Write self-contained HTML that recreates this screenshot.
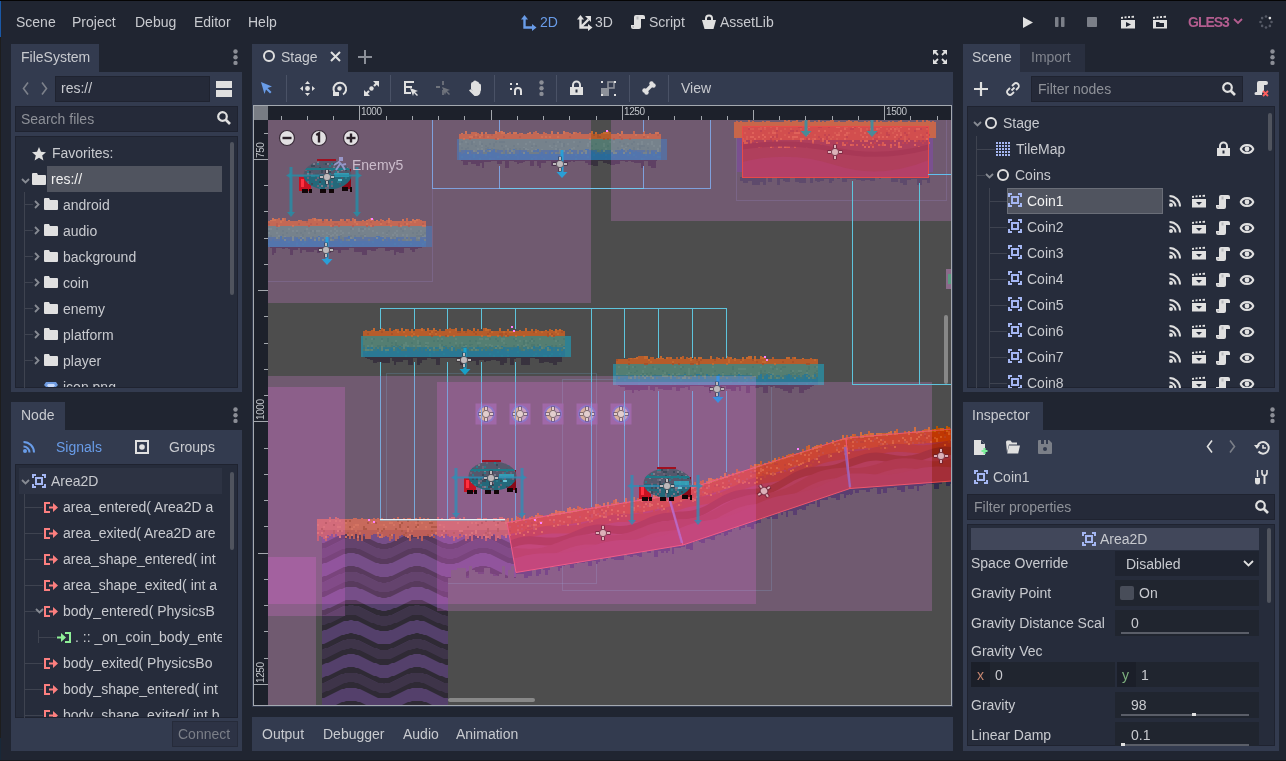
<!DOCTYPE html>
<html><head><meta charset="utf-8">
<style>
*{margin:0;padding:0;box-sizing:border-box}
html,body{width:1286px;height:761px;overflow:hidden;background:#202531;font-family:"Liberation Sans",sans-serif;font-size:14px;color:#c8cacf}
.a{position:absolute}
.t{position:absolute;line-height:14px;white-space:nowrap;will-change:transform}
.clip{position:absolute;overflow:hidden}
.clip .t{}
svg{position:absolute;overflow:visible}
</style></head><body>
<div class="a" style="left:0px;top:0px;width:1286px;height:1px;background:#050505;"></div>
<div class="a" style="left:0px;top:1px;width:1px;height:760px;background:#1d1d1d;"></div>
<div class="a" style="left:0px;top:1px;width:1px;height:36px;background:#1a58a6;"></div>
<div class="a" style="left:0px;top:738px;width:1px;height:23px;background:#182838;"></div>
<div class="a" style="left:0px;top:760px;width:1286px;height:1px;background:#17191e;"></div>
<div class="t" style="left:16px;top:15px;">Scene</div>
<div class="t" style="left:72px;top:15px;">Project</div>
<div class="t" style="left:135px;top:15px;">Debug</div>
<div class="t" style="left:194px;top:15px;">Editor</div>
<div class="t" style="left:248px;top:15px;">Help</div>
<svg style="left:521px;top:15px" width="16" height="15" viewBox="0 0 16 15"><path d="M3.5 3v9.5h9" fill="none" stroke="#699ce8" stroke-width="2.4"/><polygon points="0,4.5 3.5,0 7,4.5" fill="#699ce8"/><polygon points="11,9 15.5,12.5 11,16" fill="#699ce8"/></svg>
<div class="t" style="left:540px;top:15px;color:#699ce8;">2D</div>
<svg style="left:577px;top:15px" width="16" height="15" viewBox="0 0 16 15"><path d="M3.5 3v9.5h9M3.5 12.5l8-8" fill="none" stroke="#e0e0e0" stroke-width="2.4"/><polygon points="0,4.5 3.5,0 7,4.5" fill="#e0e0e0"/><polygon points="11,9 15.5,12.5 11,16" fill="#e0e0e0"/><polygon points="8,1 14,1 14,7" fill="#e0e0e0"/></svg>
<div class="t" style="left:595px;top:15px;">3D</div>
<svg style="left:631px;top:15px" width="14" height="14" viewBox="0 0 14 14"><path d="M5 0H12A2 2 0 0 1 14 2V4H10V12A2 2 0 0 1 8 14H2A2 2 0 0 1 0 12V10H3V2A2 2 0 0 1 5 0Z" fill="#e0e0e0"/><path d="M5.5 1.5h2v3h-2z" fill="#9a9ca2" opacity="0.6"/><path d="M1 11h2v2h-1z" fill="#9a9ca2" opacity="0.5"/></svg>
<div class="t" style="left:649px;top:15px;">Script</div>
<svg style="left:702px;top:15px" width="14" height="14" viewBox="0 0 14 14"><path d="M4 5v-1.5a3 3 0 0 1 6 0v1.5" fill="none" stroke="#e0e0e0" stroke-width="2"/><path d="M0 5h14l-2.5 9h-9z" fill="#e0e0e0"/></svg>
<div class="t" style="left:720px;top:15px;">AssetLib</div>
<svg style="left:1023px;top:17px" width="10" height="11" viewBox="0 0 10 11"><polygon points="0,0 10,5.5 0,11" fill="#e0e0e0"/></svg>
<svg style="left:1055px;top:17px" width="10" height="10" viewBox="0 0 10 10"><rect x="0" y="0" width="3.5" height="10" rx="0.8" fill="#7b7f88"/><rect x="6" y="0" width="3.5" height="10" rx="0.8" fill="#7b7f88"/></svg>
<svg style="left:1087px;top:17px" width="10" height="10" viewBox="0 0 10 10"><rect x="0" y="0" width="10" height="10" rx="0.8" fill="#7b7f88"/></svg>
<svg style="left:1121px;top:16px" width="15" height="13" viewBox="0 0 15 13"><path d="M0 1l2-0.3v2h-2zM3.5 0.5l2-0.3v2h-2zM7 0.2l2-0.2v2h-2zM10.5 0l2.5-0.2v2h-2.5z" fill="#e0e0e0"/><path d="M0 4h14v8.5h-14z" fill="#e0e0e0"/><polygon points="5,6 10,8.5 5,11" fill="#202531"/></svg>
<svg style="left:1153px;top:16px" width="15" height="13" viewBox="0 0 15 13"><path d="M0 1l2-0.3v2h-2zM3.5 0.5l2-0.3v2h-2zM7 0.2l2-0.2v2h-2zM10.5 0l2.5-0.2v2h-2.5z" fill="#e0e0e0"/><path d="M0 4h14v8.5h-14z" fill="#e0e0e0"/><path d="M3 6h3l1 1h4v4h-8z" fill="#202531"/></svg>
<div class="t" style="left:1188px;top:15px;color:#b35d8f;font-weight:bold;letter-spacing:-1px">GLES3</div>
<svg style="left:1233px;top:18px" width="10" height="6" viewBox="0 0 10 6"><polyline points="1,1 5,5 9,1" fill="none" stroke="#b35d8f" stroke-width="1.8"/></svg>
<svg style="left:1259px;top:15px" width="14" height="14" viewBox="0 0 14 14"><circle cx="12.5" cy="7.0" r="1.3" fill="#555a66"/><circle cx="10.890635480419599" cy="10.887538496079513" r="1.3" fill="#555a66"/><circle cx="7.004379796909033" cy="12.49999825612509" r="1.3" fill="#555a66"/><circle cx="3.1155609534899713" cy="10.893729997566377" r="1.3" fill="#555a66"/><circle cx="1.5000069754985326" cy="7.008759591040677" r="1.3" fill="#555a66"/><circle cx="3.1031779544424998" cy="3.118662866323378" r="1.3" fill="#555a66"/><circle cx="6.986860620382451" cy="1.5000156948675514" r="1.3" fill="#555a66"/><circle cx="10.878232759546325" cy="3.1000883775678076" r="1.3" fill="#e0e0e0"/></svg>
<div class="a" style="left:11px;top:44px;width:88px;height:28px;background:#333b4f;"></div>
<div class="t" style="left:21px;top:50px;">FileSystem</div>
<svg style="left:233px;top:49px" width="5" height="16" viewBox="0 0 5 16"><circle cx="2.5" cy="2.5" r="2.2" fill="#8b8e96"/><circle cx="2.5" cy="8.2" r="2.2" fill="#8b8e96"/><circle cx="2.5" cy="13.9" r="2.2" fill="#8b8e96"/></svg>
<div class="a" style="left:11px;top:72px;width:231px;height:320px;background:#333b4f;"></div>
<svg style="left:22px;top:82px" width="7" height="13" viewBox="0 0 7 13"><polyline points="6,0.5 1.5,6.5 6,12.5" fill="none" stroke="#7d818b" stroke-width="1.6"/></svg>
<svg style="left:41px;top:82px" width="7" height="13" viewBox="0 0 7 13"><polyline points="1,0.5 5.5,6.5 1,12.5" fill="none" stroke="#7d818b" stroke-width="1.6"/></svg>
<div class="a" style="left:55px;top:76px;width:155px;height:26px;background:#252a39;border:1px solid #1f2330"></div>
<div class="t" style="left:61px;top:81px;">res://</div>
<svg style="left:216px;top:81px" width="16" height="16" viewBox="0 0 16 16"><rect x="0" y="0" width="16" height="7" fill="#e0e0e0"/><rect x="0" y="9" width="16" height="7" fill="#e0e0e0"/></svg>
<div class="a" style="left:15px;top:106px;width:223px;height:26px;background:#252a39;border:1px solid #1f2330"></div>
<div class="t" style="left:21px;top:112px;color:#8e9198;">Search files</div>
<svg style="left:217px;top:111px" width="14" height="14" viewBox="0 0 14 14"><circle cx="5.5" cy="5.5" r="4.3" fill="none" stroke="#e0e0e0" stroke-width="2.2"/><path d="M8.5 8.5l4.5 4.5" stroke="#e0e0e0" stroke-width="2.6"/></svg>
<div class="a" style="left:15px;top:136px;width:223px;height:252px;background:#262c3b;border:1px solid #1f2330"></div>
<div class="a" style="left:230px;top:142px;width:4px;height:153px;background:#50545e;border-radius:2px"></div>
<div class="a" style="left:24px;top:192px;width:1px;height:196px;background:#3e4350;"></div>
<div class="a" style="left:25px;top:204px;width:8px;height:1px;background:#3e4350;"></div>
<div class="a" style="left:25px;top:230px;width:8px;height:1px;background:#3e4350;"></div>
<div class="a" style="left:25px;top:256px;width:8px;height:1px;background:#3e4350;"></div>
<div class="a" style="left:25px;top:282px;width:8px;height:1px;background:#3e4350;"></div>
<div class="a" style="left:25px;top:308px;width:8px;height:1px;background:#3e4350;"></div>
<div class="a" style="left:25px;top:334px;width:8px;height:1px;background:#3e4350;"></div>
<div class="a" style="left:25px;top:360px;width:8px;height:1px;background:#3e4350;"></div>
<div class="a" style="left:47px;top:166px;width:175px;height:26px;background:#50545f;"></div>
<svg style="left:32px;top:147px" width="14" height="14" viewBox="0 0 14 14"><polygon points="7,0 9,4.8 14,5.2 10.2,8.4 11.4,13.5 7,10.8 2.6,13.5 3.8,8.4 0,5.2 5,4.8" fill="#e0e0e0"/></svg>
<div class="t" style="left:52px;top:146px;">Favorites:</div>
<svg style="left:21px;top:178px" width="9" height="6" viewBox="0 0 9 6"><polyline points="1,1 4.5,4.5 8,1" fill="none" stroke="#878b93" stroke-width="1.8"/></svg>
<svg style="left:32px;top:173px" width="14" height="12" viewBox="0 0 14 12"><path d="M0 1a1 1 0 0 1 1-1h4l1 2h7a1 1 0 0 1 1 1v8a1 1 0 0 1-1 1h-12a1 1 0 0 1-1-1z" fill="#e0e0e0"/></svg>
<div class="t" style="left:51px;top:172px;color:#f0f0f0;">res://</div>
<svg style="left:34px;top:200px" width="6" height="9" viewBox="0 0 6 9"><polyline points="1,1 4.5,4.5 1,8" fill="none" stroke="#878b93" stroke-width="1.8"/></svg>
<svg style="left:44px;top:198px" width="14" height="12" viewBox="0 0 14 12"><path d="M0 1a1 1 0 0 1 1-1h4l1 2h7a1 1 0 0 1 1 1v8a1 1 0 0 1-1 1h-12a1 1 0 0 1-1-1z" fill="#e0e0e0"/></svg>
<div class="t" style="left:63px;top:198px;">android</div>
<svg style="left:34px;top:226px" width="6" height="9" viewBox="0 0 6 9"><polyline points="1,1 4.5,4.5 1,8" fill="none" stroke="#878b93" stroke-width="1.8"/></svg>
<svg style="left:44px;top:224px" width="14" height="12" viewBox="0 0 14 12"><path d="M0 1a1 1 0 0 1 1-1h4l1 2h7a1 1 0 0 1 1 1v8a1 1 0 0 1-1 1h-12a1 1 0 0 1-1-1z" fill="#e0e0e0"/></svg>
<div class="t" style="left:63px;top:224px;">audio</div>
<svg style="left:34px;top:252px" width="6" height="9" viewBox="0 0 6 9"><polyline points="1,1 4.5,4.5 1,8" fill="none" stroke="#878b93" stroke-width="1.8"/></svg>
<svg style="left:44px;top:250px" width="14" height="12" viewBox="0 0 14 12"><path d="M0 1a1 1 0 0 1 1-1h4l1 2h7a1 1 0 0 1 1 1v8a1 1 0 0 1-1 1h-12a1 1 0 0 1-1-1z" fill="#e0e0e0"/></svg>
<div class="t" style="left:63px;top:250px;">background</div>
<svg style="left:34px;top:278px" width="6" height="9" viewBox="0 0 6 9"><polyline points="1,1 4.5,4.5 1,8" fill="none" stroke="#878b93" stroke-width="1.8"/></svg>
<svg style="left:44px;top:276px" width="14" height="12" viewBox="0 0 14 12"><path d="M0 1a1 1 0 0 1 1-1h4l1 2h7a1 1 0 0 1 1 1v8a1 1 0 0 1-1 1h-12a1 1 0 0 1-1-1z" fill="#e0e0e0"/></svg>
<div class="t" style="left:63px;top:276px;">coin</div>
<svg style="left:34px;top:304px" width="6" height="9" viewBox="0 0 6 9"><polyline points="1,1 4.5,4.5 1,8" fill="none" stroke="#878b93" stroke-width="1.8"/></svg>
<svg style="left:44px;top:302px" width="14" height="12" viewBox="0 0 14 12"><path d="M0 1a1 1 0 0 1 1-1h4l1 2h7a1 1 0 0 1 1 1v8a1 1 0 0 1-1 1h-12a1 1 0 0 1-1-1z" fill="#e0e0e0"/></svg>
<div class="t" style="left:63px;top:302px;">enemy</div>
<svg style="left:34px;top:330px" width="6" height="9" viewBox="0 0 6 9"><polyline points="1,1 4.5,4.5 1,8" fill="none" stroke="#878b93" stroke-width="1.8"/></svg>
<svg style="left:44px;top:328px" width="14" height="12" viewBox="0 0 14 12"><path d="M0 1a1 1 0 0 1 1-1h4l1 2h7a1 1 0 0 1 1 1v8a1 1 0 0 1-1 1h-12a1 1 0 0 1-1-1z" fill="#e0e0e0"/></svg>
<div class="t" style="left:63px;top:328px;">platform</div>
<svg style="left:34px;top:356px" width="6" height="9" viewBox="0 0 6 9"><polyline points="1,1 4.5,4.5 1,8" fill="none" stroke="#878b93" stroke-width="1.8"/></svg>
<svg style="left:44px;top:354px" width="14" height="12" viewBox="0 0 14 12"><path d="M0 1a1 1 0 0 1 1-1h4l1 2h7a1 1 0 0 1 1 1v8a1 1 0 0 1-1 1h-12a1 1 0 0 1-1-1z" fill="#e0e0e0"/></svg>
<div class="t" style="left:63px;top:354px;">player</div>
<div class="clip" style="left:16px;top:137px;width:214px;height:250px">
<svg style="left:28px;top:243px" width="14" height="12" viewBox="0 0 14 12"><path d="M2 2h10l2 3-7 7-7-7z" fill="#6f9be0"/><path d="M4 4h6l1 1.5-4 4-4-4z" fill="#c9dafa"/></svg>
<div class="t" style="left:47px;top:243px">icon.png</div>
</div>
<div class="a" style="left:11px;top:402px;width:54px;height:28px;background:#333b4f;"></div>
<div class="t" style="left:21px;top:408px;">Node</div>
<svg style="left:233px;top:407px" width="5" height="16" viewBox="0 0 5 16"><circle cx="2.5" cy="2.5" r="2.2" fill="#8b8e96"/><circle cx="2.5" cy="8.2" r="2.2" fill="#8b8e96"/><circle cx="2.5" cy="13.9" r="2.2" fill="#8b8e96"/></svg>
<div class="a" style="left:11px;top:430px;width:231px;height:321px;background:#333b4f;"></div>
<svg style="left:23px;top:441px" width="12" height="12" viewBox="0 0 12 12"><circle cx="2" cy="10" r="2" fill="#699ce8"/><path d="M0.5 5.5a6 6 0 0 1 6 6" fill="none" stroke="#699ce8" stroke-width="2"/><path d="M0.5 1a10.5 10.5 0 0 1 10.5 10.5" fill="none" stroke="#699ce8" stroke-width="2"/></svg>
<div class="t" style="left:56px;top:440px;color:#699ce8;">Signals</div>
<svg style="left:135px;top:440px" width="14" height="14" viewBox="0 0 14 14"><rect x="1" y="1" width="12" height="12" fill="none" stroke="#e0e0e0" stroke-width="2"/><circle cx="7" cy="7" r="2.8" fill="#e0e0e0"/></svg>
<div class="t" style="left:169px;top:440px;">Groups</div>
<div class="a" style="left:15px;top:464px;width:223px;height:254px;background:#262c3b;border:1px solid #1f2330"></div>
<div class="a" style="left:230px;top:472px;width:4px;height:78px;background:#50545e;border-radius:2px"></div>
<div class="a" style="left:19px;top:468px;width:203px;height:26px;background:#2d3343;"></div>
<svg style="left:21px;top:479px" width="9" height="6" viewBox="0 0 9 6"><polyline points="1,1 4.5,4.5 8,1" fill="none" stroke="#878b93" stroke-width="1.8"/></svg>
<svg style="left:32px;top:474px" width="14" height="14" viewBox="0 0 14 14"><path d="M0 0h4v2h-2v2h-2zM10 0h4v4h-2v-2h-2zM0 10h2v2h2v2h-4zM12 10h2v4h-4v-2h2z" fill="#a5b7f3"/><rect x="4" y="4" width="6" height="6" fill="none" stroke="#a5b7f3" stroke-width="2"/></svg>
<div class="t" style="left:51px;top:474px;">Area2D</div>
<div class="a" style="left:24px;top:494px;width:1px;height:224px;background:#3e4350;"></div>
<div class="clip" style="left:16px;top:465px;width:206px;height:252px">
<div class="a" style="left:9px;top:42px;width:18px;height:1px;background:#3e4350"></div>
<svg style="left:28px;top:37px" width="14" height="11" viewBox="0 0 14 11"><path d="M0 0h6v2h-4v7h4v2h-6z" fill="#fc7f7f"/><path d="M5 4.5h4v-3.5l5 4.5l-5 4.5v-3.5h-4z" fill="#fc7f7f"/></svg>
<div class="t" style="left:47px;top:35px">area_entered( Area2D a</div>
<div class="a" style="left:9px;top:68px;width:18px;height:1px;background:#3e4350"></div>
<svg style="left:28px;top:63px" width="14" height="11" viewBox="0 0 14 11"><path d="M0 0h6v2h-4v7h4v2h-6z" fill="#fc7f7f"/><path d="M5 4.5h4v-3.5l5 4.5l-5 4.5v-3.5h-4z" fill="#fc7f7f"/></svg>
<div class="t" style="left:47px;top:61px">area_exited( Area2D are</div>
<div class="a" style="left:9px;top:94px;width:18px;height:1px;background:#3e4350"></div>
<svg style="left:28px;top:89px" width="14" height="11" viewBox="0 0 14 11"><path d="M0 0h6v2h-4v7h4v2h-6z" fill="#fc7f7f"/><path d="M5 4.5h4v-3.5l5 4.5l-5 4.5v-3.5h-4z" fill="#fc7f7f"/></svg>
<div class="t" style="left:47px;top:87px">area_shape_entered( int</div>
<div class="a" style="left:9px;top:120px;width:18px;height:1px;background:#3e4350"></div>
<svg style="left:28px;top:115px" width="14" height="11" viewBox="0 0 14 11"><path d="M0 0h6v2h-4v7h4v2h-6z" fill="#fc7f7f"/><path d="M5 4.5h4v-3.5l5 4.5l-5 4.5v-3.5h-4z" fill="#fc7f7f"/></svg>
<div class="t" style="left:47px;top:113px">area_shape_exited( int a</div>
<div class="a" style="left:9px;top:146px;width:18px;height:1px;background:#3e4350"></div>
<svg style="left:19px;top:143px" width="9" height="6" viewBox="0 0 9 6"><polyline points="1,1 4.5,4.5 8,1" fill="none" stroke="#878b93" stroke-width="1.8"/></svg>
<svg style="left:28px;top:141px" width="14" height="11" viewBox="0 0 14 11"><path d="M0 0h6v2h-4v7h4v2h-6z" fill="#fc7f7f"/><path d="M5 4.5h4v-3.5l5 4.5l-5 4.5v-3.5h-4z" fill="#fc7f7f"/></svg>
<div class="t" style="left:47px;top:139px">body_entered( PhysicsB</div>
<div class="a" style="left:22px;top:165px;width:1px;height:13px;background:#3e4350"></div>
<div class="a" style="left:22px;top:172px;width:18px;height:1px;background:#3e4350"></div>
<svg style="left:41px;top:167px" width="14" height="11" viewBox="0 0 14 11"><path d="M8 0h6v11h-6v-2h4v-7h-4z" fill="#8eef97"/><path d="M0 4.5h4v-3.5l5 4.5l-5 4.5v-3.5h-4z" fill="#8eef97"/></svg>
<div class="t" style="left:59px;top:165px">. :: _on_coin_body_ente</div>
<div class="a" style="left:9px;top:198px;width:18px;height:1px;background:#3e4350"></div>
<svg style="left:28px;top:193px" width="14" height="11" viewBox="0 0 14 11"><path d="M0 0h6v2h-4v7h4v2h-6z" fill="#fc7f7f"/><path d="M5 4.5h4v-3.5l5 4.5l-5 4.5v-3.5h-4z" fill="#fc7f7f"/></svg>
<div class="t" style="left:47px;top:191px">body_exited( PhysicsBo</div>
<div class="a" style="left:9px;top:224px;width:18px;height:1px;background:#3e4350"></div>
<svg style="left:28px;top:219px" width="14" height="11" viewBox="0 0 14 11"><path d="M0 0h6v2h-4v7h4v2h-6z" fill="#fc7f7f"/><path d="M5 4.5h4v-3.5l5 4.5l-5 4.5v-3.5h-4z" fill="#fc7f7f"/></svg>
<div class="t" style="left:47px;top:217px">body_shape_entered( int</div>
<div class="a" style="left:9px;top:250px;width:18px;height:1px;background:#3e4350"></div>
<svg style="left:28px;top:245px" width="14" height="11" viewBox="0 0 14 11"><path d="M0 0h6v2h-4v7h4v2h-6z" fill="#fc7f7f"/><path d="M5 4.5h4v-3.5l5 4.5l-5 4.5v-3.5h-4z" fill="#fc7f7f"/></svg>
<div class="t" style="left:47px;top:243px">body_shape_exited( int b</div>
</div>
<div class="a" style="left:172px;top:721px;width:66px;height:26px;background:#2d3345;border:1px solid #262b3a"></div>
<div class="t" style="left:178px;top:727px;color:#7b7f88;">Connect</div>
<div class="a" style="left:252px;top:44px;width:96px;height:28px;background:#333b4f;"></div>
<svg style="left:263px;top:50px" width="12" height="12" viewBox="0 0 12 12"><circle cx="6.0" cy="6.0" r="5.0" fill="none" stroke="#e0e0e0" stroke-width="2"/></svg>
<div class="t" style="left:281px;top:50px;">Stage</div>
<svg style="left:330px;top:51px" width="11" height="11" viewBox="0 0 11 11"><path d="M1 1l9 9M10 1l-9 9" stroke="#e0e0e0" stroke-width="2"/></svg>
<svg style="left:358px;top:50px" width="14" height="14" viewBox="0 0 14 14"><path d="M7.0 0v14M0 7.0h14" stroke="#8b8f98" stroke-width="2"/></svg>
<svg style="left:933px;top:50px" width="14" height="14" viewBox="0 0 14 14"><path d="M1 1l4 4M13 1l-4 4M1 13l4-4M13 13l-4-4" stroke="#e0e0e0" stroke-width="1.8"/><path d="M0 0h5l-5 5zM14 0v5l-5-5zM0 14v-5l5 5zM14 14h-5l5-5z" fill="#e0e0e0"/></svg>
<div class="a" style="left:252px;top:72px;width:701px;height:635px;background:#333b4f;"></div>
<svg style="left:261px;top:82px" width="12" height="12" viewBox="0 0 12 12"><polygon points="0,0 11,4.5 6.5,6 10.5,10 9,11.5 5,7.5 3.5,12" fill="#699ce8"/></svg>
<div class="a" style="left:286px;top:75px;width:1px;height:27px;background:#4a5266;"></div>
<div class="a" style="left:390px;top:75px;width:1px;height:27px;background:#4a5266;"></div>
<div class="a" style="left:494px;top:75px;width:1px;height:27px;background:#4a5266;"></div>
<div class="a" style="left:556px;top:75px;width:1px;height:27px;background:#4a5266;"></div>
<div class="a" style="left:629px;top:75px;width:1px;height:27px;background:#4a5266;"></div>
<div class="a" style="left:668px;top:75px;width:1px;height:27px;background:#4a5266;"></div>
<svg style="left:300px;top:81px" width="15" height="15" viewBox="0 0 15 15"><circle cx="7.5" cy="7.5" r="2.4" fill="#e0e0e0"/><polygon points="7.5,0 10,3 5,3" fill="#e0e0e0"/><polygon points="7.5,15 10,12 5,12" fill="#e0e0e0"/><polygon points="0,7.5 3,5 3,10" fill="#e0e0e0"/><polygon points="15,7.5 12,5 12,10" fill="#e0e0e0"/></svg>
<svg style="left:332px;top:81px" width="15" height="15" viewBox="0 0 15 15"><path d="M4.2 13.2A6.3 6.3 0 1 1 11 13.5" fill="none" stroke="#e0e0e0" stroke-width="2"/><circle cx="7.5" cy="7.5" r="2.2" fill="#e0e0e0"/><polygon points="1,11 7,11 7,15 1,15" fill="#e0e0e0"/></svg>
<svg style="left:364px;top:81px" width="15" height="15" viewBox="0 0 15 15"><polygon points="9,0 15,0 15,6" fill="#e0e0e0"/><polygon points="0,9 0,15 6,15" fill="#e0e0e0"/><path d="M13 2l-3 3M2 13l3-3" stroke="#e0e0e0" stroke-width="2.2"/><circle cx="7.5" cy="7.5" r="2.2" fill="#e0e0e0"/></svg>
<svg style="left:404px;top:81px" width="15" height="15" viewBox="0 0 15 15"><path d="M0 0h10v2h-8v3h6v2h-6v4h5v2h-7z" fill="#e0e0e0"/><polygon points="6,7 14,10 11,11 14,14 13,15 10,12 9,15" fill="#e0e0e0"/></svg>
<svg style="left:436px;top:81px" width="15" height="15" viewBox="0 0 15 15"><path d="M7 0v4M0 6h4M7 9v5" stroke="#6f737c" stroke-width="1.8"/><polygon points="6,6 14,9 11,10 14,13 13,14 10,11 9,14" fill="#6f737c"/></svg>
<svg style="left:468px;top:81px" width="14" height="15" viewBox="0 0 14 15"><path d="M4 8V3a1 1 0 0 1 2 0v5M6 7V1.5a1 1 0 0 1 2 0V7M8 7V2.5a1 1 0 0 1 2 0V7.5M10 8V4.5a1 1 0 0 1 2 0V9" stroke="#e0e0e0" stroke-width="2" fill="none" stroke-linecap="round"/><path d="M3 7h9.5v3.5a4.5 4.5 0 0 1-4.5 4.5h-1.5l-5.5-5.5 1.2-1.2 2.3 1.2z" fill="#e0e0e0"/></svg>
<svg style="left:510px;top:83px" width="13" height="12" viewBox="0 0 13 12"><rect x="0" y="0" width="2" height="2" fill="#e0e0e0"/><rect x="6" y="0" width="2" height="2" fill="#e0e0e0"/><rect x="0" y="5" width="2" height="2" fill="#e0e0e0"/><path d="M5 12v-4a3 3 0 0 1 6 0v4" fill="none" stroke="#e0e0e0" stroke-width="2"/></svg>
<svg style="left:539px;top:80px" width="5" height="16" viewBox="0 0 5 16"><circle cx="2.5" cy="2.5" r="2.2" fill="#8b8e96"/><circle cx="2.5" cy="8.2" r="2.2" fill="#8b8e96"/><circle cx="2.5" cy="13.9" r="2.2" fill="#8b8e96"/></svg>
<svg style="left:570px;top:81px" width="13" height="14" viewBox="0 0 13 14"><path d="M3 6.5v-2.5a3.5 3.5 0 0 1 7 0v2.5" fill="none" stroke="#e0e0e0" stroke-width="2"/><path d="M0 6h13v8h-13z" fill="#e0e0e0"/><rect x="5.5" y="8.5" width="2" height="3" fill="#262c3b"/></svg>
<svg style="left:601px;top:81px" width="15" height="15" viewBox="0 0 15 15"><rect x="0" y="7" width="8" height="8" fill="#8e929a"/><rect x="7" y="1" width="6" height="6" fill="none" stroke="#8e929a" stroke-width="1.6"/><rect x="0" y="0" width="2" height="2" fill="#e0e0e0"/><rect x="13" y="0" width="2" height="2" fill="#e0e0e0"/><rect x="0" y="13" width="2" height="2" fill="#e0e0e0"/><rect x="13" y="13" width="2" height="2" fill="#e0e0e0"/></svg>
<svg style="left:642px;top:81px" width="14" height="14" viewBox="0 0 14 14"><path d="M3.5 10.5l7-7" stroke="#e0e0e0" stroke-width="3.2"/><circle cx="2.5" cy="9.5" r="2.2" fill="#e0e0e0"/><circle cx="4.5" cy="11.5" r="2.2" fill="#e0e0e0"/><circle cx="9.5" cy="2.5" r="2.2" fill="#e0e0e0"/><circle cx="11.5" cy="4.5" r="2.2" fill="#e0e0e0"/></svg>
<div class="t" style="left:681px;top:81px;">View</div>
<div id="vp" class="a" style="left:253px;top:105px;width:699px;height:601px;background:#4d4d4d;overflow:hidden;isolation:isolate"><div class="a" style="left:-253px;top:-105px;width:1286px;height:761px">
<div class="a" style="left:253px;top:105px;width:699px;height:601px;background:#4d4d4d;"></div>
<div class="a" style="left:250px;top:100px;width:183px;height:182px;border:1px solid rgba(120,120,170,0.3)"></div>
<div class="a" style="left:736px;top:100px;width:211px;height:101px;border:1px solid rgba(120,120,170,0.3)"></div>
<div class="a" style="left:386px;top:373px;width:211px;height:211px;border:1px solid rgba(100,150,180,0.3)"></div>
<div class="a" style="left:562px;top:379px;width:210px;height:212px;border:1px solid rgba(100,150,180,0.3)"></div>
<svg style="left:320px;top:520px;" width="200" height="190" viewBox="320 520 200 190"><clipPath id="dall"><polygon points="322.0,530.0 516.0,530.0 517.0,578.0 514.0,578.0 514.0,566.0 511.0,566.0 511.0,570.0 508.0,570.0 508.0,578.0 505.0,578.0 505.0,566.0 502.0,566.0 502.0,574.0 499.0,574.0 499.0,576.0 496.0,576.0 496.0,576.0 493.0,576.0 493.0,574.0 490.0,574.0 490.0,568.0 487.0,568.0 487.0,568.0 484.0,568.0 484.0,574.0 481.0,574.0 481.0,574.0 478.0,574.0 478.0,572.0 475.0,572.0 475.0,570.0 472.0,570.0 472.0,566.0 469.0,566.0 469.0,578.0 466.0,578.0 466.0,568.0 463.0,568.0 463.0,568.0 460.0,568.0 460.0,568.0 457.0,568.0 457.0,570.0 454.0,570.0 454.0,570.0 451.0,570.0 451.0,578.0 448.0,578.0 448.0,706.0 322.0,706.0"/></clipPath><g clip-path="url(#dall)"><rect x="322" y="520" width="194" height="200" fill="#54406b"/><polygon points="322.0,510.0 324.0,509.0 326.0,508.0 328.0,508.0 330.0,507.0 332.0,506.0 334.0,505.0 336.0,504.0 338.0,503.0 340.0,502.0 342.0,501.0 344.0,500.0 346.0,500.0 348.0,499.0 350.0,499.0 352.0,499.0 354.0,499.0 356.0,500.0 358.0,500.0 360.0,501.0 362.0,502.0 364.0,503.0 366.0,504.0 368.0,505.0 370.0,506.0 372.0,507.0 374.0,508.0 376.0,508.0 378.0,509.0 380.0,510.0 382.0,510.0 384.0,510.0 386.0,510.0 388.0,510.0 390.0,509.0 392.0,508.0 394.0,508.0 396.0,507.0 398.0,506.0 400.0,505.0 402.0,504.0 404.0,503.0 406.0,502.0 408.0,501.0 410.0,500.0 412.0,500.0 414.0,499.0 416.0,499.0 418.0,499.0 420.0,499.0 422.0,500.0 424.0,500.0 426.0,501.0 428.0,502.0 430.0,503.0 432.0,504.0 434.0,505.0 436.0,506.0 438.0,507.0 440.0,508.0 442.0,508.0 444.0,509.0 446.0,510.0 448.0,510.0 450.0,510.0 452.0,510.0 454.0,510.0 456.0,509.0 458.0,508.0 460.0,508.0 462.0,507.0 464.0,506.0 466.0,505.0 468.0,504.0 470.0,503.0 472.0,502.0 474.0,501.0 476.0,500.0 478.0,500.0 480.0,499.0 482.0,499.0 484.0,499.0 486.0,499.0 488.0,500.0 490.0,500.0 492.0,501.0 494.0,502.0 496.0,503.0 498.0,504.0 500.0,505.0 502.0,506.0 504.0,507.0 506.0,508.0 508.0,508.0 510.0,509.0 512.0,510.0 514.0,510.0 516.0,510.0 516.0,516.0 514.0,515.0 512.0,515.0 510.0,515.0 508.0,514.0 506.0,513.0 504.0,512.0 502.0,511.0 500.0,510.0 498.0,509.0 496.0,508.0 494.0,507.0 492.0,506.0 490.0,506.0 488.0,505.0 486.0,505.0 484.0,505.0 482.0,505.0 480.0,505.0 478.0,505.0 476.0,506.0 474.0,506.0 472.0,507.0 470.0,508.0 468.0,509.0 466.0,510.0 464.0,511.0 462.0,512.0 460.0,513.0 458.0,514.0 456.0,515.0 454.0,515.0 452.0,515.0 450.0,516.0 448.0,515.0 446.0,515.0 444.0,515.0 442.0,514.0 440.0,513.0 438.0,512.0 436.0,511.0 434.0,510.0 432.0,509.0 430.0,508.0 428.0,507.0 426.0,506.0 424.0,506.0 422.0,505.0 420.0,505.0 418.0,505.0 416.0,505.0 414.0,505.0 412.0,505.0 410.0,506.0 408.0,506.0 406.0,507.0 404.0,508.0 402.0,509.0 400.0,510.0 398.0,511.0 396.0,512.0 394.0,513.0 392.0,514.0 390.0,515.0 388.0,515.0 386.0,515.0 384.0,516.0 382.0,515.0 380.0,515.0 378.0,515.0 376.0,514.0 374.0,513.0 372.0,512.0 370.0,511.0 368.0,510.0 366.0,509.0 364.0,508.0 362.0,507.0 360.0,506.0 358.0,506.0 356.0,505.0 354.0,505.0 352.0,505.0 350.0,505.0 348.0,505.0 346.0,505.0 344.0,506.0 342.0,506.0 340.0,507.0 338.0,508.0 336.0,509.0 334.0,510.0 332.0,511.0 330.0,512.0 328.0,513.0 326.0,514.0 324.0,515.0 322.0,515.0" fill="#2f2a35"/><polygon points="322.0,515.0 324.0,515.0 326.0,514.0 328.0,513.0 330.0,512.0 332.0,511.0 334.0,510.0 336.0,509.0 338.0,508.0 340.0,507.0 342.0,506.0 344.0,506.0 346.0,505.0 348.0,505.0 350.0,505.0 352.0,505.0 354.0,505.0 356.0,505.0 358.0,506.0 360.0,506.0 362.0,507.0 364.0,508.0 366.0,509.0 368.0,510.0 370.0,511.0 372.0,512.0 374.0,513.0 376.0,514.0 378.0,515.0 380.0,515.0 382.0,515.0 384.0,516.0 386.0,515.0 388.0,515.0 390.0,515.0 392.0,514.0 394.0,513.0 396.0,512.0 398.0,511.0 400.0,510.0 402.0,509.0 404.0,508.0 406.0,507.0 408.0,506.0 410.0,506.0 412.0,505.0 414.0,505.0 416.0,505.0 418.0,505.0 420.0,505.0 422.0,505.0 424.0,506.0 426.0,506.0 428.0,507.0 430.0,508.0 432.0,509.0 434.0,510.0 436.0,511.0 438.0,512.0 440.0,513.0 442.0,514.0 444.0,515.0 446.0,515.0 448.0,515.0 450.0,516.0 452.0,515.0 454.0,515.0 456.0,515.0 458.0,514.0 460.0,513.0 462.0,512.0 464.0,511.0 466.0,510.0 468.0,509.0 470.0,508.0 472.0,507.0 474.0,506.0 476.0,506.0 478.0,505.0 480.0,505.0 482.0,505.0 484.0,505.0 486.0,505.0 488.0,505.0 490.0,506.0 492.0,506.0 494.0,507.0 496.0,508.0 498.0,509.0 500.0,510.0 502.0,511.0 504.0,512.0 506.0,513.0 508.0,514.0 510.0,515.0 512.0,515.0 514.0,515.0 516.0,516.0 516.0,525.0 514.0,525.0 512.0,525.0 510.0,524.0 508.0,523.0 506.0,523.0 504.0,522.0 502.0,521.0 500.0,520.0 498.0,519.0 496.0,518.0 494.0,517.0 492.0,516.0 490.0,515.0 488.0,515.0 486.0,514.0 484.0,514.0 482.0,514.0 480.0,514.0 478.0,515.0 476.0,515.0 474.0,516.0 472.0,517.0 470.0,518.0 468.0,519.0 466.0,520.0 464.0,521.0 462.0,522.0 460.0,523.0 458.0,523.0 456.0,524.0 454.0,525.0 452.0,525.0 450.0,525.0 448.0,525.0 446.0,525.0 444.0,524.0 442.0,523.0 440.0,523.0 438.0,522.0 436.0,521.0 434.0,520.0 432.0,519.0 430.0,518.0 428.0,517.0 426.0,516.0 424.0,515.0 422.0,515.0 420.0,514.0 418.0,514.0 416.0,514.0 414.0,514.0 412.0,515.0 410.0,515.0 408.0,516.0 406.0,517.0 404.0,518.0 402.0,519.0 400.0,520.0 398.0,521.0 396.0,522.0 394.0,523.0 392.0,523.0 390.0,524.0 388.0,525.0 386.0,525.0 384.0,525.0 382.0,525.0 380.0,525.0 378.0,524.0 376.0,523.0 374.0,523.0 372.0,522.0 370.0,521.0 368.0,520.0 366.0,519.0 364.0,518.0 362.0,517.0 360.0,516.0 358.0,515.0 356.0,515.0 354.0,514.0 352.0,514.0 350.0,514.0 348.0,514.0 346.0,515.0 344.0,515.0 342.0,516.0 340.0,517.0 338.0,518.0 336.0,519.0 334.0,520.0 332.0,521.0 330.0,522.0 328.0,523.0 326.0,523.0 324.0,524.0 322.0,525.0" fill="#3e3449"/><polygon points="322.0,525.0 324.0,524.0 326.0,523.0 328.0,523.0 330.0,522.0 332.0,521.0 334.0,520.0 336.0,519.0 338.0,518.0 340.0,517.0 342.0,516.0 344.0,515.0 346.0,515.0 348.0,514.0 350.0,514.0 352.0,514.0 354.0,514.0 356.0,515.0 358.0,515.0 360.0,516.0 362.0,517.0 364.0,518.0 366.0,519.0 368.0,520.0 370.0,521.0 372.0,522.0 374.0,523.0 376.0,523.0 378.0,524.0 380.0,525.0 382.0,525.0 384.0,525.0 386.0,525.0 388.0,525.0 390.0,524.0 392.0,523.0 394.0,523.0 396.0,522.0 398.0,521.0 400.0,520.0 402.0,519.0 404.0,518.0 406.0,517.0 408.0,516.0 410.0,515.0 412.0,515.0 414.0,514.0 416.0,514.0 418.0,514.0 420.0,514.0 422.0,515.0 424.0,515.0 426.0,516.0 428.0,517.0 430.0,518.0 432.0,519.0 434.0,520.0 436.0,521.0 438.0,522.0 440.0,523.0 442.0,523.0 444.0,524.0 446.0,525.0 448.0,525.0 450.0,525.0 452.0,525.0 454.0,525.0 456.0,524.0 458.0,523.0 460.0,523.0 462.0,522.0 464.0,521.0 466.0,520.0 468.0,519.0 470.0,518.0 472.0,517.0 474.0,516.0 476.0,515.0 478.0,515.0 480.0,514.0 482.0,514.0 484.0,514.0 486.0,514.0 488.0,515.0 490.0,515.0 492.0,516.0 494.0,517.0 496.0,518.0 498.0,519.0 500.0,520.0 502.0,521.0 504.0,522.0 506.0,523.0 508.0,523.0 510.0,524.0 512.0,525.0 514.0,525.0 516.0,525.0 516.0,530.0 514.0,530.0 512.0,530.0 510.0,530.0 508.0,529.0 506.0,528.0 504.0,527.0 502.0,526.0 500.0,525.0 498.0,524.0 496.0,523.0 494.0,522.0 492.0,521.0 490.0,521.0 488.0,520.0 486.0,520.0 484.0,520.0 482.0,520.0 480.0,520.0 478.0,520.0 476.0,521.0 474.0,521.0 472.0,522.0 470.0,523.0 468.0,524.0 466.0,525.0 464.0,526.0 462.0,527.0 460.0,528.0 458.0,529.0 456.0,530.0 454.0,530.0 452.0,530.0 450.0,530.0 448.0,530.0 446.0,530.0 444.0,530.0 442.0,529.0 440.0,528.0 438.0,527.0 436.0,526.0 434.0,525.0 432.0,524.0 430.0,523.0 428.0,522.0 426.0,521.0 424.0,521.0 422.0,520.0 420.0,520.0 418.0,520.0 416.0,520.0 414.0,520.0 412.0,520.0 410.0,521.0 408.0,521.0 406.0,522.0 404.0,523.0 402.0,524.0 400.0,525.0 398.0,526.0 396.0,527.0 394.0,528.0 392.0,529.0 390.0,530.0 388.0,530.0 386.0,530.0 384.0,530.0 382.0,530.0 380.0,530.0 378.0,530.0 376.0,529.0 374.0,528.0 372.0,527.0 370.0,526.0 368.0,525.0 366.0,524.0 364.0,523.0 362.0,522.0 360.0,521.0 358.0,521.0 356.0,520.0 354.0,520.0 352.0,520.0 350.0,520.0 348.0,520.0 346.0,520.0 344.0,521.0 342.0,521.0 340.0,522.0 338.0,523.0 336.0,524.0 334.0,525.0 332.0,526.0 330.0,527.0 328.0,528.0 326.0,529.0 324.0,530.0 322.0,530.0" fill="#2f2a35"/><polygon points="322.0,543.0 324.0,543.0 326.0,542.0 328.0,541.0 330.0,540.0 332.0,539.0 334.0,538.0 336.0,537.0 338.0,536.0 340.0,535.0 342.0,534.0 344.0,534.0 346.0,533.0 348.0,533.0 350.0,533.0 352.0,533.0 354.0,533.0 356.0,533.0 358.0,534.0 360.0,534.0 362.0,535.0 364.0,536.0 366.0,537.0 368.0,538.0 370.0,539.0 372.0,540.0 374.0,541.0 376.0,542.0 378.0,543.0 380.0,543.0 382.0,544.0 384.0,544.0 386.0,544.0 388.0,543.0 390.0,543.0 392.0,542.0 394.0,541.0 396.0,540.0 398.0,539.0 400.0,538.0 402.0,537.0 404.0,536.0 406.0,535.0 408.0,534.0 410.0,534.0 412.0,533.0 414.0,533.0 416.0,533.0 418.0,533.0 420.0,533.0 422.0,533.0 424.0,534.0 426.0,534.0 428.0,535.0 430.0,536.0 432.0,537.0 434.0,538.0 436.0,539.0 438.0,540.0 440.0,541.0 442.0,542.0 444.0,543.0 446.0,543.0 448.0,544.0 450.0,544.0 452.0,544.0 454.0,543.0 456.0,543.0 458.0,542.0 460.0,541.0 462.0,540.0 464.0,539.0 466.0,538.0 468.0,537.0 470.0,536.0 472.0,535.0 474.0,534.0 476.0,534.0 478.0,533.0 480.0,533.0 482.0,533.0 484.0,533.0 486.0,533.0 488.0,533.0 490.0,534.0 492.0,534.0 494.0,535.0 496.0,536.0 498.0,537.0 500.0,538.0 502.0,539.0 504.0,540.0 506.0,541.0 508.0,542.0 510.0,543.0 512.0,543.0 514.0,544.0 516.0,544.0 516.0,549.0 514.0,549.0 512.0,549.0 510.0,548.0 508.0,548.0 506.0,547.0 504.0,546.0 502.0,545.0 500.0,544.0 498.0,543.0 496.0,542.0 494.0,541.0 492.0,540.0 490.0,539.0 488.0,539.0 486.0,538.0 484.0,538.0 482.0,538.0 480.0,538.0 478.0,539.0 476.0,539.0 474.0,540.0 472.0,541.0 470.0,542.0 468.0,543.0 466.0,544.0 464.0,545.0 462.0,546.0 460.0,547.0 458.0,548.0 456.0,548.0 454.0,549.0 452.0,549.0 450.0,549.0 448.0,549.0 446.0,549.0 444.0,548.0 442.0,548.0 440.0,547.0 438.0,546.0 436.0,545.0 434.0,544.0 432.0,543.0 430.0,542.0 428.0,541.0 426.0,540.0 424.0,539.0 422.0,539.0 420.0,538.0 418.0,538.0 416.0,538.0 414.0,538.0 412.0,539.0 410.0,539.0 408.0,540.0 406.0,541.0 404.0,542.0 402.0,543.0 400.0,544.0 398.0,545.0 396.0,546.0 394.0,547.0 392.0,548.0 390.0,548.0 388.0,549.0 386.0,549.0 384.0,549.0 382.0,549.0 380.0,549.0 378.0,548.0 376.0,548.0 374.0,547.0 372.0,546.0 370.0,545.0 368.0,544.0 366.0,543.0 364.0,542.0 362.0,541.0 360.0,540.0 358.0,539.0 356.0,539.0 354.0,538.0 352.0,538.0 350.0,538.0 348.0,538.0 346.0,539.0 344.0,539.0 342.0,540.0 340.0,541.0 338.0,542.0 336.0,543.0 334.0,544.0 332.0,545.0 330.0,546.0 328.0,547.0 326.0,548.0 324.0,548.0 322.0,549.0" fill="#2f2a35"/><polygon points="322.0,549.0 324.0,548.0 326.0,548.0 328.0,547.0 330.0,546.0 332.0,545.0 334.0,544.0 336.0,543.0 338.0,542.0 340.0,541.0 342.0,540.0 344.0,539.0 346.0,539.0 348.0,538.0 350.0,538.0 352.0,538.0 354.0,538.0 356.0,539.0 358.0,539.0 360.0,540.0 362.0,541.0 364.0,542.0 366.0,543.0 368.0,544.0 370.0,545.0 372.0,546.0 374.0,547.0 376.0,548.0 378.0,548.0 380.0,549.0 382.0,549.0 384.0,549.0 386.0,549.0 388.0,549.0 390.0,548.0 392.0,548.0 394.0,547.0 396.0,546.0 398.0,545.0 400.0,544.0 402.0,543.0 404.0,542.0 406.0,541.0 408.0,540.0 410.0,539.0 412.0,539.0 414.0,538.0 416.0,538.0 418.0,538.0 420.0,538.0 422.0,539.0 424.0,539.0 426.0,540.0 428.0,541.0 430.0,542.0 432.0,543.0 434.0,544.0 436.0,545.0 438.0,546.0 440.0,547.0 442.0,548.0 444.0,548.0 446.0,549.0 448.0,549.0 450.0,549.0 452.0,549.0 454.0,549.0 456.0,548.0 458.0,548.0 460.0,547.0 462.0,546.0 464.0,545.0 466.0,544.0 468.0,543.0 470.0,542.0 472.0,541.0 474.0,540.0 476.0,539.0 478.0,539.0 480.0,538.0 482.0,538.0 484.0,538.0 486.0,538.0 488.0,539.0 490.0,539.0 492.0,540.0 494.0,541.0 496.0,542.0 498.0,543.0 500.0,544.0 502.0,545.0 504.0,546.0 506.0,547.0 508.0,548.0 510.0,548.0 512.0,549.0 514.0,549.0 516.0,549.0 516.0,559.0 514.0,559.0 512.0,558.0 510.0,558.0 508.0,557.0 506.0,556.0 504.0,555.0 502.0,554.0 500.0,553.0 498.0,552.0 496.0,551.0 494.0,550.0 492.0,549.0 490.0,549.0 488.0,548.0 486.0,548.0 484.0,548.0 482.0,548.0 480.0,548.0 478.0,548.0 476.0,549.0 474.0,549.0 472.0,550.0 470.0,551.0 468.0,552.0 466.0,553.0 464.0,554.0 462.0,555.0 460.0,556.0 458.0,557.0 456.0,558.0 454.0,558.0 452.0,559.0 450.0,559.0 448.0,559.0 446.0,558.0 444.0,558.0 442.0,557.0 440.0,556.0 438.0,555.0 436.0,554.0 434.0,553.0 432.0,552.0 430.0,551.0 428.0,550.0 426.0,549.0 424.0,549.0 422.0,548.0 420.0,548.0 418.0,548.0 416.0,548.0 414.0,548.0 412.0,548.0 410.0,549.0 408.0,549.0 406.0,550.0 404.0,551.0 402.0,552.0 400.0,553.0 398.0,554.0 396.0,555.0 394.0,556.0 392.0,557.0 390.0,558.0 388.0,558.0 386.0,559.0 384.0,559.0 382.0,559.0 380.0,558.0 378.0,558.0 376.0,557.0 374.0,556.0 372.0,555.0 370.0,554.0 368.0,553.0 366.0,552.0 364.0,551.0 362.0,550.0 360.0,549.0 358.0,549.0 356.0,548.0 354.0,548.0 352.0,548.0 350.0,548.0 348.0,548.0 346.0,548.0 344.0,549.0 342.0,549.0 340.0,550.0 338.0,551.0 336.0,552.0 334.0,553.0 332.0,554.0 330.0,555.0 328.0,556.0 326.0,557.0 324.0,558.0 322.0,558.0" fill="#3e3449"/><polygon points="322.0,558.0 324.0,558.0 326.0,557.0 328.0,556.0 330.0,555.0 332.0,554.0 334.0,553.0 336.0,552.0 338.0,551.0 340.0,550.0 342.0,549.0 344.0,549.0 346.0,548.0 348.0,548.0 350.0,548.0 352.0,548.0 354.0,548.0 356.0,548.0 358.0,549.0 360.0,549.0 362.0,550.0 364.0,551.0 366.0,552.0 368.0,553.0 370.0,554.0 372.0,555.0 374.0,556.0 376.0,557.0 378.0,558.0 380.0,558.0 382.0,559.0 384.0,559.0 386.0,559.0 388.0,558.0 390.0,558.0 392.0,557.0 394.0,556.0 396.0,555.0 398.0,554.0 400.0,553.0 402.0,552.0 404.0,551.0 406.0,550.0 408.0,549.0 410.0,549.0 412.0,548.0 414.0,548.0 416.0,548.0 418.0,548.0 420.0,548.0 422.0,548.0 424.0,549.0 426.0,549.0 428.0,550.0 430.0,551.0 432.0,552.0 434.0,553.0 436.0,554.0 438.0,555.0 440.0,556.0 442.0,557.0 444.0,558.0 446.0,558.0 448.0,559.0 450.0,559.0 452.0,559.0 454.0,558.0 456.0,558.0 458.0,557.0 460.0,556.0 462.0,555.0 464.0,554.0 466.0,553.0 468.0,552.0 470.0,551.0 472.0,550.0 474.0,549.0 476.0,549.0 478.0,548.0 480.0,548.0 482.0,548.0 484.0,548.0 486.0,548.0 488.0,548.0 490.0,549.0 492.0,549.0 494.0,550.0 496.0,551.0 498.0,552.0 500.0,553.0 502.0,554.0 504.0,555.0 506.0,556.0 508.0,557.0 510.0,558.0 512.0,558.0 514.0,559.0 516.0,559.0 516.0,564.0 514.0,564.0 512.0,564.0 510.0,563.0 508.0,563.0 506.0,562.0 504.0,561.0 502.0,560.0 500.0,559.0 498.0,558.0 496.0,557.0 494.0,556.0 492.0,555.0 490.0,554.0 488.0,554.0 486.0,553.0 484.0,553.0 482.0,553.0 480.0,553.0 478.0,554.0 476.0,554.0 474.0,555.0 472.0,556.0 470.0,557.0 468.0,558.0 466.0,559.0 464.0,560.0 462.0,561.0 460.0,562.0 458.0,563.0 456.0,563.0 454.0,564.0 452.0,564.0 450.0,564.0 448.0,564.0 446.0,564.0 444.0,563.0 442.0,563.0 440.0,562.0 438.0,561.0 436.0,560.0 434.0,559.0 432.0,558.0 430.0,557.0 428.0,556.0 426.0,555.0 424.0,554.0 422.0,554.0 420.0,553.0 418.0,553.0 416.0,553.0 414.0,553.0 412.0,554.0 410.0,554.0 408.0,555.0 406.0,556.0 404.0,557.0 402.0,558.0 400.0,559.0 398.0,560.0 396.0,561.0 394.0,562.0 392.0,563.0 390.0,563.0 388.0,564.0 386.0,564.0 384.0,564.0 382.0,564.0 380.0,564.0 378.0,563.0 376.0,563.0 374.0,562.0 372.0,561.0 370.0,560.0 368.0,559.0 366.0,558.0 364.0,557.0 362.0,556.0 360.0,555.0 358.0,554.0 356.0,554.0 354.0,553.0 352.0,553.0 350.0,553.0 348.0,553.0 346.0,554.0 344.0,554.0 342.0,555.0 340.0,556.0 338.0,557.0 336.0,558.0 334.0,559.0 332.0,560.0 330.0,561.0 328.0,562.0 326.0,563.0 324.0,563.0 322.0,564.0" fill="#2f2a35"/><polygon points="322.0,577.0 324.0,576.0 326.0,576.0 328.0,575.0 330.0,574.0 332.0,573.0 334.0,572.0 336.0,571.0 338.0,570.0 340.0,569.0 342.0,568.0 344.0,567.0 346.0,567.0 348.0,566.0 350.0,566.0 352.0,566.0 354.0,566.0 356.0,567.0 358.0,567.0 360.0,568.0 362.0,569.0 364.0,570.0 366.0,571.0 368.0,572.0 370.0,573.0 372.0,574.0 374.0,575.0 376.0,576.0 378.0,576.0 380.0,577.0 382.0,577.0 384.0,577.0 386.0,577.0 388.0,577.0 390.0,576.0 392.0,576.0 394.0,575.0 396.0,574.0 398.0,573.0 400.0,572.0 402.0,571.0 404.0,570.0 406.0,569.0 408.0,568.0 410.0,567.0 412.0,567.0 414.0,566.0 416.0,566.0 418.0,566.0 420.0,566.0 422.0,567.0 424.0,567.0 426.0,568.0 428.0,569.0 430.0,570.0 432.0,571.0 434.0,572.0 436.0,573.0 438.0,574.0 440.0,575.0 442.0,576.0 444.0,576.0 446.0,577.0 448.0,577.0 450.0,577.0 452.0,577.0 454.0,577.0 456.0,576.0 458.0,576.0 460.0,575.0 462.0,574.0 464.0,573.0 466.0,572.0 468.0,571.0 470.0,570.0 472.0,569.0 474.0,568.0 476.0,567.0 478.0,567.0 480.0,566.0 482.0,566.0 484.0,566.0 486.0,566.0 488.0,567.0 490.0,567.0 492.0,568.0 494.0,569.0 496.0,570.0 498.0,571.0 500.0,572.0 502.0,573.0 504.0,574.0 506.0,575.0 508.0,576.0 510.0,576.0 512.0,577.0 514.0,577.0 516.0,577.0 516.0,583.0 514.0,583.0 512.0,582.0 510.0,582.0 508.0,581.0 506.0,580.0 504.0,579.0 502.0,578.0 500.0,577.0 498.0,576.0 496.0,575.0 494.0,574.0 492.0,574.0 490.0,573.0 488.0,572.0 486.0,572.0 484.0,572.0 482.0,572.0 480.0,572.0 478.0,572.0 476.0,573.0 474.0,574.0 472.0,574.0 470.0,575.0 468.0,576.0 466.0,577.0 464.0,578.0 462.0,579.0 460.0,580.0 458.0,581.0 456.0,582.0 454.0,582.0 452.0,583.0 450.0,583.0 448.0,583.0 446.0,582.0 444.0,582.0 442.0,581.0 440.0,580.0 438.0,579.0 436.0,578.0 434.0,577.0 432.0,576.0 430.0,575.0 428.0,574.0 426.0,574.0 424.0,573.0 422.0,572.0 420.0,572.0 418.0,572.0 416.0,572.0 414.0,572.0 412.0,572.0 410.0,573.0 408.0,574.0 406.0,574.0 404.0,575.0 402.0,576.0 400.0,577.0 398.0,578.0 396.0,579.0 394.0,580.0 392.0,581.0 390.0,582.0 388.0,582.0 386.0,583.0 384.0,583.0 382.0,583.0 380.0,582.0 378.0,582.0 376.0,581.0 374.0,580.0 372.0,579.0 370.0,578.0 368.0,577.0 366.0,576.0 364.0,575.0 362.0,574.0 360.0,574.0 358.0,573.0 356.0,572.0 354.0,572.0 352.0,572.0 350.0,572.0 348.0,572.0 346.0,572.0 344.0,573.0 342.0,574.0 340.0,574.0 338.0,575.0 336.0,576.0 334.0,577.0 332.0,578.0 330.0,579.0 328.0,580.0 326.0,581.0 324.0,582.0 322.0,582.0" fill="#2f2a35"/><polygon points="322.0,582.0 324.0,582.0 326.0,581.0 328.0,580.0 330.0,579.0 332.0,578.0 334.0,577.0 336.0,576.0 338.0,575.0 340.0,574.0 342.0,574.0 344.0,573.0 346.0,572.0 348.0,572.0 350.0,572.0 352.0,572.0 354.0,572.0 356.0,572.0 358.0,573.0 360.0,574.0 362.0,574.0 364.0,575.0 366.0,576.0 368.0,577.0 370.0,578.0 372.0,579.0 374.0,580.0 376.0,581.0 378.0,582.0 380.0,582.0 382.0,583.0 384.0,583.0 386.0,583.0 388.0,582.0 390.0,582.0 392.0,581.0 394.0,580.0 396.0,579.0 398.0,578.0 400.0,577.0 402.0,576.0 404.0,575.0 406.0,574.0 408.0,574.0 410.0,573.0 412.0,572.0 414.0,572.0 416.0,572.0 418.0,572.0 420.0,572.0 422.0,572.0 424.0,573.0 426.0,574.0 428.0,574.0 430.0,575.0 432.0,576.0 434.0,577.0 436.0,578.0 438.0,579.0 440.0,580.0 442.0,581.0 444.0,582.0 446.0,582.0 448.0,583.0 450.0,583.0 452.0,583.0 454.0,582.0 456.0,582.0 458.0,581.0 460.0,580.0 462.0,579.0 464.0,578.0 466.0,577.0 468.0,576.0 470.0,575.0 472.0,574.0 474.0,574.0 476.0,573.0 478.0,572.0 480.0,572.0 482.0,572.0 484.0,572.0 486.0,572.0 488.0,572.0 490.0,573.0 492.0,574.0 494.0,574.0 496.0,575.0 498.0,576.0 500.0,577.0 502.0,578.0 504.0,579.0 506.0,580.0 508.0,581.0 510.0,582.0 512.0,582.0 514.0,583.0 516.0,583.0 516.0,592.0 514.0,592.0 512.0,592.0 510.0,591.0 508.0,591.0 506.0,590.0 504.0,589.0 502.0,588.0 500.0,587.0 498.0,586.0 496.0,585.0 494.0,584.0 492.0,583.0 490.0,582.0 488.0,582.0 486.0,581.0 484.0,581.0 482.0,581.0 480.0,581.0 478.0,582.0 476.0,582.0 474.0,583.0 472.0,584.0 470.0,585.0 468.0,586.0 466.0,587.0 464.0,588.0 462.0,589.0 460.0,590.0 458.0,591.0 456.0,591.0 454.0,592.0 452.0,592.0 450.0,592.0 448.0,592.0 446.0,592.0 444.0,591.0 442.0,591.0 440.0,590.0 438.0,589.0 436.0,588.0 434.0,587.0 432.0,586.0 430.0,585.0 428.0,584.0 426.0,583.0 424.0,582.0 422.0,582.0 420.0,581.0 418.0,581.0 416.0,581.0 414.0,581.0 412.0,582.0 410.0,582.0 408.0,583.0 406.0,584.0 404.0,585.0 402.0,586.0 400.0,587.0 398.0,588.0 396.0,589.0 394.0,590.0 392.0,591.0 390.0,591.0 388.0,592.0 386.0,592.0 384.0,592.0 382.0,592.0 380.0,592.0 378.0,591.0 376.0,591.0 374.0,590.0 372.0,589.0 370.0,588.0 368.0,587.0 366.0,586.0 364.0,585.0 362.0,584.0 360.0,583.0 358.0,582.0 356.0,582.0 354.0,581.0 352.0,581.0 350.0,581.0 348.0,581.0 346.0,582.0 344.0,582.0 342.0,583.0 340.0,584.0 338.0,585.0 336.0,586.0 334.0,587.0 332.0,588.0 330.0,589.0 328.0,590.0 326.0,591.0 324.0,591.0 322.0,592.0" fill="#3e3449"/><polygon points="322.0,592.0 324.0,591.0 326.0,591.0 328.0,590.0 330.0,589.0 332.0,588.0 334.0,587.0 336.0,586.0 338.0,585.0 340.0,584.0 342.0,583.0 344.0,582.0 346.0,582.0 348.0,581.0 350.0,581.0 352.0,581.0 354.0,581.0 356.0,582.0 358.0,582.0 360.0,583.0 362.0,584.0 364.0,585.0 366.0,586.0 368.0,587.0 370.0,588.0 372.0,589.0 374.0,590.0 376.0,591.0 378.0,591.0 380.0,592.0 382.0,592.0 384.0,592.0 386.0,592.0 388.0,592.0 390.0,591.0 392.0,591.0 394.0,590.0 396.0,589.0 398.0,588.0 400.0,587.0 402.0,586.0 404.0,585.0 406.0,584.0 408.0,583.0 410.0,582.0 412.0,582.0 414.0,581.0 416.0,581.0 418.0,581.0 420.0,581.0 422.0,582.0 424.0,582.0 426.0,583.0 428.0,584.0 430.0,585.0 432.0,586.0 434.0,587.0 436.0,588.0 438.0,589.0 440.0,590.0 442.0,591.0 444.0,591.0 446.0,592.0 448.0,592.0 450.0,592.0 452.0,592.0 454.0,592.0 456.0,591.0 458.0,591.0 460.0,590.0 462.0,589.0 464.0,588.0 466.0,587.0 468.0,586.0 470.0,585.0 472.0,584.0 474.0,583.0 476.0,582.0 478.0,582.0 480.0,581.0 482.0,581.0 484.0,581.0 486.0,581.0 488.0,582.0 490.0,582.0 492.0,583.0 494.0,584.0 496.0,585.0 498.0,586.0 500.0,587.0 502.0,588.0 504.0,589.0 506.0,590.0 508.0,591.0 510.0,591.0 512.0,592.0 514.0,592.0 516.0,592.0 516.0,598.0 514.0,598.0 512.0,597.0 510.0,597.0 508.0,596.0 506.0,595.0 504.0,594.0 502.0,593.0 500.0,592.0 498.0,591.0 496.0,590.0 494.0,589.0 492.0,589.0 490.0,588.0 488.0,587.0 486.0,587.0 484.0,587.0 482.0,587.0 480.0,587.0 478.0,587.0 476.0,588.0 474.0,589.0 472.0,589.0 470.0,590.0 468.0,591.0 466.0,592.0 464.0,593.0 462.0,594.0 460.0,595.0 458.0,596.0 456.0,597.0 454.0,597.0 452.0,598.0 450.0,598.0 448.0,598.0 446.0,597.0 444.0,597.0 442.0,596.0 440.0,595.0 438.0,594.0 436.0,593.0 434.0,592.0 432.0,591.0 430.0,590.0 428.0,589.0 426.0,589.0 424.0,588.0 422.0,587.0 420.0,587.0 418.0,587.0 416.0,587.0 414.0,587.0 412.0,587.0 410.0,588.0 408.0,589.0 406.0,589.0 404.0,590.0 402.0,591.0 400.0,592.0 398.0,593.0 396.0,594.0 394.0,595.0 392.0,596.0 390.0,597.0 388.0,597.0 386.0,598.0 384.0,598.0 382.0,598.0 380.0,597.0 378.0,597.0 376.0,596.0 374.0,595.0 372.0,594.0 370.0,593.0 368.0,592.0 366.0,591.0 364.0,590.0 362.0,589.0 360.0,589.0 358.0,588.0 356.0,587.0 354.0,587.0 352.0,587.0 350.0,587.0 348.0,587.0 346.0,587.0 344.0,588.0 342.0,589.0 340.0,589.0 338.0,590.0 336.0,591.0 334.0,592.0 332.0,593.0 330.0,594.0 328.0,595.0 326.0,596.0 324.0,597.0 322.0,597.0" fill="#2f2a35"/><polygon points="322.0,610.0 324.0,610.0 326.0,609.0 328.0,608.0 330.0,608.0 332.0,607.0 334.0,606.0 336.0,605.0 338.0,604.0 340.0,603.0 342.0,602.0 344.0,601.0 346.0,600.0 348.0,600.0 350.0,600.0 352.0,600.0 354.0,600.0 356.0,600.0 358.0,601.0 360.0,602.0 362.0,603.0 364.0,604.0 366.0,605.0 368.0,606.0 370.0,607.0 372.0,608.0 374.0,608.0 376.0,609.0 378.0,610.0 380.0,610.0 382.0,611.0 384.0,611.0 386.0,611.0 388.0,610.0 390.0,610.0 392.0,609.0 394.0,608.0 396.0,608.0 398.0,607.0 400.0,606.0 402.0,605.0 404.0,604.0 406.0,603.0 408.0,602.0 410.0,601.0 412.0,600.0 414.0,600.0 416.0,600.0 418.0,600.0 420.0,600.0 422.0,600.0 424.0,601.0 426.0,602.0 428.0,603.0 430.0,604.0 432.0,605.0 434.0,606.0 436.0,607.0 438.0,608.0 440.0,608.0 442.0,609.0 444.0,610.0 446.0,610.0 448.0,611.0 450.0,611.0 452.0,611.0 454.0,610.0 456.0,610.0 458.0,609.0 460.0,608.0 462.0,608.0 464.0,607.0 466.0,606.0 468.0,605.0 470.0,604.0 472.0,603.0 474.0,602.0 476.0,601.0 478.0,600.0 480.0,600.0 482.0,600.0 484.0,600.0 486.0,600.0 488.0,600.0 490.0,601.0 492.0,602.0 494.0,603.0 496.0,604.0 498.0,605.0 500.0,606.0 502.0,607.0 504.0,608.0 506.0,608.0 508.0,609.0 510.0,610.0 512.0,610.0 514.0,611.0 516.0,611.0 516.0,616.0 514.0,616.0 512.0,616.0 510.0,615.0 508.0,615.0 506.0,614.0 504.0,613.0 502.0,612.0 500.0,611.0 498.0,610.0 496.0,609.0 494.0,608.0 492.0,607.0 490.0,606.0 488.0,606.0 486.0,606.0 484.0,605.0 482.0,605.0 480.0,606.0 478.0,606.0 476.0,606.0 474.0,607.0 472.0,608.0 470.0,609.0 468.0,610.0 466.0,611.0 464.0,612.0 462.0,613.0 460.0,614.0 458.0,615.0 456.0,615.0 454.0,616.0 452.0,616.0 450.0,616.0 448.0,616.0 446.0,616.0 444.0,615.0 442.0,615.0 440.0,614.0 438.0,613.0 436.0,612.0 434.0,611.0 432.0,610.0 430.0,609.0 428.0,608.0 426.0,607.0 424.0,606.0 422.0,606.0 420.0,606.0 418.0,605.0 416.0,605.0 414.0,606.0 412.0,606.0 410.0,606.0 408.0,607.0 406.0,608.0 404.0,609.0 402.0,610.0 400.0,611.0 398.0,612.0 396.0,613.0 394.0,614.0 392.0,615.0 390.0,615.0 388.0,616.0 386.0,616.0 384.0,616.0 382.0,616.0 380.0,616.0 378.0,615.0 376.0,615.0 374.0,614.0 372.0,613.0 370.0,612.0 368.0,611.0 366.0,610.0 364.0,609.0 362.0,608.0 360.0,607.0 358.0,606.0 356.0,606.0 354.0,606.0 352.0,605.0 350.0,605.0 348.0,606.0 346.0,606.0 344.0,606.0 342.0,607.0 340.0,608.0 338.0,609.0 336.0,610.0 334.0,611.0 332.0,612.0 330.0,613.0 328.0,614.0 326.0,615.0 324.0,615.0 322.0,616.0" fill="#2f2a35"/><polygon points="322.0,616.0 324.0,615.0 326.0,615.0 328.0,614.0 330.0,613.0 332.0,612.0 334.0,611.0 336.0,610.0 338.0,609.0 340.0,608.0 342.0,607.0 344.0,606.0 346.0,606.0 348.0,606.0 350.0,605.0 352.0,605.0 354.0,606.0 356.0,606.0 358.0,606.0 360.0,607.0 362.0,608.0 364.0,609.0 366.0,610.0 368.0,611.0 370.0,612.0 372.0,613.0 374.0,614.0 376.0,615.0 378.0,615.0 380.0,616.0 382.0,616.0 384.0,616.0 386.0,616.0 388.0,616.0 390.0,615.0 392.0,615.0 394.0,614.0 396.0,613.0 398.0,612.0 400.0,611.0 402.0,610.0 404.0,609.0 406.0,608.0 408.0,607.0 410.0,606.0 412.0,606.0 414.0,606.0 416.0,605.0 418.0,605.0 420.0,606.0 422.0,606.0 424.0,606.0 426.0,607.0 428.0,608.0 430.0,609.0 432.0,610.0 434.0,611.0 436.0,612.0 438.0,613.0 440.0,614.0 442.0,615.0 444.0,615.0 446.0,616.0 448.0,616.0 450.0,616.0 452.0,616.0 454.0,616.0 456.0,615.0 458.0,615.0 460.0,614.0 462.0,613.0 464.0,612.0 466.0,611.0 468.0,610.0 470.0,609.0 472.0,608.0 474.0,607.0 476.0,606.0 478.0,606.0 480.0,606.0 482.0,605.0 484.0,605.0 486.0,606.0 488.0,606.0 490.0,606.0 492.0,607.0 494.0,608.0 496.0,609.0 498.0,610.0 500.0,611.0 502.0,612.0 504.0,613.0 506.0,614.0 508.0,615.0 510.0,615.0 512.0,616.0 514.0,616.0 516.0,616.0 516.0,626.0 514.0,626.0 512.0,625.0 510.0,625.0 508.0,624.0 506.0,623.0 504.0,623.0 502.0,622.0 500.0,621.0 498.0,620.0 496.0,619.0 494.0,618.0 492.0,617.0 490.0,616.0 488.0,615.0 486.0,615.0 484.0,615.0 482.0,615.0 480.0,615.0 478.0,615.0 476.0,616.0 474.0,617.0 472.0,618.0 470.0,619.0 468.0,620.0 466.0,621.0 464.0,622.0 462.0,623.0 460.0,623.0 458.0,624.0 456.0,625.0 454.0,625.0 452.0,626.0 450.0,626.0 448.0,626.0 446.0,625.0 444.0,625.0 442.0,624.0 440.0,623.0 438.0,623.0 436.0,622.0 434.0,621.0 432.0,620.0 430.0,619.0 428.0,618.0 426.0,617.0 424.0,616.0 422.0,615.0 420.0,615.0 418.0,615.0 416.0,615.0 414.0,615.0 412.0,615.0 410.0,616.0 408.0,617.0 406.0,618.0 404.0,619.0 402.0,620.0 400.0,621.0 398.0,622.0 396.0,623.0 394.0,623.0 392.0,624.0 390.0,625.0 388.0,625.0 386.0,626.0 384.0,626.0 382.0,626.0 380.0,625.0 378.0,625.0 376.0,624.0 374.0,623.0 372.0,623.0 370.0,622.0 368.0,621.0 366.0,620.0 364.0,619.0 362.0,618.0 360.0,617.0 358.0,616.0 356.0,615.0 354.0,615.0 352.0,615.0 350.0,615.0 348.0,615.0 346.0,615.0 344.0,616.0 342.0,617.0 340.0,618.0 338.0,619.0 336.0,620.0 334.0,621.0 332.0,622.0 330.0,623.0 328.0,623.0 326.0,624.0 324.0,625.0 322.0,625.0" fill="#3e3449"/><polygon points="322.0,625.0 324.0,625.0 326.0,624.0 328.0,623.0 330.0,623.0 332.0,622.0 334.0,621.0 336.0,620.0 338.0,619.0 340.0,618.0 342.0,617.0 344.0,616.0 346.0,615.0 348.0,615.0 350.0,615.0 352.0,615.0 354.0,615.0 356.0,615.0 358.0,616.0 360.0,617.0 362.0,618.0 364.0,619.0 366.0,620.0 368.0,621.0 370.0,622.0 372.0,623.0 374.0,623.0 376.0,624.0 378.0,625.0 380.0,625.0 382.0,626.0 384.0,626.0 386.0,626.0 388.0,625.0 390.0,625.0 392.0,624.0 394.0,623.0 396.0,623.0 398.0,622.0 400.0,621.0 402.0,620.0 404.0,619.0 406.0,618.0 408.0,617.0 410.0,616.0 412.0,615.0 414.0,615.0 416.0,615.0 418.0,615.0 420.0,615.0 422.0,615.0 424.0,616.0 426.0,617.0 428.0,618.0 430.0,619.0 432.0,620.0 434.0,621.0 436.0,622.0 438.0,623.0 440.0,623.0 442.0,624.0 444.0,625.0 446.0,625.0 448.0,626.0 450.0,626.0 452.0,626.0 454.0,625.0 456.0,625.0 458.0,624.0 460.0,623.0 462.0,623.0 464.0,622.0 466.0,621.0 468.0,620.0 470.0,619.0 472.0,618.0 474.0,617.0 476.0,616.0 478.0,615.0 480.0,615.0 482.0,615.0 484.0,615.0 486.0,615.0 488.0,615.0 490.0,616.0 492.0,617.0 494.0,618.0 496.0,619.0 498.0,620.0 500.0,621.0 502.0,622.0 504.0,623.0 506.0,623.0 508.0,624.0 510.0,625.0 512.0,625.0 514.0,626.0 516.0,626.0 516.0,631.0 514.0,631.0 512.0,631.0 510.0,630.0 508.0,630.0 506.0,629.0 504.0,628.0 502.0,627.0 500.0,626.0 498.0,625.0 496.0,624.0 494.0,623.0 492.0,622.0 490.0,621.0 488.0,621.0 486.0,621.0 484.0,620.0 482.0,620.0 480.0,621.0 478.0,621.0 476.0,621.0 474.0,622.0 472.0,623.0 470.0,624.0 468.0,625.0 466.0,626.0 464.0,627.0 462.0,628.0 460.0,629.0 458.0,630.0 456.0,630.0 454.0,631.0 452.0,631.0 450.0,631.0 448.0,631.0 446.0,631.0 444.0,630.0 442.0,630.0 440.0,629.0 438.0,628.0 436.0,627.0 434.0,626.0 432.0,625.0 430.0,624.0 428.0,623.0 426.0,622.0 424.0,621.0 422.0,621.0 420.0,621.0 418.0,620.0 416.0,620.0 414.0,621.0 412.0,621.0 410.0,621.0 408.0,622.0 406.0,623.0 404.0,624.0 402.0,625.0 400.0,626.0 398.0,627.0 396.0,628.0 394.0,629.0 392.0,630.0 390.0,630.0 388.0,631.0 386.0,631.0 384.0,631.0 382.0,631.0 380.0,631.0 378.0,630.0 376.0,630.0 374.0,629.0 372.0,628.0 370.0,627.0 368.0,626.0 366.0,625.0 364.0,624.0 362.0,623.0 360.0,622.0 358.0,621.0 356.0,621.0 354.0,621.0 352.0,620.0 350.0,620.0 348.0,621.0 346.0,621.0 344.0,621.0 342.0,622.0 340.0,623.0 338.0,624.0 336.0,625.0 334.0,626.0 332.0,627.0 330.0,628.0 328.0,629.0 326.0,630.0 324.0,630.0 322.0,631.0" fill="#2f2a35"/><polygon points="322.0,644.0 324.0,644.0 326.0,643.0 328.0,642.0 330.0,641.0 332.0,640.0 334.0,639.0 336.0,638.0 338.0,637.0 340.0,636.0 342.0,635.0 344.0,635.0 346.0,634.0 348.0,634.0 350.0,633.0 352.0,633.0 354.0,634.0 356.0,634.0 358.0,635.0 360.0,635.0 362.0,636.0 364.0,637.0 366.0,638.0 368.0,639.0 370.0,640.0 372.0,641.0 374.0,642.0 376.0,643.0 378.0,644.0 380.0,644.0 382.0,644.0 384.0,644.0 386.0,644.0 388.0,644.0 390.0,644.0 392.0,643.0 394.0,642.0 396.0,641.0 398.0,640.0 400.0,639.0 402.0,638.0 404.0,637.0 406.0,636.0 408.0,635.0 410.0,635.0 412.0,634.0 414.0,634.0 416.0,633.0 418.0,633.0 420.0,634.0 422.0,634.0 424.0,635.0 426.0,635.0 428.0,636.0 430.0,637.0 432.0,638.0 434.0,639.0 436.0,640.0 438.0,641.0 440.0,642.0 442.0,643.0 444.0,644.0 446.0,644.0 448.0,644.0 450.0,644.0 452.0,644.0 454.0,644.0 456.0,644.0 458.0,643.0 460.0,642.0 462.0,641.0 464.0,640.0 466.0,639.0 468.0,638.0 470.0,637.0 472.0,636.0 474.0,635.0 476.0,635.0 478.0,634.0 480.0,634.0 482.0,633.0 484.0,633.0 486.0,634.0 488.0,634.0 490.0,635.0 492.0,635.0 494.0,636.0 496.0,637.0 498.0,638.0 500.0,639.0 502.0,640.0 504.0,641.0 506.0,642.0 508.0,643.0 510.0,644.0 512.0,644.0 514.0,644.0 516.0,644.0 516.0,650.0 514.0,650.0 512.0,650.0 510.0,649.0 508.0,648.0 506.0,648.0 504.0,647.0 502.0,646.0 500.0,645.0 498.0,644.0 496.0,643.0 494.0,642.0 492.0,641.0 490.0,640.0 488.0,640.0 486.0,639.0 484.0,639.0 482.0,639.0 480.0,639.0 478.0,640.0 476.0,640.0 474.0,641.0 472.0,642.0 470.0,643.0 468.0,644.0 466.0,645.0 464.0,646.0 462.0,647.0 460.0,648.0 458.0,648.0 456.0,649.0 454.0,650.0 452.0,650.0 450.0,650.0 448.0,650.0 446.0,650.0 444.0,649.0 442.0,648.0 440.0,648.0 438.0,647.0 436.0,646.0 434.0,645.0 432.0,644.0 430.0,643.0 428.0,642.0 426.0,641.0 424.0,640.0 422.0,640.0 420.0,639.0 418.0,639.0 416.0,639.0 414.0,639.0 412.0,640.0 410.0,640.0 408.0,641.0 406.0,642.0 404.0,643.0 402.0,644.0 400.0,645.0 398.0,646.0 396.0,647.0 394.0,648.0 392.0,648.0 390.0,649.0 388.0,650.0 386.0,650.0 384.0,650.0 382.0,650.0 380.0,650.0 378.0,649.0 376.0,648.0 374.0,648.0 372.0,647.0 370.0,646.0 368.0,645.0 366.0,644.0 364.0,643.0 362.0,642.0 360.0,641.0 358.0,640.0 356.0,640.0 354.0,639.0 352.0,639.0 350.0,639.0 348.0,639.0 346.0,640.0 344.0,640.0 342.0,641.0 340.0,642.0 338.0,643.0 336.0,644.0 334.0,645.0 332.0,646.0 330.0,647.0 328.0,648.0 326.0,648.0 324.0,649.0 322.0,650.0" fill="#2f2a35"/><polygon points="322.0,650.0 324.0,649.0 326.0,648.0 328.0,648.0 330.0,647.0 332.0,646.0 334.0,645.0 336.0,644.0 338.0,643.0 340.0,642.0 342.0,641.0 344.0,640.0 346.0,640.0 348.0,639.0 350.0,639.0 352.0,639.0 354.0,639.0 356.0,640.0 358.0,640.0 360.0,641.0 362.0,642.0 364.0,643.0 366.0,644.0 368.0,645.0 370.0,646.0 372.0,647.0 374.0,648.0 376.0,648.0 378.0,649.0 380.0,650.0 382.0,650.0 384.0,650.0 386.0,650.0 388.0,650.0 390.0,649.0 392.0,648.0 394.0,648.0 396.0,647.0 398.0,646.0 400.0,645.0 402.0,644.0 404.0,643.0 406.0,642.0 408.0,641.0 410.0,640.0 412.0,640.0 414.0,639.0 416.0,639.0 418.0,639.0 420.0,639.0 422.0,640.0 424.0,640.0 426.0,641.0 428.0,642.0 430.0,643.0 432.0,644.0 434.0,645.0 436.0,646.0 438.0,647.0 440.0,648.0 442.0,648.0 444.0,649.0 446.0,650.0 448.0,650.0 450.0,650.0 452.0,650.0 454.0,650.0 456.0,649.0 458.0,648.0 460.0,648.0 462.0,647.0 464.0,646.0 466.0,645.0 468.0,644.0 470.0,643.0 472.0,642.0 474.0,641.0 476.0,640.0 478.0,640.0 480.0,639.0 482.0,639.0 484.0,639.0 486.0,639.0 488.0,640.0 490.0,640.0 492.0,641.0 494.0,642.0 496.0,643.0 498.0,644.0 500.0,645.0 502.0,646.0 504.0,647.0 506.0,648.0 508.0,648.0 510.0,649.0 512.0,650.0 514.0,650.0 516.0,650.0 516.0,659.0 514.0,659.0 512.0,659.0 510.0,659.0 508.0,658.0 506.0,657.0 504.0,656.0 502.0,655.0 500.0,654.0 498.0,653.0 496.0,652.0 494.0,651.0 492.0,650.0 490.0,650.0 488.0,649.0 486.0,649.0 484.0,648.0 482.0,648.0 480.0,649.0 478.0,649.0 476.0,650.0 474.0,650.0 472.0,651.0 470.0,652.0 468.0,653.0 466.0,654.0 464.0,655.0 462.0,656.0 460.0,657.0 458.0,658.0 456.0,659.0 454.0,659.0 452.0,659.0 450.0,659.0 448.0,659.0 446.0,659.0 444.0,659.0 442.0,658.0 440.0,657.0 438.0,656.0 436.0,655.0 434.0,654.0 432.0,653.0 430.0,652.0 428.0,651.0 426.0,650.0 424.0,650.0 422.0,649.0 420.0,649.0 418.0,648.0 416.0,648.0 414.0,649.0 412.0,649.0 410.0,650.0 408.0,650.0 406.0,651.0 404.0,652.0 402.0,653.0 400.0,654.0 398.0,655.0 396.0,656.0 394.0,657.0 392.0,658.0 390.0,659.0 388.0,659.0 386.0,659.0 384.0,659.0 382.0,659.0 380.0,659.0 378.0,659.0 376.0,658.0 374.0,657.0 372.0,656.0 370.0,655.0 368.0,654.0 366.0,653.0 364.0,652.0 362.0,651.0 360.0,650.0 358.0,650.0 356.0,649.0 354.0,649.0 352.0,648.0 350.0,648.0 348.0,649.0 346.0,649.0 344.0,650.0 342.0,650.0 340.0,651.0 338.0,652.0 336.0,653.0 334.0,654.0 332.0,655.0 330.0,656.0 328.0,657.0 326.0,658.0 324.0,659.0 322.0,659.0" fill="#3e3449"/><polygon points="322.0,659.0 324.0,659.0 326.0,658.0 328.0,657.0 330.0,656.0 332.0,655.0 334.0,654.0 336.0,653.0 338.0,652.0 340.0,651.0 342.0,650.0 344.0,650.0 346.0,649.0 348.0,649.0 350.0,648.0 352.0,648.0 354.0,649.0 356.0,649.0 358.0,650.0 360.0,650.0 362.0,651.0 364.0,652.0 366.0,653.0 368.0,654.0 370.0,655.0 372.0,656.0 374.0,657.0 376.0,658.0 378.0,659.0 380.0,659.0 382.0,659.0 384.0,659.0 386.0,659.0 388.0,659.0 390.0,659.0 392.0,658.0 394.0,657.0 396.0,656.0 398.0,655.0 400.0,654.0 402.0,653.0 404.0,652.0 406.0,651.0 408.0,650.0 410.0,650.0 412.0,649.0 414.0,649.0 416.0,648.0 418.0,648.0 420.0,649.0 422.0,649.0 424.0,650.0 426.0,650.0 428.0,651.0 430.0,652.0 432.0,653.0 434.0,654.0 436.0,655.0 438.0,656.0 440.0,657.0 442.0,658.0 444.0,659.0 446.0,659.0 448.0,659.0 450.0,659.0 452.0,659.0 454.0,659.0 456.0,659.0 458.0,658.0 460.0,657.0 462.0,656.0 464.0,655.0 466.0,654.0 468.0,653.0 470.0,652.0 472.0,651.0 474.0,650.0 476.0,650.0 478.0,649.0 480.0,649.0 482.0,648.0 484.0,648.0 486.0,649.0 488.0,649.0 490.0,650.0 492.0,650.0 494.0,651.0 496.0,652.0 498.0,653.0 500.0,654.0 502.0,655.0 504.0,656.0 506.0,657.0 508.0,658.0 510.0,659.0 512.0,659.0 514.0,659.0 516.0,659.0 516.0,665.0 514.0,665.0 512.0,665.0 510.0,664.0 508.0,663.0 506.0,663.0 504.0,662.0 502.0,661.0 500.0,660.0 498.0,659.0 496.0,658.0 494.0,657.0 492.0,656.0 490.0,655.0 488.0,655.0 486.0,654.0 484.0,654.0 482.0,654.0 480.0,654.0 478.0,655.0 476.0,655.0 474.0,656.0 472.0,657.0 470.0,658.0 468.0,659.0 466.0,660.0 464.0,661.0 462.0,662.0 460.0,663.0 458.0,663.0 456.0,664.0 454.0,665.0 452.0,665.0 450.0,665.0 448.0,665.0 446.0,665.0 444.0,664.0 442.0,663.0 440.0,663.0 438.0,662.0 436.0,661.0 434.0,660.0 432.0,659.0 430.0,658.0 428.0,657.0 426.0,656.0 424.0,655.0 422.0,655.0 420.0,654.0 418.0,654.0 416.0,654.0 414.0,654.0 412.0,655.0 410.0,655.0 408.0,656.0 406.0,657.0 404.0,658.0 402.0,659.0 400.0,660.0 398.0,661.0 396.0,662.0 394.0,663.0 392.0,663.0 390.0,664.0 388.0,665.0 386.0,665.0 384.0,665.0 382.0,665.0 380.0,665.0 378.0,664.0 376.0,663.0 374.0,663.0 372.0,662.0 370.0,661.0 368.0,660.0 366.0,659.0 364.0,658.0 362.0,657.0 360.0,656.0 358.0,655.0 356.0,655.0 354.0,654.0 352.0,654.0 350.0,654.0 348.0,654.0 346.0,655.0 344.0,655.0 342.0,656.0 340.0,657.0 338.0,658.0 336.0,659.0 334.0,660.0 332.0,661.0 330.0,662.0 328.0,663.0 326.0,663.0 324.0,664.0 322.0,665.0" fill="#2f2a35"/><polygon points="322.0,678.0 324.0,677.0 326.0,676.0 328.0,676.0 330.0,675.0 332.0,674.0 334.0,673.0 336.0,672.0 338.0,671.0 340.0,670.0 342.0,669.0 344.0,668.0 346.0,668.0 348.0,667.0 350.0,667.0 352.0,667.0 354.0,667.0 356.0,668.0 358.0,668.0 360.0,669.0 362.0,670.0 364.0,671.0 366.0,672.0 368.0,673.0 370.0,674.0 372.0,675.0 374.0,676.0 376.0,676.0 378.0,677.0 380.0,678.0 382.0,678.0 384.0,678.0 386.0,678.0 388.0,678.0 390.0,677.0 392.0,676.0 394.0,676.0 396.0,675.0 398.0,674.0 400.0,673.0 402.0,672.0 404.0,671.0 406.0,670.0 408.0,669.0 410.0,668.0 412.0,668.0 414.0,667.0 416.0,667.0 418.0,667.0 420.0,667.0 422.0,668.0 424.0,668.0 426.0,669.0 428.0,670.0 430.0,671.0 432.0,672.0 434.0,673.0 436.0,674.0 438.0,675.0 440.0,676.0 442.0,676.0 444.0,677.0 446.0,678.0 448.0,678.0 450.0,678.0 452.0,678.0 454.0,678.0 456.0,677.0 458.0,676.0 460.0,676.0 462.0,675.0 464.0,674.0 466.0,673.0 468.0,672.0 470.0,671.0 472.0,670.0 474.0,669.0 476.0,668.0 478.0,668.0 480.0,667.0 482.0,667.0 484.0,667.0 486.0,667.0 488.0,668.0 490.0,668.0 492.0,669.0 494.0,670.0 496.0,671.0 498.0,672.0 500.0,673.0 502.0,674.0 504.0,675.0 506.0,676.0 508.0,676.0 510.0,677.0 512.0,678.0 514.0,678.0 516.0,678.0 516.0,684.0 514.0,683.0 512.0,683.0 510.0,683.0 508.0,682.0 506.0,681.0 504.0,680.0 502.0,679.0 500.0,678.0 498.0,677.0 496.0,676.0 494.0,675.0 492.0,674.0 490.0,674.0 488.0,673.0 486.0,673.0 484.0,673.0 482.0,673.0 480.0,673.0 478.0,673.0 476.0,674.0 474.0,674.0 472.0,675.0 470.0,676.0 468.0,677.0 466.0,678.0 464.0,679.0 462.0,680.0 460.0,681.0 458.0,682.0 456.0,683.0 454.0,683.0 452.0,683.0 450.0,684.0 448.0,683.0 446.0,683.0 444.0,683.0 442.0,682.0 440.0,681.0 438.0,680.0 436.0,679.0 434.0,678.0 432.0,677.0 430.0,676.0 428.0,675.0 426.0,674.0 424.0,674.0 422.0,673.0 420.0,673.0 418.0,673.0 416.0,673.0 414.0,673.0 412.0,673.0 410.0,674.0 408.0,674.0 406.0,675.0 404.0,676.0 402.0,677.0 400.0,678.0 398.0,679.0 396.0,680.0 394.0,681.0 392.0,682.0 390.0,683.0 388.0,683.0 386.0,683.0 384.0,684.0 382.0,683.0 380.0,683.0 378.0,683.0 376.0,682.0 374.0,681.0 372.0,680.0 370.0,679.0 368.0,678.0 366.0,677.0 364.0,676.0 362.0,675.0 360.0,674.0 358.0,674.0 356.0,673.0 354.0,673.0 352.0,673.0 350.0,673.0 348.0,673.0 346.0,673.0 344.0,674.0 342.0,674.0 340.0,675.0 338.0,676.0 336.0,677.0 334.0,678.0 332.0,679.0 330.0,680.0 328.0,681.0 326.0,682.0 324.0,683.0 322.0,683.0" fill="#2f2a35"/><polygon points="322.0,683.0 324.0,683.0 326.0,682.0 328.0,681.0 330.0,680.0 332.0,679.0 334.0,678.0 336.0,677.0 338.0,676.0 340.0,675.0 342.0,674.0 344.0,674.0 346.0,673.0 348.0,673.0 350.0,673.0 352.0,673.0 354.0,673.0 356.0,673.0 358.0,674.0 360.0,674.0 362.0,675.0 364.0,676.0 366.0,677.0 368.0,678.0 370.0,679.0 372.0,680.0 374.0,681.0 376.0,682.0 378.0,683.0 380.0,683.0 382.0,683.0 384.0,684.0 386.0,683.0 388.0,683.0 390.0,683.0 392.0,682.0 394.0,681.0 396.0,680.0 398.0,679.0 400.0,678.0 402.0,677.0 404.0,676.0 406.0,675.0 408.0,674.0 410.0,674.0 412.0,673.0 414.0,673.0 416.0,673.0 418.0,673.0 420.0,673.0 422.0,673.0 424.0,674.0 426.0,674.0 428.0,675.0 430.0,676.0 432.0,677.0 434.0,678.0 436.0,679.0 438.0,680.0 440.0,681.0 442.0,682.0 444.0,683.0 446.0,683.0 448.0,683.0 450.0,684.0 452.0,683.0 454.0,683.0 456.0,683.0 458.0,682.0 460.0,681.0 462.0,680.0 464.0,679.0 466.0,678.0 468.0,677.0 470.0,676.0 472.0,675.0 474.0,674.0 476.0,674.0 478.0,673.0 480.0,673.0 482.0,673.0 484.0,673.0 486.0,673.0 488.0,673.0 490.0,674.0 492.0,674.0 494.0,675.0 496.0,676.0 498.0,677.0 500.0,678.0 502.0,679.0 504.0,680.0 506.0,681.0 508.0,682.0 510.0,683.0 512.0,683.0 514.0,683.0 516.0,684.0 516.0,693.0 514.0,693.0 512.0,693.0 510.0,692.0 508.0,691.0 506.0,691.0 504.0,690.0 502.0,689.0 500.0,688.0 498.0,687.0 496.0,686.0 494.0,685.0 492.0,684.0 490.0,683.0 488.0,683.0 486.0,682.0 484.0,682.0 482.0,682.0 480.0,682.0 478.0,683.0 476.0,683.0 474.0,684.0 472.0,685.0 470.0,686.0 468.0,687.0 466.0,688.0 464.0,689.0 462.0,690.0 460.0,691.0 458.0,691.0 456.0,692.0 454.0,693.0 452.0,693.0 450.0,693.0 448.0,693.0 446.0,693.0 444.0,692.0 442.0,691.0 440.0,691.0 438.0,690.0 436.0,689.0 434.0,688.0 432.0,687.0 430.0,686.0 428.0,685.0 426.0,684.0 424.0,683.0 422.0,683.0 420.0,682.0 418.0,682.0 416.0,682.0 414.0,682.0 412.0,683.0 410.0,683.0 408.0,684.0 406.0,685.0 404.0,686.0 402.0,687.0 400.0,688.0 398.0,689.0 396.0,690.0 394.0,691.0 392.0,691.0 390.0,692.0 388.0,693.0 386.0,693.0 384.0,693.0 382.0,693.0 380.0,693.0 378.0,692.0 376.0,691.0 374.0,691.0 372.0,690.0 370.0,689.0 368.0,688.0 366.0,687.0 364.0,686.0 362.0,685.0 360.0,684.0 358.0,683.0 356.0,683.0 354.0,682.0 352.0,682.0 350.0,682.0 348.0,682.0 346.0,683.0 344.0,683.0 342.0,684.0 340.0,685.0 338.0,686.0 336.0,687.0 334.0,688.0 332.0,689.0 330.0,690.0 328.0,691.0 326.0,691.0 324.0,692.0 322.0,693.0" fill="#3e3449"/><polygon points="322.0,693.0 324.0,692.0 326.0,691.0 328.0,691.0 330.0,690.0 332.0,689.0 334.0,688.0 336.0,687.0 338.0,686.0 340.0,685.0 342.0,684.0 344.0,683.0 346.0,683.0 348.0,682.0 350.0,682.0 352.0,682.0 354.0,682.0 356.0,683.0 358.0,683.0 360.0,684.0 362.0,685.0 364.0,686.0 366.0,687.0 368.0,688.0 370.0,689.0 372.0,690.0 374.0,691.0 376.0,691.0 378.0,692.0 380.0,693.0 382.0,693.0 384.0,693.0 386.0,693.0 388.0,693.0 390.0,692.0 392.0,691.0 394.0,691.0 396.0,690.0 398.0,689.0 400.0,688.0 402.0,687.0 404.0,686.0 406.0,685.0 408.0,684.0 410.0,683.0 412.0,683.0 414.0,682.0 416.0,682.0 418.0,682.0 420.0,682.0 422.0,683.0 424.0,683.0 426.0,684.0 428.0,685.0 430.0,686.0 432.0,687.0 434.0,688.0 436.0,689.0 438.0,690.0 440.0,691.0 442.0,691.0 444.0,692.0 446.0,693.0 448.0,693.0 450.0,693.0 452.0,693.0 454.0,693.0 456.0,692.0 458.0,691.0 460.0,691.0 462.0,690.0 464.0,689.0 466.0,688.0 468.0,687.0 470.0,686.0 472.0,685.0 474.0,684.0 476.0,683.0 478.0,683.0 480.0,682.0 482.0,682.0 484.0,682.0 486.0,682.0 488.0,683.0 490.0,683.0 492.0,684.0 494.0,685.0 496.0,686.0 498.0,687.0 500.0,688.0 502.0,689.0 504.0,690.0 506.0,691.0 508.0,691.0 510.0,692.0 512.0,693.0 514.0,693.0 516.0,693.0 516.0,698.0 514.0,698.0 512.0,698.0 510.0,698.0 508.0,697.0 506.0,696.0 504.0,695.0 502.0,694.0 500.0,693.0 498.0,692.0 496.0,691.0 494.0,690.0 492.0,689.0 490.0,689.0 488.0,688.0 486.0,688.0 484.0,688.0 482.0,688.0 480.0,688.0 478.0,688.0 476.0,689.0 474.0,689.0 472.0,690.0 470.0,691.0 468.0,692.0 466.0,693.0 464.0,694.0 462.0,695.0 460.0,696.0 458.0,697.0 456.0,698.0 454.0,698.0 452.0,698.0 450.0,698.0 448.0,698.0 446.0,698.0 444.0,698.0 442.0,697.0 440.0,696.0 438.0,695.0 436.0,694.0 434.0,693.0 432.0,692.0 430.0,691.0 428.0,690.0 426.0,689.0 424.0,689.0 422.0,688.0 420.0,688.0 418.0,688.0 416.0,688.0 414.0,688.0 412.0,688.0 410.0,689.0 408.0,689.0 406.0,690.0 404.0,691.0 402.0,692.0 400.0,693.0 398.0,694.0 396.0,695.0 394.0,696.0 392.0,697.0 390.0,698.0 388.0,698.0 386.0,698.0 384.0,698.0 382.0,698.0 380.0,698.0 378.0,698.0 376.0,697.0 374.0,696.0 372.0,695.0 370.0,694.0 368.0,693.0 366.0,692.0 364.0,691.0 362.0,690.0 360.0,689.0 358.0,689.0 356.0,688.0 354.0,688.0 352.0,688.0 350.0,688.0 348.0,688.0 346.0,688.0 344.0,689.0 342.0,689.0 340.0,690.0 338.0,691.0 336.0,692.0 334.0,693.0 332.0,694.0 330.0,695.0 328.0,696.0 326.0,697.0 324.0,698.0 322.0,698.0" fill="#2f2a35"/><polygon points="322.0,711.0 324.0,711.0 326.0,710.0 328.0,709.0 330.0,708.0 332.0,707.0 334.0,706.0 336.0,705.0 338.0,704.0 340.0,703.0 342.0,702.0 344.0,702.0 346.0,701.0 348.0,701.0 350.0,701.0 352.0,701.0 354.0,701.0 356.0,701.0 358.0,702.0 360.0,702.0 362.0,703.0 364.0,704.0 366.0,705.0 368.0,706.0 370.0,707.0 372.0,708.0 374.0,709.0 376.0,710.0 378.0,711.0 380.0,711.0 382.0,712.0 384.0,712.0 386.0,712.0 388.0,711.0 390.0,711.0 392.0,710.0 394.0,709.0 396.0,708.0 398.0,707.0 400.0,706.0 402.0,705.0 404.0,704.0 406.0,703.0 408.0,702.0 410.0,702.0 412.0,701.0 414.0,701.0 416.0,701.0 418.0,701.0 420.0,701.0 422.0,701.0 424.0,702.0 426.0,702.0 428.0,703.0 430.0,704.0 432.0,705.0 434.0,706.0 436.0,707.0 438.0,708.0 440.0,709.0 442.0,710.0 444.0,711.0 446.0,711.0 448.0,712.0 450.0,712.0 452.0,712.0 454.0,711.0 456.0,711.0 458.0,710.0 460.0,709.0 462.0,708.0 464.0,707.0 466.0,706.0 468.0,705.0 470.0,704.0 472.0,703.0 474.0,702.0 476.0,702.0 478.0,701.0 480.0,701.0 482.0,701.0 484.0,701.0 486.0,701.0 488.0,701.0 490.0,702.0 492.0,702.0 494.0,703.0 496.0,704.0 498.0,705.0 500.0,706.0 502.0,707.0 504.0,708.0 506.0,709.0 508.0,710.0 510.0,711.0 512.0,711.0 514.0,712.0 516.0,712.0 516.0,717.0 514.0,717.0 512.0,717.0 510.0,716.0 508.0,716.0 506.0,715.0 504.0,714.0 502.0,713.0 500.0,712.0 498.0,711.0 496.0,710.0 494.0,709.0 492.0,708.0 490.0,707.0 488.0,707.0 486.0,706.0 484.0,706.0 482.0,706.0 480.0,706.0 478.0,707.0 476.0,707.0 474.0,708.0 472.0,709.0 470.0,710.0 468.0,711.0 466.0,712.0 464.0,713.0 462.0,714.0 460.0,715.0 458.0,716.0 456.0,716.0 454.0,717.0 452.0,717.0 450.0,717.0 448.0,717.0 446.0,717.0 444.0,716.0 442.0,716.0 440.0,715.0 438.0,714.0 436.0,713.0 434.0,712.0 432.0,711.0 430.0,710.0 428.0,709.0 426.0,708.0 424.0,707.0 422.0,707.0 420.0,706.0 418.0,706.0 416.0,706.0 414.0,706.0 412.0,707.0 410.0,707.0 408.0,708.0 406.0,709.0 404.0,710.0 402.0,711.0 400.0,712.0 398.0,713.0 396.0,714.0 394.0,715.0 392.0,716.0 390.0,716.0 388.0,717.0 386.0,717.0 384.0,717.0 382.0,717.0 380.0,717.0 378.0,716.0 376.0,716.0 374.0,715.0 372.0,714.0 370.0,713.0 368.0,712.0 366.0,711.0 364.0,710.0 362.0,709.0 360.0,708.0 358.0,707.0 356.0,707.0 354.0,706.0 352.0,706.0 350.0,706.0 348.0,706.0 346.0,707.0 344.0,707.0 342.0,708.0 340.0,709.0 338.0,710.0 336.0,711.0 334.0,712.0 332.0,713.0 330.0,714.0 328.0,715.0 326.0,716.0 324.0,716.0 322.0,717.0" fill="#2f2a35"/><polygon points="322.0,717.0 324.0,716.0 326.0,716.0 328.0,715.0 330.0,714.0 332.0,713.0 334.0,712.0 336.0,711.0 338.0,710.0 340.0,709.0 342.0,708.0 344.0,707.0 346.0,707.0 348.0,706.0 350.0,706.0 352.0,706.0 354.0,706.0 356.0,707.0 358.0,707.0 360.0,708.0 362.0,709.0 364.0,710.0 366.0,711.0 368.0,712.0 370.0,713.0 372.0,714.0 374.0,715.0 376.0,716.0 378.0,716.0 380.0,717.0 382.0,717.0 384.0,717.0 386.0,717.0 388.0,717.0 390.0,716.0 392.0,716.0 394.0,715.0 396.0,714.0 398.0,713.0 400.0,712.0 402.0,711.0 404.0,710.0 406.0,709.0 408.0,708.0 410.0,707.0 412.0,707.0 414.0,706.0 416.0,706.0 418.0,706.0 420.0,706.0 422.0,707.0 424.0,707.0 426.0,708.0 428.0,709.0 430.0,710.0 432.0,711.0 434.0,712.0 436.0,713.0 438.0,714.0 440.0,715.0 442.0,716.0 444.0,716.0 446.0,717.0 448.0,717.0 450.0,717.0 452.0,717.0 454.0,717.0 456.0,716.0 458.0,716.0 460.0,715.0 462.0,714.0 464.0,713.0 466.0,712.0 468.0,711.0 470.0,710.0 472.0,709.0 474.0,708.0 476.0,707.0 478.0,707.0 480.0,706.0 482.0,706.0 484.0,706.0 486.0,706.0 488.0,707.0 490.0,707.0 492.0,708.0 494.0,709.0 496.0,710.0 498.0,711.0 500.0,712.0 502.0,713.0 504.0,714.0 506.0,715.0 508.0,716.0 510.0,716.0 512.0,717.0 514.0,717.0 516.0,717.0 516.0,727.0 514.0,727.0 512.0,726.0 510.0,726.0 508.0,725.0 506.0,724.0 504.0,723.0 502.0,722.0 500.0,721.0 498.0,720.0 496.0,719.0 494.0,718.0 492.0,717.0 490.0,717.0 488.0,716.0 486.0,716.0 484.0,716.0 482.0,716.0 480.0,716.0 478.0,716.0 476.0,717.0 474.0,717.0 472.0,718.0 470.0,719.0 468.0,720.0 466.0,721.0 464.0,722.0 462.0,723.0 460.0,724.0 458.0,725.0 456.0,726.0 454.0,726.0 452.0,727.0 450.0,727.0 448.0,727.0 446.0,726.0 444.0,726.0 442.0,725.0 440.0,724.0 438.0,723.0 436.0,722.0 434.0,721.0 432.0,720.0 430.0,719.0 428.0,718.0 426.0,717.0 424.0,717.0 422.0,716.0 420.0,716.0 418.0,716.0 416.0,716.0 414.0,716.0 412.0,716.0 410.0,717.0 408.0,717.0 406.0,718.0 404.0,719.0 402.0,720.0 400.0,721.0 398.0,722.0 396.0,723.0 394.0,724.0 392.0,725.0 390.0,726.0 388.0,726.0 386.0,727.0 384.0,727.0 382.0,727.0 380.0,726.0 378.0,726.0 376.0,725.0 374.0,724.0 372.0,723.0 370.0,722.0 368.0,721.0 366.0,720.0 364.0,719.0 362.0,718.0 360.0,717.0 358.0,717.0 356.0,716.0 354.0,716.0 352.0,716.0 350.0,716.0 348.0,716.0 346.0,716.0 344.0,717.0 342.0,717.0 340.0,718.0 338.0,719.0 336.0,720.0 334.0,721.0 332.0,722.0 330.0,723.0 328.0,724.0 326.0,725.0 324.0,726.0 322.0,726.0" fill="#3e3449"/><polygon points="322.0,726.0 324.0,726.0 326.0,725.0 328.0,724.0 330.0,723.0 332.0,722.0 334.0,721.0 336.0,720.0 338.0,719.0 340.0,718.0 342.0,717.0 344.0,717.0 346.0,716.0 348.0,716.0 350.0,716.0 352.0,716.0 354.0,716.0 356.0,716.0 358.0,717.0 360.0,717.0 362.0,718.0 364.0,719.0 366.0,720.0 368.0,721.0 370.0,722.0 372.0,723.0 374.0,724.0 376.0,725.0 378.0,726.0 380.0,726.0 382.0,727.0 384.0,727.0 386.0,727.0 388.0,726.0 390.0,726.0 392.0,725.0 394.0,724.0 396.0,723.0 398.0,722.0 400.0,721.0 402.0,720.0 404.0,719.0 406.0,718.0 408.0,717.0 410.0,717.0 412.0,716.0 414.0,716.0 416.0,716.0 418.0,716.0 420.0,716.0 422.0,716.0 424.0,717.0 426.0,717.0 428.0,718.0 430.0,719.0 432.0,720.0 434.0,721.0 436.0,722.0 438.0,723.0 440.0,724.0 442.0,725.0 444.0,726.0 446.0,726.0 448.0,727.0 450.0,727.0 452.0,727.0 454.0,726.0 456.0,726.0 458.0,725.0 460.0,724.0 462.0,723.0 464.0,722.0 466.0,721.0 468.0,720.0 470.0,719.0 472.0,718.0 474.0,717.0 476.0,717.0 478.0,716.0 480.0,716.0 482.0,716.0 484.0,716.0 486.0,716.0 488.0,716.0 490.0,717.0 492.0,717.0 494.0,718.0 496.0,719.0 498.0,720.0 500.0,721.0 502.0,722.0 504.0,723.0 506.0,724.0 508.0,725.0 510.0,726.0 512.0,726.0 514.0,727.0 516.0,727.0 516.0,732.0 514.0,732.0 512.0,732.0 510.0,731.0 508.0,731.0 506.0,730.0 504.0,729.0 502.0,728.0 500.0,727.0 498.0,726.0 496.0,725.0 494.0,724.0 492.0,723.0 490.0,722.0 488.0,722.0 486.0,721.0 484.0,721.0 482.0,721.0 480.0,721.0 478.0,722.0 476.0,722.0 474.0,723.0 472.0,724.0 470.0,725.0 468.0,726.0 466.0,727.0 464.0,728.0 462.0,729.0 460.0,730.0 458.0,731.0 456.0,731.0 454.0,732.0 452.0,732.0 450.0,732.0 448.0,732.0 446.0,732.0 444.0,731.0 442.0,731.0 440.0,730.0 438.0,729.0 436.0,728.0 434.0,727.0 432.0,726.0 430.0,725.0 428.0,724.0 426.0,723.0 424.0,722.0 422.0,722.0 420.0,721.0 418.0,721.0 416.0,721.0 414.0,721.0 412.0,722.0 410.0,722.0 408.0,723.0 406.0,724.0 404.0,725.0 402.0,726.0 400.0,727.0 398.0,728.0 396.0,729.0 394.0,730.0 392.0,731.0 390.0,731.0 388.0,732.0 386.0,732.0 384.0,732.0 382.0,732.0 380.0,732.0 378.0,731.0 376.0,731.0 374.0,730.0 372.0,729.0 370.0,728.0 368.0,727.0 366.0,726.0 364.0,725.0 362.0,724.0 360.0,723.0 358.0,722.0 356.0,722.0 354.0,721.0 352.0,721.0 350.0,721.0 348.0,721.0 346.0,722.0 344.0,722.0 342.0,723.0 340.0,724.0 338.0,725.0 336.0,726.0 334.0,727.0 332.0,728.0 330.0,729.0 328.0,730.0 326.0,731.0 324.0,731.0 322.0,732.0" fill="#2f2a35"/><polygon points="322.0,745.0 324.0,744.0 326.0,744.0 328.0,743.0 330.0,742.0 332.0,741.0 334.0,740.0 336.0,739.0 338.0,738.0 340.0,737.0 342.0,736.0 344.0,735.0 346.0,735.0 348.0,734.0 350.0,734.0 352.0,734.0 354.0,734.0 356.0,735.0 358.0,735.0 360.0,736.0 362.0,737.0 364.0,738.0 366.0,739.0 368.0,740.0 370.0,741.0 372.0,742.0 374.0,743.0 376.0,744.0 378.0,744.0 380.0,745.0 382.0,745.0 384.0,745.0 386.0,745.0 388.0,745.0 390.0,744.0 392.0,744.0 394.0,743.0 396.0,742.0 398.0,741.0 400.0,740.0 402.0,739.0 404.0,738.0 406.0,737.0 408.0,736.0 410.0,735.0 412.0,735.0 414.0,734.0 416.0,734.0 418.0,734.0 420.0,734.0 422.0,735.0 424.0,735.0 426.0,736.0 428.0,737.0 430.0,738.0 432.0,739.0 434.0,740.0 436.0,741.0 438.0,742.0 440.0,743.0 442.0,744.0 444.0,744.0 446.0,745.0 448.0,745.0 450.0,745.0 452.0,745.0 454.0,745.0 456.0,744.0 458.0,744.0 460.0,743.0 462.0,742.0 464.0,741.0 466.0,740.0 468.0,739.0 470.0,738.0 472.0,737.0 474.0,736.0 476.0,735.0 478.0,735.0 480.0,734.0 482.0,734.0 484.0,734.0 486.0,734.0 488.0,735.0 490.0,735.0 492.0,736.0 494.0,737.0 496.0,738.0 498.0,739.0 500.0,740.0 502.0,741.0 504.0,742.0 506.0,743.0 508.0,744.0 510.0,744.0 512.0,745.0 514.0,745.0 516.0,745.0 516.0,751.0 514.0,751.0 512.0,750.0 510.0,750.0 508.0,749.0 506.0,748.0 504.0,747.0 502.0,746.0 500.0,745.0 498.0,744.0 496.0,743.0 494.0,742.0 492.0,742.0 490.0,741.0 488.0,740.0 486.0,740.0 484.0,740.0 482.0,740.0 480.0,740.0 478.0,740.0 476.0,741.0 474.0,742.0 472.0,742.0 470.0,743.0 468.0,744.0 466.0,745.0 464.0,746.0 462.0,747.0 460.0,748.0 458.0,749.0 456.0,750.0 454.0,750.0 452.0,751.0 450.0,751.0 448.0,751.0 446.0,750.0 444.0,750.0 442.0,749.0 440.0,748.0 438.0,747.0 436.0,746.0 434.0,745.0 432.0,744.0 430.0,743.0 428.0,742.0 426.0,742.0 424.0,741.0 422.0,740.0 420.0,740.0 418.0,740.0 416.0,740.0 414.0,740.0 412.0,740.0 410.0,741.0 408.0,742.0 406.0,742.0 404.0,743.0 402.0,744.0 400.0,745.0 398.0,746.0 396.0,747.0 394.0,748.0 392.0,749.0 390.0,750.0 388.0,750.0 386.0,751.0 384.0,751.0 382.0,751.0 380.0,750.0 378.0,750.0 376.0,749.0 374.0,748.0 372.0,747.0 370.0,746.0 368.0,745.0 366.0,744.0 364.0,743.0 362.0,742.0 360.0,742.0 358.0,741.0 356.0,740.0 354.0,740.0 352.0,740.0 350.0,740.0 348.0,740.0 346.0,740.0 344.0,741.0 342.0,742.0 340.0,742.0 338.0,743.0 336.0,744.0 334.0,745.0 332.0,746.0 330.0,747.0 328.0,748.0 326.0,749.0 324.0,750.0 322.0,750.0" fill="#2f2a35"/><polygon points="322.0,750.0 324.0,750.0 326.0,749.0 328.0,748.0 330.0,747.0 332.0,746.0 334.0,745.0 336.0,744.0 338.0,743.0 340.0,742.0 342.0,742.0 344.0,741.0 346.0,740.0 348.0,740.0 350.0,740.0 352.0,740.0 354.0,740.0 356.0,740.0 358.0,741.0 360.0,742.0 362.0,742.0 364.0,743.0 366.0,744.0 368.0,745.0 370.0,746.0 372.0,747.0 374.0,748.0 376.0,749.0 378.0,750.0 380.0,750.0 382.0,751.0 384.0,751.0 386.0,751.0 388.0,750.0 390.0,750.0 392.0,749.0 394.0,748.0 396.0,747.0 398.0,746.0 400.0,745.0 402.0,744.0 404.0,743.0 406.0,742.0 408.0,742.0 410.0,741.0 412.0,740.0 414.0,740.0 416.0,740.0 418.0,740.0 420.0,740.0 422.0,740.0 424.0,741.0 426.0,742.0 428.0,742.0 430.0,743.0 432.0,744.0 434.0,745.0 436.0,746.0 438.0,747.0 440.0,748.0 442.0,749.0 444.0,750.0 446.0,750.0 448.0,751.0 450.0,751.0 452.0,751.0 454.0,750.0 456.0,750.0 458.0,749.0 460.0,748.0 462.0,747.0 464.0,746.0 466.0,745.0 468.0,744.0 470.0,743.0 472.0,742.0 474.0,742.0 476.0,741.0 478.0,740.0 480.0,740.0 482.0,740.0 484.0,740.0 486.0,740.0 488.0,740.0 490.0,741.0 492.0,742.0 494.0,742.0 496.0,743.0 498.0,744.0 500.0,745.0 502.0,746.0 504.0,747.0 506.0,748.0 508.0,749.0 510.0,750.0 512.0,750.0 514.0,751.0 516.0,751.0 516.0,760.0 514.0,760.0 512.0,760.0 510.0,759.0 508.0,759.0 506.0,758.0 504.0,757.0 502.0,756.0 500.0,755.0 498.0,754.0 496.0,753.0 494.0,752.0 492.0,751.0 490.0,750.0 488.0,750.0 486.0,749.0 484.0,749.0 482.0,749.0 480.0,749.0 478.0,750.0 476.0,750.0 474.0,751.0 472.0,752.0 470.0,753.0 468.0,754.0 466.0,755.0 464.0,756.0 462.0,757.0 460.0,758.0 458.0,759.0 456.0,759.0 454.0,760.0 452.0,760.0 450.0,760.0 448.0,760.0 446.0,760.0 444.0,759.0 442.0,759.0 440.0,758.0 438.0,757.0 436.0,756.0 434.0,755.0 432.0,754.0 430.0,753.0 428.0,752.0 426.0,751.0 424.0,750.0 422.0,750.0 420.0,749.0 418.0,749.0 416.0,749.0 414.0,749.0 412.0,750.0 410.0,750.0 408.0,751.0 406.0,752.0 404.0,753.0 402.0,754.0 400.0,755.0 398.0,756.0 396.0,757.0 394.0,758.0 392.0,759.0 390.0,759.0 388.0,760.0 386.0,760.0 384.0,760.0 382.0,760.0 380.0,760.0 378.0,759.0 376.0,759.0 374.0,758.0 372.0,757.0 370.0,756.0 368.0,755.0 366.0,754.0 364.0,753.0 362.0,752.0 360.0,751.0 358.0,750.0 356.0,750.0 354.0,749.0 352.0,749.0 350.0,749.0 348.0,749.0 346.0,750.0 344.0,750.0 342.0,751.0 340.0,752.0 338.0,753.0 336.0,754.0 334.0,755.0 332.0,756.0 330.0,757.0 328.0,758.0 326.0,759.0 324.0,759.0 322.0,760.0" fill="#3e3449"/><polygon points="322.0,760.0 324.0,759.0 326.0,759.0 328.0,758.0 330.0,757.0 332.0,756.0 334.0,755.0 336.0,754.0 338.0,753.0 340.0,752.0 342.0,751.0 344.0,750.0 346.0,750.0 348.0,749.0 350.0,749.0 352.0,749.0 354.0,749.0 356.0,750.0 358.0,750.0 360.0,751.0 362.0,752.0 364.0,753.0 366.0,754.0 368.0,755.0 370.0,756.0 372.0,757.0 374.0,758.0 376.0,759.0 378.0,759.0 380.0,760.0 382.0,760.0 384.0,760.0 386.0,760.0 388.0,760.0 390.0,759.0 392.0,759.0 394.0,758.0 396.0,757.0 398.0,756.0 400.0,755.0 402.0,754.0 404.0,753.0 406.0,752.0 408.0,751.0 410.0,750.0 412.0,750.0 414.0,749.0 416.0,749.0 418.0,749.0 420.0,749.0 422.0,750.0 424.0,750.0 426.0,751.0 428.0,752.0 430.0,753.0 432.0,754.0 434.0,755.0 436.0,756.0 438.0,757.0 440.0,758.0 442.0,759.0 444.0,759.0 446.0,760.0 448.0,760.0 450.0,760.0 452.0,760.0 454.0,760.0 456.0,759.0 458.0,759.0 460.0,758.0 462.0,757.0 464.0,756.0 466.0,755.0 468.0,754.0 470.0,753.0 472.0,752.0 474.0,751.0 476.0,750.0 478.0,750.0 480.0,749.0 482.0,749.0 484.0,749.0 486.0,749.0 488.0,750.0 490.0,750.0 492.0,751.0 494.0,752.0 496.0,753.0 498.0,754.0 500.0,755.0 502.0,756.0 504.0,757.0 506.0,758.0 508.0,759.0 510.0,759.0 512.0,760.0 514.0,760.0 516.0,760.0 516.0,766.0 514.0,766.0 512.0,765.0 510.0,765.0 508.0,764.0 506.0,763.0 504.0,762.0 502.0,761.0 500.0,760.0 498.0,759.0 496.0,758.0 494.0,757.0 492.0,757.0 490.0,756.0 488.0,755.0 486.0,755.0 484.0,755.0 482.0,755.0 480.0,755.0 478.0,755.0 476.0,756.0 474.0,757.0 472.0,757.0 470.0,758.0 468.0,759.0 466.0,760.0 464.0,761.0 462.0,762.0 460.0,763.0 458.0,764.0 456.0,765.0 454.0,765.0 452.0,766.0 450.0,766.0 448.0,766.0 446.0,765.0 444.0,765.0 442.0,764.0 440.0,763.0 438.0,762.0 436.0,761.0 434.0,760.0 432.0,759.0 430.0,758.0 428.0,757.0 426.0,757.0 424.0,756.0 422.0,755.0 420.0,755.0 418.0,755.0 416.0,755.0 414.0,755.0 412.0,755.0 410.0,756.0 408.0,757.0 406.0,757.0 404.0,758.0 402.0,759.0 400.0,760.0 398.0,761.0 396.0,762.0 394.0,763.0 392.0,764.0 390.0,765.0 388.0,765.0 386.0,766.0 384.0,766.0 382.0,766.0 380.0,765.0 378.0,765.0 376.0,764.0 374.0,763.0 372.0,762.0 370.0,761.0 368.0,760.0 366.0,759.0 364.0,758.0 362.0,757.0 360.0,757.0 358.0,756.0 356.0,755.0 354.0,755.0 352.0,755.0 350.0,755.0 348.0,755.0 346.0,755.0 344.0,756.0 342.0,757.0 340.0,757.0 338.0,758.0 336.0,759.0 334.0,760.0 332.0,761.0 330.0,762.0 328.0,763.0 326.0,764.0 324.0,765.0 322.0,765.0" fill="#2f2a35"/></g></svg>
<svg style="left:312px;top:505px;" width="205" height="45" viewBox="312 505 205 45"><polygon points="317.0,532.0 317.0,519.0 319.0,519.0 319.0,519.0 321.0,519.0 321.0,519.0 323.0,519.0 323.0,519.0 325.0,519.0 325.0,519.0 327.0,519.0 327.0,519.0 329.0,519.0 329.0,517.0 331.0,517.0 331.0,519.0 333.0,519.0 333.0,519.0 335.0,519.0 335.0,517.0 337.0,517.0 337.0,518.0 339.0,518.0 339.0,519.0 341.0,519.0 341.0,519.0 343.0,519.0 343.0,519.0 345.0,519.0 345.0,519.0 347.0,519.0 347.0,519.0 349.0,519.0 349.0,519.0 351.0,519.0 351.0,519.0 353.0,519.0 353.0,518.0 355.0,518.0 355.0,518.0 357.0,518.0 357.0,519.0 359.0,519.0 359.0,519.0 361.0,519.0 361.0,518.0 363.0,518.0 363.0,519.0 365.0,519.0 365.0,519.0 367.0,519.0 367.0,519.0 369.0,519.0 369.0,519.0 371.0,519.0 371.0,519.0 373.0,519.0 373.0,518.0 375.0,518.0 375.0,519.0 377.0,519.0 377.0,518.0 379.0,518.0 379.0,519.0 381.0,519.0 381.0,518.0 383.0,518.0 383.0,519.0 385.0,519.0 385.0,519.0 387.0,519.0 387.0,519.0 389.0,519.0 389.0,519.0 391.0,519.0 391.0,519.0 393.0,519.0 393.0,518.0 395.0,518.0 395.0,519.0 397.0,519.0 397.0,517.0 399.0,517.0 399.0,519.0 401.0,519.0 401.0,519.0 403.0,519.0 403.0,518.0 405.0,518.0 405.0,519.0 407.0,519.0 407.0,518.0 409.0,518.0 409.0,518.0 411.0,518.0 411.0,519.0 413.0,519.0 413.0,519.0 415.0,519.0 415.0,518.0 417.0,518.0 417.0,519.0 419.0,519.0 419.0,517.0 421.0,517.0 421.0,519.0 423.0,519.0 423.0,518.0 425.0,518.0 425.0,519.0 427.0,519.0 427.0,518.0 429.0,518.0 429.0,519.0 431.0,519.0 431.0,519.0 433.0,519.0 433.0,519.0 435.0,519.0 435.0,519.0 437.0,519.0 437.0,517.0 439.0,517.0 439.0,519.0 441.0,519.0 441.0,518.0 443.0,518.0 443.0,519.0 445.0,519.0 445.0,519.0 447.0,519.0 447.0,519.0 449.0,519.0 449.0,518.0 451.0,518.0 451.0,517.0 453.0,517.0 453.0,517.0 455.0,517.0 455.0,519.0 457.0,519.0 457.0,519.0 459.0,519.0 459.0,518.0 461.0,518.0 461.0,519.0 463.0,519.0 463.0,517.0 465.0,517.0 465.0,519.0 467.0,519.0 467.0,519.0 469.0,519.0 469.0,519.0 471.0,519.0 471.0,519.0 473.0,519.0 473.0,519.0 475.0,519.0 475.0,519.0 477.0,519.0 477.0,518.0 479.0,518.0 479.0,518.0 481.0,518.0 481.0,519.0 483.0,519.0 483.0,518.0 485.0,518.0 485.0,518.0 487.0,518.0 487.0,519.0 489.0,519.0 489.0,519.0 491.0,519.0 491.0,519.0 493.0,519.0 493.0,518.0 495.0,518.0 495.0,518.0 497.0,518.0 497.0,519.0 499.0,519.0 499.0,517.0 501.0,517.0 501.0,517.0 503.0,517.0 503.0,518.0 505.0,518.0 505.0,519.0 507.0,519.0 507.0,519.0 509.0,519.0 509.0,532.0" fill="#bb5e34"/><polygon points="317.0,530.0 317.0,541.0 319.0,541.0 319.0,536.0 321.0,536.0 321.0,537.0 323.0,537.0 323.0,539.0 325.0,539.0 325.0,541.0 327.0,541.0 327.0,535.0 329.0,535.0 329.0,536.0 331.0,536.0 331.0,534.0 333.0,534.0 333.0,537.0 335.0,537.0 335.0,534.0 337.0,534.0 337.0,536.0 339.0,536.0 339.0,537.0 341.0,537.0 341.0,535.0 343.0,535.0 343.0,535.0 345.0,535.0 345.0,534.0 347.0,534.0 347.0,536.0 349.0,536.0 349.0,539.0 351.0,539.0 351.0,534.0 353.0,534.0 353.0,539.0 355.0,539.0 355.0,534.0 357.0,534.0 357.0,541.0 359.0,541.0 359.0,535.0 361.0,535.0 361.0,541.0 363.0,541.0 363.0,534.0 365.0,534.0 365.0,539.0 367.0,539.0 367.0,539.0 369.0,539.0 369.0,539.0 371.0,539.0 371.0,535.0 373.0,535.0 373.0,534.0 375.0,534.0 375.0,534.0 377.0,534.0 377.0,537.0 379.0,537.0 379.0,534.0 381.0,534.0 381.0,534.0 383.0,534.0 383.0,537.0 385.0,537.0 385.0,536.0 387.0,536.0 387.0,537.0 389.0,537.0 389.0,541.0 391.0,541.0 391.0,539.0 393.0,539.0 393.0,534.0 395.0,534.0 395.0,541.0 397.0,541.0 397.0,539.0 399.0,539.0 399.0,536.0 401.0,536.0 401.0,535.0 403.0,535.0 403.0,536.0 405.0,536.0 405.0,537.0 407.0,537.0 407.0,537.0 409.0,537.0 409.0,541.0 411.0,541.0 411.0,535.0 413.0,535.0 413.0,537.0 415.0,537.0 415.0,537.0 417.0,537.0 417.0,539.0 419.0,539.0 419.0,536.0 421.0,536.0 421.0,541.0 423.0,541.0 423.0,536.0 425.0,536.0 425.0,536.0 427.0,536.0 427.0,534.0 429.0,534.0 429.0,537.0 431.0,537.0 431.0,534.0 433.0,534.0 433.0,534.0 435.0,534.0 435.0,535.0 437.0,535.0 437.0,536.0 439.0,536.0 439.0,537.0 441.0,537.0 441.0,534.0 443.0,534.0 443.0,535.0 445.0,535.0 445.0,534.0 447.0,534.0 447.0,534.0 449.0,534.0 449.0,537.0 451.0,537.0 451.0,536.0 453.0,536.0 453.0,541.0 455.0,541.0 455.0,537.0 457.0,537.0 457.0,539.0 459.0,539.0 459.0,534.0 461.0,534.0 461.0,537.0 463.0,537.0 463.0,535.0 465.0,535.0 465.0,541.0 467.0,541.0 467.0,539.0 469.0,539.0 469.0,536.0 471.0,536.0 471.0,541.0 473.0,541.0 473.0,535.0 475.0,535.0 475.0,536.0 477.0,536.0 477.0,537.0 479.0,537.0 479.0,536.0 481.0,536.0 481.0,539.0 483.0,539.0 483.0,534.0 485.0,534.0 485.0,541.0 487.0,541.0 487.0,537.0 489.0,537.0 489.0,539.0 491.0,539.0 491.0,535.0 493.0,535.0 493.0,534.0 495.0,534.0 495.0,541.0 497.0,541.0 497.0,537.0 499.0,537.0 499.0,539.0 501.0,539.0 501.0,535.0 503.0,535.0 503.0,536.0 505.0,536.0 505.0,534.0 507.0,534.0 507.0,535.0 509.0,535.0 509.0,530.0" fill="#ac512f"/><rect x="329" y="520" width="2" height="2" fill="#ca693c"/><rect x="335" y="520" width="2" height="2" fill="#ca693c"/><rect x="339" y="520" width="2" height="2" fill="#ca693c"/><rect x="345" y="520" width="2" height="2" fill="#9d4b1b"/><rect x="349" y="520" width="2" height="2" fill="#9d4b1b"/><rect x="377" y="520" width="2" height="2" fill="#c06034"/><rect x="389" y="520" width="2" height="2" fill="#c06034"/><rect x="397" y="520" width="2" height="2" fill="#9d4b1b"/><rect x="407" y="520" width="2" height="2" fill="#9d4b1b"/><rect x="417" y="520" width="2" height="2" fill="#9d4b1b"/><rect x="429" y="520" width="2" height="2" fill="#ca693c"/><rect x="467" y="520" width="2" height="2" fill="#c06034"/><rect x="479" y="520" width="2" height="2" fill="#c06034"/><rect x="485" y="520" width="2" height="2" fill="#9d4b1b"/><rect x="493" y="520" width="2" height="2" fill="#9d4b1b"/><rect x="501" y="520" width="2" height="2" fill="#9d4b1b"/><rect x="503" y="520" width="2" height="2" fill="#9d4b1b"/><rect x="325" y="522" width="2" height="2" fill="#9d4b1b"/><rect x="341" y="522" width="2" height="2" fill="#c06034"/><rect x="345" y="522" width="2" height="2" fill="#ca693c"/><rect x="367" y="522" width="2" height="2" fill="#9d4b1b"/><rect x="371" y="522" width="2" height="2" fill="#ca693c"/><rect x="375" y="522" width="2" height="2" fill="#9d4b1b"/><rect x="389" y="522" width="2" height="2" fill="#ca693c"/><rect x="391" y="522" width="2" height="2" fill="#ca693c"/><rect x="399" y="522" width="2" height="2" fill="#ca693c"/><rect x="401" y="522" width="2" height="2" fill="#9d4b1b"/><rect x="409" y="522" width="2" height="2" fill="#c06034"/><rect x="415" y="522" width="2" height="2" fill="#ca693c"/><rect x="421" y="522" width="2" height="2" fill="#ca693c"/><rect x="429" y="522" width="2" height="2" fill="#9d4b1b"/><rect x="431" y="522" width="2" height="2" fill="#9d4b1b"/><rect x="457" y="522" width="2" height="2" fill="#ca693c"/><rect x="467" y="522" width="2" height="2" fill="#c06034"/><rect x="471" y="522" width="2" height="2" fill="#ca693c"/><rect x="475" y="522" width="2" height="2" fill="#ca693c"/><rect x="477" y="522" width="2" height="2" fill="#c06034"/><rect x="481" y="522" width="2" height="2" fill="#9d4b1b"/><rect x="497" y="522" width="2" height="2" fill="#9d4b1b"/><rect x="505" y="522" width="2" height="2" fill="#ca693c"/><rect x="317" y="524" width="2" height="2" fill="#ca693c"/><rect x="333" y="524" width="2" height="2" fill="#9d4b1b"/><rect x="337" y="524" width="2" height="2" fill="#c06034"/><rect x="353" y="524" width="2" height="2" fill="#c06034"/><rect x="355" y="524" width="2" height="2" fill="#ca693c"/><rect x="357" y="524" width="2" height="2" fill="#ca693c"/><rect x="379" y="524" width="2" height="2" fill="#c06034"/><rect x="381" y="524" width="2" height="2" fill="#c06034"/><rect x="383" y="524" width="2" height="2" fill="#ca693c"/><rect x="393" y="524" width="2" height="2" fill="#ca693c"/><rect x="399" y="524" width="2" height="2" fill="#9d4b1b"/><rect x="417" y="524" width="2" height="2" fill="#9d4b1b"/><rect x="437" y="524" width="2" height="2" fill="#c06034"/><rect x="439" y="524" width="2" height="2" fill="#ca693c"/><rect x="441" y="524" width="2" height="2" fill="#c06034"/><rect x="443" y="524" width="2" height="2" fill="#c06034"/><rect x="477" y="524" width="2" height="2" fill="#9d4b1b"/><rect x="485" y="524" width="2" height="2" fill="#c06034"/><rect x="495" y="524" width="2" height="2" fill="#ca693c"/><rect x="497" y="524" width="2" height="2" fill="#c06034"/><rect x="323" y="526" width="2" height="2" fill="#ca693c"/><rect x="337" y="526" width="2" height="2" fill="#ca693c"/><rect x="339" y="526" width="2" height="2" fill="#ca693c"/><rect x="345" y="526" width="2" height="2" fill="#c06034"/><rect x="349" y="526" width="2" height="2" fill="#9d4b1b"/><rect x="353" y="526" width="2" height="2" fill="#ca693c"/><rect x="357" y="526" width="2" height="2" fill="#c06034"/><rect x="363" y="526" width="2" height="2" fill="#9d4b1b"/><rect x="385" y="526" width="2" height="2" fill="#ca693c"/><rect x="399" y="526" width="2" height="2" fill="#9d4b1b"/><rect x="403" y="526" width="2" height="2" fill="#c06034"/><rect x="407" y="526" width="2" height="2" fill="#9d4b1b"/><rect x="415" y="526" width="2" height="2" fill="#9d4b1b"/><rect x="417" y="526" width="2" height="2" fill="#ca693c"/><rect x="425" y="526" width="2" height="2" fill="#ca693c"/><rect x="431" y="526" width="2" height="2" fill="#9d4b1b"/><rect x="433" y="526" width="2" height="2" fill="#9d4b1b"/><rect x="435" y="526" width="2" height="2" fill="#9d4b1b"/><rect x="443" y="526" width="2" height="2" fill="#ca693c"/><rect x="467" y="526" width="2" height="2" fill="#9d4b1b"/><rect x="321" y="528" width="2" height="2" fill="#9d4b1b"/><rect x="351" y="528" width="2" height="2" fill="#ca693c"/><rect x="363" y="528" width="2" height="2" fill="#9d4b1b"/><rect x="365" y="528" width="2" height="2" fill="#9d4b1b"/><rect x="377" y="528" width="2" height="2" fill="#9d4b1b"/><rect x="383" y="528" width="2" height="2" fill="#9d4b1b"/><rect x="395" y="528" width="2" height="2" fill="#9d4b1b"/><rect x="403" y="528" width="2" height="2" fill="#c06034"/><rect x="407" y="528" width="2" height="2" fill="#ca693c"/><rect x="425" y="528" width="2" height="2" fill="#c06034"/><rect x="487" y="528" width="2" height="2" fill="#9d4b1b"/><rect x="497" y="528" width="2" height="2" fill="#9d4b1b"/><rect x="323" y="530" width="2" height="2" fill="#9d4b1b"/><rect x="333" y="530" width="2" height="2" fill="#9d4b1b"/><rect x="337" y="530" width="2" height="2" fill="#ca693c"/><rect x="339" y="530" width="2" height="2" fill="#9d4b1b"/><rect x="341" y="530" width="2" height="2" fill="#c06034"/><rect x="355" y="530" width="2" height="2" fill="#c06034"/><rect x="379" y="530" width="2" height="2" fill="#c06034"/><rect x="381" y="530" width="2" height="2" fill="#9d4b1b"/><rect x="401" y="530" width="2" height="2" fill="#9d4b1b"/><rect x="407" y="530" width="2" height="2" fill="#ca693c"/><rect x="411" y="530" width="2" height="2" fill="#c06034"/><rect x="431" y="530" width="2" height="2" fill="#9d4b1b"/><rect x="441" y="530" width="2" height="2" fill="#9d4b1b"/><rect x="443" y="530" width="2" height="2" fill="#ca693c"/><rect x="445" y="530" width="2" height="2" fill="#9d4b1b"/><rect x="459" y="530" width="2" height="2" fill="#ca693c"/><rect x="461" y="530" width="2" height="2" fill="#ca693c"/><rect x="475" y="530" width="2" height="2" fill="#ca693c"/><rect x="487" y="530" width="2" height="2" fill="#9d4b1b"/><rect x="497" y="530" width="2" height="2" fill="#9d4b1b"/><rect x="317" y="532" width="2" height="2" fill="#ca693c"/><rect x="321" y="532" width="2" height="2" fill="#ca693c"/><rect x="333" y="532" width="2" height="2" fill="#9d4b1b"/><rect x="347" y="532" width="2" height="2" fill="#9d4b1b"/><rect x="359" y="532" width="2" height="2" fill="#c06034"/><rect x="377" y="532" width="2" height="2" fill="#ca693c"/><rect x="405" y="532" width="2" height="2" fill="#9d4b1b"/><rect x="435" y="532" width="2" height="2" fill="#ca693c"/><rect x="453" y="532" width="2" height="2" fill="#9d4b1b"/><rect x="461" y="532" width="2" height="2" fill="#9d4b1b"/><rect x="471" y="532" width="2" height="2" fill="#ca693c"/><rect x="475" y="532" width="2" height="2" fill="#ca693c"/><rect x="485" y="532" width="2" height="2" fill="#9d4b1b"/><rect x="489" y="532" width="2" height="2" fill="#c06034"/><rect x="347" y="534" width="2" height="2" fill="#c06034"/><rect x="351" y="534" width="2" height="2" fill="#ca693c"/><rect x="381" y="534" width="2" height="2" fill="#c06034"/><rect x="389" y="534" width="2" height="2" fill="#9d4b1b"/><rect x="391" y="534" width="2" height="2" fill="#ca693c"/><rect x="403" y="534" width="2" height="2" fill="#9d4b1b"/><rect x="409" y="534" width="2" height="2" fill="#ca693c"/><rect x="427" y="534" width="2" height="2" fill="#9d4b1b"/><rect x="431" y="534" width="2" height="2" fill="#ca693c"/><rect x="441" y="534" width="2" height="2" fill="#ca693c"/><rect x="443" y="534" width="2" height="2" fill="#9d4b1b"/><rect x="447" y="534" width="2" height="2" fill="#9d4b1b"/><rect x="465" y="534" width="2" height="2" fill="#ca693c"/><rect x="469" y="534" width="2" height="2" fill="#c06034"/><rect x="483" y="534" width="2" height="2" fill="#c06034"/><rect x="487" y="534" width="2" height="2" fill="#9d4b1b"/><rect x="491" y="534" width="2" height="2" fill="#c06034"/><rect x="505" y="534" width="2" height="2" fill="#c06034"/><rect x="325" y="536" width="2" height="2" fill="#ca693c"/><rect x="327" y="536" width="2" height="2" fill="#9d4b1b"/><rect x="339" y="536" width="2" height="2" fill="#ca693c"/><rect x="345" y="536" width="2" height="2" fill="#c06034"/><rect x="357" y="536" width="2" height="2" fill="#ca693c"/><rect x="379" y="536" width="2" height="2" fill="#ca693c"/><rect x="381" y="536" width="2" height="2" fill="#c06034"/><rect x="407" y="536" width="2" height="2" fill="#ca693c"/><rect x="433" y="536" width="2" height="2" fill="#9d4b1b"/><rect x="443" y="536" width="2" height="2" fill="#c06034"/><rect x="453" y="536" width="2" height="2" fill="#c06034"/><rect x="459" y="536" width="2" height="2" fill="#9d4b1b"/><rect x="477" y="536" width="2" height="2" fill="#ca693c"/><rect x="485" y="536" width="2" height="2" fill="#ca693c"/><rect x="487" y="536" width="2" height="2" fill="#c06034"/><rect x="497" y="536" width="2" height="2" fill="#c06034"/><rect x="505" y="536" width="2" height="2" fill="#c06034"/></svg>
<svg style="left:495px;top:410px;" width="460" height="185" viewBox="495 410 460 185"><rect x="516" y="570" width="4" height="4" fill="#322e4d"/><rect x="520" y="570" width="4" height="4" fill="#322e4d"/><rect x="524" y="569" width="4" height="9" fill="#322e4d"/><rect x="528" y="569" width="4" height="7" fill="#322e4d"/><rect x="532" y="568" width="4" height="2" fill="#322e4d"/><rect x="536" y="567" width="3" height="9" fill="#322e4d"/><rect x="539" y="567" width="2" height="7" fill="#322e4d"/><rect x="541" y="566" width="2" height="3" fill="#322e4d"/><rect x="543" y="566" width="2" height="4" fill="#322e4d"/><rect x="545" y="566" width="3" height="9" fill="#322e4d"/><rect x="548" y="565" width="2" height="5" fill="#322e4d"/><rect x="550" y="565" width="4" height="2" fill="#322e4d"/><rect x="554" y="564" width="4" height="3" fill="#322e4d"/><rect x="558" y="564" width="2" height="7" fill="#322e4d"/><rect x="560" y="563" width="2" height="5" fill="#322e4d"/><rect x="562" y="563" width="3" height="3" fill="#322e4d"/><rect x="565" y="562" width="3" height="3" fill="#322e4d"/><rect x="568" y="562" width="2" height="3" fill="#322e4d"/><rect x="570" y="562" width="4" height="6" fill="#322e4d"/><rect x="574" y="561" width="3" height="3" fill="#322e4d"/><rect x="577" y="560" width="2" height="2" fill="#322e4d"/><rect x="579" y="560" width="2" height="3" fill="#322e4d"/><rect x="581" y="560" width="2" height="3" fill="#322e4d"/><rect x="583" y="559" width="2" height="4" fill="#322e4d"/><rect x="585" y="559" width="3" height="3" fill="#322e4d"/><rect x="588" y="559" width="4" height="7" fill="#322e4d"/><rect x="592" y="558" width="4" height="3" fill="#322e4d"/><rect x="596" y="557" width="2" height="7" fill="#322e4d"/><rect x="598" y="557" width="2" height="5" fill="#322e4d"/><rect x="600" y="557" width="3" height="2" fill="#322e4d"/><rect x="603" y="556" width="3" height="5" fill="#322e4d"/><rect x="606" y="556" width="2" height="3" fill="#322e4d"/><rect x="608" y="555" width="3" height="2" fill="#322e4d"/><rect x="611" y="555" width="3" height="4" fill="#322e4d"/><rect x="614" y="554" width="4" height="6" fill="#322e4d"/><rect x="618" y="554" width="2" height="6" fill="#322e4d"/><rect x="620" y="553" width="4" height="7" fill="#322e4d"/><rect x="624" y="553" width="3" height="2" fill="#322e4d"/><rect x="627" y="552" width="3" height="4" fill="#322e4d"/><rect x="630" y="552" width="3" height="5" fill="#322e4d"/><rect x="633" y="551" width="4" height="4" fill="#322e4d"/><rect x="637" y="551" width="2" height="5" fill="#322e4d"/><rect x="639" y="550" width="3" height="7" fill="#322e4d"/><rect x="642" y="550" width="2" height="2" fill="#322e4d"/><rect x="644" y="549" width="3" height="2" fill="#322e4d"/><rect x="647" y="549" width="4" height="4" fill="#322e4d"/><rect x="651" y="548" width="3" height="2" fill="#322e4d"/><rect x="654" y="548" width="4" height="9" fill="#322e4d"/><rect x="658" y="547" width="3" height="4" fill="#322e4d"/><rect x="661" y="547" width="3" height="6" fill="#322e4d"/><rect x="664" y="546" width="2" height="5" fill="#322e4d"/><rect x="666" y="546" width="2" height="7" fill="#322e4d"/><rect x="668" y="545" width="2" height="6" fill="#322e4d"/><rect x="670" y="545" width="2" height="2" fill="#322e4d"/><rect x="672" y="545" width="2" height="9" fill="#322e4d"/><rect x="674" y="544" width="3" height="4" fill="#322e4d"/><rect x="677" y="544" width="4" height="4" fill="#322e4d"/><rect x="681" y="543" width="4" height="4" fill="#322e4d"/><rect x="683" y="543" width="3" height="2" fill="#322e4d"/><rect x="686" y="542" width="4" height="7" fill="#322e4d"/><rect x="690" y="541" width="3" height="9" fill="#322e4d"/><rect x="693" y="540" width="3" height="2" fill="#322e4d"/><rect x="696" y="539" width="3" height="2" fill="#322e4d"/><rect x="699" y="538" width="2" height="4" fill="#322e4d"/><rect x="701" y="537" width="4" height="6" fill="#322e4d"/><rect x="705" y="536" width="3" height="3" fill="#322e4d"/><rect x="708" y="535" width="3" height="4" fill="#322e4d"/><rect x="711" y="534" width="4" height="6" fill="#322e4d"/><rect x="715" y="532" width="2" height="4" fill="#322e4d"/><rect x="717" y="531" width="4" height="4" fill="#322e4d"/><rect x="721" y="530" width="3" height="3" fill="#322e4d"/><rect x="724" y="529" width="2" height="7" fill="#322e4d"/><rect x="726" y="528" width="2" height="7" fill="#322e4d"/><rect x="728" y="528" width="4" height="4" fill="#322e4d"/><rect x="732" y="526" width="3" height="3" fill="#322e4d"/><rect x="735" y="525" width="4" height="2" fill="#322e4d"/><rect x="739" y="524" width="2" height="6" fill="#322e4d"/><rect x="741" y="523" width="4" height="5" fill="#322e4d"/><rect x="745" y="522" width="2" height="3" fill="#322e4d"/><rect x="747" y="521" width="4" height="6" fill="#322e4d"/><rect x="751" y="520" width="3" height="9" fill="#322e4d"/><rect x="754" y="519" width="3" height="5" fill="#322e4d"/><rect x="757" y="518" width="4" height="5" fill="#322e4d"/><rect x="761" y="517" width="2" height="2" fill="#322e4d"/><rect x="763" y="516" width="4" height="2" fill="#322e4d"/><rect x="767" y="515" width="3" height="4" fill="#322e4d"/><rect x="770" y="514" width="2" height="3" fill="#322e4d"/><rect x="772" y="513" width="4" height="6" fill="#322e4d"/><rect x="776" y="512" width="2" height="7" fill="#322e4d"/><rect x="778" y="511" width="3" height="2" fill="#322e4d"/><rect x="781" y="510" width="2" height="5" fill="#322e4d"/><rect x="783" y="509" width="3" height="3" fill="#322e4d"/><rect x="786" y="508" width="2" height="9" fill="#322e4d"/><rect x="788" y="507" width="3" height="4" fill="#322e4d"/><rect x="791" y="506" width="2" height="5" fill="#322e4d"/><rect x="793" y="506" width="4" height="9" fill="#322e4d"/><rect x="797" y="504" width="2" height="6" fill="#322e4d"/><rect x="799" y="504" width="3" height="5" fill="#322e4d"/><rect x="802" y="503" width="4" height="7" fill="#322e4d"/><rect x="806" y="501" width="3" height="5" fill="#322e4d"/><rect x="809" y="500" width="3" height="4" fill="#322e4d"/><rect x="812" y="499" width="3" height="5" fill="#322e4d"/><rect x="815" y="498" width="2" height="2" fill="#322e4d"/><rect x="817" y="498" width="3" height="9" fill="#322e4d"/><rect x="820" y="497" width="4" height="3" fill="#322e4d"/><rect x="824" y="495" width="4" height="5" fill="#322e4d"/><rect x="828" y="494" width="3" height="3" fill="#322e4d"/><rect x="831" y="493" width="2" height="5" fill="#322e4d"/><rect x="833" y="492" width="3" height="6" fill="#322e4d"/><rect x="836" y="491" width="4" height="9" fill="#322e4d"/><rect x="840" y="490" width="4" height="4" fill="#322e4d"/><rect x="844" y="489" width="2" height="9" fill="#322e4d"/><rect x="846" y="488" width="3" height="7" fill="#322e4d"/><rect x="849" y="487" width="4" height="7" fill="#322e4d"/><rect x="850" y="486" width="2" height="9" fill="#322e4d"/><rect x="852" y="486" width="3" height="4" fill="#322e4d"/><rect x="855" y="486" width="4" height="7" fill="#322e4d"/><rect x="859" y="486" width="4" height="4" fill="#322e4d"/><rect x="863" y="486" width="3" height="4" fill="#322e4d"/><rect x="866" y="485" width="4" height="7" fill="#322e4d"/><rect x="870" y="485" width="3" height="4" fill="#322e4d"/><rect x="873" y="485" width="4" height="3" fill="#322e4d"/><rect x="877" y="485" width="4" height="9" fill="#322e4d"/><rect x="881" y="484" width="2" height="5" fill="#322e4d"/><rect x="883" y="484" width="4" height="9" fill="#322e4d"/><rect x="887" y="484" width="3" height="4" fill="#322e4d"/><rect x="890" y="484" width="4" height="4" fill="#322e4d"/><rect x="894" y="483" width="3" height="4" fill="#322e4d"/><rect x="897" y="483" width="4" height="7" fill="#322e4d"/><rect x="901" y="483" width="4" height="9" fill="#322e4d"/><rect x="905" y="482" width="3" height="4" fill="#322e4d"/><rect x="908" y="482" width="3" height="7" fill="#322e4d"/><rect x="911" y="482" width="3" height="7" fill="#322e4d"/><rect x="914" y="482" width="3" height="4" fill="#322e4d"/><rect x="917" y="482" width="2" height="9" fill="#322e4d"/><rect x="919" y="481" width="4" height="5" fill="#322e4d"/><rect x="923" y="481" width="3" height="4" fill="#322e4d"/><rect x="926" y="481" width="4" height="3" fill="#322e4d"/><rect x="930" y="481" width="4" height="3" fill="#322e4d"/><rect x="934" y="480" width="2" height="9" fill="#322e4d"/><rect x="936" y="480" width="3" height="9" fill="#322e4d"/><rect x="939" y="480" width="3" height="4" fill="#322e4d"/><rect x="942" y="480" width="4" height="2" fill="#322e4d"/><rect x="946" y="479" width="4" height="7" fill="#322e4d"/><rect x="950" y="479" width="4" height="5" fill="#322e4d"/><clipPath id="slc"><polygon points="507.0,522.5 668.0,495.5 846.0,438.0 952.0,429.0 952.0,481.0 850.0,488.5 683.0,545.0 516.0,572.5"/></clipPath><clipPath id="slL"><rect x="490" y="400" width="266" height="200"/></clipPath><clipPath id="slR"><rect x="756" y="400" width="200" height="200"/></clipPath><g clip-path="url(#slc)"><g clip-path="url(#slL)"><polygon points="507.0,522.5 668.0,495.5 846.0,438.0 952.0,429.0 952.0,481.0 850.0,488.5 683.0,545.0 516.0,572.5" fill="#a42e34"/><polygon points="507.0,520.5 510.0,520.0 513.0,519.5 516.0,519.0 519.0,518.5 522.0,518.0 525.0,517.5 528.0,517.0 531.0,516.5 534.0,516.0 537.0,515.5 540.0,515.0 543.0,514.5 546.0,514.0 549.0,513.5 552.0,513.0 555.0,512.5 558.0,511.9 561.0,511.4 564.0,510.9 567.0,510.4 570.0,509.9 573.0,509.4 576.0,508.9 579.0,508.4 582.0,507.9 585.0,507.4 588.0,506.9 591.0,506.4 594.0,505.9 597.0,505.4 600.0,504.9 603.0,504.4 606.0,503.9 609.0,503.4 612.0,502.9 615.0,502.4 618.0,501.9 621.0,501.4 624.0,500.9 627.0,500.4 630.0,499.9 633.0,499.4 636.0,498.9 639.0,498.4 642.0,497.9 645.0,497.4 648.0,496.9 651.0,496.4 654.0,495.8 657.0,495.3 660.0,494.8 663.0,494.3 666.0,493.8 668.0,493.5 671.0,492.5 674.0,491.6 677.0,490.6 680.0,489.6 683.0,488.7 686.0,487.7 689.0,486.7 692.0,485.7 695.0,484.8 698.0,483.8 701.0,482.8 704.0,481.9 707.0,480.9 710.0,479.9 713.0,479.0 716.0,478.0 719.0,477.0 722.0,476.1 725.0,475.1 728.0,474.1 731.0,473.1 734.0,472.2 737.0,471.2 740.0,470.2 743.0,469.3 746.0,468.3 749.0,467.3 752.0,466.4 755.0,465.4 758.0,464.4 761.0,463.5 764.0,462.5 767.0,461.5 770.0,460.6 773.0,459.6 776.0,458.6 779.0,457.6 782.0,456.7 785.0,455.7 788.0,454.7 791.0,453.8 794.0,452.8 797.0,451.8 800.0,450.9 803.0,449.9 806.0,448.9 809.0,448.0 812.0,447.0 815.0,446.0 818.0,445.0 821.0,444.1 824.0,443.1 827.0,442.1 830.0,441.2 833.0,440.2 836.0,439.2 839.0,438.3 842.0,437.3 845.0,436.3 846.0,436.0 849.0,435.7 852.0,435.5 855.0,435.2 858.0,435.0 861.0,434.7 864.0,434.5 867.0,434.2 870.0,434.0 873.0,433.7 876.0,433.5 879.0,433.2 882.0,432.9 885.0,432.7 888.0,432.4 891.0,432.2 894.0,431.9 897.0,431.7 900.0,431.4 903.0,431.2 906.0,430.9 909.0,430.7 912.0,430.4 915.0,430.1 918.0,429.9 921.0,429.6 924.0,429.4 927.0,429.1 930.0,428.9 933.0,428.6 936.0,428.4 939.0,428.1 942.0,427.8 945.0,427.6 948.0,427.3 951.0,427.1 951.0,441.1 948.0,441.3 945.0,441.6 942.0,441.8 939.0,442.1 936.0,442.4 933.0,442.6 930.0,442.9 927.0,443.1 924.0,443.4 921.0,443.6 918.0,443.9 915.0,444.1 912.0,444.4 909.0,444.7 906.0,444.9 903.0,445.2 900.0,445.4 897.0,445.7 894.0,445.9 891.0,446.2 888.0,446.4 885.0,446.7 882.0,446.9 879.0,447.2 876.0,447.5 873.0,447.7 870.0,448.0 867.0,448.2 864.0,448.5 861.0,448.7 858.0,449.0 855.0,449.2 852.0,449.5 849.0,449.7 846.0,450.0 845.0,450.3 842.0,451.3 839.0,452.3 836.0,453.2 833.0,454.2 830.0,455.2 827.0,456.1 824.0,457.1 821.0,458.1 818.0,459.0 815.0,460.0 812.0,461.0 809.0,462.0 806.0,462.9 803.0,463.9 800.0,464.9 797.0,465.8 794.0,466.8 791.0,467.8 788.0,468.7 785.0,469.7 782.0,470.7 779.0,471.6 776.0,472.6 773.0,473.6 770.0,474.6 767.0,475.5 764.0,476.5 761.0,477.5 758.0,478.4 755.0,479.4 752.0,480.4 749.0,481.3 746.0,482.3 743.0,483.3 740.0,484.2 737.0,485.2 734.0,486.2 731.0,487.1 728.0,488.1 725.0,489.1 722.0,490.1 719.0,491.0 716.0,492.0 713.0,493.0 710.0,493.9 707.0,494.9 704.0,495.9 701.0,496.8 698.0,497.8 695.0,498.8 692.0,499.7 689.0,500.7 686.0,501.7 683.0,502.7 680.0,503.6 677.0,504.6 674.0,505.6 671.0,506.5 668.0,507.5 666.0,507.8 663.0,508.3 660.0,508.8 657.0,509.3 654.0,509.8 651.0,510.4 648.0,510.9 645.0,511.4 642.0,511.9 639.0,512.4 636.0,512.9 633.0,513.4 630.0,513.9 627.0,514.4 624.0,514.9 621.0,515.4 618.0,515.9 615.0,516.4 612.0,516.9 609.0,517.4 606.0,517.9 603.0,518.4 600.0,518.9 597.0,519.4 594.0,519.9 591.0,520.4 588.0,520.9 585.0,521.4 582.0,521.9 579.0,522.4 576.0,522.9 573.0,523.4 570.0,523.9 567.0,524.4 564.0,524.9 561.0,525.4 558.0,525.9 555.0,526.5 552.0,527.0 549.0,527.5 546.0,528.0 543.0,528.5 540.0,529.0 537.0,529.5 534.0,530.0 531.0,530.5 528.0,531.0 525.0,531.5 522.0,532.0 519.0,532.5 516.0,533.0 513.0,533.5 510.0,534.0 507.0,534.5" fill="#c03702"/><polygon points="507.0,536.5 510.0,535.9 513.0,535.3 516.0,534.4 519.0,533.5 522.0,532.5 525.0,531.5 528.0,530.4 531.0,529.4 534.0,528.5 537.0,527.7 540.0,527.0 543.0,526.5 546.0,526.1 549.0,525.8 552.0,525.6 555.0,525.6 558.0,525.6 561.0,525.6 564.0,525.6 567.0,525.6 570.0,525.5 573.0,525.3 576.0,524.9 579.0,524.4 582.0,523.8 585.0,523.0 588.0,522.1 591.0,521.1 594.0,520.1 597.0,519.0 600.0,518.0 603.0,517.1 606.0,516.2 609.0,515.5 612.0,514.9 615.0,514.4 618.0,514.1 621.0,513.9 624.0,513.9 627.0,513.8 630.0,513.9 633.0,513.9 636.0,513.9 639.0,513.8 642.0,513.6 645.0,513.3 648.0,512.9 651.0,512.3 654.0,511.5 657.0,510.7 660.0,509.7 663.0,508.7 666.0,507.7 668.0,507.0 671.0,505.5 674.0,504.1 677.0,502.8 680.0,501.7 683.0,500.7 686.0,499.8 689.0,499.0 692.0,498.4 695.0,497.9 698.0,497.5 701.0,497.0 704.0,496.6 707.0,496.1 710.0,495.5 713.0,494.8 716.0,494.0 719.0,493.0 722.0,491.9 725.0,490.7 728.0,489.3 731.0,487.9 734.0,486.4 737.0,484.9 740.0,483.4 743.0,482.0 746.0,480.6 749.0,479.4 752.0,478.4 755.0,477.4 758.0,476.7 761.0,476.0 764.0,475.5 767.0,475.0 770.0,474.6 773.0,474.1 776.0,473.6 779.0,473.1 782.0,472.4 785.0,471.7 788.0,470.7 791.0,469.7 794.0,468.5 797.0,467.1 800.0,465.7 803.0,464.2 806.0,462.7 809.0,461.2 812.0,459.8 815.0,458.5 818.0,457.2 821.0,456.1 824.0,455.1 827.0,454.3 830.0,453.6 833.0,453.0 836.0,452.5 839.0,452.1 842.0,451.6 845.0,451.2 846.0,451.0 849.0,451.2 852.0,451.3 855.0,451.2 858.0,451.0 861.0,450.6 864.0,450.1 867.0,449.5 870.0,448.8 873.0,448.1 876.0,447.3 879.0,446.5 882.0,445.8 885.0,445.1 888.0,444.6 891.0,444.2 894.0,443.9 897.0,443.8 900.0,443.9 903.0,444.0 906.0,444.2 909.0,444.5 912.0,444.8 915.0,445.0 918.0,445.2 921.0,445.3 924.0,445.3 927.0,445.1 930.0,444.8 933.0,444.4 936.0,443.8 939.0,443.1 942.0,442.4 945.0,441.6 948.0,440.8 951.0,440.1 951.0,448.1 948.0,448.8 945.0,449.6 942.0,450.4 939.0,451.1 936.0,451.8 933.0,452.4 930.0,452.8 927.0,453.1 924.0,453.3 921.0,453.3 918.0,453.2 915.0,453.0 912.0,452.8 909.0,452.5 906.0,452.2 903.0,452.0 900.0,451.9 897.0,451.8 894.0,451.9 891.0,452.2 888.0,452.6 885.0,453.1 882.0,453.8 879.0,454.5 876.0,455.3 873.0,456.1 870.0,456.8 867.0,457.5 864.0,458.1 861.0,458.6 858.0,459.0 855.0,459.2 852.0,459.3 849.0,459.2 846.0,459.0 845.0,459.2 842.0,459.6 839.0,460.1 836.0,460.5 833.0,461.0 830.0,461.6 827.0,462.3 824.0,463.1 821.0,464.1 818.0,465.2 815.0,466.5 812.0,467.8 809.0,469.2 806.0,470.7 803.0,472.2 800.0,473.7 797.0,475.1 794.0,476.5 791.0,477.7 788.0,478.7 785.0,479.7 782.0,480.4 779.0,481.1 776.0,481.6 773.0,482.1 770.0,482.6 767.0,483.0 764.0,483.5 761.0,484.0 758.0,484.7 755.0,485.4 752.0,486.4 749.0,487.4 746.0,488.6 743.0,490.0 740.0,491.4 737.0,492.9 734.0,494.4 731.0,495.9 728.0,497.3 725.0,498.7 722.0,499.9 719.0,501.0 716.0,502.0 713.0,502.8 710.0,503.5 707.0,504.1 704.0,504.6 701.0,505.0 698.0,505.5 695.0,505.9 692.0,506.4 689.0,507.0 686.0,507.8 683.0,508.7 680.0,509.7 677.0,510.8 674.0,512.1 671.0,513.5 668.0,515.0 666.0,515.7 663.0,516.7 660.0,517.7 657.0,518.7 654.0,519.5 651.0,520.3 648.0,520.9 645.0,521.3 642.0,521.6 639.0,521.8 636.0,521.9 633.0,521.9 630.0,521.9 627.0,521.8 624.0,521.9 621.0,521.9 618.0,522.1 615.0,522.4 612.0,522.9 609.0,523.5 606.0,524.2 603.0,525.1 600.0,526.0 597.0,527.0 594.0,528.1 591.0,529.1 588.0,530.1 585.0,531.0 582.0,531.8 579.0,532.4 576.0,532.9 573.0,533.3 570.0,533.5 567.0,533.6 564.0,533.6 561.0,533.6 558.0,533.6 555.0,533.6 552.0,533.6 549.0,533.8 546.0,534.1 543.0,534.5 540.0,535.0 537.0,535.7 534.0,536.5 531.0,537.4 528.0,538.4 525.0,539.5 522.0,540.5 519.0,541.5 516.0,542.4 513.0,543.3 510.0,543.9 507.0,544.5" fill="#aa2b13"/><polygon points="507.0,542.0 510.0,540.7 513.0,539.5 516.0,538.5 519.0,537.6 522.0,537.0 525.0,536.6 528.0,536.3 531.0,536.3 534.0,536.4 537.0,536.7 540.0,537.0 543.0,537.3 546.0,537.5 549.0,537.6 552.0,537.6 555.0,537.4 558.0,536.9 561.0,536.3 564.0,535.4 567.0,534.4 570.0,533.2 573.0,532.0 576.0,530.7 579.0,529.4 582.0,528.2 585.0,527.1 588.0,526.2 591.0,525.4 594.0,524.9 597.0,524.6 600.0,524.6 603.0,524.6 606.0,524.8 609.0,525.1 612.0,525.4 615.0,525.7 618.0,525.9 621.0,525.9 624.0,525.7 627.0,525.4 630.0,524.8 633.0,524.0 636.0,523.0 639.0,521.9 642.0,520.7 645.0,519.4 648.0,518.1 651.0,516.8 654.0,515.7 657.0,514.7 660.0,513.9 663.0,513.3 666.0,513.0 668.0,512.9 671.0,512.4 674.0,512.0 677.0,511.8 680.0,511.6 683.0,511.5 686.0,511.2 689.0,510.9 692.0,510.4 695.0,509.7 698.0,508.8 701.0,507.7 704.0,506.4 707.0,504.9 710.0,503.2 713.0,501.5 716.0,499.7 719.0,498.0 722.0,496.3 725.0,494.7 728.0,493.4 731.0,492.2 734.0,491.2 737.0,490.5 740.0,489.9 743.0,489.5 746.0,489.2 749.0,489.1 752.0,488.9 755.0,488.7 758.0,488.4 761.0,488.0 764.0,487.3 767.0,486.5 770.0,485.5 773.0,484.2 776.0,482.8 779.0,481.2 782.0,479.5 785.0,477.7 788.0,475.9 791.0,474.2 794.0,472.6 797.0,471.2 800.0,469.9 803.0,468.9 806.0,468.1 809.0,467.4 812.0,467.0 815.0,466.7 818.0,466.5 821.0,466.3 824.0,466.2 827.0,465.9 830.0,465.5 833.0,465.0 836.0,464.2 839.0,463.2 842.0,462.1 845.0,460.7 846.0,460.2 849.0,459.3 852.0,458.3 855.0,457.2 858.0,456.2 861.0,455.2 864.0,454.3 867.0,453.6 870.0,453.0 873.0,452.7 876.0,452.6 879.0,452.7 882.0,453.0 885.0,453.4 888.0,453.9 891.0,454.4 894.0,455.0 897.0,455.4 900.0,455.8 903.0,455.9 906.0,455.9 909.0,455.6 912.0,455.2 915.0,454.5 918.0,453.7 921.0,452.7 924.0,451.6 927.0,450.6 930.0,449.6 933.0,448.6 936.0,447.9 939.0,447.3 942.0,446.9 945.0,446.7 948.0,446.7 951.0,446.9 951.0,454.9 948.0,454.7 945.0,454.7 942.0,454.9 939.0,455.3 936.0,455.9 933.0,456.6 930.0,457.6 927.0,458.6 924.0,459.6 921.0,460.7 918.0,461.7 915.0,462.5 912.0,463.2 909.0,463.6 906.0,463.9 903.0,463.9 900.0,463.8 897.0,463.4 894.0,463.0 891.0,462.4 888.0,461.9 885.0,461.4 882.0,461.0 879.0,460.7 876.0,460.6 873.0,460.7 870.0,461.0 867.0,461.6 864.0,462.3 861.0,463.2 858.0,464.2 855.0,465.2 852.0,466.3 849.0,467.3 846.0,468.2 845.0,468.7 842.0,470.1 839.0,471.2 836.0,472.2 833.0,473.0 830.0,473.5 827.0,473.9 824.0,474.2 821.0,474.3 818.0,474.5 815.0,474.7 812.0,475.0 809.0,475.4 806.0,476.1 803.0,476.9 800.0,477.9 797.0,479.2 794.0,480.6 791.0,482.2 788.0,483.9 785.0,485.7 782.0,487.5 779.0,489.2 776.0,490.8 773.0,492.2 770.0,493.5 767.0,494.5 764.0,495.3 761.0,496.0 758.0,496.4 755.0,496.7 752.0,496.9 749.0,497.1 746.0,497.2 743.0,497.5 740.0,497.9 737.0,498.5 734.0,499.2 731.0,500.2 728.0,501.4 725.0,502.7 722.0,504.3 719.0,506.0 716.0,507.7 713.0,509.5 710.0,511.2 707.0,512.9 704.0,514.4 701.0,515.7 698.0,516.8 695.0,517.7 692.0,518.4 689.0,518.9 686.0,519.2 683.0,519.5 680.0,519.6 677.0,519.8 674.0,520.0 671.0,520.4 668.0,520.9 666.0,521.0 663.0,521.3 660.0,521.9 657.0,522.7 654.0,523.7 651.0,524.8 648.0,526.1 645.0,527.4 642.0,528.7 639.0,529.9 636.0,531.0 633.0,532.0 630.0,532.8 627.0,533.4 624.0,533.7 621.0,533.9 618.0,533.9 615.0,533.7 612.0,533.4 609.0,533.1 606.0,532.8 603.0,532.6 600.0,532.6 597.0,532.6 594.0,532.9 591.0,533.4 588.0,534.2 585.0,535.1 582.0,536.2 579.0,537.4 576.0,538.7 573.0,540.0 570.0,541.2 567.0,542.4 564.0,543.4 561.0,544.3 558.0,544.9 555.0,545.4 552.0,545.6 549.0,545.6 546.0,545.5 543.0,545.3 540.0,545.0 537.0,544.7 534.0,544.4 531.0,544.3 528.0,544.3 525.0,544.6 522.0,545.0 519.0,545.6 516.0,546.5 513.0,547.5 510.0,548.7 507.0,550.0" fill="#922313"/><polygon points="507.0,547.9 510.0,547.9 513.0,547.9 516.0,548.1 519.0,548.3 522.0,548.5 525.0,548.6 528.0,548.7 531.0,548.8 534.0,548.6 537.0,548.4 540.0,548.0 543.0,547.4 546.0,546.6 549.0,545.7 552.0,544.7 555.0,543.6 558.0,542.4 561.0,541.2 564.0,540.0 567.0,538.9 570.0,537.8 573.0,536.9 576.0,536.1 579.0,535.4 582.0,535.0 585.0,534.6 588.0,534.5 591.0,534.5 594.0,534.5 597.0,534.7 600.0,534.9 603.0,535.1 606.0,535.3 609.0,535.3 612.0,535.3 615.0,535.2 618.0,534.8 621.0,534.4 624.0,533.7 627.0,532.9 630.0,532.0 633.0,530.9 636.0,529.8 639.0,528.6 642.0,527.4 645.0,526.2 648.0,525.1 651.0,524.1 654.0,523.2 657.0,522.4 660.0,521.8 663.0,521.4 666.0,521.2 668.0,521.1 671.0,520.6 674.0,520.2 677.0,519.9 680.0,519.6 683.0,519.4 686.0,519.0 689.0,518.7 692.0,518.2 695.0,517.5 698.0,516.8 701.0,515.8 704.0,514.7 707.0,513.5 710.0,512.1 713.0,510.5 716.0,508.9 719.0,507.3 722.0,505.6 725.0,503.9 728.0,502.4 731.0,500.9 734.0,499.5 737.0,498.3 740.0,497.2 743.0,496.4 746.0,495.6 749.0,495.1 752.0,494.6 755.0,494.2 758.0,494.0 761.0,493.7 764.0,493.4 767.0,493.1 770.0,492.7 773.0,492.1 776.0,491.5 779.0,490.6 782.0,489.6 785.0,488.5 788.0,487.2 791.0,485.7 794.0,484.2 797.0,482.5 800.0,480.9 803.0,479.2 806.0,477.6 809.0,476.0 812.0,474.6 815.0,473.2 818.0,472.1 821.0,471.1 824.0,470.3 827.0,469.6 830.0,469.0 833.0,468.6 836.0,468.3 839.0,468.0 842.0,467.8 845.0,467.5 846.0,467.4 849.0,467.7 852.0,467.9 855.0,468.0 858.0,467.9 861.0,467.7 864.0,467.3 867.0,466.8 870.0,466.1 873.0,465.3 876.0,464.4 879.0,463.4 882.0,462.5 885.0,461.5 888.0,460.7 891.0,459.9 894.0,459.3 897.0,458.8 900.0,458.4 903.0,458.2 906.0,458.2 909.0,458.4 912.0,458.6 915.0,459.0 918.0,459.4 921.0,459.9 924.0,460.3 927.0,460.7 930.0,461.0 933.0,461.2 936.0,461.2 939.0,461.1 942.0,460.8 945.0,460.4 948.0,459.8 951.0,459.0 951.0,469.0 948.0,469.8 945.0,470.4 942.0,470.8 939.0,471.1 936.0,471.2 933.0,471.2 930.0,471.0 927.0,470.7 924.0,470.3 921.0,469.9 918.0,469.4 915.0,469.0 912.0,468.6 909.0,468.4 906.0,468.2 903.0,468.2 900.0,468.4 897.0,468.8 894.0,469.3 891.0,469.9 888.0,470.7 885.0,471.5 882.0,472.5 879.0,473.4 876.0,474.4 873.0,475.3 870.0,476.1 867.0,476.8 864.0,477.3 861.0,477.7 858.0,477.9 855.0,478.0 852.0,477.9 849.0,477.7 846.0,477.4 845.0,477.5 842.0,477.8 839.0,478.0 836.0,478.3 833.0,478.6 830.0,479.0 827.0,479.6 824.0,480.3 821.0,481.1 818.0,482.1 815.0,483.2 812.0,484.6 809.0,486.0 806.0,487.6 803.0,489.2 800.0,490.9 797.0,492.5 794.0,494.2 791.0,495.7 788.0,497.2 785.0,498.5 782.0,499.6 779.0,500.6 776.0,501.5 773.0,502.1 770.0,502.7 767.0,503.1 764.0,503.4 761.0,503.7 758.0,504.0 755.0,504.2 752.0,504.6 749.0,505.1 746.0,505.6 743.0,506.4 740.0,507.2 737.0,508.3 734.0,509.5 731.0,510.9 728.0,512.4 725.0,513.9 722.0,515.6 719.0,517.3 716.0,518.9 713.0,520.5 710.0,522.1 707.0,523.5 704.0,524.7 701.0,525.8 698.0,526.8 695.0,527.5 692.0,528.2 689.0,528.7 686.0,529.0 683.0,529.4 680.0,529.6 677.0,529.9 674.0,530.2 671.0,530.6 668.0,531.1 666.0,531.2 663.0,531.4 660.0,531.8 657.0,532.4 654.0,533.2 651.0,534.1 648.0,535.1 645.0,536.2 642.0,537.4 639.0,538.6 636.0,539.8 633.0,540.9 630.0,542.0 627.0,542.9 624.0,543.7 621.0,544.4 618.0,544.8 615.0,545.2 612.0,545.3 609.0,545.3 606.0,545.3 603.0,545.1 600.0,544.9 597.0,544.7 594.0,544.5 591.0,544.5 588.0,544.5 585.0,544.6 582.0,545.0 579.0,545.4 576.0,546.1 573.0,546.9 570.0,547.8 567.0,548.9 564.0,550.0 561.0,551.2 558.0,552.4 555.0,553.6 552.0,554.7 549.0,555.7 546.0,556.6 543.0,557.4 540.0,558.0 537.0,558.4 534.0,558.6 531.0,558.8 528.0,558.7 525.0,558.6 522.0,558.5 519.0,558.3 516.0,558.1 513.0,557.9 510.0,557.9 507.0,557.9" fill="#9e2925"/><polygon points="507.0,561.0 510.0,560.0 513.0,559.0 516.0,558.1 519.0,557.2 522.0,556.4 525.0,555.6 528.0,555.0 531.0,554.5 534.0,554.1 537.0,553.8 540.0,553.6 543.0,553.4 546.0,553.3 549.0,553.3 552.0,553.3 555.0,553.2 558.0,553.1 561.0,553.0 564.0,552.7 567.0,552.4 570.0,551.9 573.0,551.4 576.0,550.7 579.0,549.9 582.0,549.1 585.0,548.2 588.0,547.2 591.0,546.3 594.0,545.3 597.0,544.4 600.0,543.5 603.0,542.7 606.0,542.0 609.0,541.4 612.0,540.9 615.0,540.5 618.0,540.3 621.0,540.1 624.0,540.0 627.0,539.9 630.0,539.9 633.0,539.8 636.0,539.8 639.0,539.7 642.0,539.5 645.0,539.2 648.0,538.8 651.0,538.3 654.0,537.7 657.0,537.1 660.0,536.3 663.0,535.4 666.0,534.5 668.0,533.8 671.0,532.4 674.0,530.9 677.0,529.5 680.0,528.2 683.0,526.9 686.0,525.8 689.0,524.7 692.0,523.8 695.0,522.9 698.0,522.2 701.0,521.5 704.0,521.0 707.0,520.4 710.0,519.9 713.0,519.4 716.0,518.9 719.0,518.3 722.0,517.7 725.0,516.9 728.0,516.1 731.0,515.1 734.0,514.1 737.0,512.9 740.0,511.7 743.0,510.3 746.0,508.9 749.0,507.5 752.0,506.1 755.0,504.6 758.0,503.3 761.0,501.9 764.0,500.7 767.0,499.6 770.0,498.6 773.0,497.6 776.0,496.8 779.0,496.1 782.0,495.5 785.0,494.9 788.0,494.4 791.0,493.9 794.0,493.4 797.0,492.9 800.0,492.3 803.0,491.6 806.0,490.8 809.0,489.9 812.0,489.0 815.0,487.9 818.0,486.7 821.0,485.4 824.0,484.0 827.0,482.6 830.0,481.2 833.0,479.7 836.0,478.3 839.0,477.0 842.0,475.7 845.0,474.5 846.0,474.1 849.0,473.8 852.0,473.5 855.0,473.4 858.0,473.4 861.0,473.4 864.0,473.6 867.0,473.8 870.0,474.0 873.0,474.2 876.0,474.4 879.0,474.5 882.0,474.6 885.0,474.5 888.0,474.4 891.0,474.2 894.0,473.8 897.0,473.4 900.0,472.8 903.0,472.2 906.0,471.5 909.0,470.8 912.0,470.1 915.0,469.4 918.0,468.7 921.0,468.1 924.0,467.6 927.0,467.2 930.0,466.9 933.0,466.7 936.0,466.6 939.0,466.6 942.0,466.7 945.0,466.8 948.0,467.0 951.0,467.2 951.0,489.2 948.0,489.0 945.0,488.8 942.0,488.7 939.0,488.6 936.0,488.6 933.0,488.7 930.0,488.9 927.0,489.2 924.0,489.6 921.0,490.1 918.0,490.7 915.0,491.4 912.0,492.1 909.0,492.8 906.0,493.5 903.0,494.2 900.0,494.8 897.0,495.4 894.0,495.8 891.0,496.2 888.0,496.4 885.0,496.5 882.0,496.6 879.0,496.5 876.0,496.4 873.0,496.2 870.0,496.0 867.0,495.8 864.0,495.6 861.0,495.4 858.0,495.4 855.0,495.4 852.0,495.5 849.0,495.8 846.0,496.1 845.0,496.5 842.0,497.7 839.0,499.0 836.0,500.3 833.0,501.7 830.0,503.2 827.0,504.6 824.0,506.0 821.0,507.4 818.0,508.7 815.0,509.9 812.0,511.0 809.0,511.9 806.0,512.8 803.0,513.6 800.0,514.3 797.0,514.9 794.0,515.4 791.0,515.9 788.0,516.4 785.0,516.9 782.0,517.5 779.0,518.1 776.0,518.8 773.0,519.6 770.0,520.6 767.0,521.6 764.0,522.7 761.0,523.9 758.0,525.3 755.0,526.6 752.0,528.1 749.0,529.5 746.0,530.9 743.0,532.3 740.0,533.7 737.0,534.9 734.0,536.1 731.0,537.1 728.0,538.1 725.0,538.9 722.0,539.7 719.0,540.3 716.0,540.9 713.0,541.4 710.0,541.9 707.0,542.4 704.0,543.0 701.0,543.5 698.0,544.2 695.0,544.9 692.0,545.8 689.0,546.7 686.0,547.8 683.0,548.9 680.0,550.2 677.0,551.5 674.0,552.9 671.0,554.4 668.0,555.8 666.0,556.5 663.0,557.4 660.0,558.3 657.0,559.1 654.0,559.7 651.0,560.3 648.0,560.8 645.0,561.2 642.0,561.5 639.0,561.7 636.0,561.8 633.0,561.8 630.0,561.9 627.0,561.9 624.0,562.0 621.0,562.1 618.0,562.3 615.0,562.5 612.0,562.9 609.0,563.4 606.0,564.0 603.0,564.7 600.0,565.5 597.0,566.4 594.0,567.3 591.0,568.3 588.0,569.2 585.0,570.2 582.0,571.1 579.0,571.9 576.0,572.7 573.0,573.4 570.0,573.9 567.0,574.4 564.0,574.7 561.0,575.0 558.0,575.1 555.0,575.2 552.0,575.3 549.0,575.3 546.0,575.3 543.0,575.4 540.0,575.6 537.0,575.8 534.0,576.1 531.0,576.5 528.0,577.0 525.0,577.6 522.0,578.4 519.0,579.2 516.0,580.1 513.0,581.0 510.0,582.0 507.0,583.0" fill="#a42e38"/><rect x="509" y="526" width="2" height="2" fill="#b73f1b"/><rect x="509" y="530" width="2" height="2" fill="#b13309"/><rect x="509" y="534" width="2" height="2" fill="#ce4f19"/><rect x="513" y="521" width="2" height="2" fill="#b13309"/><rect x="515" y="521" width="2" height="2" fill="#d25819"/><rect x="515" y="533" width="2" height="2" fill="#ce4f19"/><rect x="517" y="525" width="2" height="2" fill="#ce4f19"/><rect x="517" y="525" width="2" height="2" fill="#b73f1b"/><rect x="517" y="529" width="2" height="2" fill="#b73f1b"/><rect x="517" y="529" width="2" height="2" fill="#ce4f19"/><rect x="517" y="531" width="2" height="2" fill="#b73f1b"/><rect x="519" y="532" width="2" height="2" fill="#d25819"/><rect x="521" y="524" width="2" height="2" fill="#ce4f19"/><rect x="521" y="528" width="2" height="2" fill="#ce4f19"/><rect x="521" y="528" width="2" height="2" fill="#b73f1b"/><rect x="521" y="532" width="2" height="2" fill="#b13309"/><rect x="523" y="524" width="2" height="2" fill="#b13309"/><rect x="523" y="534" width="2" height="2" fill="#d25819"/><rect x="525" y="521" width="2" height="2" fill="#b73f1b"/><rect x="525" y="529" width="2" height="2" fill="#b13309"/><rect x="527" y="525" width="2" height="2" fill="#d25819"/><rect x="527" y="527" width="2" height="2" fill="#b13309"/><rect x="527" y="531" width="2" height="2" fill="#d25819"/><rect x="529" y="525" width="2" height="2" fill="#b73f1b"/><rect x="529" y="527" width="2" height="2" fill="#b13309"/><rect x="531" y="522" width="2" height="2" fill="#b13309"/><rect x="531" y="526" width="2" height="2" fill="#b13309"/><rect x="533" y="518" width="2" height="2" fill="#ce4f19"/><rect x="533" y="524" width="2" height="2" fill="#d25819"/><rect x="533" y="526" width="2" height="2" fill="#b73f1b"/><rect x="533" y="528" width="2" height="2" fill="#b73f1b"/><rect x="533" y="532" width="2" height="2" fill="#ce4f19"/><rect x="535" y="520" width="2" height="2" fill="#ce4f19"/><rect x="535" y="524" width="2" height="2" fill="#ce4f19"/><rect x="535" y="528" width="2" height="2" fill="#b13309"/><rect x="535" y="528" width="2" height="2" fill="#d25819"/><rect x="537" y="523" width="2" height="2" fill="#b13309"/><rect x="539" y="521" width="2" height="2" fill="#ce4f19"/><rect x="541" y="521" width="2" height="2" fill="#ce4f19"/><rect x="541" y="531" width="2" height="2" fill="#d25819"/><rect x="549" y="519" width="2" height="2" fill="#ce4f19"/><rect x="551" y="525" width="2" height="2" fill="#ce4f19"/><rect x="551" y="525" width="2" height="2" fill="#b13309"/><rect x="553" y="521" width="2" height="2" fill="#b73f1b"/><rect x="553" y="519" width="2" height="2" fill="#d25819"/><rect x="553" y="525" width="2" height="2" fill="#d25819"/><rect x="555" y="526" width="2" height="2" fill="#b13309"/><rect x="557" y="524" width="2" height="2" fill="#d25819"/><rect x="559" y="520" width="2" height="2" fill="#ce4f19"/><rect x="559" y="524" width="2" height="2" fill="#b73f1b"/><rect x="563" y="521" width="2" height="2" fill="#ce4f19"/><rect x="565" y="523" width="2" height="2" fill="#b13309"/><rect x="567" y="516" width="2" height="2" fill="#d25819"/><rect x="567" y="524" width="2" height="2" fill="#d25819"/><rect x="569" y="512" width="2" height="2" fill="#b73f1b"/><rect x="569" y="516" width="2" height="2" fill="#d25819"/><rect x="571" y="520" width="2" height="2" fill="#b13309"/><rect x="571" y="522" width="2" height="2" fill="#b73f1b"/><rect x="571" y="522" width="2" height="2" fill="#b13309"/><rect x="575" y="519" width="2" height="2" fill="#ce4f19"/><rect x="575" y="519" width="2" height="2" fill="#ce4f19"/><rect x="577" y="523" width="2" height="2" fill="#d25819"/><rect x="579" y="516" width="2" height="2" fill="#b73f1b"/><rect x="579" y="522" width="2" height="2" fill="#b13309"/><rect x="585" y="517" width="2" height="2" fill="#d25819"/><rect x="587" y="511" width="2" height="2" fill="#d25819"/><rect x="587" y="519" width="2" height="2" fill="#ce4f19"/><rect x="589" y="509" width="2" height="2" fill="#b73f1b"/><rect x="589" y="515" width="2" height="2" fill="#b13309"/><rect x="589" y="521" width="2" height="2" fill="#b73f1b"/><rect x="591" y="514" width="2" height="2" fill="#b73f1b"/><rect x="591" y="516" width="2" height="2" fill="#b73f1b"/><rect x="591" y="520" width="2" height="2" fill="#ce4f19"/><rect x="593" y="510" width="2" height="2" fill="#ce4f19"/><rect x="593" y="512" width="2" height="2" fill="#ce4f19"/><rect x="595" y="514" width="2" height="2" fill="#ce4f19"/><rect x="597" y="513" width="2" height="2" fill="#b73f1b"/><rect x="599" y="509" width="2" height="2" fill="#b13309"/><rect x="599" y="515" width="2" height="2" fill="#d25819"/><rect x="601" y="509" width="2" height="2" fill="#ce4f19"/><rect x="601" y="511" width="2" height="2" fill="#b13309"/><rect x="601" y="515" width="2" height="2" fill="#b73f1b"/><rect x="603" y="512" width="2" height="2" fill="#ce4f19"/><rect x="603" y="516" width="2" height="2" fill="#d25819"/><rect x="605" y="510" width="2" height="2" fill="#d25819"/><rect x="605" y="512" width="2" height="2" fill="#b73f1b"/><rect x="605" y="514" width="2" height="2" fill="#b73f1b"/><rect x="605" y="516" width="2" height="2" fill="#ce4f19"/><rect x="607" y="506" width="2" height="2" fill="#d25819"/><rect x="607" y="510" width="2" height="2" fill="#b13309"/><rect x="609" y="519" width="2" height="2" fill="#ce4f19"/><rect x="611" y="509" width="2" height="2" fill="#d25819"/><rect x="611" y="513" width="2" height="2" fill="#ce4f19"/><rect x="613" y="505" width="2" height="2" fill="#b73f1b"/><rect x="613" y="513" width="2" height="2" fill="#d25819"/><rect x="613" y="513" width="2" height="2" fill="#b13309"/><rect x="617" y="510" width="2" height="2" fill="#d25819"/><rect x="617" y="514" width="2" height="2" fill="#ce4f19"/><rect x="617" y="518" width="2" height="2" fill="#d25819"/><rect x="621" y="515" width="2" height="2" fill="#ce4f19"/><rect x="623" y="505" width="2" height="2" fill="#ce4f19"/><rect x="623" y="511" width="2" height="2" fill="#d25819"/><rect x="623" y="513" width="2" height="2" fill="#b73f1b"/><rect x="625" y="515" width="2" height="2" fill="#ce4f19"/><rect x="631" y="506" width="2" height="2" fill="#d25819"/><rect x="631" y="506" width="2" height="2" fill="#ce4f19"/><rect x="633" y="503" width="2" height="2" fill="#b73f1b"/><rect x="633" y="507" width="2" height="2" fill="#d25819"/><rect x="633" y="505" width="2" height="2" fill="#b73f1b"/><rect x="633" y="509" width="2" height="2" fill="#ce4f19"/><rect x="637" y="505" width="2" height="2" fill="#b73f1b"/><rect x="637" y="505" width="2" height="2" fill="#d25819"/><rect x="637" y="511" width="2" height="2" fill="#b13309"/><rect x="639" y="506" width="2" height="2" fill="#b73f1b"/><rect x="639" y="512" width="2" height="2" fill="#b13309"/><rect x="641" y="500" width="2" height="2" fill="#d25819"/><rect x="641" y="512" width="2" height="2" fill="#b13309"/><rect x="643" y="502" width="2" height="2" fill="#b13309"/><rect x="643" y="506" width="2" height="2" fill="#ce4f19"/><rect x="643" y="510" width="2" height="2" fill="#ce4f19"/><rect x="645" y="503" width="2" height="2" fill="#d25819"/><rect x="645" y="501" width="2" height="2" fill="#b13309"/><rect x="647" y="501" width="2" height="2" fill="#b73f1b"/><rect x="647" y="505" width="2" height="2" fill="#b73f1b"/><rect x="649" y="503" width="2" height="2" fill="#d25819"/><rect x="649" y="505" width="2" height="2" fill="#d25819"/><rect x="651" y="504" width="2" height="2" fill="#d25819"/><rect x="653" y="510" width="2" height="2" fill="#b13309"/><rect x="657" y="503" width="2" height="2" fill="#d25819"/><rect x="657" y="507" width="2" height="2" fill="#b73f1b"/><rect x="661" y="505" width="2" height="2" fill="#d25819"/><rect x="661" y="509" width="2" height="2" fill="#b73f1b"/><rect x="663" y="508" width="2" height="2" fill="#b13309"/><rect x="663" y="508" width="2" height="2" fill="#d25819"/><rect x="665" y="498" width="2" height="2" fill="#b13309"/><rect x="667" y="500" width="2" height="2" fill="#d25819"/><rect x="667" y="500" width="2" height="2" fill="#d25819"/><rect x="667" y="510" width="2" height="2" fill="#b13309"/><rect x="668" y="500" width="2" height="2" fill="#b73f1b"/><rect x="668" y="498" width="2" height="2" fill="#b73f1b"/><rect x="676" y="505" width="2" height="2" fill="#b13309"/><rect x="678" y="494" width="2" height="2" fill="#b73f1b"/><rect x="678" y="504" width="2" height="2" fill="#ce4f19"/><rect x="680" y="494" width="2" height="2" fill="#ce4f19"/><rect x="680" y="500" width="2" height="2" fill="#ce4f19"/><rect x="680" y="504" width="2" height="2" fill="#b13309"/><rect x="688" y="489" width="2" height="2" fill="#b73f1b"/><rect x="688" y="491" width="2" height="2" fill="#b73f1b"/><rect x="690" y="488" width="2" height="2" fill="#ce4f19"/><rect x="690" y="498" width="2" height="2" fill="#b13309"/><rect x="692" y="494" width="2" height="2" fill="#b13309"/><rect x="692" y="500" width="2" height="2" fill="#ce4f19"/><rect x="692" y="498" width="2" height="2" fill="#ce4f19"/><rect x="694" y="487" width="2" height="2" fill="#b13309"/><rect x="694" y="491" width="2" height="2" fill="#ce4f19"/><rect x="694" y="499" width="2" height="2" fill="#d25819"/><rect x="694" y="497" width="2" height="2" fill="#b73f1b"/><rect x="696" y="490" width="2" height="2" fill="#ce4f19"/><rect x="696" y="494" width="2" height="2" fill="#b73f1b"/><rect x="696" y="496" width="2" height="2" fill="#d25819"/><rect x="698" y="488" width="2" height="2" fill="#b73f1b"/><rect x="698" y="490" width="2" height="2" fill="#b13309"/><rect x="698" y="494" width="2" height="2" fill="#b73f1b"/><rect x="700" y="487" width="2" height="2" fill="#ce4f19"/><rect x="700" y="495" width="2" height="2" fill="#b13309"/><rect x="702" y="491" width="2" height="2" fill="#b73f1b"/><rect x="704" y="486" width="2" height="2" fill="#b13309"/><rect x="704" y="492" width="2" height="2" fill="#d25819"/><rect x="706" y="487" width="2" height="2" fill="#ce4f19"/><rect x="706" y="493" width="2" height="2" fill="#b13309"/><rect x="706" y="493" width="2" height="2" fill="#ce4f19"/><rect x="708" y="485" width="2" height="2" fill="#ce4f19"/><rect x="708" y="487" width="2" height="2" fill="#b73f1b"/><rect x="708" y="493" width="2" height="2" fill="#b13309"/><rect x="710" y="494" width="2" height="2" fill="#d25819"/><rect x="712" y="491" width="2" height="2" fill="#b13309"/><rect x="714" y="485" width="2" height="2" fill="#b13309"/><rect x="716" y="484" width="2" height="2" fill="#d25819"/><rect x="716" y="492" width="2" height="2" fill="#b13309"/><rect x="718" y="485" width="2" height="2" fill="#b13309"/><rect x="718" y="491" width="2" height="2" fill="#b73f1b"/><rect x="720" y="493" width="2" height="2" fill="#b13309"/><rect x="722" y="482" width="2" height="2" fill="#ce4f19"/><rect x="722" y="486" width="2" height="2" fill="#d25819"/><rect x="722" y="486" width="2" height="2" fill="#d25819"/><rect x="724" y="487" width="2" height="2" fill="#ce4f19"/><rect x="726" y="487" width="2" height="2" fill="#b73f1b"/><rect x="728" y="480" width="2" height="2" fill="#b73f1b"/><rect x="728" y="484" width="2" height="2" fill="#b73f1b"/><rect x="728" y="484" width="2" height="2" fill="#b13309"/><rect x="728" y="486" width="2" height="2" fill="#d25819"/><rect x="730" y="475" width="2" height="2" fill="#b13309"/><rect x="730" y="483" width="2" height="2" fill="#b73f1b"/><rect x="734" y="478" width="2" height="2" fill="#d25819"/><rect x="736" y="480" width="2" height="2" fill="#b73f1b"/><rect x="738" y="475" width="2" height="2" fill="#b73f1b"/><rect x="738" y="479" width="2" height="2" fill="#ce4f19"/><rect x="738" y="481" width="2" height="2" fill="#d25819"/><rect x="742" y="480" width="2" height="2" fill="#b73f1b"/><rect x="742" y="482" width="2" height="2" fill="#ce4f19"/><rect x="744" y="481" width="2" height="2" fill="#ce4f19"/><rect x="746" y="480" width="2" height="2" fill="#b13309"/><rect x="746" y="478" width="2" height="2" fill="#b73f1b"/><rect x="748" y="482" width="2" height="2" fill="#ce4f19"/><rect x="750" y="471" width="2" height="2" fill="#b73f1b"/><rect x="750" y="475" width="2" height="2" fill="#b13309"/><rect x="750" y="475" width="2" height="2" fill="#ce4f19"/><rect x="752" y="472" width="2" height="2" fill="#b13309"/><rect x="754" y="470" width="2" height="2" fill="#ce4f19"/><rect x="754" y="472" width="2" height="2" fill="#b13309"/><rect x="754" y="482" width="2" height="2" fill="#ce4f19"/><rect x="756" y="471" width="2" height="2" fill="#b13309"/><rect x="756" y="477" width="2" height="2" fill="#ce4f19"/><rect x="756" y="481" width="2" height="2" fill="#ce4f19"/><rect x="758" y="472" width="2" height="2" fill="#d25819"/><rect x="758" y="476" width="2" height="2" fill="#b13309"/><rect x="760" y="470" width="2" height="2" fill="#ce4f19"/><rect x="760" y="468" width="2" height="2" fill="#ce4f19"/><rect x="760" y="478" width="2" height="2" fill="#ce4f19"/><rect x="762" y="469" width="2" height="2" fill="#d25819"/><rect x="762" y="473" width="2" height="2" fill="#b13309"/><rect x="764" y="466" width="2" height="2" fill="#b13309"/><rect x="764" y="474" width="2" height="2" fill="#b13309"/><rect x="764" y="476" width="2" height="2" fill="#b13309"/><rect x="766" y="466" width="2" height="2" fill="#ce4f19"/><rect x="766" y="472" width="2" height="2" fill="#ce4f19"/><rect x="768" y="471" width="2" height="2" fill="#b13309"/><rect x="770" y="467" width="2" height="2" fill="#ce4f19"/><rect x="770" y="473" width="2" height="2" fill="#d25819"/><rect x="772" y="472" width="2" height="2" fill="#b73f1b"/><rect x="772" y="474" width="2" height="2" fill="#b73f1b"/><rect x="774" y="463" width="2" height="2" fill="#b13309"/><rect x="774" y="473" width="2" height="2" fill="#ce4f19"/><rect x="776" y="463" width="2" height="2" fill="#b13309"/><rect x="776" y="467" width="2" height="2" fill="#d25819"/><rect x="778" y="468" width="2" height="2" fill="#b73f1b"/><rect x="780" y="471" width="2" height="2" fill="#ce4f19"/><rect x="782" y="471" width="2" height="2" fill="#b13309"/><rect x="784" y="464" width="2" height="2" fill="#b13309"/><rect x="784" y="468" width="2" height="2" fill="#b13309"/><rect x="786" y="469" width="2" height="2" fill="#b13309"/><rect x="788" y="463" width="2" height="2" fill="#d25819"/><rect x="790" y="464" width="2" height="2" fill="#d25819"/><rect x="790" y="470" width="2" height="2" fill="#d25819"/><rect x="792" y="455" width="2" height="2" fill="#ce4f19"/><rect x="792" y="459" width="2" height="2" fill="#b73f1b"/><rect x="792" y="469" width="2" height="2" fill="#ce4f19"/><rect x="794" y="465" width="2" height="2" fill="#b13309"/><rect x="794" y="465" width="2" height="2" fill="#b73f1b"/><rect x="796" y="460" width="2" height="2" fill="#d25819"/><rect x="798" y="464" width="2" height="2" fill="#d25819"/><rect x="798" y="464" width="2" height="2" fill="#d25819"/><rect x="800" y="453" width="2" height="2" fill="#ce4f19"/><rect x="800" y="463" width="2" height="2" fill="#d25819"/><rect x="800" y="463" width="2" height="2" fill="#d25819"/><rect x="802" y="462" width="2" height="2" fill="#d25819"/><rect x="802" y="462" width="2" height="2" fill="#ce4f19"/><rect x="804" y="454" width="2" height="2" fill="#d25819"/><rect x="804" y="460" width="2" height="2" fill="#b13309"/><rect x="804" y="466" width="2" height="2" fill="#b13309"/><rect x="806" y="465" width="2" height="2" fill="#d25819"/><rect x="808" y="454" width="2" height="2" fill="#ce4f19"/><rect x="808" y="458" width="2" height="2" fill="#d25819"/><rect x="808" y="460" width="2" height="2" fill="#d25819"/><rect x="810" y="452" width="2" height="2" fill="#ce4f19"/><rect x="810" y="464" width="2" height="2" fill="#b13309"/><rect x="812" y="461" width="2" height="2" fill="#b13309"/><rect x="814" y="458" width="2" height="2" fill="#b73f1b"/><rect x="816" y="450" width="2" height="2" fill="#d25819"/><rect x="816" y="458" width="2" height="2" fill="#d25819"/><rect x="818" y="451" width="2" height="2" fill="#b13309"/><rect x="818" y="449" width="2" height="2" fill="#b73f1b"/><rect x="818" y="455" width="2" height="2" fill="#b73f1b"/><rect x="818" y="461" width="2" height="2" fill="#d25819"/><rect x="820" y="446" width="2" height="2" fill="#ce4f19"/><rect x="822" y="452" width="2" height="2" fill="#b73f1b"/><rect x="828" y="454" width="2" height="2" fill="#b73f1b"/><rect x="828" y="456" width="2" height="2" fill="#b73f1b"/><rect x="830" y="455" width="2" height="2" fill="#d25819"/><rect x="830" y="453" width="2" height="2" fill="#b13309"/><rect x="834" y="444" width="2" height="2" fill="#d25819"/><rect x="834" y="444" width="2" height="2" fill="#ce4f19"/><rect x="836" y="443" width="2" height="2" fill="#b73f1b"/><rect x="836" y="447" width="2" height="2" fill="#b73f1b"/><rect x="836" y="449" width="2" height="2" fill="#ce4f19"/><rect x="838" y="443" width="2" height="2" fill="#ce4f19"/><rect x="838" y="451" width="2" height="2" fill="#d25819"/><rect x="840" y="450" width="2" height="2" fill="#b73f1b"/><rect x="842" y="447" width="2" height="2" fill="#ce4f19"/><rect x="844" y="445" width="2" height="2" fill="#d25819"/><rect x="844" y="453" width="2" height="2" fill="#b73f1b"/><rect x="846" y="438" width="2" height="2" fill="#ce4f19"/><rect x="846" y="444" width="2" height="2" fill="#b13309"/><rect x="846" y="448" width="2" height="2" fill="#ce4f19"/><rect x="846" y="450" width="2" height="2" fill="#b73f1b"/><rect x="848" y="438" width="2" height="2" fill="#b73f1b"/><rect x="848" y="452" width="2" height="2" fill="#d25819"/><rect x="850" y="440" width="2" height="2" fill="#b13309"/><rect x="850" y="448" width="2" height="2" fill="#b13309"/><rect x="852" y="441" width="2" height="2" fill="#d25819"/><rect x="852" y="445" width="2" height="2" fill="#ce4f19"/><rect x="852" y="449" width="2" height="2" fill="#ce4f19"/><rect x="854" y="439" width="2" height="2" fill="#b73f1b"/><rect x="856" y="441" width="2" height="2" fill="#b73f1b"/><rect x="858" y="437" width="2" height="2" fill="#b13309"/><rect x="858" y="447" width="2" height="2" fill="#b73f1b"/><rect x="860" y="441" width="2" height="2" fill="#d25819"/><rect x="860" y="441" width="2" height="2" fill="#b13309"/><rect x="860" y="447" width="2" height="2" fill="#b13309"/><rect x="862" y="437" width="2" height="2" fill="#b13309"/><rect x="862" y="441" width="2" height="2" fill="#b13309"/><rect x="862" y="447" width="2" height="2" fill="#ce4f19"/><rect x="864" y="440" width="2" height="2" fill="#d25819"/><rect x="864" y="446" width="2" height="2" fill="#ce4f19"/><rect x="868" y="438" width="2" height="2" fill="#d25819"/><rect x="868" y="448" width="2" height="2" fill="#b73f1b"/><rect x="870" y="440" width="2" height="2" fill="#d25819"/><rect x="872" y="440" width="2" height="2" fill="#b73f1b"/><rect x="874" y="438" width="2" height="2" fill="#b73f1b"/><rect x="876" y="437" width="2" height="2" fill="#d25819"/><rect x="878" y="441" width="2" height="2" fill="#ce4f19"/><rect x="878" y="445" width="2" height="2" fill="#b13309"/><rect x="880" y="439" width="2" height="2" fill="#d25819"/><rect x="880" y="443" width="2" height="2" fill="#b73f1b"/><rect x="880" y="443" width="2" height="2" fill="#b73f1b"/><rect x="880" y="447" width="2" height="2" fill="#b13309"/><rect x="882" y="439" width="2" height="2" fill="#b73f1b"/><rect x="882" y="443" width="2" height="2" fill="#ce4f19"/><rect x="884" y="441" width="2" height="2" fill="#b13309"/><rect x="884" y="441" width="2" height="2" fill="#d25819"/><rect x="884" y="447" width="2" height="2" fill="#ce4f19"/><rect x="886" y="443" width="2" height="2" fill="#b73f1b"/><rect x="886" y="447" width="2" height="2" fill="#b13309"/><rect x="890" y="444" width="2" height="2" fill="#b13309"/><rect x="892" y="440" width="2" height="2" fill="#b73f1b"/><rect x="892" y="440" width="2" height="2" fill="#ce4f19"/><rect x="892" y="442" width="2" height="2" fill="#d25819"/><rect x="892" y="444" width="2" height="2" fill="#b13309"/><rect x="894" y="446" width="2" height="2" fill="#d25819"/><rect x="898" y="440" width="2" height="2" fill="#ce4f19"/><rect x="902" y="437" width="2" height="2" fill="#d25819"/><rect x="904" y="439" width="2" height="2" fill="#d25819"/><rect x="904" y="441" width="2" height="2" fill="#b73f1b"/><rect x="906" y="441" width="2" height="2" fill="#ce4f19"/><rect x="908" y="433" width="2" height="2" fill="#d25819"/><rect x="908" y="443" width="2" height="2" fill="#d25819"/><rect x="910" y="437" width="2" height="2" fill="#d25819"/><rect x="910" y="439" width="2" height="2" fill="#ce4f19"/><rect x="912" y="442" width="2" height="2" fill="#b73f1b"/><rect x="916" y="432" width="2" height="2" fill="#ce4f19"/><rect x="916" y="438" width="2" height="2" fill="#d25819"/><rect x="918" y="436" width="2" height="2" fill="#d25819"/><rect x="918" y="442" width="2" height="2" fill="#b73f1b"/><rect x="920" y="434" width="2" height="2" fill="#d25819"/><rect x="920" y="440" width="2" height="2" fill="#b13309"/><rect x="922" y="442" width="2" height="2" fill="#b73f1b"/><rect x="924" y="433" width="2" height="2" fill="#b73f1b"/><rect x="924" y="435" width="2" height="2" fill="#b13309"/><rect x="924" y="441" width="2" height="2" fill="#b13309"/><rect x="926" y="437" width="2" height="2" fill="#ce4f19"/><rect x="928" y="435" width="2" height="2" fill="#ce4f19"/><rect x="930" y="441" width="2" height="2" fill="#ce4f19"/><rect x="932" y="437" width="2" height="2" fill="#b13309"/><rect x="934" y="437" width="2" height="2" fill="#ce4f19"/><rect x="936" y="438" width="2" height="2" fill="#ce4f19"/><rect x="936" y="438" width="2" height="2" fill="#d25819"/><rect x="936" y="440" width="2" height="2" fill="#d25819"/><rect x="938" y="432" width="2" height="2" fill="#b73f1b"/><rect x="940" y="436" width="2" height="2" fill="#d25819"/><rect x="944" y="432" width="2" height="2" fill="#b13309"/><rect x="944" y="436" width="2" height="2" fill="#b73f1b"/><rect x="944" y="444" width="2" height="2" fill="#ce4f19"/><rect x="946" y="430" width="2" height="2" fill="#d25819"/><rect x="948" y="431" width="2" height="2" fill="#ce4f19"/><rect x="948" y="433" width="2" height="2" fill="#d25819"/><rect x="948" y="441" width="2" height="2" fill="#b13309"/><rect x="950" y="433" width="2" height="2" fill="#b73f1b"/><rect x="950" y="439" width="2" height="2" fill="#b73f1b"/></g><g clip-path="url(#slR)"><polygon points="507.0,522.5 668.0,495.5 846.0,438.0 952.0,429.0 952.0,481.0 850.0,488.5 683.0,545.0 516.0,572.5" fill="#a42e34"/><polygon points="507.0,520.5 510.0,520.0 513.0,519.5 516.0,519.0 519.0,518.5 522.0,518.0 525.0,517.5 528.0,517.0 531.0,516.5 534.0,516.0 537.0,515.5 540.0,515.0 543.0,514.5 546.0,514.0 549.0,513.5 552.0,513.0 555.0,512.5 558.0,511.9 561.0,511.4 564.0,510.9 567.0,510.4 570.0,509.9 573.0,509.4 576.0,508.9 579.0,508.4 582.0,507.9 585.0,507.4 588.0,506.9 591.0,506.4 594.0,505.9 597.0,505.4 600.0,504.9 603.0,504.4 606.0,503.9 609.0,503.4 612.0,502.9 615.0,502.4 618.0,501.9 621.0,501.4 624.0,500.9 627.0,500.4 630.0,499.9 633.0,499.4 636.0,498.9 639.0,498.4 642.0,497.9 645.0,497.4 648.0,496.9 651.0,496.4 654.0,495.8 657.0,495.3 660.0,494.8 663.0,494.3 666.0,493.8 668.0,493.5 671.0,492.5 674.0,491.6 677.0,490.6 680.0,489.6 683.0,488.7 686.0,487.7 689.0,486.7 692.0,485.7 695.0,484.8 698.0,483.8 701.0,482.8 704.0,481.9 707.0,480.9 710.0,479.9 713.0,479.0 716.0,478.0 719.0,477.0 722.0,476.1 725.0,475.1 728.0,474.1 731.0,473.1 734.0,472.2 737.0,471.2 740.0,470.2 743.0,469.3 746.0,468.3 749.0,467.3 752.0,466.4 755.0,465.4 758.0,464.4 761.0,463.5 764.0,462.5 767.0,461.5 770.0,460.6 773.0,459.6 776.0,458.6 779.0,457.6 782.0,456.7 785.0,455.7 788.0,454.7 791.0,453.8 794.0,452.8 797.0,451.8 800.0,450.9 803.0,449.9 806.0,448.9 809.0,448.0 812.0,447.0 815.0,446.0 818.0,445.0 821.0,444.1 824.0,443.1 827.0,442.1 830.0,441.2 833.0,440.2 836.0,439.2 839.0,438.3 842.0,437.3 845.0,436.3 846.0,436.0 849.0,435.7 852.0,435.5 855.0,435.2 858.0,435.0 861.0,434.7 864.0,434.5 867.0,434.2 870.0,434.0 873.0,433.7 876.0,433.5 879.0,433.2 882.0,432.9 885.0,432.7 888.0,432.4 891.0,432.2 894.0,431.9 897.0,431.7 900.0,431.4 903.0,431.2 906.0,430.9 909.0,430.7 912.0,430.4 915.0,430.1 918.0,429.9 921.0,429.6 924.0,429.4 927.0,429.1 930.0,428.9 933.0,428.6 936.0,428.4 939.0,428.1 942.0,427.8 945.0,427.6 948.0,427.3 951.0,427.1 951.0,441.1 948.0,441.3 945.0,441.6 942.0,441.8 939.0,442.1 936.0,442.4 933.0,442.6 930.0,442.9 927.0,443.1 924.0,443.4 921.0,443.6 918.0,443.9 915.0,444.1 912.0,444.4 909.0,444.7 906.0,444.9 903.0,445.2 900.0,445.4 897.0,445.7 894.0,445.9 891.0,446.2 888.0,446.4 885.0,446.7 882.0,446.9 879.0,447.2 876.0,447.5 873.0,447.7 870.0,448.0 867.0,448.2 864.0,448.5 861.0,448.7 858.0,449.0 855.0,449.2 852.0,449.5 849.0,449.7 846.0,450.0 845.0,450.3 842.0,451.3 839.0,452.3 836.0,453.2 833.0,454.2 830.0,455.2 827.0,456.1 824.0,457.1 821.0,458.1 818.0,459.0 815.0,460.0 812.0,461.0 809.0,462.0 806.0,462.9 803.0,463.9 800.0,464.9 797.0,465.8 794.0,466.8 791.0,467.8 788.0,468.7 785.0,469.7 782.0,470.7 779.0,471.6 776.0,472.6 773.0,473.6 770.0,474.6 767.0,475.5 764.0,476.5 761.0,477.5 758.0,478.4 755.0,479.4 752.0,480.4 749.0,481.3 746.0,482.3 743.0,483.3 740.0,484.2 737.0,485.2 734.0,486.2 731.0,487.1 728.0,488.1 725.0,489.1 722.0,490.1 719.0,491.0 716.0,492.0 713.0,493.0 710.0,493.9 707.0,494.9 704.0,495.9 701.0,496.8 698.0,497.8 695.0,498.8 692.0,499.7 689.0,500.7 686.0,501.7 683.0,502.7 680.0,503.6 677.0,504.6 674.0,505.6 671.0,506.5 668.0,507.5 666.0,507.8 663.0,508.3 660.0,508.8 657.0,509.3 654.0,509.8 651.0,510.4 648.0,510.9 645.0,511.4 642.0,511.9 639.0,512.4 636.0,512.9 633.0,513.4 630.0,513.9 627.0,514.4 624.0,514.9 621.0,515.4 618.0,515.9 615.0,516.4 612.0,516.9 609.0,517.4 606.0,517.9 603.0,518.4 600.0,518.9 597.0,519.4 594.0,519.9 591.0,520.4 588.0,520.9 585.0,521.4 582.0,521.9 579.0,522.4 576.0,522.9 573.0,523.4 570.0,523.9 567.0,524.4 564.0,524.9 561.0,525.4 558.0,525.9 555.0,526.5 552.0,527.0 549.0,527.5 546.0,528.0 543.0,528.5 540.0,529.0 537.0,529.5 534.0,530.0 531.0,530.5 528.0,531.0 525.0,531.5 522.0,532.0 519.0,532.5 516.0,533.0 513.0,533.5 510.0,534.0 507.0,534.5" fill="#c03702"/><polygon points="507.0,536.5 510.0,535.9 513.0,535.3 516.0,534.4 519.0,533.5 522.0,532.5 525.0,531.5 528.0,530.4 531.0,529.4 534.0,528.5 537.0,527.7 540.0,527.0 543.0,526.5 546.0,526.1 549.0,525.8 552.0,525.6 555.0,525.6 558.0,525.6 561.0,525.6 564.0,525.6 567.0,525.6 570.0,525.5 573.0,525.3 576.0,524.9 579.0,524.4 582.0,523.8 585.0,523.0 588.0,522.1 591.0,521.1 594.0,520.1 597.0,519.0 600.0,518.0 603.0,517.1 606.0,516.2 609.0,515.5 612.0,514.9 615.0,514.4 618.0,514.1 621.0,513.9 624.0,513.9 627.0,513.8 630.0,513.9 633.0,513.9 636.0,513.9 639.0,513.8 642.0,513.6 645.0,513.3 648.0,512.9 651.0,512.3 654.0,511.5 657.0,510.7 660.0,509.7 663.0,508.7 666.0,507.7 668.0,507.0 671.0,505.5 674.0,504.1 677.0,502.8 680.0,501.7 683.0,500.7 686.0,499.8 689.0,499.0 692.0,498.4 695.0,497.9 698.0,497.5 701.0,497.0 704.0,496.6 707.0,496.1 710.0,495.5 713.0,494.8 716.0,494.0 719.0,493.0 722.0,491.9 725.0,490.7 728.0,489.3 731.0,487.9 734.0,486.4 737.0,484.9 740.0,483.4 743.0,482.0 746.0,480.6 749.0,479.4 752.0,478.4 755.0,477.4 758.0,476.7 761.0,476.0 764.0,475.5 767.0,475.0 770.0,474.6 773.0,474.1 776.0,473.6 779.0,473.1 782.0,472.4 785.0,471.7 788.0,470.7 791.0,469.7 794.0,468.5 797.0,467.1 800.0,465.7 803.0,464.2 806.0,462.7 809.0,461.2 812.0,459.8 815.0,458.5 818.0,457.2 821.0,456.1 824.0,455.1 827.0,454.3 830.0,453.6 833.0,453.0 836.0,452.5 839.0,452.1 842.0,451.6 845.0,451.2 846.0,451.0 849.0,451.2 852.0,451.3 855.0,451.2 858.0,451.0 861.0,450.6 864.0,450.1 867.0,449.5 870.0,448.8 873.0,448.1 876.0,447.3 879.0,446.5 882.0,445.8 885.0,445.1 888.0,444.6 891.0,444.2 894.0,443.9 897.0,443.8 900.0,443.9 903.0,444.0 906.0,444.2 909.0,444.5 912.0,444.8 915.0,445.0 918.0,445.2 921.0,445.3 924.0,445.3 927.0,445.1 930.0,444.8 933.0,444.4 936.0,443.8 939.0,443.1 942.0,442.4 945.0,441.6 948.0,440.8 951.0,440.1 951.0,448.1 948.0,448.8 945.0,449.6 942.0,450.4 939.0,451.1 936.0,451.8 933.0,452.4 930.0,452.8 927.0,453.1 924.0,453.3 921.0,453.3 918.0,453.2 915.0,453.0 912.0,452.8 909.0,452.5 906.0,452.2 903.0,452.0 900.0,451.9 897.0,451.8 894.0,451.9 891.0,452.2 888.0,452.6 885.0,453.1 882.0,453.8 879.0,454.5 876.0,455.3 873.0,456.1 870.0,456.8 867.0,457.5 864.0,458.1 861.0,458.6 858.0,459.0 855.0,459.2 852.0,459.3 849.0,459.2 846.0,459.0 845.0,459.2 842.0,459.6 839.0,460.1 836.0,460.5 833.0,461.0 830.0,461.6 827.0,462.3 824.0,463.1 821.0,464.1 818.0,465.2 815.0,466.5 812.0,467.8 809.0,469.2 806.0,470.7 803.0,472.2 800.0,473.7 797.0,475.1 794.0,476.5 791.0,477.7 788.0,478.7 785.0,479.7 782.0,480.4 779.0,481.1 776.0,481.6 773.0,482.1 770.0,482.6 767.0,483.0 764.0,483.5 761.0,484.0 758.0,484.7 755.0,485.4 752.0,486.4 749.0,487.4 746.0,488.6 743.0,490.0 740.0,491.4 737.0,492.9 734.0,494.4 731.0,495.9 728.0,497.3 725.0,498.7 722.0,499.9 719.0,501.0 716.0,502.0 713.0,502.8 710.0,503.5 707.0,504.1 704.0,504.6 701.0,505.0 698.0,505.5 695.0,505.9 692.0,506.4 689.0,507.0 686.0,507.8 683.0,508.7 680.0,509.7 677.0,510.8 674.0,512.1 671.0,513.5 668.0,515.0 666.0,515.7 663.0,516.7 660.0,517.7 657.0,518.7 654.0,519.5 651.0,520.3 648.0,520.9 645.0,521.3 642.0,521.6 639.0,521.8 636.0,521.9 633.0,521.9 630.0,521.9 627.0,521.8 624.0,521.9 621.0,521.9 618.0,522.1 615.0,522.4 612.0,522.9 609.0,523.5 606.0,524.2 603.0,525.1 600.0,526.0 597.0,527.0 594.0,528.1 591.0,529.1 588.0,530.1 585.0,531.0 582.0,531.8 579.0,532.4 576.0,532.9 573.0,533.3 570.0,533.5 567.0,533.6 564.0,533.6 561.0,533.6 558.0,533.6 555.0,533.6 552.0,533.6 549.0,533.8 546.0,534.1 543.0,534.5 540.0,535.0 537.0,535.7 534.0,536.5 531.0,537.4 528.0,538.4 525.0,539.5 522.0,540.5 519.0,541.5 516.0,542.4 513.0,543.3 510.0,543.9 507.0,544.5" fill="#aa2b13"/><polygon points="507.0,542.0 510.0,540.7 513.0,539.5 516.0,538.5 519.0,537.6 522.0,537.0 525.0,536.6 528.0,536.3 531.0,536.3 534.0,536.4 537.0,536.7 540.0,537.0 543.0,537.3 546.0,537.5 549.0,537.6 552.0,537.6 555.0,537.4 558.0,536.9 561.0,536.3 564.0,535.4 567.0,534.4 570.0,533.2 573.0,532.0 576.0,530.7 579.0,529.4 582.0,528.2 585.0,527.1 588.0,526.2 591.0,525.4 594.0,524.9 597.0,524.6 600.0,524.6 603.0,524.6 606.0,524.8 609.0,525.1 612.0,525.4 615.0,525.7 618.0,525.9 621.0,525.9 624.0,525.7 627.0,525.4 630.0,524.8 633.0,524.0 636.0,523.0 639.0,521.9 642.0,520.7 645.0,519.4 648.0,518.1 651.0,516.8 654.0,515.7 657.0,514.7 660.0,513.9 663.0,513.3 666.0,513.0 668.0,512.9 671.0,512.4 674.0,512.0 677.0,511.8 680.0,511.6 683.0,511.5 686.0,511.2 689.0,510.9 692.0,510.4 695.0,509.7 698.0,508.8 701.0,507.7 704.0,506.4 707.0,504.9 710.0,503.2 713.0,501.5 716.0,499.7 719.0,498.0 722.0,496.3 725.0,494.7 728.0,493.4 731.0,492.2 734.0,491.2 737.0,490.5 740.0,489.9 743.0,489.5 746.0,489.2 749.0,489.1 752.0,488.9 755.0,488.7 758.0,488.4 761.0,488.0 764.0,487.3 767.0,486.5 770.0,485.5 773.0,484.2 776.0,482.8 779.0,481.2 782.0,479.5 785.0,477.7 788.0,475.9 791.0,474.2 794.0,472.6 797.0,471.2 800.0,469.9 803.0,468.9 806.0,468.1 809.0,467.4 812.0,467.0 815.0,466.7 818.0,466.5 821.0,466.3 824.0,466.2 827.0,465.9 830.0,465.5 833.0,465.0 836.0,464.2 839.0,463.2 842.0,462.1 845.0,460.7 846.0,460.2 849.0,459.3 852.0,458.3 855.0,457.2 858.0,456.2 861.0,455.2 864.0,454.3 867.0,453.6 870.0,453.0 873.0,452.7 876.0,452.6 879.0,452.7 882.0,453.0 885.0,453.4 888.0,453.9 891.0,454.4 894.0,455.0 897.0,455.4 900.0,455.8 903.0,455.9 906.0,455.9 909.0,455.6 912.0,455.2 915.0,454.5 918.0,453.7 921.0,452.7 924.0,451.6 927.0,450.6 930.0,449.6 933.0,448.6 936.0,447.9 939.0,447.3 942.0,446.9 945.0,446.7 948.0,446.7 951.0,446.9 951.0,454.9 948.0,454.7 945.0,454.7 942.0,454.9 939.0,455.3 936.0,455.9 933.0,456.6 930.0,457.6 927.0,458.6 924.0,459.6 921.0,460.7 918.0,461.7 915.0,462.5 912.0,463.2 909.0,463.6 906.0,463.9 903.0,463.9 900.0,463.8 897.0,463.4 894.0,463.0 891.0,462.4 888.0,461.9 885.0,461.4 882.0,461.0 879.0,460.7 876.0,460.6 873.0,460.7 870.0,461.0 867.0,461.6 864.0,462.3 861.0,463.2 858.0,464.2 855.0,465.2 852.0,466.3 849.0,467.3 846.0,468.2 845.0,468.7 842.0,470.1 839.0,471.2 836.0,472.2 833.0,473.0 830.0,473.5 827.0,473.9 824.0,474.2 821.0,474.3 818.0,474.5 815.0,474.7 812.0,475.0 809.0,475.4 806.0,476.1 803.0,476.9 800.0,477.9 797.0,479.2 794.0,480.6 791.0,482.2 788.0,483.9 785.0,485.7 782.0,487.5 779.0,489.2 776.0,490.8 773.0,492.2 770.0,493.5 767.0,494.5 764.0,495.3 761.0,496.0 758.0,496.4 755.0,496.7 752.0,496.9 749.0,497.1 746.0,497.2 743.0,497.5 740.0,497.9 737.0,498.5 734.0,499.2 731.0,500.2 728.0,501.4 725.0,502.7 722.0,504.3 719.0,506.0 716.0,507.7 713.0,509.5 710.0,511.2 707.0,512.9 704.0,514.4 701.0,515.7 698.0,516.8 695.0,517.7 692.0,518.4 689.0,518.9 686.0,519.2 683.0,519.5 680.0,519.6 677.0,519.8 674.0,520.0 671.0,520.4 668.0,520.9 666.0,521.0 663.0,521.3 660.0,521.9 657.0,522.7 654.0,523.7 651.0,524.8 648.0,526.1 645.0,527.4 642.0,528.7 639.0,529.9 636.0,531.0 633.0,532.0 630.0,532.8 627.0,533.4 624.0,533.7 621.0,533.9 618.0,533.9 615.0,533.7 612.0,533.4 609.0,533.1 606.0,532.8 603.0,532.6 600.0,532.6 597.0,532.6 594.0,532.9 591.0,533.4 588.0,534.2 585.0,535.1 582.0,536.2 579.0,537.4 576.0,538.7 573.0,540.0 570.0,541.2 567.0,542.4 564.0,543.4 561.0,544.3 558.0,544.9 555.0,545.4 552.0,545.6 549.0,545.6 546.0,545.5 543.0,545.3 540.0,545.0 537.0,544.7 534.0,544.4 531.0,544.3 528.0,544.3 525.0,544.6 522.0,545.0 519.0,545.6 516.0,546.5 513.0,547.5 510.0,548.7 507.0,550.0" fill="#922313"/><polygon points="507.0,547.9 510.0,547.9 513.0,547.9 516.0,548.1 519.0,548.3 522.0,548.5 525.0,548.6 528.0,548.7 531.0,548.8 534.0,548.6 537.0,548.4 540.0,548.0 543.0,547.4 546.0,546.6 549.0,545.7 552.0,544.7 555.0,543.6 558.0,542.4 561.0,541.2 564.0,540.0 567.0,538.9 570.0,537.8 573.0,536.9 576.0,536.1 579.0,535.4 582.0,535.0 585.0,534.6 588.0,534.5 591.0,534.5 594.0,534.5 597.0,534.7 600.0,534.9 603.0,535.1 606.0,535.3 609.0,535.3 612.0,535.3 615.0,535.2 618.0,534.8 621.0,534.4 624.0,533.7 627.0,532.9 630.0,532.0 633.0,530.9 636.0,529.8 639.0,528.6 642.0,527.4 645.0,526.2 648.0,525.1 651.0,524.1 654.0,523.2 657.0,522.4 660.0,521.8 663.0,521.4 666.0,521.2 668.0,521.1 671.0,520.6 674.0,520.2 677.0,519.9 680.0,519.6 683.0,519.4 686.0,519.0 689.0,518.7 692.0,518.2 695.0,517.5 698.0,516.8 701.0,515.8 704.0,514.7 707.0,513.5 710.0,512.1 713.0,510.5 716.0,508.9 719.0,507.3 722.0,505.6 725.0,503.9 728.0,502.4 731.0,500.9 734.0,499.5 737.0,498.3 740.0,497.2 743.0,496.4 746.0,495.6 749.0,495.1 752.0,494.6 755.0,494.2 758.0,494.0 761.0,493.7 764.0,493.4 767.0,493.1 770.0,492.7 773.0,492.1 776.0,491.5 779.0,490.6 782.0,489.6 785.0,488.5 788.0,487.2 791.0,485.7 794.0,484.2 797.0,482.5 800.0,480.9 803.0,479.2 806.0,477.6 809.0,476.0 812.0,474.6 815.0,473.2 818.0,472.1 821.0,471.1 824.0,470.3 827.0,469.6 830.0,469.0 833.0,468.6 836.0,468.3 839.0,468.0 842.0,467.8 845.0,467.5 846.0,467.4 849.0,467.7 852.0,467.9 855.0,468.0 858.0,467.9 861.0,467.7 864.0,467.3 867.0,466.8 870.0,466.1 873.0,465.3 876.0,464.4 879.0,463.4 882.0,462.5 885.0,461.5 888.0,460.7 891.0,459.9 894.0,459.3 897.0,458.8 900.0,458.4 903.0,458.2 906.0,458.2 909.0,458.4 912.0,458.6 915.0,459.0 918.0,459.4 921.0,459.9 924.0,460.3 927.0,460.7 930.0,461.0 933.0,461.2 936.0,461.2 939.0,461.1 942.0,460.8 945.0,460.4 948.0,459.8 951.0,459.0 951.0,469.0 948.0,469.8 945.0,470.4 942.0,470.8 939.0,471.1 936.0,471.2 933.0,471.2 930.0,471.0 927.0,470.7 924.0,470.3 921.0,469.9 918.0,469.4 915.0,469.0 912.0,468.6 909.0,468.4 906.0,468.2 903.0,468.2 900.0,468.4 897.0,468.8 894.0,469.3 891.0,469.9 888.0,470.7 885.0,471.5 882.0,472.5 879.0,473.4 876.0,474.4 873.0,475.3 870.0,476.1 867.0,476.8 864.0,477.3 861.0,477.7 858.0,477.9 855.0,478.0 852.0,477.9 849.0,477.7 846.0,477.4 845.0,477.5 842.0,477.8 839.0,478.0 836.0,478.3 833.0,478.6 830.0,479.0 827.0,479.6 824.0,480.3 821.0,481.1 818.0,482.1 815.0,483.2 812.0,484.6 809.0,486.0 806.0,487.6 803.0,489.2 800.0,490.9 797.0,492.5 794.0,494.2 791.0,495.7 788.0,497.2 785.0,498.5 782.0,499.6 779.0,500.6 776.0,501.5 773.0,502.1 770.0,502.7 767.0,503.1 764.0,503.4 761.0,503.7 758.0,504.0 755.0,504.2 752.0,504.6 749.0,505.1 746.0,505.6 743.0,506.4 740.0,507.2 737.0,508.3 734.0,509.5 731.0,510.9 728.0,512.4 725.0,513.9 722.0,515.6 719.0,517.3 716.0,518.9 713.0,520.5 710.0,522.1 707.0,523.5 704.0,524.7 701.0,525.8 698.0,526.8 695.0,527.5 692.0,528.2 689.0,528.7 686.0,529.0 683.0,529.4 680.0,529.6 677.0,529.9 674.0,530.2 671.0,530.6 668.0,531.1 666.0,531.2 663.0,531.4 660.0,531.8 657.0,532.4 654.0,533.2 651.0,534.1 648.0,535.1 645.0,536.2 642.0,537.4 639.0,538.6 636.0,539.8 633.0,540.9 630.0,542.0 627.0,542.9 624.0,543.7 621.0,544.4 618.0,544.8 615.0,545.2 612.0,545.3 609.0,545.3 606.0,545.3 603.0,545.1 600.0,544.9 597.0,544.7 594.0,544.5 591.0,544.5 588.0,544.5 585.0,544.6 582.0,545.0 579.0,545.4 576.0,546.1 573.0,546.9 570.0,547.8 567.0,548.9 564.0,550.0 561.0,551.2 558.0,552.4 555.0,553.6 552.0,554.7 549.0,555.7 546.0,556.6 543.0,557.4 540.0,558.0 537.0,558.4 534.0,558.6 531.0,558.8 528.0,558.7 525.0,558.6 522.0,558.5 519.0,558.3 516.0,558.1 513.0,557.9 510.0,557.9 507.0,557.9" fill="#9e2925"/><polygon points="507.0,561.0 510.0,560.0 513.0,559.0 516.0,558.1 519.0,557.2 522.0,556.4 525.0,555.6 528.0,555.0 531.0,554.5 534.0,554.1 537.0,553.8 540.0,553.6 543.0,553.4 546.0,553.3 549.0,553.3 552.0,553.3 555.0,553.2 558.0,553.1 561.0,553.0 564.0,552.7 567.0,552.4 570.0,551.9 573.0,551.4 576.0,550.7 579.0,549.9 582.0,549.1 585.0,548.2 588.0,547.2 591.0,546.3 594.0,545.3 597.0,544.4 600.0,543.5 603.0,542.7 606.0,542.0 609.0,541.4 612.0,540.9 615.0,540.5 618.0,540.3 621.0,540.1 624.0,540.0 627.0,539.9 630.0,539.9 633.0,539.8 636.0,539.8 639.0,539.7 642.0,539.5 645.0,539.2 648.0,538.8 651.0,538.3 654.0,537.7 657.0,537.1 660.0,536.3 663.0,535.4 666.0,534.5 668.0,533.8 671.0,532.4 674.0,530.9 677.0,529.5 680.0,528.2 683.0,526.9 686.0,525.8 689.0,524.7 692.0,523.8 695.0,522.9 698.0,522.2 701.0,521.5 704.0,521.0 707.0,520.4 710.0,519.9 713.0,519.4 716.0,518.9 719.0,518.3 722.0,517.7 725.0,516.9 728.0,516.1 731.0,515.1 734.0,514.1 737.0,512.9 740.0,511.7 743.0,510.3 746.0,508.9 749.0,507.5 752.0,506.1 755.0,504.6 758.0,503.3 761.0,501.9 764.0,500.7 767.0,499.6 770.0,498.6 773.0,497.6 776.0,496.8 779.0,496.1 782.0,495.5 785.0,494.9 788.0,494.4 791.0,493.9 794.0,493.4 797.0,492.9 800.0,492.3 803.0,491.6 806.0,490.8 809.0,489.9 812.0,489.0 815.0,487.9 818.0,486.7 821.0,485.4 824.0,484.0 827.0,482.6 830.0,481.2 833.0,479.7 836.0,478.3 839.0,477.0 842.0,475.7 845.0,474.5 846.0,474.1 849.0,473.8 852.0,473.5 855.0,473.4 858.0,473.4 861.0,473.4 864.0,473.6 867.0,473.8 870.0,474.0 873.0,474.2 876.0,474.4 879.0,474.5 882.0,474.6 885.0,474.5 888.0,474.4 891.0,474.2 894.0,473.8 897.0,473.4 900.0,472.8 903.0,472.2 906.0,471.5 909.0,470.8 912.0,470.1 915.0,469.4 918.0,468.7 921.0,468.1 924.0,467.6 927.0,467.2 930.0,466.9 933.0,466.7 936.0,466.6 939.0,466.6 942.0,466.7 945.0,466.8 948.0,467.0 951.0,467.2 951.0,489.2 948.0,489.0 945.0,488.8 942.0,488.7 939.0,488.6 936.0,488.6 933.0,488.7 930.0,488.9 927.0,489.2 924.0,489.6 921.0,490.1 918.0,490.7 915.0,491.4 912.0,492.1 909.0,492.8 906.0,493.5 903.0,494.2 900.0,494.8 897.0,495.4 894.0,495.8 891.0,496.2 888.0,496.4 885.0,496.5 882.0,496.6 879.0,496.5 876.0,496.4 873.0,496.2 870.0,496.0 867.0,495.8 864.0,495.6 861.0,495.4 858.0,495.4 855.0,495.4 852.0,495.5 849.0,495.8 846.0,496.1 845.0,496.5 842.0,497.7 839.0,499.0 836.0,500.3 833.0,501.7 830.0,503.2 827.0,504.6 824.0,506.0 821.0,507.4 818.0,508.7 815.0,509.9 812.0,511.0 809.0,511.9 806.0,512.8 803.0,513.6 800.0,514.3 797.0,514.9 794.0,515.4 791.0,515.9 788.0,516.4 785.0,516.9 782.0,517.5 779.0,518.1 776.0,518.8 773.0,519.6 770.0,520.6 767.0,521.6 764.0,522.7 761.0,523.9 758.0,525.3 755.0,526.6 752.0,528.1 749.0,529.5 746.0,530.9 743.0,532.3 740.0,533.7 737.0,534.9 734.0,536.1 731.0,537.1 728.0,538.1 725.0,538.9 722.0,539.7 719.0,540.3 716.0,540.9 713.0,541.4 710.0,541.9 707.0,542.4 704.0,543.0 701.0,543.5 698.0,544.2 695.0,544.9 692.0,545.8 689.0,546.7 686.0,547.8 683.0,548.9 680.0,550.2 677.0,551.5 674.0,552.9 671.0,554.4 668.0,555.8 666.0,556.5 663.0,557.4 660.0,558.3 657.0,559.1 654.0,559.7 651.0,560.3 648.0,560.8 645.0,561.2 642.0,561.5 639.0,561.7 636.0,561.8 633.0,561.8 630.0,561.9 627.0,561.9 624.0,562.0 621.0,562.1 618.0,562.3 615.0,562.5 612.0,562.9 609.0,563.4 606.0,564.0 603.0,564.7 600.0,565.5 597.0,566.4 594.0,567.3 591.0,568.3 588.0,569.2 585.0,570.2 582.0,571.1 579.0,571.9 576.0,572.7 573.0,573.4 570.0,573.9 567.0,574.4 564.0,574.7 561.0,575.0 558.0,575.1 555.0,575.2 552.0,575.3 549.0,575.3 546.0,575.3 543.0,575.4 540.0,575.6 537.0,575.8 534.0,576.1 531.0,576.5 528.0,577.0 525.0,577.6 522.0,578.4 519.0,579.2 516.0,580.1 513.0,581.0 510.0,582.0 507.0,583.0" fill="#a42e38"/><rect x="509" y="526" width="2" height="2" fill="#b73f1b"/><rect x="509" y="530" width="2" height="2" fill="#b13309"/><rect x="509" y="534" width="2" height="2" fill="#ce4f19"/><rect x="513" y="521" width="2" height="2" fill="#b13309"/><rect x="515" y="521" width="2" height="2" fill="#d25819"/><rect x="515" y="533" width="2" height="2" fill="#ce4f19"/><rect x="517" y="525" width="2" height="2" fill="#ce4f19"/><rect x="517" y="525" width="2" height="2" fill="#b73f1b"/><rect x="517" y="529" width="2" height="2" fill="#b73f1b"/><rect x="517" y="529" width="2" height="2" fill="#ce4f19"/><rect x="517" y="531" width="2" height="2" fill="#b73f1b"/><rect x="519" y="532" width="2" height="2" fill="#d25819"/><rect x="521" y="524" width="2" height="2" fill="#ce4f19"/><rect x="521" y="528" width="2" height="2" fill="#ce4f19"/><rect x="521" y="528" width="2" height="2" fill="#b73f1b"/><rect x="521" y="532" width="2" height="2" fill="#b13309"/><rect x="523" y="524" width="2" height="2" fill="#b13309"/><rect x="523" y="534" width="2" height="2" fill="#d25819"/><rect x="525" y="521" width="2" height="2" fill="#b73f1b"/><rect x="525" y="529" width="2" height="2" fill="#b13309"/><rect x="527" y="525" width="2" height="2" fill="#d25819"/><rect x="527" y="527" width="2" height="2" fill="#b13309"/><rect x="527" y="531" width="2" height="2" fill="#d25819"/><rect x="529" y="525" width="2" height="2" fill="#b73f1b"/><rect x="529" y="527" width="2" height="2" fill="#b13309"/><rect x="531" y="522" width="2" height="2" fill="#b13309"/><rect x="531" y="526" width="2" height="2" fill="#b13309"/><rect x="533" y="518" width="2" height="2" fill="#ce4f19"/><rect x="533" y="524" width="2" height="2" fill="#d25819"/><rect x="533" y="526" width="2" height="2" fill="#b73f1b"/><rect x="533" y="528" width="2" height="2" fill="#b73f1b"/><rect x="533" y="532" width="2" height="2" fill="#ce4f19"/><rect x="535" y="520" width="2" height="2" fill="#ce4f19"/><rect x="535" y="524" width="2" height="2" fill="#ce4f19"/><rect x="535" y="528" width="2" height="2" fill="#b13309"/><rect x="535" y="528" width="2" height="2" fill="#d25819"/><rect x="537" y="523" width="2" height="2" fill="#b13309"/><rect x="539" y="521" width="2" height="2" fill="#ce4f19"/><rect x="541" y="521" width="2" height="2" fill="#ce4f19"/><rect x="541" y="531" width="2" height="2" fill="#d25819"/><rect x="549" y="519" width="2" height="2" fill="#ce4f19"/><rect x="551" y="525" width="2" height="2" fill="#ce4f19"/><rect x="551" y="525" width="2" height="2" fill="#b13309"/><rect x="553" y="521" width="2" height="2" fill="#b73f1b"/><rect x="553" y="519" width="2" height="2" fill="#d25819"/><rect x="553" y="525" width="2" height="2" fill="#d25819"/><rect x="555" y="526" width="2" height="2" fill="#b13309"/><rect x="557" y="524" width="2" height="2" fill="#d25819"/><rect x="559" y="520" width="2" height="2" fill="#ce4f19"/><rect x="559" y="524" width="2" height="2" fill="#b73f1b"/><rect x="563" y="521" width="2" height="2" fill="#ce4f19"/><rect x="565" y="523" width="2" height="2" fill="#b13309"/><rect x="567" y="516" width="2" height="2" fill="#d25819"/><rect x="567" y="524" width="2" height="2" fill="#d25819"/><rect x="569" y="512" width="2" height="2" fill="#b73f1b"/><rect x="569" y="516" width="2" height="2" fill="#d25819"/><rect x="571" y="520" width="2" height="2" fill="#b13309"/><rect x="571" y="522" width="2" height="2" fill="#b73f1b"/><rect x="571" y="522" width="2" height="2" fill="#b13309"/><rect x="575" y="519" width="2" height="2" fill="#ce4f19"/><rect x="575" y="519" width="2" height="2" fill="#ce4f19"/><rect x="577" y="523" width="2" height="2" fill="#d25819"/><rect x="579" y="516" width="2" height="2" fill="#b73f1b"/><rect x="579" y="522" width="2" height="2" fill="#b13309"/><rect x="585" y="517" width="2" height="2" fill="#d25819"/><rect x="587" y="511" width="2" height="2" fill="#d25819"/><rect x="587" y="519" width="2" height="2" fill="#ce4f19"/><rect x="589" y="509" width="2" height="2" fill="#b73f1b"/><rect x="589" y="515" width="2" height="2" fill="#b13309"/><rect x="589" y="521" width="2" height="2" fill="#b73f1b"/><rect x="591" y="514" width="2" height="2" fill="#b73f1b"/><rect x="591" y="516" width="2" height="2" fill="#b73f1b"/><rect x="591" y="520" width="2" height="2" fill="#ce4f19"/><rect x="593" y="510" width="2" height="2" fill="#ce4f19"/><rect x="593" y="512" width="2" height="2" fill="#ce4f19"/><rect x="595" y="514" width="2" height="2" fill="#ce4f19"/><rect x="597" y="513" width="2" height="2" fill="#b73f1b"/><rect x="599" y="509" width="2" height="2" fill="#b13309"/><rect x="599" y="515" width="2" height="2" fill="#d25819"/><rect x="601" y="509" width="2" height="2" fill="#ce4f19"/><rect x="601" y="511" width="2" height="2" fill="#b13309"/><rect x="601" y="515" width="2" height="2" fill="#b73f1b"/><rect x="603" y="512" width="2" height="2" fill="#ce4f19"/><rect x="603" y="516" width="2" height="2" fill="#d25819"/><rect x="605" y="510" width="2" height="2" fill="#d25819"/><rect x="605" y="512" width="2" height="2" fill="#b73f1b"/><rect x="605" y="514" width="2" height="2" fill="#b73f1b"/><rect x="605" y="516" width="2" height="2" fill="#ce4f19"/><rect x="607" y="506" width="2" height="2" fill="#d25819"/><rect x="607" y="510" width="2" height="2" fill="#b13309"/><rect x="609" y="519" width="2" height="2" fill="#ce4f19"/><rect x="611" y="509" width="2" height="2" fill="#d25819"/><rect x="611" y="513" width="2" height="2" fill="#ce4f19"/><rect x="613" y="505" width="2" height="2" fill="#b73f1b"/><rect x="613" y="513" width="2" height="2" fill="#d25819"/><rect x="613" y="513" width="2" height="2" fill="#b13309"/><rect x="617" y="510" width="2" height="2" fill="#d25819"/><rect x="617" y="514" width="2" height="2" fill="#ce4f19"/><rect x="617" y="518" width="2" height="2" fill="#d25819"/><rect x="621" y="515" width="2" height="2" fill="#ce4f19"/><rect x="623" y="505" width="2" height="2" fill="#ce4f19"/><rect x="623" y="511" width="2" height="2" fill="#d25819"/><rect x="623" y="513" width="2" height="2" fill="#b73f1b"/><rect x="625" y="515" width="2" height="2" fill="#ce4f19"/><rect x="631" y="506" width="2" height="2" fill="#d25819"/><rect x="631" y="506" width="2" height="2" fill="#ce4f19"/><rect x="633" y="503" width="2" height="2" fill="#b73f1b"/><rect x="633" y="507" width="2" height="2" fill="#d25819"/><rect x="633" y="505" width="2" height="2" fill="#b73f1b"/><rect x="633" y="509" width="2" height="2" fill="#ce4f19"/><rect x="637" y="505" width="2" height="2" fill="#b73f1b"/><rect x="637" y="505" width="2" height="2" fill="#d25819"/><rect x="637" y="511" width="2" height="2" fill="#b13309"/><rect x="639" y="506" width="2" height="2" fill="#b73f1b"/><rect x="639" y="512" width="2" height="2" fill="#b13309"/><rect x="641" y="500" width="2" height="2" fill="#d25819"/><rect x="641" y="512" width="2" height="2" fill="#b13309"/><rect x="643" y="502" width="2" height="2" fill="#b13309"/><rect x="643" y="506" width="2" height="2" fill="#ce4f19"/><rect x="643" y="510" width="2" height="2" fill="#ce4f19"/><rect x="645" y="503" width="2" height="2" fill="#d25819"/><rect x="645" y="501" width="2" height="2" fill="#b13309"/><rect x="647" y="501" width="2" height="2" fill="#b73f1b"/><rect x="647" y="505" width="2" height="2" fill="#b73f1b"/><rect x="649" y="503" width="2" height="2" fill="#d25819"/><rect x="649" y="505" width="2" height="2" fill="#d25819"/><rect x="651" y="504" width="2" height="2" fill="#d25819"/><rect x="653" y="510" width="2" height="2" fill="#b13309"/><rect x="657" y="503" width="2" height="2" fill="#d25819"/><rect x="657" y="507" width="2" height="2" fill="#b73f1b"/><rect x="661" y="505" width="2" height="2" fill="#d25819"/><rect x="661" y="509" width="2" height="2" fill="#b73f1b"/><rect x="663" y="508" width="2" height="2" fill="#b13309"/><rect x="663" y="508" width="2" height="2" fill="#d25819"/><rect x="665" y="498" width="2" height="2" fill="#b13309"/><rect x="667" y="500" width="2" height="2" fill="#d25819"/><rect x="667" y="500" width="2" height="2" fill="#d25819"/><rect x="667" y="510" width="2" height="2" fill="#b13309"/><rect x="668" y="500" width="2" height="2" fill="#b73f1b"/><rect x="668" y="498" width="2" height="2" fill="#b73f1b"/><rect x="676" y="505" width="2" height="2" fill="#b13309"/><rect x="678" y="494" width="2" height="2" fill="#b73f1b"/><rect x="678" y="504" width="2" height="2" fill="#ce4f19"/><rect x="680" y="494" width="2" height="2" fill="#ce4f19"/><rect x="680" y="500" width="2" height="2" fill="#ce4f19"/><rect x="680" y="504" width="2" height="2" fill="#b13309"/><rect x="688" y="489" width="2" height="2" fill="#b73f1b"/><rect x="688" y="491" width="2" height="2" fill="#b73f1b"/><rect x="690" y="488" width="2" height="2" fill="#ce4f19"/><rect x="690" y="498" width="2" height="2" fill="#b13309"/><rect x="692" y="494" width="2" height="2" fill="#b13309"/><rect x="692" y="500" width="2" height="2" fill="#ce4f19"/><rect x="692" y="498" width="2" height="2" fill="#ce4f19"/><rect x="694" y="487" width="2" height="2" fill="#b13309"/><rect x="694" y="491" width="2" height="2" fill="#ce4f19"/><rect x="694" y="499" width="2" height="2" fill="#d25819"/><rect x="694" y="497" width="2" height="2" fill="#b73f1b"/><rect x="696" y="490" width="2" height="2" fill="#ce4f19"/><rect x="696" y="494" width="2" height="2" fill="#b73f1b"/><rect x="696" y="496" width="2" height="2" fill="#d25819"/><rect x="698" y="488" width="2" height="2" fill="#b73f1b"/><rect x="698" y="490" width="2" height="2" fill="#b13309"/><rect x="698" y="494" width="2" height="2" fill="#b73f1b"/><rect x="700" y="487" width="2" height="2" fill="#ce4f19"/><rect x="700" y="495" width="2" height="2" fill="#b13309"/><rect x="702" y="491" width="2" height="2" fill="#b73f1b"/><rect x="704" y="486" width="2" height="2" fill="#b13309"/><rect x="704" y="492" width="2" height="2" fill="#d25819"/><rect x="706" y="487" width="2" height="2" fill="#ce4f19"/><rect x="706" y="493" width="2" height="2" fill="#b13309"/><rect x="706" y="493" width="2" height="2" fill="#ce4f19"/><rect x="708" y="485" width="2" height="2" fill="#ce4f19"/><rect x="708" y="487" width="2" height="2" fill="#b73f1b"/><rect x="708" y="493" width="2" height="2" fill="#b13309"/><rect x="710" y="494" width="2" height="2" fill="#d25819"/><rect x="712" y="491" width="2" height="2" fill="#b13309"/><rect x="714" y="485" width="2" height="2" fill="#b13309"/><rect x="716" y="484" width="2" height="2" fill="#d25819"/><rect x="716" y="492" width="2" height="2" fill="#b13309"/><rect x="718" y="485" width="2" height="2" fill="#b13309"/><rect x="718" y="491" width="2" height="2" fill="#b73f1b"/><rect x="720" y="493" width="2" height="2" fill="#b13309"/><rect x="722" y="482" width="2" height="2" fill="#ce4f19"/><rect x="722" y="486" width="2" height="2" fill="#d25819"/><rect x="722" y="486" width="2" height="2" fill="#d25819"/><rect x="724" y="487" width="2" height="2" fill="#ce4f19"/><rect x="726" y="487" width="2" height="2" fill="#b73f1b"/><rect x="728" y="480" width="2" height="2" fill="#b73f1b"/><rect x="728" y="484" width="2" height="2" fill="#b73f1b"/><rect x="728" y="484" width="2" height="2" fill="#b13309"/><rect x="728" y="486" width="2" height="2" fill="#d25819"/><rect x="730" y="475" width="2" height="2" fill="#b13309"/><rect x="730" y="483" width="2" height="2" fill="#b73f1b"/><rect x="734" y="478" width="2" height="2" fill="#d25819"/><rect x="736" y="480" width="2" height="2" fill="#b73f1b"/><rect x="738" y="475" width="2" height="2" fill="#b73f1b"/><rect x="738" y="479" width="2" height="2" fill="#ce4f19"/><rect x="738" y="481" width="2" height="2" fill="#d25819"/><rect x="742" y="480" width="2" height="2" fill="#b73f1b"/><rect x="742" y="482" width="2" height="2" fill="#ce4f19"/><rect x="744" y="481" width="2" height="2" fill="#ce4f19"/><rect x="746" y="480" width="2" height="2" fill="#b13309"/><rect x="746" y="478" width="2" height="2" fill="#b73f1b"/><rect x="748" y="482" width="2" height="2" fill="#ce4f19"/><rect x="750" y="471" width="2" height="2" fill="#b73f1b"/><rect x="750" y="475" width="2" height="2" fill="#b13309"/><rect x="750" y="475" width="2" height="2" fill="#ce4f19"/><rect x="752" y="472" width="2" height="2" fill="#b13309"/><rect x="754" y="470" width="2" height="2" fill="#ce4f19"/><rect x="754" y="472" width="2" height="2" fill="#b13309"/><rect x="754" y="482" width="2" height="2" fill="#ce4f19"/><rect x="756" y="471" width="2" height="2" fill="#b13309"/><rect x="756" y="477" width="2" height="2" fill="#ce4f19"/><rect x="756" y="481" width="2" height="2" fill="#ce4f19"/><rect x="758" y="472" width="2" height="2" fill="#d25819"/><rect x="758" y="476" width="2" height="2" fill="#b13309"/><rect x="760" y="470" width="2" height="2" fill="#ce4f19"/><rect x="760" y="468" width="2" height="2" fill="#ce4f19"/><rect x="760" y="478" width="2" height="2" fill="#ce4f19"/><rect x="762" y="469" width="2" height="2" fill="#d25819"/><rect x="762" y="473" width="2" height="2" fill="#b13309"/><rect x="764" y="466" width="2" height="2" fill="#b13309"/><rect x="764" y="474" width="2" height="2" fill="#b13309"/><rect x="764" y="476" width="2" height="2" fill="#b13309"/><rect x="766" y="466" width="2" height="2" fill="#ce4f19"/><rect x="766" y="472" width="2" height="2" fill="#ce4f19"/><rect x="768" y="471" width="2" height="2" fill="#b13309"/><rect x="770" y="467" width="2" height="2" fill="#ce4f19"/><rect x="770" y="473" width="2" height="2" fill="#d25819"/><rect x="772" y="472" width="2" height="2" fill="#b73f1b"/><rect x="772" y="474" width="2" height="2" fill="#b73f1b"/><rect x="774" y="463" width="2" height="2" fill="#b13309"/><rect x="774" y="473" width="2" height="2" fill="#ce4f19"/><rect x="776" y="463" width="2" height="2" fill="#b13309"/><rect x="776" y="467" width="2" height="2" fill="#d25819"/><rect x="778" y="468" width="2" height="2" fill="#b73f1b"/><rect x="780" y="471" width="2" height="2" fill="#ce4f19"/><rect x="782" y="471" width="2" height="2" fill="#b13309"/><rect x="784" y="464" width="2" height="2" fill="#b13309"/><rect x="784" y="468" width="2" height="2" fill="#b13309"/><rect x="786" y="469" width="2" height="2" fill="#b13309"/><rect x="788" y="463" width="2" height="2" fill="#d25819"/><rect x="790" y="464" width="2" height="2" fill="#d25819"/><rect x="790" y="470" width="2" height="2" fill="#d25819"/><rect x="792" y="455" width="2" height="2" fill="#ce4f19"/><rect x="792" y="459" width="2" height="2" fill="#b73f1b"/><rect x="792" y="469" width="2" height="2" fill="#ce4f19"/><rect x="794" y="465" width="2" height="2" fill="#b13309"/><rect x="794" y="465" width="2" height="2" fill="#b73f1b"/><rect x="796" y="460" width="2" height="2" fill="#d25819"/><rect x="798" y="464" width="2" height="2" fill="#d25819"/><rect x="798" y="464" width="2" height="2" fill="#d25819"/><rect x="800" y="453" width="2" height="2" fill="#ce4f19"/><rect x="800" y="463" width="2" height="2" fill="#d25819"/><rect x="800" y="463" width="2" height="2" fill="#d25819"/><rect x="802" y="462" width="2" height="2" fill="#d25819"/><rect x="802" y="462" width="2" height="2" fill="#ce4f19"/><rect x="804" y="454" width="2" height="2" fill="#d25819"/><rect x="804" y="460" width="2" height="2" fill="#b13309"/><rect x="804" y="466" width="2" height="2" fill="#b13309"/><rect x="806" y="465" width="2" height="2" fill="#d25819"/><rect x="808" y="454" width="2" height="2" fill="#ce4f19"/><rect x="808" y="458" width="2" height="2" fill="#d25819"/><rect x="808" y="460" width="2" height="2" fill="#d25819"/><rect x="810" y="452" width="2" height="2" fill="#ce4f19"/><rect x="810" y="464" width="2" height="2" fill="#b13309"/><rect x="812" y="461" width="2" height="2" fill="#b13309"/><rect x="814" y="458" width="2" height="2" fill="#b73f1b"/><rect x="816" y="450" width="2" height="2" fill="#d25819"/><rect x="816" y="458" width="2" height="2" fill="#d25819"/><rect x="818" y="451" width="2" height="2" fill="#b13309"/><rect x="818" y="449" width="2" height="2" fill="#b73f1b"/><rect x="818" y="455" width="2" height="2" fill="#b73f1b"/><rect x="818" y="461" width="2" height="2" fill="#d25819"/><rect x="820" y="446" width="2" height="2" fill="#ce4f19"/><rect x="822" y="452" width="2" height="2" fill="#b73f1b"/><rect x="828" y="454" width="2" height="2" fill="#b73f1b"/><rect x="828" y="456" width="2" height="2" fill="#b73f1b"/><rect x="830" y="455" width="2" height="2" fill="#d25819"/><rect x="830" y="453" width="2" height="2" fill="#b13309"/><rect x="834" y="444" width="2" height="2" fill="#d25819"/><rect x="834" y="444" width="2" height="2" fill="#ce4f19"/><rect x="836" y="443" width="2" height="2" fill="#b73f1b"/><rect x="836" y="447" width="2" height="2" fill="#b73f1b"/><rect x="836" y="449" width="2" height="2" fill="#ce4f19"/><rect x="838" y="443" width="2" height="2" fill="#ce4f19"/><rect x="838" y="451" width="2" height="2" fill="#d25819"/><rect x="840" y="450" width="2" height="2" fill="#b73f1b"/><rect x="842" y="447" width="2" height="2" fill="#ce4f19"/><rect x="844" y="445" width="2" height="2" fill="#d25819"/><rect x="844" y="453" width="2" height="2" fill="#b73f1b"/><rect x="846" y="438" width="2" height="2" fill="#ce4f19"/><rect x="846" y="444" width="2" height="2" fill="#b13309"/><rect x="846" y="448" width="2" height="2" fill="#ce4f19"/><rect x="846" y="450" width="2" height="2" fill="#b73f1b"/><rect x="848" y="438" width="2" height="2" fill="#b73f1b"/><rect x="848" y="452" width="2" height="2" fill="#d25819"/><rect x="850" y="440" width="2" height="2" fill="#b13309"/><rect x="850" y="448" width="2" height="2" fill="#b13309"/><rect x="852" y="441" width="2" height="2" fill="#d25819"/><rect x="852" y="445" width="2" height="2" fill="#ce4f19"/><rect x="852" y="449" width="2" height="2" fill="#ce4f19"/><rect x="854" y="439" width="2" height="2" fill="#b73f1b"/><rect x="856" y="441" width="2" height="2" fill="#b73f1b"/><rect x="858" y="437" width="2" height="2" fill="#b13309"/><rect x="858" y="447" width="2" height="2" fill="#b73f1b"/><rect x="860" y="441" width="2" height="2" fill="#d25819"/><rect x="860" y="441" width="2" height="2" fill="#b13309"/><rect x="860" y="447" width="2" height="2" fill="#b13309"/><rect x="862" y="437" width="2" height="2" fill="#b13309"/><rect x="862" y="441" width="2" height="2" fill="#b13309"/><rect x="862" y="447" width="2" height="2" fill="#ce4f19"/><rect x="864" y="440" width="2" height="2" fill="#d25819"/><rect x="864" y="446" width="2" height="2" fill="#ce4f19"/><rect x="868" y="438" width="2" height="2" fill="#d25819"/><rect x="868" y="448" width="2" height="2" fill="#b73f1b"/><rect x="870" y="440" width="2" height="2" fill="#d25819"/><rect x="872" y="440" width="2" height="2" fill="#b73f1b"/><rect x="874" y="438" width="2" height="2" fill="#b73f1b"/><rect x="876" y="437" width="2" height="2" fill="#d25819"/><rect x="878" y="441" width="2" height="2" fill="#ce4f19"/><rect x="878" y="445" width="2" height="2" fill="#b13309"/><rect x="880" y="439" width="2" height="2" fill="#d25819"/><rect x="880" y="443" width="2" height="2" fill="#b73f1b"/><rect x="880" y="443" width="2" height="2" fill="#b73f1b"/><rect x="880" y="447" width="2" height="2" fill="#b13309"/><rect x="882" y="439" width="2" height="2" fill="#b73f1b"/><rect x="882" y="443" width="2" height="2" fill="#ce4f19"/><rect x="884" y="441" width="2" height="2" fill="#b13309"/><rect x="884" y="441" width="2" height="2" fill="#d25819"/><rect x="884" y="447" width="2" height="2" fill="#ce4f19"/><rect x="886" y="443" width="2" height="2" fill="#b73f1b"/><rect x="886" y="447" width="2" height="2" fill="#b13309"/><rect x="890" y="444" width="2" height="2" fill="#b13309"/><rect x="892" y="440" width="2" height="2" fill="#b73f1b"/><rect x="892" y="440" width="2" height="2" fill="#ce4f19"/><rect x="892" y="442" width="2" height="2" fill="#d25819"/><rect x="892" y="444" width="2" height="2" fill="#b13309"/><rect x="894" y="446" width="2" height="2" fill="#d25819"/><rect x="898" y="440" width="2" height="2" fill="#ce4f19"/><rect x="902" y="437" width="2" height="2" fill="#d25819"/><rect x="904" y="439" width="2" height="2" fill="#d25819"/><rect x="904" y="441" width="2" height="2" fill="#b73f1b"/><rect x="906" y="441" width="2" height="2" fill="#ce4f19"/><rect x="908" y="433" width="2" height="2" fill="#d25819"/><rect x="908" y="443" width="2" height="2" fill="#d25819"/><rect x="910" y="437" width="2" height="2" fill="#d25819"/><rect x="910" y="439" width="2" height="2" fill="#ce4f19"/><rect x="912" y="442" width="2" height="2" fill="#b73f1b"/><rect x="916" y="432" width="2" height="2" fill="#ce4f19"/><rect x="916" y="438" width="2" height="2" fill="#d25819"/><rect x="918" y="436" width="2" height="2" fill="#d25819"/><rect x="918" y="442" width="2" height="2" fill="#b73f1b"/><rect x="920" y="434" width="2" height="2" fill="#d25819"/><rect x="920" y="440" width="2" height="2" fill="#b13309"/><rect x="922" y="442" width="2" height="2" fill="#b73f1b"/><rect x="924" y="433" width="2" height="2" fill="#b73f1b"/><rect x="924" y="435" width="2" height="2" fill="#b13309"/><rect x="924" y="441" width="2" height="2" fill="#b13309"/><rect x="926" y="437" width="2" height="2" fill="#ce4f19"/><rect x="928" y="435" width="2" height="2" fill="#ce4f19"/><rect x="930" y="441" width="2" height="2" fill="#ce4f19"/><rect x="932" y="437" width="2" height="2" fill="#b13309"/><rect x="934" y="437" width="2" height="2" fill="#ce4f19"/><rect x="936" y="438" width="2" height="2" fill="#ce4f19"/><rect x="936" y="438" width="2" height="2" fill="#d25819"/><rect x="936" y="440" width="2" height="2" fill="#d25819"/><rect x="938" y="432" width="2" height="2" fill="#b73f1b"/><rect x="940" y="436" width="2" height="2" fill="#d25819"/><rect x="944" y="432" width="2" height="2" fill="#b13309"/><rect x="944" y="436" width="2" height="2" fill="#b73f1b"/><rect x="944" y="444" width="2" height="2" fill="#ce4f19"/><rect x="946" y="430" width="2" height="2" fill="#d25819"/><rect x="948" y="431" width="2" height="2" fill="#ce4f19"/><rect x="948" y="433" width="2" height="2" fill="#d25819"/><rect x="948" y="441" width="2" height="2" fill="#b13309"/><rect x="950" y="433" width="2" height="2" fill="#b73f1b"/><rect x="950" y="439" width="2" height="2" fill="#b73f1b"/></g></g><rect x="507" y="518" width="2" height="5" fill="#c8630f"/><rect x="511" y="518" width="2" height="5" fill="#c8630f"/><rect x="515" y="516" width="2" height="6" fill="#c25802"/><rect x="517" y="517" width="2" height="5" fill="#b75100"/><rect x="519" y="518" width="2" height="3" fill="#c25802"/><rect x="523" y="515" width="2" height="6" fill="#c25802"/><rect x="529" y="517" width="2" height="3" fill="#c25802"/><rect x="531" y="516" width="2" height="3" fill="#b75100"/><rect x="533" y="517" width="2" height="2" fill="#b75100"/><rect x="535" y="515" width="2" height="4" fill="#c8630f"/><rect x="537" y="513" width="2" height="5" fill="#c25802"/><rect x="539" y="515" width="2" height="3" fill="#c25802"/><rect x="541" y="515" width="2" height="3" fill="#b75100"/><rect x="547" y="515" width="2" height="2" fill="#c8630f"/><rect x="549" y="514" width="2" height="2" fill="#b75100"/><rect x="551" y="513" width="2" height="3" fill="#c8630f"/><rect x="553" y="513" width="2" height="3" fill="#c25802"/><rect x="555" y="510" width="2" height="5" fill="#c8630f"/><rect x="557" y="511" width="2" height="4" fill="#c25802"/><rect x="559" y="511" width="2" height="4" fill="#c8630f"/><rect x="561" y="511" width="2" height="3" fill="#c25802"/><rect x="563" y="511" width="2" height="3" fill="#c8630f"/><rect x="565" y="512" width="2" height="2" fill="#b75100"/><rect x="567" y="508" width="2" height="5" fill="#c8630f"/><rect x="569" y="507" width="2" height="6" fill="#c8630f"/><rect x="571" y="509" width="2" height="4" fill="#c25802"/><rect x="573" y="508" width="2" height="4" fill="#c8630f"/><rect x="575" y="509" width="2" height="3" fill="#c8630f"/><rect x="577" y="506" width="2" height="6" fill="#b75100"/><rect x="579" y="507" width="2" height="4" fill="#c25802"/><rect x="581" y="508" width="2" height="3" fill="#b75100"/><rect x="585" y="508" width="2" height="2" fill="#c25802"/><rect x="591" y="507" width="2" height="2" fill="#c25802"/><rect x="595" y="504" width="2" height="5" fill="#c8630f"/><rect x="597" y="504" width="2" height="4" fill="#c25802"/><rect x="599" y="505" width="2" height="3" fill="#c25802"/><rect x="603" y="503" width="2" height="4" fill="#c8630f"/><rect x="607" y="502" width="2" height="5" fill="#c8630f"/><rect x="611" y="503" width="2" height="3" fill="#b75100"/><rect x="613" y="500" width="2" height="6" fill="#b75100"/><rect x="615" y="499" width="2" height="6" fill="#c8630f"/><rect x="617" y="502" width="2" height="3" fill="#b75100"/><rect x="623" y="502" width="2" height="2" fill="#b75100"/><rect x="625" y="498" width="2" height="6" fill="#c25802"/><rect x="629" y="501" width="2" height="2" fill="#b75100"/><rect x="633" y="497" width="2" height="5" fill="#c8630f"/><rect x="637" y="498" width="2" height="4" fill="#b75100"/><rect x="639" y="495" width="2" height="6" fill="#c8630f"/><rect x="641" y="498" width="2" height="3" fill="#b75100"/><rect x="645" y="498" width="2" height="2" fill="#c8630f"/><rect x="649" y="494" width="2" height="6" fill="#b75100"/><rect x="653" y="495" width="2" height="4" fill="#c8630f"/><rect x="655" y="495" width="2" height="4" fill="#b75100"/><rect x="657" y="494" width="2" height="4" fill="#c8630f"/><rect x="659" y="496" width="2" height="2" fill="#c25802"/><rect x="663" y="495" width="2" height="2" fill="#c25802"/><rect x="667" y="491" width="2" height="6" fill="#b75100"/><rect x="674" y="493" width="2" height="2" fill="#c25802"/><rect x="676" y="492" width="2" height="2" fill="#c8630f"/><rect x="684" y="488" width="2" height="3" fill="#c8630f"/><rect x="686" y="488" width="2" height="3" fill="#c25802"/><rect x="688" y="488" width="2" height="2" fill="#c8630f"/><rect x="690" y="485" width="2" height="4" fill="#c8630f"/><rect x="692" y="487" width="2" height="2" fill="#c8630f"/><rect x="694" y="482" width="2" height="6" fill="#b75100"/><rect x="698" y="483" width="2" height="4" fill="#c25802"/><rect x="700" y="481" width="2" height="5" fill="#b75100"/><rect x="702" y="480" width="2" height="6" fill="#b75100"/><rect x="706" y="481" width="2" height="3" fill="#c25802"/><rect x="708" y="478" width="2" height="6" fill="#c8630f"/><rect x="710" y="478" width="2" height="5" fill="#c8630f"/><rect x="712" y="479" width="2" height="3" fill="#c25802"/><rect x="714" y="479" width="2" height="3" fill="#b75100"/><rect x="716" y="478" width="2" height="3" fill="#c25802"/><rect x="720" y="476" width="2" height="4" fill="#c25802"/><rect x="722" y="477" width="2" height="2" fill="#c8630f"/><rect x="724" y="473" width="2" height="5" fill="#c8630f"/><rect x="726" y="476" width="2" height="2" fill="#c8630f"/><rect x="728" y="474" width="2" height="3" fill="#b75100"/><rect x="732" y="473" width="2" height="3" fill="#c25802"/><rect x="736" y="469" width="2" height="6" fill="#b75100"/><rect x="738" y="471" width="2" height="3" fill="#b75100"/><rect x="742" y="471" width="2" height="2" fill="#c25802"/><rect x="750" y="465" width="2" height="5" fill="#b75100"/><rect x="752" y="466" width="2" height="3" fill="#b75100"/><rect x="754" y="464" width="2" height="5" fill="#c8630f"/><rect x="756" y="464" width="2" height="4" fill="#b75100"/><rect x="758" y="464" width="2" height="3" fill="#c8630f"/><rect x="760" y="461" width="2" height="6" fill="#b75100"/><rect x="764" y="463" width="2" height="2" fill="#c8630f"/><rect x="768" y="461" width="2" height="3" fill="#b75100"/><rect x="770" y="462" width="2" height="2" fill="#c25802"/><rect x="772" y="460" width="2" height="3" fill="#c25802"/><rect x="774" y="458" width="2" height="4" fill="#c8630f"/><rect x="778" y="457" width="2" height="4" fill="#b75100"/><rect x="782" y="456" width="2" height="4" fill="#b75100"/><rect x="784" y="457" width="2" height="2" fill="#c25802"/><rect x="786" y="455" width="2" height="3" fill="#c25802"/><rect x="788" y="454" width="2" height="4" fill="#b75100"/><rect x="790" y="454" width="2" height="3" fill="#c25802"/><rect x="792" y="453" width="2" height="3" fill="#b75100"/><rect x="796" y="453" width="2" height="2" fill="#b75100"/><rect x="800" y="452" width="2" height="2" fill="#c8630f"/><rect x="802" y="449" width="2" height="4" fill="#b75100"/><rect x="806" y="446" width="2" height="6" fill="#b75100"/><rect x="808" y="445" width="2" height="6" fill="#c25802"/><rect x="812" y="447" width="2" height="3" fill="#c8630f"/><rect x="814" y="446" width="2" height="3" fill="#c8630f"/><rect x="816" y="445" width="2" height="4" fill="#c8630f"/><rect x="818" y="445" width="2" height="3" fill="#c25802"/><rect x="820" y="444" width="2" height="3" fill="#c25802"/><rect x="826" y="442" width="2" height="3" fill="#c25802"/><rect x="832" y="440" width="2" height="4" fill="#c8630f"/><rect x="836" y="440" width="2" height="2" fill="#b75100"/><rect x="840" y="439" width="2" height="2" fill="#c25802"/><rect x="842" y="435" width="2" height="5" fill="#c8630f"/><rect x="844" y="438" width="2" height="2" fill="#c8630f"/><rect x="846" y="435" width="2" height="4" fill="#c25802"/><rect x="850" y="436" width="2" height="3" fill="#c8630f"/><rect x="852" y="434" width="2" height="4" fill="#c25802"/><rect x="854" y="434" width="2" height="4" fill="#b75100"/><rect x="856" y="436" width="2" height="2" fill="#c25802"/><rect x="860" y="432" width="2" height="6" fill="#c8630f"/><rect x="862" y="435" width="2" height="3" fill="#c8630f"/><rect x="864" y="434" width="2" height="3" fill="#c25802"/><rect x="866" y="434" width="2" height="3" fill="#c8630f"/><rect x="868" y="431" width="2" height="6" fill="#c25802"/><rect x="870" y="433" width="2" height="4" fill="#c8630f"/><rect x="872" y="433" width="2" height="4" fill="#c8630f"/><rect x="876" y="433" width="2" height="3" fill="#c8630f"/><rect x="878" y="433" width="2" height="3" fill="#c8630f"/><rect x="880" y="433" width="2" height="3" fill="#c8630f"/><rect x="882" y="433" width="2" height="3" fill="#b75100"/><rect x="884" y="433" width="2" height="3" fill="#b75100"/><rect x="886" y="433" width="2" height="3" fill="#c8630f"/><rect x="888" y="432" width="2" height="3" fill="#c8630f"/><rect x="890" y="431" width="2" height="4" fill="#c8630f"/><rect x="894" y="431" width="2" height="4" fill="#c8630f"/><rect x="896" y="429" width="2" height="6" fill="#c25802"/><rect x="904" y="431" width="2" height="3" fill="#b75100"/><rect x="908" y="431" width="2" height="3" fill="#c8630f"/><rect x="912" y="431" width="2" height="2" fill="#b75100"/><rect x="914" y="427" width="2" height="6" fill="#c8630f"/><rect x="918" y="431" width="2" height="2" fill="#c8630f"/><rect x="920" y="431" width="2" height="2" fill="#b75100"/><rect x="922" y="430" width="2" height="3" fill="#c25802"/><rect x="924" y="429" width="2" height="3" fill="#b75100"/><rect x="926" y="429" width="2" height="3" fill="#b75100"/><rect x="928" y="427" width="2" height="5" fill="#c8630f"/><rect x="930" y="430" width="2" height="2" fill="#c25802"/><rect x="932" y="429" width="2" height="3" fill="#b75100"/><rect x="934" y="429" width="2" height="3" fill="#c8630f"/><rect x="936" y="426" width="2" height="5" fill="#b75100"/><rect x="938" y="428" width="2" height="3" fill="#b75100"/><rect x="940" y="428" width="2" height="3" fill="#c8630f"/><rect x="942" y="428" width="2" height="3" fill="#c8630f"/><rect x="946" y="426" width="2" height="5" fill="#c25802"/><rect x="948" y="427" width="2" height="3" fill="#b75100"/><polygon points="507.0,522.5 668.0,495.5 683.0,545.0 516.0,572.5" fill="none" stroke="#e84a4a" stroke-width="1"/><polygon points="668.0,495.5 846.0,438.0 850.0,488.5 683.0,545.0" fill="none" stroke="#e84a4a" stroke-width="1"/><polygon points="846.0,438.0 952.0,429.0 952.0,481.0 850.0,488.5" fill="none" stroke="#e84a4a" stroke-width="1"/><path d="M669 497L682 543" stroke="#8a5ab8" stroke-width="2.5" opacity="0.8"/><path d="M845 447L850 487" stroke="#7a5ab8" stroke-width="2.5" opacity="0.8"/></svg>
<svg style="left:728px;top:112px;" width="215" height="80" viewBox="728 112 215 80"><rect x="740" y="177" width="3" height="4" fill="#373b48"/><rect x="743" y="177" width="5" height="6" fill="#373b48"/><rect x="748" y="177" width="4" height="4" fill="#373b48"/><rect x="752" y="177" width="3" height="8" fill="#373b48"/><rect x="755" y="177" width="5" height="8" fill="#373b48"/><rect x="760" y="177" width="3" height="5" fill="#373b48"/><rect x="763" y="177" width="3" height="8" fill="#373b48"/><rect x="768" y="177" width="4" height="5" fill="#373b48"/><rect x="777" y="177" width="3" height="8" fill="#373b48"/><rect x="780" y="177" width="3" height="2" fill="#373b48"/><rect x="783" y="177" width="2" height="4" fill="#373b48"/><rect x="785" y="177" width="5" height="5" fill="#373b48"/><rect x="795" y="177" width="4" height="5" fill="#373b48"/><rect x="799" y="177" width="5" height="6" fill="#373b48"/><rect x="804" y="177" width="2" height="6" fill="#373b48"/><rect x="810" y="177" width="3" height="6" fill="#373b48"/><rect x="815" y="177" width="2" height="4" fill="#373b48"/><rect x="817" y="177" width="3" height="5" fill="#373b48"/><rect x="820" y="177" width="4" height="4" fill="#373b48"/><rect x="824" y="177" width="5" height="2" fill="#373b48"/><rect x="829" y="177" width="3" height="6" fill="#373b48"/><rect x="832" y="177" width="2" height="4" fill="#373b48"/><rect x="837" y="177" width="3" height="2" fill="#373b48"/><rect x="842" y="177" width="5" height="5" fill="#373b48"/><rect x="847" y="177" width="5" height="2" fill="#373b48"/><rect x="852" y="177" width="4" height="2" fill="#373b48"/><rect x="856" y="177" width="5" height="3" fill="#373b48"/><rect x="861" y="177" width="4" height="4" fill="#373b48"/><rect x="865" y="177" width="5" height="3" fill="#373b48"/><rect x="870" y="177" width="5" height="4" fill="#373b48"/><rect x="879" y="177" width="2" height="2" fill="#373b48"/><rect x="891" y="177" width="3" height="5" fill="#373b48"/><rect x="894" y="177" width="4" height="5" fill="#373b48"/><rect x="898" y="177" width="2" height="2" fill="#373b48"/><rect x="900" y="177" width="3" height="6" fill="#373b48"/><rect x="903" y="177" width="4" height="8" fill="#373b48"/><rect x="907" y="177" width="4" height="3" fill="#373b48"/><rect x="911" y="177" width="4" height="2" fill="#373b48"/><rect x="915" y="177" width="2" height="2" fill="#373b48"/><rect x="917" y="177" width="2" height="8" fill="#373b48"/><rect x="919" y="177" width="3" height="8" fill="#373b48"/><rect x="922" y="177" width="5" height="3" fill="#373b48"/><rect x="927" y="177" width="3" height="6" fill="#373b48"/><rect x="737" y="132" width="6" height="40" fill="#5a4275"/><rect x="927" y="132" width="6" height="40" fill="#5a4275"/><polygon points="734.0,138.0 734.0,122.0 736.0,122.0 736.0,121.0 738.0,121.0 738.0,122.0 740.0,122.0 740.0,121.0 742.0,121.0 742.0,122.0 744.0,122.0 744.0,122.0 746.0,122.0 746.0,122.0 748.0,122.0 748.0,120.0 750.0,120.0 750.0,122.0 752.0,122.0 752.0,121.0 754.0,121.0 754.0,122.0 756.0,122.0 756.0,122.0 758.0,122.0 758.0,122.0 760.0,122.0 760.0,122.0 762.0,122.0 762.0,121.0 764.0,121.0 764.0,122.0 766.0,122.0 766.0,121.0 768.0,121.0 768.0,121.0 770.0,121.0 770.0,122.0 772.0,122.0 772.0,122.0 774.0,122.0 774.0,122.0 776.0,122.0 776.0,122.0 778.0,122.0 778.0,122.0 780.0,122.0 780.0,122.0 782.0,122.0 782.0,122.0 784.0,122.0 784.0,120.0 786.0,120.0 786.0,121.0 788.0,121.0 788.0,120.0 790.0,120.0 790.0,122.0 792.0,122.0 792.0,121.0 794.0,121.0 794.0,121.0 796.0,121.0 796.0,120.0 798.0,120.0 798.0,122.0 800.0,122.0 800.0,122.0 802.0,122.0 802.0,121.0 804.0,121.0 804.0,120.0 806.0,120.0 806.0,121.0 808.0,121.0 808.0,120.0 810.0,120.0 810.0,122.0 812.0,122.0 812.0,122.0 814.0,122.0 814.0,121.0 816.0,121.0 816.0,122.0 818.0,122.0 818.0,120.0 820.0,120.0 820.0,122.0 822.0,122.0 822.0,121.0 824.0,121.0 824.0,122.0 826.0,122.0 826.0,121.0 828.0,121.0 828.0,121.0 830.0,121.0 830.0,120.0 832.0,120.0 832.0,120.0 834.0,120.0 834.0,122.0 836.0,122.0 836.0,122.0 838.0,122.0 838.0,121.0 840.0,121.0 840.0,122.0 842.0,122.0 842.0,122.0 844.0,122.0 844.0,122.0 846.0,122.0 846.0,121.0 848.0,121.0 848.0,120.0 850.0,120.0 850.0,121.0 852.0,121.0 852.0,122.0 854.0,122.0 854.0,121.0 856.0,121.0 856.0,121.0 858.0,121.0 858.0,122.0 860.0,122.0 860.0,122.0 862.0,122.0 862.0,122.0 864.0,122.0 864.0,121.0 866.0,121.0 866.0,122.0 868.0,122.0 868.0,121.0 870.0,121.0 870.0,122.0 872.0,122.0 872.0,122.0 874.0,122.0 874.0,122.0 876.0,122.0 876.0,120.0 878.0,120.0 878.0,122.0 880.0,122.0 880.0,121.0 882.0,121.0 882.0,122.0 884.0,122.0 884.0,122.0 886.0,122.0 886.0,122.0 888.0,122.0 888.0,121.0 890.0,121.0 890.0,122.0 892.0,122.0 892.0,121.0 894.0,121.0 894.0,122.0 896.0,122.0 896.0,122.0 898.0,122.0 898.0,121.0 900.0,121.0 900.0,120.0 902.0,120.0 902.0,122.0 904.0,122.0 904.0,122.0 906.0,122.0 906.0,122.0 908.0,122.0 908.0,121.0 910.0,121.0 910.0,122.0 912.0,122.0 912.0,122.0 914.0,122.0 914.0,122.0 916.0,122.0 916.0,120.0 918.0,120.0 918.0,122.0 920.0,122.0 920.0,122.0 922.0,122.0 922.0,120.0 924.0,120.0 924.0,122.0 926.0,122.0 926.0,120.0 928.0,120.0 928.0,121.0 930.0,121.0 930.0,122.0 932.0,122.0 932.0,121.0 934.0,121.0 934.0,122.0 936.0,122.0 936.0,138.0" fill="#bb5a1e"/><rect x="742" y="126" width="187" height="52" fill="#9d3034"/><rect x="742" y="126" width="187" height="14" fill="#c74023"/><rect x="748" y="126" width="2" height="2" fill="#ce4d2a"/><rect x="760" y="126" width="2" height="2" fill="#ce4d2a"/><rect x="764" y="126" width="2" height="2" fill="#d85532"/><rect x="770" y="126" width="2" height="2" fill="#ce4d2a"/><rect x="776" y="126" width="2" height="2" fill="#d85532"/><rect x="798" y="126" width="2" height="2" fill="#b63525"/><rect x="800" y="126" width="2" height="2" fill="#b63525"/><rect x="808" y="126" width="2" height="2" fill="#d85532"/><rect x="818" y="126" width="2" height="2" fill="#b63525"/><rect x="820" y="126" width="2" height="2" fill="#b63525"/><rect x="828" y="126" width="2" height="2" fill="#b63525"/><rect x="836" y="126" width="2" height="2" fill="#d85532"/><rect x="838" y="126" width="2" height="2" fill="#d85532"/><rect x="844" y="126" width="2" height="2" fill="#ce4d2a"/><rect x="846" y="126" width="2" height="2" fill="#ce4d2a"/><rect x="852" y="126" width="2" height="2" fill="#d85532"/><rect x="854" y="126" width="2" height="2" fill="#b63525"/><rect x="858" y="126" width="2" height="2" fill="#d85532"/><rect x="880" y="126" width="2" height="2" fill="#d85532"/><rect x="892" y="126" width="2" height="2" fill="#ce4d2a"/><rect x="896" y="126" width="2" height="2" fill="#ce4d2a"/><rect x="900" y="126" width="2" height="2" fill="#d85532"/><rect x="926" y="126" width="2" height="2" fill="#b63525"/><rect x="748" y="128" width="2" height="2" fill="#b63525"/><rect x="750" y="128" width="2" height="2" fill="#ce4d2a"/><rect x="752" y="128" width="2" height="2" fill="#ce4d2a"/><rect x="758" y="128" width="2" height="2" fill="#ce4d2a"/><rect x="760" y="128" width="2" height="2" fill="#ce4d2a"/><rect x="764" y="128" width="2" height="2" fill="#ce4d2a"/><rect x="776" y="128" width="2" height="2" fill="#d85532"/><rect x="784" y="128" width="2" height="2" fill="#ce4d2a"/><rect x="790" y="128" width="2" height="2" fill="#ce4d2a"/><rect x="800" y="128" width="2" height="2" fill="#ce4d2a"/><rect x="806" y="128" width="2" height="2" fill="#d85532"/><rect x="844" y="128" width="2" height="2" fill="#d85532"/><rect x="850" y="128" width="2" height="2" fill="#b63525"/><rect x="852" y="128" width="2" height="2" fill="#b63525"/><rect x="860" y="128" width="2" height="2" fill="#d85532"/><rect x="866" y="128" width="2" height="2" fill="#ce4d2a"/><rect x="870" y="128" width="2" height="2" fill="#d85532"/><rect x="876" y="128" width="2" height="2" fill="#d85532"/><rect x="878" y="128" width="2" height="2" fill="#ce4d2a"/><rect x="886" y="128" width="2" height="2" fill="#ce4d2a"/><rect x="890" y="128" width="2" height="2" fill="#d85532"/><rect x="894" y="128" width="2" height="2" fill="#d85532"/><rect x="896" y="128" width="2" height="2" fill="#ce4d2a"/><rect x="898" y="128" width="2" height="2" fill="#ce4d2a"/><rect x="908" y="128" width="2" height="2" fill="#d85532"/><rect x="916" y="128" width="2" height="2" fill="#d85532"/><rect x="918" y="128" width="2" height="2" fill="#d85532"/><rect x="920" y="128" width="2" height="2" fill="#b63525"/><rect x="926" y="128" width="2" height="2" fill="#ce4d2a"/><rect x="760" y="130" width="2" height="2" fill="#b63525"/><rect x="772" y="130" width="2" height="2" fill="#ce4d2a"/><rect x="776" y="130" width="2" height="2" fill="#b63525"/><rect x="780" y="130" width="2" height="2" fill="#ce4d2a"/><rect x="790" y="130" width="2" height="2" fill="#b63525"/><rect x="792" y="130" width="2" height="2" fill="#b63525"/><rect x="796" y="130" width="2" height="2" fill="#b63525"/><rect x="818" y="130" width="2" height="2" fill="#d85532"/><rect x="824" y="130" width="2" height="2" fill="#d85532"/><rect x="840" y="130" width="2" height="2" fill="#d85532"/><rect x="860" y="130" width="2" height="2" fill="#d85532"/><rect x="868" y="130" width="2" height="2" fill="#b63525"/><rect x="888" y="130" width="2" height="2" fill="#ce4d2a"/><rect x="894" y="130" width="2" height="2" fill="#ce4d2a"/><rect x="898" y="130" width="2" height="2" fill="#d85532"/><rect x="914" y="130" width="2" height="2" fill="#b63525"/><rect x="744" y="132" width="2" height="2" fill="#ce4d2a"/><rect x="752" y="132" width="2" height="2" fill="#d85532"/><rect x="768" y="132" width="2" height="2" fill="#ce4d2a"/><rect x="772" y="132" width="2" height="2" fill="#d85532"/><rect x="774" y="132" width="2" height="2" fill="#d85532"/><rect x="788" y="132" width="2" height="2" fill="#b63525"/><rect x="794" y="132" width="2" height="2" fill="#d85532"/><rect x="796" y="132" width="2" height="2" fill="#d85532"/><rect x="798" y="132" width="2" height="2" fill="#d85532"/><rect x="804" y="132" width="2" height="2" fill="#b63525"/><rect x="808" y="132" width="2" height="2" fill="#d85532"/><rect x="834" y="132" width="2" height="2" fill="#ce4d2a"/><rect x="838" y="132" width="2" height="2" fill="#ce4d2a"/><rect x="846" y="132" width="2" height="2" fill="#d85532"/><rect x="848" y="132" width="2" height="2" fill="#ce4d2a"/><rect x="854" y="132" width="2" height="2" fill="#ce4d2a"/><rect x="864" y="132" width="2" height="2" fill="#d85532"/><rect x="868" y="132" width="2" height="2" fill="#ce4d2a"/><rect x="872" y="132" width="2" height="2" fill="#d85532"/><rect x="876" y="132" width="2" height="2" fill="#b63525"/><rect x="880" y="132" width="2" height="2" fill="#ce4d2a"/><rect x="886" y="132" width="2" height="2" fill="#b63525"/><rect x="892" y="132" width="2" height="2" fill="#ce4d2a"/><rect x="900" y="132" width="2" height="2" fill="#ce4d2a"/><rect x="904" y="132" width="2" height="2" fill="#b63525"/><rect x="908" y="132" width="2" height="2" fill="#ce4d2a"/><rect x="926" y="132" width="2" height="2" fill="#b63525"/><rect x="762" y="134" width="2" height="2" fill="#d85532"/><rect x="776" y="134" width="2" height="2" fill="#b63525"/><rect x="784" y="134" width="2" height="2" fill="#ce4d2a"/><rect x="806" y="134" width="2" height="2" fill="#d85532"/><rect x="814" y="134" width="2" height="2" fill="#ce4d2a"/><rect x="824" y="134" width="2" height="2" fill="#b63525"/><rect x="828" y="134" width="2" height="2" fill="#b63525"/><rect x="836" y="134" width="2" height="2" fill="#d85532"/><rect x="838" y="134" width="2" height="2" fill="#d85532"/><rect x="844" y="134" width="2" height="2" fill="#d85532"/><rect x="846" y="134" width="2" height="2" fill="#ce4d2a"/><rect x="860" y="134" width="2" height="2" fill="#ce4d2a"/><rect x="886" y="134" width="2" height="2" fill="#b63525"/><rect x="888" y="134" width="2" height="2" fill="#b63525"/><rect x="896" y="134" width="2" height="2" fill="#d85532"/><rect x="900" y="134" width="2" height="2" fill="#d85532"/><rect x="906" y="134" width="2" height="2" fill="#b63525"/><rect x="920" y="134" width="2" height="2" fill="#ce4d2a"/><rect x="926" y="134" width="2" height="2" fill="#ce4d2a"/><rect x="928" y="134" width="2" height="2" fill="#b63525"/><rect x="746" y="136" width="2" height="2" fill="#ce4d2a"/><rect x="750" y="136" width="2" height="2" fill="#d85532"/><rect x="752" y="136" width="2" height="2" fill="#d85532"/><rect x="758" y="136" width="2" height="2" fill="#d85532"/><rect x="764" y="136" width="2" height="2" fill="#d85532"/><rect x="770" y="136" width="2" height="2" fill="#d85532"/><rect x="772" y="136" width="2" height="2" fill="#b63525"/><rect x="774" y="136" width="2" height="2" fill="#ce4d2a"/><rect x="776" y="136" width="2" height="2" fill="#b63525"/><rect x="788" y="136" width="2" height="2" fill="#d85532"/><rect x="792" y="136" width="2" height="2" fill="#d85532"/><rect x="794" y="136" width="2" height="2" fill="#d85532"/><rect x="796" y="136" width="2" height="2" fill="#d85532"/><rect x="818" y="136" width="2" height="2" fill="#b63525"/><rect x="826" y="136" width="2" height="2" fill="#b63525"/><rect x="828" y="136" width="2" height="2" fill="#ce4d2a"/><rect x="832" y="136" width="2" height="2" fill="#ce4d2a"/><rect x="846" y="136" width="2" height="2" fill="#b63525"/><rect x="862" y="136" width="2" height="2" fill="#d85532"/><rect x="866" y="136" width="2" height="2" fill="#d85532"/><rect x="878" y="136" width="2" height="2" fill="#d85532"/><rect x="882" y="136" width="2" height="2" fill="#d85532"/><rect x="886" y="136" width="2" height="2" fill="#d85532"/><rect x="894" y="136" width="2" height="2" fill="#d85532"/><rect x="900" y="136" width="2" height="2" fill="#b63525"/><rect x="904" y="136" width="2" height="2" fill="#ce4d2a"/><rect x="916" y="136" width="2" height="2" fill="#d85532"/><rect x="922" y="136" width="2" height="2" fill="#b63525"/><rect x="742" y="138" width="2" height="2" fill="#ce4d2a"/><rect x="746" y="138" width="2" height="2" fill="#ce4d2a"/><rect x="754" y="138" width="2" height="2" fill="#d85532"/><rect x="762" y="138" width="2" height="2" fill="#ce4d2a"/><rect x="770" y="138" width="2" height="2" fill="#b63525"/><rect x="780" y="138" width="2" height="2" fill="#d85532"/><rect x="792" y="138" width="2" height="2" fill="#ce4d2a"/><rect x="800" y="138" width="2" height="2" fill="#d85532"/><rect x="802" y="138" width="2" height="2" fill="#d85532"/><rect x="806" y="138" width="2" height="2" fill="#b63525"/><rect x="808" y="138" width="2" height="2" fill="#d85532"/><rect x="812" y="138" width="2" height="2" fill="#ce4d2a"/><rect x="814" y="138" width="2" height="2" fill="#d85532"/><rect x="820" y="138" width="2" height="2" fill="#b63525"/><rect x="822" y="138" width="2" height="2" fill="#d85532"/><rect x="826" y="138" width="2" height="2" fill="#b63525"/><rect x="830" y="138" width="2" height="2" fill="#ce4d2a"/><rect x="836" y="138" width="2" height="2" fill="#ce4d2a"/><rect x="844" y="138" width="2" height="2" fill="#d85532"/><rect x="872" y="138" width="2" height="2" fill="#ce4d2a"/><rect x="874" y="138" width="2" height="2" fill="#b63525"/><rect x="876" y="138" width="2" height="2" fill="#b63525"/><rect x="898" y="138" width="2" height="2" fill="#b63525"/><rect x="904" y="138" width="2" height="2" fill="#ce4d2a"/><rect x="908" y="138" width="2" height="2" fill="#b63525"/><rect x="926" y="138" width="2" height="2" fill="#d85532"/><rect x="742" y="140" width="2" height="2" fill="#ce4d2a"/><rect x="744" y="140" width="2" height="2" fill="#ce4d2a"/><rect x="750" y="140" width="2" height="2" fill="#ce4d2a"/><rect x="752" y="140" width="2" height="2" fill="#b63525"/><rect x="764" y="140" width="2" height="2" fill="#d85532"/><rect x="772" y="140" width="2" height="2" fill="#b63525"/><rect x="776" y="140" width="2" height="2" fill="#d85532"/><rect x="800" y="140" width="2" height="2" fill="#ce4d2a"/><rect x="812" y="140" width="2" height="2" fill="#d85532"/><rect x="820" y="140" width="2" height="2" fill="#b63525"/><rect x="822" y="140" width="2" height="2" fill="#ce4d2a"/><rect x="826" y="140" width="2" height="2" fill="#d85532"/><rect x="852" y="140" width="2" height="2" fill="#d85532"/><rect x="860" y="140" width="2" height="2" fill="#ce4d2a"/><rect x="864" y="140" width="2" height="2" fill="#d85532"/><rect x="866" y="140" width="2" height="2" fill="#d85532"/><rect x="876" y="140" width="2" height="2" fill="#d85532"/><rect x="890" y="140" width="2" height="2" fill="#b63525"/><rect x="894" y="140" width="2" height="2" fill="#d85532"/><rect x="904" y="140" width="2" height="2" fill="#ce4d2a"/><rect x="908" y="140" width="2" height="2" fill="#d85532"/><rect x="914" y="140" width="2" height="2" fill="#ce4d2a"/><rect x="916" y="140" width="2" height="2" fill="#b63525"/><rect x="920" y="140" width="2" height="2" fill="#b63525"/><rect x="924" y="140" width="2" height="2" fill="#b63525"/><rect x="744" y="142" width="2" height="2" fill="#ce4d2a"/><rect x="746" y="142" width="2" height="2" fill="#ce4d2a"/><rect x="750" y="142" width="2" height="2" fill="#ce4d2a"/><rect x="756" y="142" width="2" height="2" fill="#ce4d2a"/><rect x="772" y="142" width="2" height="2" fill="#d85532"/><rect x="792" y="142" width="2" height="2" fill="#b63525"/><rect x="800" y="142" width="2" height="2" fill="#b63525"/><rect x="812" y="142" width="2" height="2" fill="#ce4d2a"/><rect x="826" y="142" width="2" height="2" fill="#d85532"/><rect x="828" y="142" width="2" height="2" fill="#d85532"/><rect x="836" y="142" width="2" height="2" fill="#ce4d2a"/><rect x="842" y="142" width="2" height="2" fill="#ce4d2a"/><rect x="846" y="142" width="2" height="2" fill="#b63525"/><rect x="870" y="142" width="2" height="2" fill="#d85532"/><rect x="874" y="142" width="2" height="2" fill="#b63525"/><rect x="882" y="142" width="2" height="2" fill="#ce4d2a"/><rect x="898" y="142" width="2" height="2" fill="#d85532"/><rect x="902" y="142" width="2" height="2" fill="#b63525"/><rect x="906" y="142" width="2" height="2" fill="#b63525"/><rect x="922" y="142" width="2" height="2" fill="#b63525"/><rect x="928" y="142" width="2" height="2" fill="#d85532"/><rect x="744" y="144" width="2" height="2" fill="#b63525"/><rect x="750" y="144" width="2" height="2" fill="#b63525"/><rect x="760" y="144" width="2" height="2" fill="#d85532"/><rect x="766" y="144" width="2" height="2" fill="#d85532"/><rect x="770" y="144" width="2" height="2" fill="#ce4d2a"/><rect x="772" y="144" width="2" height="2" fill="#ce4d2a"/><rect x="788" y="144" width="2" height="2" fill="#ce4d2a"/><rect x="792" y="144" width="2" height="2" fill="#d85532"/><rect x="794" y="144" width="2" height="2" fill="#b63525"/><rect x="796" y="144" width="2" height="2" fill="#ce4d2a"/><rect x="798" y="144" width="2" height="2" fill="#b63525"/><rect x="810" y="144" width="2" height="2" fill="#b63525"/><rect x="820" y="144" width="2" height="2" fill="#b63525"/><rect x="842" y="144" width="2" height="2" fill="#ce4d2a"/><rect x="844" y="144" width="2" height="2" fill="#d85532"/><rect x="850" y="144" width="2" height="2" fill="#d85532"/><rect x="852" y="144" width="2" height="2" fill="#ce4d2a"/><rect x="856" y="144" width="2" height="2" fill="#ce4d2a"/><rect x="862" y="144" width="2" height="2" fill="#ce4d2a"/><rect x="866" y="144" width="2" height="2" fill="#b63525"/><rect x="870" y="144" width="2" height="2" fill="#b63525"/><rect x="872" y="144" width="2" height="2" fill="#b63525"/><rect x="878" y="144" width="2" height="2" fill="#ce4d2a"/><rect x="880" y="144" width="2" height="2" fill="#b63525"/><rect x="882" y="144" width="2" height="2" fill="#ce4d2a"/><rect x="884" y="144" width="2" height="2" fill="#d85532"/><rect x="890" y="144" width="2" height="2" fill="#d85532"/><rect x="894" y="144" width="2" height="2" fill="#ce4d2a"/><rect x="898" y="144" width="2" height="2" fill="#ce4d2a"/><rect x="914" y="144" width="2" height="2" fill="#d85532"/><rect x="752" y="146" width="2" height="2" fill="#ce4d2a"/><rect x="758" y="146" width="2" height="2" fill="#d85532"/><rect x="760" y="146" width="2" height="2" fill="#b63525"/><rect x="770" y="146" width="2" height="2" fill="#d85532"/><rect x="772" y="146" width="2" height="2" fill="#b63525"/><rect x="778" y="146" width="2" height="2" fill="#d85532"/><rect x="780" y="146" width="2" height="2" fill="#ce4d2a"/><rect x="784" y="146" width="2" height="2" fill="#d85532"/><rect x="786" y="146" width="2" height="2" fill="#ce4d2a"/><rect x="788" y="146" width="2" height="2" fill="#ce4d2a"/><rect x="794" y="146" width="2" height="2" fill="#ce4d2a"/><rect x="806" y="146" width="2" height="2" fill="#d85532"/><rect x="808" y="146" width="2" height="2" fill="#ce4d2a"/><rect x="820" y="146" width="2" height="2" fill="#ce4d2a"/><rect x="864" y="146" width="2" height="2" fill="#d85532"/><rect x="868" y="146" width="2" height="2" fill="#d85532"/><rect x="872" y="146" width="2" height="2" fill="#ce4d2a"/><rect x="890" y="146" width="2" height="2" fill="#ce4d2a"/><rect x="898" y="146" width="2" height="2" fill="#d85532"/><rect x="900" y="146" width="2" height="2" fill="#d85532"/><rect x="918" y="146" width="2" height="2" fill="#ce4d2a"/><rect x="924" y="146" width="2" height="2" fill="#d85532"/><rect x="926" y="146" width="2" height="2" fill="#ce4d2a"/><path d="M742 147 Q790 140 835 150 T929 147" stroke="#93282d" stroke-width="5" fill="none"/><path d="M742 162 Q790 150 835 165 T929 160 V178 H742Z" fill="#a23143"/><rect x="742.5" y="126.5" width="186" height="51" fill="none" stroke="#e23b1b" stroke-width="1"/></svg>
<svg style="left:260px;top:214px;" width="174" height="44" viewBox="260 214 174 44"><rect x="272" y="246" width="2" height="9" fill="#38323e"/><rect x="274" y="246" width="2" height="7" fill="#38323e"/><rect x="279" y="246" width="3" height="2" fill="#38323e"/><rect x="282" y="246" width="3" height="3" fill="#38323e"/><rect x="288" y="246" width="2" height="3" fill="#38323e"/><rect x="290" y="246" width="3" height="9" fill="#38323e"/><rect x="293" y="246" width="5" height="4" fill="#38323e"/><rect x="298" y="246" width="2" height="2" fill="#38323e"/><rect x="300" y="246" width="2" height="7" fill="#38323e"/><rect x="302" y="246" width="4" height="4" fill="#38323e"/><rect x="306" y="246" width="3" height="6" fill="#38323e"/><rect x="309" y="246" width="5" height="6" fill="#38323e"/><rect x="314" y="246" width="3" height="4" fill="#38323e"/><rect x="317" y="246" width="3" height="7" fill="#38323e"/><rect x="322" y="246" width="3" height="6" fill="#38323e"/><rect x="325" y="246" width="3" height="4" fill="#38323e"/><rect x="328" y="246" width="3" height="7" fill="#38323e"/><rect x="331" y="246" width="2" height="2" fill="#38323e"/><rect x="333" y="246" width="5" height="4" fill="#38323e"/><rect x="338" y="246" width="3" height="7" fill="#38323e"/><rect x="341" y="246" width="4" height="4" fill="#38323e"/><rect x="345" y="246" width="4" height="4" fill="#38323e"/><rect x="354" y="246" width="4" height="6" fill="#38323e"/><rect x="358" y="246" width="4" height="6" fill="#38323e"/><rect x="362" y="246" width="5" height="9" fill="#38323e"/><rect x="367" y="246" width="4" height="4" fill="#38323e"/><rect x="371" y="246" width="2" height="5" fill="#38323e"/><rect x="373" y="246" width="3" height="5" fill="#38323e"/><rect x="376" y="246" width="2" height="3" fill="#38323e"/><rect x="381" y="246" width="4" height="2" fill="#38323e"/><rect x="385" y="246" width="5" height="5" fill="#38323e"/><rect x="390" y="246" width="4" height="4" fill="#38323e"/><rect x="394" y="246" width="2" height="9" fill="#38323e"/><rect x="396" y="246" width="3" height="6" fill="#38323e"/><rect x="399" y="246" width="5" height="7" fill="#38323e"/><rect x="404" y="246" width="2" height="2" fill="#38323e"/><rect x="406" y="246" width="4" height="2" fill="#38323e"/><rect x="410" y="246" width="2" height="4" fill="#38323e"/><rect x="412" y="246" width="3" height="6" fill="#38323e"/><rect x="415" y="246" width="3" height="3" fill="#38323e"/><rect x="270" y="246" width="152" height="2" fill="#38323e"/><rect x="268" y="226" width="158" height="21" fill="#5a7a6a"/><rect x="268" y="228" width="2" height="2" fill="#648272"/><rect x="270" y="228" width="2" height="2" fill="#648272"/><rect x="276" y="228" width="2" height="2" fill="#527466"/><rect x="288" y="228" width="2" height="2" fill="#648272"/><rect x="306" y="228" width="2" height="2" fill="#648272"/><rect x="334" y="228" width="2" height="2" fill="#648272"/><rect x="350" y="228" width="2" height="2" fill="#527466"/><rect x="352" y="228" width="2" height="2" fill="#648272"/><rect x="358" y="228" width="2" height="2" fill="#648272"/><rect x="360" y="228" width="2" height="2" fill="#527466"/><rect x="362" y="228" width="2" height="2" fill="#527466"/><rect x="364" y="228" width="2" height="2" fill="#648272"/><rect x="368" y="228" width="2" height="2" fill="#648272"/><rect x="400" y="228" width="2" height="2" fill="#527466"/><rect x="404" y="228" width="2" height="2" fill="#648272"/><rect x="410" y="228" width="2" height="2" fill="#648272"/><rect x="268" y="230" width="2" height="2" fill="#527466"/><rect x="282" y="230" width="2" height="2" fill="#527466"/><rect x="292" y="230" width="2" height="2" fill="#648272"/><rect x="296" y="230" width="2" height="2" fill="#648272"/><rect x="304" y="230" width="2" height="2" fill="#527466"/><rect x="310" y="230" width="2" height="2" fill="#527466"/><rect x="312" y="230" width="2" height="2" fill="#648272"/><rect x="314" y="230" width="2" height="2" fill="#527466"/><rect x="316" y="230" width="2" height="2" fill="#648272"/><rect x="318" y="230" width="2" height="2" fill="#648272"/><rect x="322" y="230" width="2" height="2" fill="#648272"/><rect x="330" y="230" width="2" height="2" fill="#648272"/><rect x="336" y="230" width="2" height="2" fill="#648272"/><rect x="340" y="230" width="2" height="2" fill="#648272"/><rect x="358" y="230" width="2" height="2" fill="#648272"/><rect x="362" y="230" width="2" height="2" fill="#648272"/><rect x="372" y="230" width="2" height="2" fill="#648272"/><rect x="388" y="230" width="2" height="2" fill="#527466"/><rect x="396" y="230" width="2" height="2" fill="#648272"/><rect x="402" y="230" width="2" height="2" fill="#527466"/><rect x="418" y="230" width="2" height="2" fill="#527466"/><rect x="420" y="230" width="2" height="2" fill="#648272"/><rect x="268" y="232" width="2" height="2" fill="#648272"/><rect x="276" y="232" width="2" height="2" fill="#648272"/><rect x="286" y="232" width="2" height="2" fill="#527466"/><rect x="296" y="232" width="2" height="2" fill="#527466"/><rect x="300" y="232" width="2" height="2" fill="#527466"/><rect x="308" y="232" width="2" height="2" fill="#648272"/><rect x="314" y="232" width="2" height="2" fill="#527466"/><rect x="326" y="232" width="2" height="2" fill="#648272"/><rect x="334" y="232" width="2" height="2" fill="#648272"/><rect x="342" y="232" width="2" height="2" fill="#648272"/><rect x="348" y="232" width="2" height="2" fill="#648272"/><rect x="358" y="232" width="2" height="2" fill="#527466"/><rect x="376" y="232" width="2" height="2" fill="#648272"/><rect x="382" y="232" width="2" height="2" fill="#648272"/><rect x="386" y="232" width="2" height="2" fill="#527466"/><rect x="394" y="232" width="2" height="2" fill="#648272"/><rect x="412" y="232" width="2" height="2" fill="#527466"/><rect x="416" y="232" width="2" height="2" fill="#527466"/><rect x="424" y="232" width="2" height="2" fill="#527466"/><rect x="282" y="234" width="2" height="2" fill="#527466"/><rect x="302" y="234" width="2" height="2" fill="#527466"/><rect x="322" y="234" width="2" height="2" fill="#648272"/><rect x="328" y="234" width="2" height="2" fill="#648272"/><rect x="332" y="234" width="2" height="2" fill="#648272"/><rect x="336" y="234" width="2" height="2" fill="#648272"/><rect x="340" y="234" width="2" height="2" fill="#648272"/><rect x="364" y="234" width="2" height="2" fill="#527466"/><rect x="386" y="234" width="2" height="2" fill="#648272"/><rect x="392" y="234" width="2" height="2" fill="#648272"/><rect x="396" y="234" width="2" height="2" fill="#648272"/><rect x="402" y="234" width="2" height="2" fill="#648272"/><rect x="406" y="234" width="2" height="2" fill="#648272"/><rect x="420" y="234" width="2" height="2" fill="#648272"/><rect x="422" y="234" width="2" height="2" fill="#527466"/><rect x="284" y="236" width="2" height="2" fill="#648272"/><rect x="290" y="236" width="2" height="2" fill="#527466"/><rect x="292" y="236" width="2" height="2" fill="#648272"/><rect x="294" y="236" width="2" height="2" fill="#527466"/><rect x="300" y="236" width="2" height="2" fill="#648272"/><rect x="302" y="236" width="2" height="2" fill="#527466"/><rect x="312" y="236" width="2" height="2" fill="#527466"/><rect x="322" y="236" width="2" height="2" fill="#648272"/><rect x="326" y="236" width="2" height="2" fill="#648272"/><rect x="338" y="236" width="2" height="2" fill="#648272"/><rect x="360" y="236" width="2" height="2" fill="#527466"/><rect x="382" y="236" width="2" height="2" fill="#648272"/><rect x="394" y="236" width="2" height="2" fill="#527466"/><rect x="408" y="236" width="2" height="2" fill="#527466"/><rect x="422" y="236" width="2" height="2" fill="#648272"/><rect x="268" y="237" width="158" height="10" fill="#3a6a88"/><polygon points="268.0,247.0 268.0,239.0 270.0,239.0 270.0,241.0 272.0,241.0 272.0,239.0 274.0,239.0 274.0,241.0 276.0,241.0 276.0,241.0 278.0,241.0 278.0,241.0 280.0,241.0 280.0,236.0 282.0,236.0 282.0,240.0 284.0,240.0 284.0,238.0 286.0,238.0 286.0,240.0 288.0,240.0 288.0,241.0 290.0,241.0 290.0,241.0 292.0,241.0 292.0,241.0 294.0,241.0 294.0,241.0 296.0,241.0 296.0,238.0 298.0,238.0 298.0,239.0 300.0,239.0 300.0,240.0 302.0,240.0 302.0,238.0 304.0,238.0 304.0,241.0 306.0,241.0 306.0,241.0 308.0,241.0 308.0,238.0 310.0,238.0 310.0,238.0 312.0,238.0 312.0,241.0 314.0,241.0 314.0,238.0 316.0,238.0 316.0,238.0 318.0,238.0 318.0,236.0 320.0,236.0 320.0,240.0 322.0,240.0 322.0,241.0 324.0,241.0 324.0,240.0 326.0,240.0 326.0,240.0 328.0,240.0 328.0,238.0 330.0,238.0 330.0,236.0 332.0,236.0 332.0,239.0 334.0,239.0 334.0,241.0 336.0,241.0 336.0,241.0 338.0,241.0 338.0,236.0 340.0,236.0 340.0,241.0 342.0,241.0 342.0,236.0 344.0,236.0 344.0,241.0 346.0,241.0 346.0,240.0 348.0,240.0 348.0,236.0 350.0,236.0 350.0,238.0 352.0,238.0 352.0,239.0 354.0,239.0 354.0,236.0 356.0,236.0 356.0,241.0 358.0,241.0 358.0,241.0 360.0,241.0 360.0,241.0 362.0,241.0 362.0,241.0 364.0,241.0 364.0,241.0 366.0,241.0 366.0,241.0 368.0,241.0 368.0,240.0 370.0,240.0 370.0,241.0 372.0,241.0 372.0,241.0 374.0,241.0 374.0,238.0 376.0,238.0 376.0,236.0 378.0,236.0 378.0,236.0 380.0,236.0 380.0,236.0 382.0,236.0 382.0,238.0 384.0,238.0 384.0,239.0 386.0,239.0 386.0,241.0 388.0,241.0 388.0,238.0 390.0,238.0 390.0,241.0 392.0,241.0 392.0,238.0 394.0,238.0 394.0,241.0 396.0,241.0 396.0,238.0 398.0,238.0 398.0,241.0 400.0,241.0 400.0,241.0 402.0,241.0 402.0,241.0 404.0,241.0 404.0,240.0 406.0,240.0 406.0,241.0 408.0,241.0 408.0,241.0 410.0,241.0 410.0,241.0 412.0,241.0 412.0,240.0 414.0,240.0 414.0,241.0 416.0,241.0 416.0,241.0 418.0,241.0 418.0,240.0 420.0,240.0 420.0,239.0 422.0,239.0 422.0,240.0 424.0,240.0 424.0,240.0 426.0,240.0 426.0,247.0" fill="#2a6a98"/><rect x="270" y="235" width="2" height="2" fill="#527466"/><rect x="278" y="235" width="2" height="2" fill="#648272"/><rect x="296" y="235" width="2" height="2" fill="#5a7a6a"/><rect x="298" y="235" width="2" height="2" fill="#5a7a6a"/><rect x="322" y="235" width="2" height="2" fill="#5a7a6a"/><rect x="328" y="235" width="2" height="2" fill="#527466"/><rect x="330" y="235" width="2" height="2" fill="#648272"/><rect x="334" y="235" width="2" height="2" fill="#5a7a6a"/><rect x="340" y="235" width="2" height="2" fill="#527466"/><rect x="342" y="235" width="2" height="2" fill="#5a7a6a"/><rect x="350" y="235" width="2" height="2" fill="#527466"/><rect x="352" y="235" width="2" height="2" fill="#5a7a6a"/><rect x="354" y="235" width="2" height="2" fill="#527466"/><rect x="360" y="235" width="2" height="2" fill="#527466"/><rect x="362" y="235" width="2" height="2" fill="#527466"/><rect x="364" y="235" width="2" height="2" fill="#648272"/><rect x="368" y="235" width="2" height="2" fill="#5a7a6a"/><rect x="370" y="235" width="2" height="2" fill="#5a7a6a"/><rect x="372" y="235" width="2" height="2" fill="#5a7a6a"/><rect x="380" y="235" width="2" height="2" fill="#5a7a6a"/><rect x="386" y="235" width="2" height="2" fill="#5a7a6a"/><rect x="388" y="235" width="2" height="2" fill="#5a7a6a"/><rect x="396" y="235" width="2" height="2" fill="#648272"/><rect x="398" y="235" width="2" height="2" fill="#5a7a6a"/><rect x="400" y="235" width="2" height="2" fill="#5a7a6a"/><rect x="404" y="235" width="2" height="2" fill="#5a7a6a"/><rect x="406" y="235" width="2" height="2" fill="#648272"/><rect x="408" y="235" width="2" height="2" fill="#5a7a6a"/><rect x="416" y="235" width="2" height="2" fill="#527466"/><rect x="418" y="235" width="2" height="2" fill="#527466"/><rect x="420" y="235" width="2" height="2" fill="#527466"/><rect x="424" y="235" width="2" height="2" fill="#648272"/><rect x="276" y="237" width="2" height="2" fill="#648272"/><rect x="278" y="237" width="2" height="2" fill="#527466"/><rect x="282" y="237" width="2" height="2" fill="#527466"/><rect x="292" y="237" width="2" height="2" fill="#648272"/><rect x="298" y="237" width="2" height="2" fill="#527466"/><rect x="302" y="237" width="2" height="2" fill="#648272"/><rect x="304" y="237" width="2" height="2" fill="#5a7a6a"/><rect x="310" y="237" width="2" height="2" fill="#648272"/><rect x="314" y="237" width="2" height="2" fill="#527466"/><rect x="318" y="237" width="2" height="2" fill="#648272"/><rect x="324" y="237" width="2" height="2" fill="#5a7a6a"/><rect x="330" y="237" width="2" height="2" fill="#527466"/><rect x="334" y="237" width="2" height="2" fill="#5a7a6a"/><rect x="336" y="237" width="2" height="2" fill="#5a7a6a"/><rect x="340" y="237" width="2" height="2" fill="#527466"/><rect x="342" y="237" width="2" height="2" fill="#527466"/><rect x="350" y="237" width="2" height="2" fill="#648272"/><rect x="352" y="237" width="2" height="2" fill="#5a7a6a"/><rect x="362" y="237" width="2" height="2" fill="#5a7a6a"/><rect x="376" y="237" width="2" height="2" fill="#648272"/><rect x="384" y="237" width="2" height="2" fill="#5a7a6a"/><rect x="390" y="237" width="2" height="2" fill="#648272"/><rect x="392" y="237" width="2" height="2" fill="#527466"/><rect x="394" y="237" width="2" height="2" fill="#5a7a6a"/><rect x="404" y="237" width="2" height="2" fill="#5a7a6a"/><rect x="408" y="237" width="2" height="2" fill="#527466"/><rect x="416" y="237" width="2" height="2" fill="#5a7a6a"/><rect x="418" y="237" width="2" height="2" fill="#648272"/><rect x="284" y="239" width="2" height="2" fill="#648272"/><rect x="292" y="239" width="2" height="2" fill="#648272"/><rect x="300" y="239" width="2" height="2" fill="#648272"/><rect x="304" y="239" width="2" height="2" fill="#5a7a6a"/><rect x="314" y="239" width="2" height="2" fill="#648272"/><rect x="318" y="239" width="2" height="2" fill="#5a7a6a"/><rect x="322" y="239" width="2" height="2" fill="#648272"/><rect x="330" y="239" width="2" height="2" fill="#648272"/><rect x="332" y="239" width="2" height="2" fill="#5a7a6a"/><rect x="342" y="239" width="2" height="2" fill="#527466"/><rect x="346" y="239" width="2" height="2" fill="#527466"/><rect x="348" y="239" width="2" height="2" fill="#5a7a6a"/><rect x="354" y="239" width="2" height="2" fill="#648272"/><rect x="368" y="239" width="2" height="2" fill="#527466"/><rect x="382" y="239" width="2" height="2" fill="#5a7a6a"/><rect x="398" y="239" width="2" height="2" fill="#527466"/><rect x="402" y="239" width="2" height="2" fill="#527466"/><rect x="404" y="239" width="2" height="2" fill="#527466"/><rect x="406" y="239" width="2" height="2" fill="#5a7a6a"/><rect x="408" y="239" width="2" height="2" fill="#527466"/><rect x="410" y="239" width="2" height="2" fill="#5a7a6a"/><rect x="416" y="239" width="2" height="2" fill="#527466"/><rect x="418" y="239" width="2" height="2" fill="#527466"/><rect x="424" y="239" width="2" height="2" fill="#5a7a6a"/><rect x="286" y="241" width="2" height="2" fill="#2e6a9a"/><rect x="288" y="241" width="2" height="2" fill="#28709a"/><rect x="296" y="241" width="2" height="2" fill="#2e6a9a"/><rect x="304" y="241" width="2" height="2" fill="#28709a"/><rect x="340" y="241" width="2" height="2" fill="#28709a"/><rect x="368" y="241" width="2" height="2" fill="#2e6a9a"/><rect x="372" y="241" width="2" height="2" fill="#28709a"/><rect x="400" y="241" width="2" height="2" fill="#2e6a9a"/><rect x="424" y="241" width="2" height="2" fill="#28709a"/><rect x="268" y="243" width="2" height="2" fill="#28709a"/><rect x="296" y="243" width="2" height="2" fill="#28709a"/><rect x="302" y="243" width="2" height="2" fill="#28709a"/><rect x="326" y="243" width="2" height="2" fill="#28709a"/><rect x="362" y="243" width="2" height="2" fill="#2e6a9a"/><rect x="394" y="243" width="2" height="2" fill="#28709a"/><rect x="402" y="243" width="2" height="2" fill="#2e6a9a"/><rect x="410" y="243" width="2" height="2" fill="#28709a"/><rect x="422" y="243" width="2" height="2" fill="#28709a"/><rect x="296" y="245" width="2" height="2" fill="#2e6a9a"/><rect x="298" y="245" width="2" height="2" fill="#2e6a9a"/><rect x="332" y="245" width="2" height="2" fill="#2e6a9a"/><rect x="340" y="245" width="2" height="2" fill="#2e6a9a"/><rect x="350" y="245" width="2" height="2" fill="#28709a"/><rect x="398" y="245" width="2" height="2" fill="#2e6a9a"/><rect x="416" y="245" width="2" height="2" fill="#2e6a9a"/><rect x="268" y="221" width="158" height="5" fill="#b65c2a"/><rect x="270" y="220" width="2" height="1" fill="#c4682e"/><rect x="272" y="218" width="2" height="3" fill="#c4682e"/><rect x="274" y="219" width="2" height="2" fill="#c4682e"/><rect x="276" y="219" width="2" height="2" fill="#b65c2a"/><rect x="278" y="218" width="2" height="3" fill="#b65c2a"/><rect x="280" y="220" width="2" height="1" fill="#b65c2a"/><rect x="282" y="218" width="2" height="3" fill="#c4682e"/><rect x="284" y="218" width="2" height="3" fill="#b65c2a"/><rect x="288" y="220" width="2" height="1" fill="#c4682e"/><rect x="298" y="220" width="2" height="1" fill="#c4682e"/><rect x="300" y="220" width="2" height="1" fill="#b65c2a"/><rect x="308" y="219" width="2" height="2" fill="#b65c2a"/><rect x="310" y="219" width="2" height="2" fill="#b65c2a"/><rect x="312" y="218" width="2" height="3" fill="#b65c2a"/><rect x="314" y="218" width="2" height="3" fill="#c4682e"/><rect x="316" y="219" width="2" height="2" fill="#b65c2a"/><rect x="318" y="219" width="2" height="2" fill="#c4682e"/><rect x="320" y="219" width="2" height="2" fill="#c4682e"/><rect x="324" y="219" width="2" height="2" fill="#b65c2a"/><rect x="326" y="219" width="2" height="2" fill="#c4682e"/><rect x="330" y="219" width="2" height="2" fill="#c4682e"/><rect x="340" y="219" width="2" height="2" fill="#c4682e"/><rect x="342" y="219" width="2" height="2" fill="#b65c2a"/><rect x="346" y="219" width="2" height="2" fill="#c4682e"/><rect x="348" y="219" width="2" height="2" fill="#b65c2a"/><rect x="352" y="218" width="2" height="3" fill="#b65c2a"/><rect x="354" y="219" width="2" height="2" fill="#c4682e"/><rect x="362" y="220" width="2" height="1" fill="#c4682e"/><rect x="366" y="220" width="2" height="1" fill="#c4682e"/><rect x="368" y="219" width="2" height="2" fill="#b65c2a"/><rect x="370" y="218" width="2" height="3" fill="#c4682e"/><rect x="372" y="219" width="2" height="2" fill="#b65c2a"/><rect x="376" y="220" width="2" height="1" fill="#c4682e"/><rect x="380" y="219" width="2" height="2" fill="#b65c2a"/><rect x="382" y="220" width="2" height="1" fill="#c4682e"/><rect x="386" y="220" width="2" height="1" fill="#b65c2a"/><rect x="388" y="218" width="2" height="3" fill="#c4682e"/><rect x="390" y="220" width="2" height="1" fill="#b65c2a"/><rect x="402" y="219" width="2" height="2" fill="#c4682e"/><rect x="406" y="218" width="2" height="3" fill="#b65c2a"/><rect x="412" y="219" width="2" height="2" fill="#c4682e"/><rect x="414" y="220" width="2" height="1" fill="#c4682e"/><rect x="416" y="219" width="2" height="2" fill="#c4682e"/><rect x="418" y="219" width="2" height="2" fill="#b65c2a"/><rect x="420" y="220" width="2" height="1" fill="#b65c2a"/><rect x="280" y="221" width="2" height="2" fill="#c4682e"/><rect x="306" y="221" width="2" height="2" fill="#a85228"/><rect x="322" y="221" width="2" height="2" fill="#a85228"/><rect x="346" y="221" width="2" height="2" fill="#a85228"/><rect x="354" y="221" width="2" height="2" fill="#c4682e"/><rect x="370" y="221" width="2" height="2" fill="#a85228"/><rect x="380" y="221" width="2" height="2" fill="#a85228"/><rect x="388" y="221" width="2" height="2" fill="#c4682e"/><rect x="410" y="221" width="2" height="2" fill="#c4682e"/><rect x="414" y="221" width="2" height="2" fill="#c4682e"/><rect x="268" y="223" width="2" height="2" fill="#a85228"/><rect x="276" y="223" width="2" height="2" fill="#a85228"/><rect x="298" y="223" width="2" height="2" fill="#a85228"/><rect x="310" y="223" width="2" height="2" fill="#a85228"/><rect x="316" y="223" width="2" height="2" fill="#a85228"/><rect x="334" y="223" width="2" height="2" fill="#a85228"/><rect x="336" y="223" width="2" height="2" fill="#a85228"/><rect x="356" y="223" width="2" height="2" fill="#c4682e"/><rect x="366" y="223" width="2" height="2" fill="#c4682e"/><rect x="380" y="223" width="2" height="2" fill="#c4682e"/><rect x="386" y="223" width="2" height="2" fill="#a85228"/><rect x="398" y="223" width="2" height="2" fill="#a85228"/><rect x="404" y="223" width="2" height="2" fill="#a85228"/><rect x="406" y="223" width="2" height="2" fill="#c4682e"/><rect x="422" y="223" width="2" height="2" fill="#a85228"/><rect x="276" y="225" width="2" height="2" fill="#a85228"/><rect x="278" y="225" width="2" height="2" fill="#c4682e"/><rect x="292" y="225" width="2" height="2" fill="#c4682e"/><rect x="308" y="225" width="2" height="2" fill="#a85228"/><rect x="330" y="225" width="2" height="2" fill="#c4682e"/><rect x="332" y="225" width="2" height="2" fill="#a85228"/><rect x="338" y="225" width="2" height="2" fill="#a85228"/><rect x="352" y="225" width="2" height="2" fill="#a85228"/><rect x="366" y="225" width="2" height="2" fill="#a85228"/><rect x="370" y="225" width="2" height="2" fill="#c4682e"/><rect x="372" y="225" width="2" height="2" fill="#a85228"/><rect x="390" y="225" width="2" height="2" fill="#c4682e"/><rect x="398" y="225" width="2" height="2" fill="#a85228"/><rect x="400" y="225" width="2" height="2" fill="#c4682e"/><rect x="408" y="225" width="2" height="2" fill="#a85228"/><rect x="422" y="225" width="2" height="2" fill="#c4682e"/><rect x="424" y="225" width="2" height="2" fill="#c4682e"/><rect x="266" y="226" width="166" height="21" fill="rgba(35,110,165,0.6)" fill-opacity="0.18"/><rect x="266" y="226" width="2" height="21" fill="rgba(35,110,165,0.6)"/><rect x="426" y="226" width="6" height="21" fill="rgba(35,110,165,0.6)"/></svg>
<svg style="left:451px;top:127px;" width="218" height="44" viewBox="451 127 218 44"><rect x="463" y="159" width="5" height="6" fill="#38323e"/><rect x="468" y="159" width="3" height="3" fill="#38323e"/><rect x="471" y="159" width="5" height="5" fill="#38323e"/><rect x="476" y="159" width="4" height="7" fill="#38323e"/><rect x="480" y="159" width="2" height="4" fill="#38323e"/><rect x="482" y="159" width="2" height="9" fill="#38323e"/><rect x="484" y="159" width="3" height="3" fill="#38323e"/><rect x="487" y="159" width="4" height="3" fill="#38323e"/><rect x="497" y="159" width="5" height="5" fill="#38323e"/><rect x="502" y="159" width="3" height="2" fill="#38323e"/><rect x="505" y="159" width="4" height="9" fill="#38323e"/><rect x="512" y="159" width="2" height="2" fill="#38323e"/><rect x="514" y="159" width="3" height="3" fill="#38323e"/><rect x="517" y="159" width="2" height="5" fill="#38323e"/><rect x="519" y="159" width="4" height="4" fill="#38323e"/><rect x="523" y="159" width="2" height="3" fill="#38323e"/><rect x="530" y="159" width="4" height="7" fill="#38323e"/><rect x="534" y="159" width="3" height="2" fill="#38323e"/><rect x="537" y="159" width="2" height="7" fill="#38323e"/><rect x="539" y="159" width="2" height="9" fill="#38323e"/><rect x="541" y="159" width="5" height="4" fill="#38323e"/><rect x="546" y="159" width="2" height="2" fill="#38323e"/><rect x="548" y="159" width="3" height="2" fill="#38323e"/><rect x="551" y="159" width="5" height="7" fill="#38323e"/><rect x="556" y="159" width="5" height="5" fill="#38323e"/><rect x="563" y="159" width="5" height="6" fill="#38323e"/><rect x="568" y="159" width="3" height="3" fill="#38323e"/><rect x="573" y="159" width="2" height="3" fill="#38323e"/><rect x="575" y="159" width="5" height="2" fill="#38323e"/><rect x="580" y="159" width="5" height="2" fill="#38323e"/><rect x="585" y="159" width="3" height="4" fill="#38323e"/><rect x="588" y="159" width="5" height="6" fill="#38323e"/><rect x="593" y="159" width="5" height="7" fill="#38323e"/><rect x="598" y="159" width="5" height="2" fill="#38323e"/><rect x="603" y="159" width="4" height="4" fill="#38323e"/><rect x="607" y="159" width="3" height="5" fill="#38323e"/><rect x="610" y="159" width="5" height="6" fill="#38323e"/><rect x="615" y="159" width="5" height="5" fill="#38323e"/><rect x="620" y="159" width="5" height="2" fill="#38323e"/><rect x="625" y="159" width="3" height="3" fill="#38323e"/><rect x="631" y="159" width="3" height="3" fill="#38323e"/><rect x="634" y="159" width="5" height="4" fill="#38323e"/><rect x="639" y="159" width="2" height="4" fill="#38323e"/><rect x="641" y="159" width="3" height="9" fill="#38323e"/><rect x="644" y="159" width="4" height="2" fill="#38323e"/><rect x="648" y="159" width="3" height="7" fill="#38323e"/><rect x="651" y="159" width="2" height="9" fill="#38323e"/><rect x="653" y="159" width="3" height="9" fill="#38323e"/><rect x="461" y="159" width="196" height="2" fill="#38323e"/><rect x="459" y="139" width="202" height="21" fill="#5a7a6a"/><rect x="461" y="141" width="2" height="2" fill="#527466"/><rect x="465" y="141" width="2" height="2" fill="#648272"/><rect x="471" y="141" width="2" height="2" fill="#527466"/><rect x="473" y="141" width="2" height="2" fill="#648272"/><rect x="479" y="141" width="2" height="2" fill="#648272"/><rect x="495" y="141" width="2" height="2" fill="#527466"/><rect x="499" y="141" width="2" height="2" fill="#527466"/><rect x="501" y="141" width="2" height="2" fill="#527466"/><rect x="503" y="141" width="2" height="2" fill="#527466"/><rect x="529" y="141" width="2" height="2" fill="#648272"/><rect x="545" y="141" width="2" height="2" fill="#527466"/><rect x="557" y="141" width="2" height="2" fill="#648272"/><rect x="559" y="141" width="2" height="2" fill="#527466"/><rect x="573" y="141" width="2" height="2" fill="#648272"/><rect x="579" y="141" width="2" height="2" fill="#527466"/><rect x="589" y="141" width="2" height="2" fill="#648272"/><rect x="609" y="141" width="2" height="2" fill="#648272"/><rect x="613" y="141" width="2" height="2" fill="#648272"/><rect x="619" y="141" width="2" height="2" fill="#527466"/><rect x="633" y="141" width="2" height="2" fill="#527466"/><rect x="641" y="141" width="2" height="2" fill="#648272"/><rect x="651" y="141" width="2" height="2" fill="#648272"/><rect x="459" y="143" width="2" height="2" fill="#648272"/><rect x="467" y="143" width="2" height="2" fill="#527466"/><rect x="471" y="143" width="2" height="2" fill="#527466"/><rect x="479" y="143" width="2" height="2" fill="#648272"/><rect x="481" y="143" width="2" height="2" fill="#527466"/><rect x="489" y="143" width="2" height="2" fill="#527466"/><rect x="493" y="143" width="2" height="2" fill="#527466"/><rect x="517" y="143" width="2" height="2" fill="#648272"/><rect x="525" y="143" width="2" height="2" fill="#648272"/><rect x="533" y="143" width="2" height="2" fill="#648272"/><rect x="553" y="143" width="2" height="2" fill="#527466"/><rect x="561" y="143" width="2" height="2" fill="#648272"/><rect x="563" y="143" width="2" height="2" fill="#527466"/><rect x="567" y="143" width="2" height="2" fill="#648272"/><rect x="587" y="143" width="2" height="2" fill="#648272"/><rect x="595" y="143" width="2" height="2" fill="#527466"/><rect x="603" y="143" width="2" height="2" fill="#648272"/><rect x="623" y="143" width="2" height="2" fill="#527466"/><rect x="627" y="143" width="2" height="2" fill="#648272"/><rect x="631" y="143" width="2" height="2" fill="#527466"/><rect x="637" y="143" width="2" height="2" fill="#648272"/><rect x="641" y="143" width="2" height="2" fill="#648272"/><rect x="647" y="143" width="2" height="2" fill="#648272"/><rect x="651" y="143" width="2" height="2" fill="#648272"/><rect x="475" y="145" width="2" height="2" fill="#527466"/><rect x="481" y="145" width="2" height="2" fill="#648272"/><rect x="485" y="145" width="2" height="2" fill="#527466"/><rect x="493" y="145" width="2" height="2" fill="#527466"/><rect x="501" y="145" width="2" height="2" fill="#527466"/><rect x="505" y="145" width="2" height="2" fill="#648272"/><rect x="513" y="145" width="2" height="2" fill="#527466"/><rect x="531" y="145" width="2" height="2" fill="#527466"/><rect x="535" y="145" width="2" height="2" fill="#527466"/><rect x="549" y="145" width="2" height="2" fill="#648272"/><rect x="555" y="145" width="2" height="2" fill="#648272"/><rect x="561" y="145" width="2" height="2" fill="#648272"/><rect x="563" y="145" width="2" height="2" fill="#527466"/><rect x="577" y="145" width="2" height="2" fill="#527466"/><rect x="587" y="145" width="2" height="2" fill="#648272"/><rect x="591" y="145" width="2" height="2" fill="#527466"/><rect x="603" y="145" width="2" height="2" fill="#648272"/><rect x="607" y="145" width="2" height="2" fill="#527466"/><rect x="621" y="145" width="2" height="2" fill="#648272"/><rect x="627" y="145" width="2" height="2" fill="#527466"/><rect x="639" y="145" width="2" height="2" fill="#527466"/><rect x="641" y="145" width="2" height="2" fill="#527466"/><rect x="643" y="145" width="2" height="2" fill="#527466"/><rect x="653" y="145" width="2" height="2" fill="#648272"/><rect x="659" y="145" width="2" height="2" fill="#648272"/><rect x="461" y="147" width="2" height="2" fill="#527466"/><rect x="467" y="147" width="2" height="2" fill="#527466"/><rect x="487" y="147" width="2" height="2" fill="#527466"/><rect x="523" y="147" width="2" height="2" fill="#648272"/><rect x="531" y="147" width="2" height="2" fill="#648272"/><rect x="551" y="147" width="2" height="2" fill="#648272"/><rect x="573" y="147" width="2" height="2" fill="#648272"/><rect x="617" y="147" width="2" height="2" fill="#527466"/><rect x="625" y="147" width="2" height="2" fill="#648272"/><rect x="633" y="147" width="2" height="2" fill="#527466"/><rect x="639" y="147" width="2" height="2" fill="#527466"/><rect x="647" y="147" width="2" height="2" fill="#527466"/><rect x="495" y="149" width="2" height="2" fill="#527466"/><rect x="497" y="149" width="2" height="2" fill="#527466"/><rect x="523" y="149" width="2" height="2" fill="#527466"/><rect x="527" y="149" width="2" height="2" fill="#648272"/><rect x="535" y="149" width="2" height="2" fill="#648272"/><rect x="541" y="149" width="2" height="2" fill="#648272"/><rect x="557" y="149" width="2" height="2" fill="#527466"/><rect x="559" y="149" width="2" height="2" fill="#648272"/><rect x="591" y="149" width="2" height="2" fill="#527466"/><rect x="595" y="149" width="2" height="2" fill="#527466"/><rect x="597" y="149" width="2" height="2" fill="#527466"/><rect x="601" y="149" width="2" height="2" fill="#527466"/><rect x="633" y="149" width="2" height="2" fill="#527466"/><rect x="643" y="149" width="2" height="2" fill="#527466"/><rect x="659" y="149" width="2" height="2" fill="#648272"/><rect x="459" y="150" width="202" height="10" fill="#3a6a88"/><polygon points="459.0,160.0 459.0,152.0 461.0,152.0 461.0,154.0 463.0,154.0 463.0,153.0 465.0,153.0 465.0,149.0 467.0,149.0 467.0,154.0 469.0,154.0 469.0,151.0 471.0,151.0 471.0,154.0 473.0,154.0 473.0,154.0 475.0,154.0 475.0,154.0 477.0,154.0 477.0,154.0 479.0,154.0 479.0,153.0 481.0,153.0 481.0,154.0 483.0,154.0 483.0,154.0 485.0,154.0 485.0,153.0 487.0,153.0 487.0,149.0 489.0,149.0 489.0,149.0 491.0,149.0 491.0,151.0 493.0,151.0 493.0,149.0 495.0,149.0 495.0,153.0 497.0,153.0 497.0,153.0 499.0,153.0 499.0,154.0 501.0,154.0 501.0,153.0 503.0,153.0 503.0,153.0 505.0,153.0 505.0,154.0 507.0,154.0 507.0,154.0 509.0,154.0 509.0,154.0 511.0,154.0 511.0,154.0 513.0,154.0 513.0,149.0 515.0,149.0 515.0,154.0 517.0,154.0 517.0,154.0 519.0,154.0 519.0,149.0 521.0,149.0 521.0,153.0 523.0,153.0 523.0,154.0 525.0,154.0 525.0,151.0 527.0,151.0 527.0,152.0 529.0,152.0 529.0,154.0 531.0,154.0 531.0,153.0 533.0,153.0 533.0,151.0 535.0,151.0 535.0,154.0 537.0,154.0 537.0,149.0 539.0,149.0 539.0,154.0 541.0,154.0 541.0,152.0 543.0,152.0 543.0,154.0 545.0,154.0 545.0,154.0 547.0,154.0 547.0,154.0 549.0,154.0 549.0,151.0 551.0,151.0 551.0,149.0 553.0,149.0 553.0,153.0 555.0,153.0 555.0,153.0 557.0,153.0 557.0,154.0 559.0,154.0 559.0,154.0 561.0,154.0 561.0,153.0 563.0,153.0 563.0,154.0 565.0,154.0 565.0,154.0 567.0,154.0 567.0,154.0 569.0,154.0 569.0,149.0 571.0,149.0 571.0,149.0 573.0,149.0 573.0,154.0 575.0,154.0 575.0,154.0 577.0,154.0 577.0,153.0 579.0,153.0 579.0,152.0 581.0,152.0 581.0,154.0 583.0,154.0 583.0,154.0 585.0,154.0 585.0,149.0 587.0,149.0 587.0,149.0 589.0,149.0 589.0,154.0 591.0,154.0 591.0,151.0 593.0,151.0 593.0,152.0 595.0,152.0 595.0,154.0 597.0,154.0 597.0,153.0 599.0,153.0 599.0,154.0 601.0,154.0 601.0,154.0 603.0,154.0 603.0,152.0 605.0,152.0 605.0,154.0 607.0,154.0 607.0,154.0 609.0,154.0 609.0,154.0 611.0,154.0 611.0,153.0 613.0,153.0 613.0,153.0 615.0,153.0 615.0,153.0 617.0,153.0 617.0,153.0 619.0,153.0 619.0,151.0 621.0,151.0 621.0,149.0 623.0,149.0 623.0,154.0 625.0,154.0 625.0,153.0 627.0,153.0 627.0,152.0 629.0,152.0 629.0,149.0 631.0,149.0 631.0,149.0 633.0,149.0 633.0,152.0 635.0,152.0 635.0,151.0 637.0,151.0 637.0,152.0 639.0,152.0 639.0,152.0 641.0,152.0 641.0,154.0 643.0,154.0 643.0,153.0 645.0,153.0 645.0,149.0 647.0,149.0 647.0,154.0 649.0,154.0 649.0,153.0 651.0,153.0 651.0,151.0 653.0,151.0 653.0,152.0 655.0,152.0 655.0,152.0 657.0,152.0 657.0,152.0 659.0,152.0 659.0,149.0 661.0,149.0 661.0,160.0" fill="#2a6a98"/><rect x="465" y="148" width="2" height="2" fill="#527466"/><rect x="477" y="148" width="2" height="2" fill="#648272"/><rect x="481" y="148" width="2" height="2" fill="#648272"/><rect x="485" y="148" width="2" height="2" fill="#527466"/><rect x="491" y="148" width="2" height="2" fill="#527466"/><rect x="503" y="148" width="2" height="2" fill="#527466"/><rect x="507" y="148" width="2" height="2" fill="#648272"/><rect x="509" y="148" width="2" height="2" fill="#527466"/><rect x="515" y="148" width="2" height="2" fill="#527466"/><rect x="519" y="148" width="2" height="2" fill="#527466"/><rect x="523" y="148" width="2" height="2" fill="#527466"/><rect x="525" y="148" width="2" height="2" fill="#648272"/><rect x="531" y="148" width="2" height="2" fill="#5a7a6a"/><rect x="551" y="148" width="2" height="2" fill="#5a7a6a"/><rect x="555" y="148" width="2" height="2" fill="#648272"/><rect x="557" y="148" width="2" height="2" fill="#527466"/><rect x="571" y="148" width="2" height="2" fill="#648272"/><rect x="605" y="148" width="2" height="2" fill="#648272"/><rect x="613" y="148" width="2" height="2" fill="#5a7a6a"/><rect x="615" y="148" width="2" height="2" fill="#5a7a6a"/><rect x="623" y="148" width="2" height="2" fill="#648272"/><rect x="625" y="148" width="2" height="2" fill="#5a7a6a"/><rect x="631" y="148" width="2" height="2" fill="#5a7a6a"/><rect x="633" y="148" width="2" height="2" fill="#527466"/><rect x="637" y="148" width="2" height="2" fill="#648272"/><rect x="643" y="148" width="2" height="2" fill="#5a7a6a"/><rect x="645" y="148" width="2" height="2" fill="#5a7a6a"/><rect x="649" y="148" width="2" height="2" fill="#5a7a6a"/><rect x="653" y="148" width="2" height="2" fill="#5a7a6a"/><rect x="657" y="148" width="2" height="2" fill="#648272"/><rect x="659" y="148" width="2" height="2" fill="#527466"/><rect x="459" y="150" width="2" height="2" fill="#527466"/><rect x="473" y="150" width="2" height="2" fill="#648272"/><rect x="475" y="150" width="2" height="2" fill="#5a7a6a"/><rect x="483" y="150" width="2" height="2" fill="#648272"/><rect x="487" y="150" width="2" height="2" fill="#527466"/><rect x="489" y="150" width="2" height="2" fill="#648272"/><rect x="495" y="150" width="2" height="2" fill="#527466"/><rect x="503" y="150" width="2" height="2" fill="#527466"/><rect x="507" y="150" width="2" height="2" fill="#5a7a6a"/><rect x="511" y="150" width="2" height="2" fill="#648272"/><rect x="513" y="150" width="2" height="2" fill="#5a7a6a"/><rect x="527" y="150" width="2" height="2" fill="#527466"/><rect x="529" y="150" width="2" height="2" fill="#527466"/><rect x="531" y="150" width="2" height="2" fill="#648272"/><rect x="539" y="150" width="2" height="2" fill="#527466"/><rect x="559" y="150" width="2" height="2" fill="#5a7a6a"/><rect x="563" y="150" width="2" height="2" fill="#648272"/><rect x="569" y="150" width="2" height="2" fill="#5a7a6a"/><rect x="577" y="150" width="2" height="2" fill="#5a7a6a"/><rect x="583" y="150" width="2" height="2" fill="#5a7a6a"/><rect x="585" y="150" width="2" height="2" fill="#648272"/><rect x="597" y="150" width="2" height="2" fill="#527466"/><rect x="599" y="150" width="2" height="2" fill="#527466"/><rect x="603" y="150" width="2" height="2" fill="#648272"/><rect x="611" y="150" width="2" height="2" fill="#648272"/><rect x="613" y="150" width="2" height="2" fill="#5a7a6a"/><rect x="625" y="150" width="2" height="2" fill="#5a7a6a"/><rect x="645" y="150" width="2" height="2" fill="#527466"/><rect x="649" y="150" width="2" height="2" fill="#527466"/><rect x="657" y="150" width="2" height="2" fill="#648272"/><rect x="659" y="150" width="2" height="2" fill="#527466"/><rect x="467" y="152" width="2" height="2" fill="#648272"/><rect x="477" y="152" width="2" height="2" fill="#648272"/><rect x="483" y="152" width="2" height="2" fill="#527466"/><rect x="485" y="152" width="2" height="2" fill="#527466"/><rect x="501" y="152" width="2" height="2" fill="#5a7a6a"/><rect x="503" y="152" width="2" height="2" fill="#527466"/><rect x="507" y="152" width="2" height="2" fill="#527466"/><rect x="509" y="152" width="2" height="2" fill="#648272"/><rect x="513" y="152" width="2" height="2" fill="#5a7a6a"/><rect x="523" y="152" width="2" height="2" fill="#648272"/><rect x="529" y="152" width="2" height="2" fill="#527466"/><rect x="531" y="152" width="2" height="2" fill="#527466"/><rect x="533" y="152" width="2" height="2" fill="#527466"/><rect x="535" y="152" width="2" height="2" fill="#527466"/><rect x="537" y="152" width="2" height="2" fill="#527466"/><rect x="545" y="152" width="2" height="2" fill="#527466"/><rect x="551" y="152" width="2" height="2" fill="#5a7a6a"/><rect x="555" y="152" width="2" height="2" fill="#5a7a6a"/><rect x="557" y="152" width="2" height="2" fill="#527466"/><rect x="559" y="152" width="2" height="2" fill="#5a7a6a"/><rect x="561" y="152" width="2" height="2" fill="#5a7a6a"/><rect x="567" y="152" width="2" height="2" fill="#648272"/><rect x="569" y="152" width="2" height="2" fill="#527466"/><rect x="571" y="152" width="2" height="2" fill="#648272"/><rect x="577" y="152" width="2" height="2" fill="#5a7a6a"/><rect x="581" y="152" width="2" height="2" fill="#648272"/><rect x="585" y="152" width="2" height="2" fill="#648272"/><rect x="613" y="152" width="2" height="2" fill="#648272"/><rect x="615" y="152" width="2" height="2" fill="#648272"/><rect x="623" y="152" width="2" height="2" fill="#648272"/><rect x="629" y="152" width="2" height="2" fill="#5a7a6a"/><rect x="643" y="152" width="2" height="2" fill="#5a7a6a"/><rect x="645" y="152" width="2" height="2" fill="#5a7a6a"/><rect x="649" y="152" width="2" height="2" fill="#5a7a6a"/><rect x="655" y="152" width="2" height="2" fill="#527466"/><rect x="469" y="154" width="2" height="2" fill="#2e6a9a"/><rect x="473" y="154" width="2" height="2" fill="#28709a"/><rect x="485" y="154" width="2" height="2" fill="#28709a"/><rect x="489" y="154" width="2" height="2" fill="#2e6a9a"/><rect x="505" y="154" width="2" height="2" fill="#28709a"/><rect x="515" y="154" width="2" height="2" fill="#28709a"/><rect x="553" y="154" width="2" height="2" fill="#2e6a9a"/><rect x="571" y="154" width="2" height="2" fill="#2e6a9a"/><rect x="575" y="154" width="2" height="2" fill="#28709a"/><rect x="583" y="154" width="2" height="2" fill="#2e6a9a"/><rect x="593" y="154" width="2" height="2" fill="#28709a"/><rect x="605" y="154" width="2" height="2" fill="#28709a"/><rect x="611" y="154" width="2" height="2" fill="#28709a"/><rect x="627" y="154" width="2" height="2" fill="#28709a"/><rect x="629" y="154" width="2" height="2" fill="#2e6a9a"/><rect x="633" y="154" width="2" height="2" fill="#28709a"/><rect x="645" y="154" width="2" height="2" fill="#28709a"/><rect x="653" y="154" width="2" height="2" fill="#28709a"/><rect x="461" y="156" width="2" height="2" fill="#28709a"/><rect x="473" y="156" width="2" height="2" fill="#28709a"/><rect x="497" y="156" width="2" height="2" fill="#28709a"/><rect x="499" y="156" width="2" height="2" fill="#2e6a9a"/><rect x="507" y="156" width="2" height="2" fill="#2e6a9a"/><rect x="517" y="156" width="2" height="2" fill="#2e6a9a"/><rect x="533" y="156" width="2" height="2" fill="#2e6a9a"/><rect x="535" y="156" width="2" height="2" fill="#2e6a9a"/><rect x="541" y="156" width="2" height="2" fill="#2e6a9a"/><rect x="587" y="156" width="2" height="2" fill="#28709a"/><rect x="613" y="156" width="2" height="2" fill="#2e6a9a"/><rect x="635" y="156" width="2" height="2" fill="#2e6a9a"/><rect x="657" y="156" width="2" height="2" fill="#28709a"/><rect x="659" y="156" width="2" height="2" fill="#28709a"/><rect x="469" y="158" width="2" height="2" fill="#2e6a9a"/><rect x="479" y="158" width="2" height="2" fill="#28709a"/><rect x="489" y="158" width="2" height="2" fill="#28709a"/><rect x="491" y="158" width="2" height="2" fill="#2e6a9a"/><rect x="493" y="158" width="2" height="2" fill="#2e6a9a"/><rect x="517" y="158" width="2" height="2" fill="#2e6a9a"/><rect x="531" y="158" width="2" height="2" fill="#28709a"/><rect x="535" y="158" width="2" height="2" fill="#2e6a9a"/><rect x="543" y="158" width="2" height="2" fill="#28709a"/><rect x="557" y="158" width="2" height="2" fill="#28709a"/><rect x="575" y="158" width="2" height="2" fill="#28709a"/><rect x="605" y="158" width="2" height="2" fill="#2e6a9a"/><rect x="641" y="158" width="2" height="2" fill="#28709a"/><rect x="643" y="158" width="2" height="2" fill="#2e6a9a"/><rect x="459" y="134" width="202" height="5" fill="#b65c2a"/><rect x="461" y="133" width="2" height="1" fill="#c4682e"/><rect x="465" y="131" width="2" height="3" fill="#c4682e"/><rect x="471" y="132" width="2" height="2" fill="#b65c2a"/><rect x="473" y="132" width="2" height="2" fill="#b65c2a"/><rect x="475" y="132" width="2" height="2" fill="#b65c2a"/><rect x="477" y="133" width="2" height="1" fill="#b65c2a"/><rect x="481" y="132" width="2" height="2" fill="#c4682e"/><rect x="485" y="132" width="2" height="2" fill="#c4682e"/><rect x="495" y="131" width="2" height="3" fill="#c4682e"/><rect x="497" y="132" width="2" height="2" fill="#b65c2a"/><rect x="499" y="131" width="2" height="3" fill="#b65c2a"/><rect x="501" y="131" width="2" height="3" fill="#c4682e"/><rect x="503" y="132" width="2" height="2" fill="#c4682e"/><rect x="507" y="133" width="2" height="1" fill="#c4682e"/><rect x="509" y="132" width="2" height="2" fill="#b65c2a"/><rect x="513" y="132" width="2" height="2" fill="#c4682e"/><rect x="515" y="132" width="2" height="2" fill="#c4682e"/><rect x="519" y="133" width="2" height="1" fill="#b65c2a"/><rect x="521" y="133" width="2" height="1" fill="#c4682e"/><rect x="527" y="133" width="2" height="1" fill="#c4682e"/><rect x="529" y="132" width="2" height="2" fill="#c4682e"/><rect x="533" y="132" width="2" height="2" fill="#b65c2a"/><rect x="535" y="131" width="2" height="3" fill="#b65c2a"/><rect x="537" y="133" width="2" height="1" fill="#c4682e"/><rect x="543" y="132" width="2" height="2" fill="#b65c2a"/><rect x="545" y="133" width="2" height="1" fill="#b65c2a"/><rect x="551" y="131" width="2" height="3" fill="#c4682e"/><rect x="557" y="132" width="2" height="2" fill="#c4682e"/><rect x="563" y="131" width="2" height="3" fill="#c4682e"/><rect x="565" y="132" width="2" height="2" fill="#b65c2a"/><rect x="567" y="132" width="2" height="2" fill="#b65c2a"/><rect x="569" y="133" width="2" height="1" fill="#b65c2a"/><rect x="573" y="132" width="2" height="2" fill="#c4682e"/><rect x="575" y="132" width="2" height="2" fill="#b65c2a"/><rect x="577" y="133" width="2" height="1" fill="#b65c2a"/><rect x="579" y="132" width="2" height="2" fill="#b65c2a"/><rect x="589" y="133" width="2" height="1" fill="#b65c2a"/><rect x="591" y="131" width="2" height="3" fill="#c4682e"/><rect x="595" y="132" width="2" height="2" fill="#c4682e"/><rect x="601" y="133" width="2" height="1" fill="#b65c2a"/><rect x="603" y="132" width="2" height="2" fill="#c4682e"/><rect x="605" y="132" width="2" height="2" fill="#c4682e"/><rect x="607" y="131" width="2" height="3" fill="#c4682e"/><rect x="609" y="132" width="2" height="2" fill="#b65c2a"/><rect x="617" y="133" width="2" height="1" fill="#c4682e"/><rect x="621" y="131" width="2" height="3" fill="#c4682e"/><rect x="633" y="131" width="2" height="3" fill="#b65c2a"/><rect x="643" y="131" width="2" height="3" fill="#b65c2a"/><rect x="649" y="133" width="2" height="1" fill="#b65c2a"/><rect x="655" y="132" width="2" height="2" fill="#c4682e"/><rect x="657" y="132" width="2" height="2" fill="#c4682e"/><rect x="475" y="134" width="2" height="2" fill="#c4682e"/><rect x="481" y="134" width="2" height="2" fill="#c4682e"/><rect x="483" y="134" width="2" height="2" fill="#a85228"/><rect x="491" y="134" width="2" height="2" fill="#a85228"/><rect x="593" y="134" width="2" height="2" fill="#a85228"/><rect x="597" y="134" width="2" height="2" fill="#a85228"/><rect x="619" y="134" width="2" height="2" fill="#c4682e"/><rect x="635" y="134" width="2" height="2" fill="#c4682e"/><rect x="643" y="134" width="2" height="2" fill="#c4682e"/><rect x="657" y="134" width="2" height="2" fill="#a85228"/><rect x="469" y="136" width="2" height="2" fill="#c4682e"/><rect x="471" y="136" width="2" height="2" fill="#c4682e"/><rect x="473" y="136" width="2" height="2" fill="#a85228"/><rect x="477" y="136" width="2" height="2" fill="#a85228"/><rect x="479" y="136" width="2" height="2" fill="#c4682e"/><rect x="483" y="136" width="2" height="2" fill="#a85228"/><rect x="487" y="136" width="2" height="2" fill="#c4682e"/><rect x="503" y="136" width="2" height="2" fill="#a85228"/><rect x="519" y="136" width="2" height="2" fill="#a85228"/><rect x="541" y="136" width="2" height="2" fill="#c4682e"/><rect x="545" y="136" width="2" height="2" fill="#c4682e"/><rect x="549" y="136" width="2" height="2" fill="#c4682e"/><rect x="557" y="136" width="2" height="2" fill="#c4682e"/><rect x="569" y="136" width="2" height="2" fill="#a85228"/><rect x="597" y="136" width="2" height="2" fill="#a85228"/><rect x="599" y="136" width="2" height="2" fill="#a85228"/><rect x="619" y="136" width="2" height="2" fill="#a85228"/><rect x="643" y="136" width="2" height="2" fill="#a85228"/><rect x="647" y="136" width="2" height="2" fill="#c4682e"/><rect x="463" y="138" width="2" height="2" fill="#c4682e"/><rect x="469" y="138" width="2" height="2" fill="#a85228"/><rect x="495" y="138" width="2" height="2" fill="#a85228"/><rect x="497" y="138" width="2" height="2" fill="#c4682e"/><rect x="589" y="138" width="2" height="2" fill="#c4682e"/><rect x="603" y="138" width="2" height="2" fill="#a85228"/><rect x="607" y="138" width="2" height="2" fill="#a85228"/><rect x="613" y="138" width="2" height="2" fill="#a85228"/><rect x="621" y="138" width="2" height="2" fill="#a85228"/><rect x="629" y="138" width="2" height="2" fill="#a85228"/><rect x="457" y="139" width="210" height="21" fill="rgba(35,110,165,0.6)" fill-opacity="0.18"/><rect x="457" y="139" width="2" height="21" fill="rgba(35,110,165,0.6)"/><rect x="661" y="139" width="6" height="21" fill="rgba(35,110,165,0.6)"/></svg>
<svg style="left:355px;top:324px;" width="218" height="44" viewBox="355 324 218 44"><rect x="367" y="356" width="3" height="3" fill="#38323e"/><rect x="370" y="356" width="3" height="4" fill="#38323e"/><rect x="373" y="356" width="4" height="7" fill="#38323e"/><rect x="377" y="356" width="5" height="6" fill="#38323e"/><rect x="382" y="356" width="4" height="7" fill="#38323e"/><rect x="386" y="356" width="4" height="7" fill="#38323e"/><rect x="390" y="356" width="2" height="2" fill="#38323e"/><rect x="392" y="356" width="2" height="5" fill="#38323e"/><rect x="394" y="356" width="2" height="9" fill="#38323e"/><rect x="396" y="356" width="3" height="6" fill="#38323e"/><rect x="399" y="356" width="4" height="6" fill="#38323e"/><rect x="403" y="356" width="5" height="4" fill="#38323e"/><rect x="408" y="356" width="2" height="9" fill="#38323e"/><rect x="410" y="356" width="3" height="9" fill="#38323e"/><rect x="415" y="356" width="2" height="2" fill="#38323e"/><rect x="417" y="356" width="3" height="9" fill="#38323e"/><rect x="420" y="356" width="2" height="7" fill="#38323e"/><rect x="422" y="356" width="5" height="4" fill="#38323e"/><rect x="427" y="356" width="4" height="2" fill="#38323e"/><rect x="431" y="356" width="5" height="3" fill="#38323e"/><rect x="436" y="356" width="4" height="9" fill="#38323e"/><rect x="440" y="356" width="5" height="2" fill="#38323e"/><rect x="455" y="356" width="5" height="2" fill="#38323e"/><rect x="460" y="356" width="4" height="9" fill="#38323e"/><rect x="464" y="356" width="2" height="6" fill="#38323e"/><rect x="466" y="356" width="5" height="2" fill="#38323e"/><rect x="471" y="356" width="5" height="5" fill="#38323e"/><rect x="476" y="356" width="3" height="9" fill="#38323e"/><rect x="479" y="356" width="5" height="4" fill="#38323e"/><rect x="484" y="356" width="2" height="6" fill="#38323e"/><rect x="486" y="356" width="5" height="5" fill="#38323e"/><rect x="491" y="356" width="5" height="4" fill="#38323e"/><rect x="496" y="356" width="4" height="5" fill="#38323e"/><rect x="500" y="356" width="4" height="9" fill="#38323e"/><rect x="504" y="356" width="3" height="7" fill="#38323e"/><rect x="507" y="356" width="3" height="2" fill="#38323e"/><rect x="510" y="356" width="4" height="9" fill="#38323e"/><rect x="514" y="356" width="2" height="3" fill="#38323e"/><rect x="516" y="356" width="5" height="2" fill="#38323e"/><rect x="521" y="356" width="4" height="9" fill="#38323e"/><rect x="525" y="356" width="5" height="9" fill="#38323e"/><rect x="535" y="356" width="4" height="3" fill="#38323e"/><rect x="539" y="356" width="5" height="7" fill="#38323e"/><rect x="544" y="356" width="5" height="6" fill="#38323e"/><rect x="549" y="356" width="4" height="7" fill="#38323e"/><rect x="553" y="356" width="4" height="9" fill="#38323e"/><rect x="557" y="356" width="5" height="6" fill="#38323e"/><rect x="365" y="356" width="196" height="2" fill="#38323e"/><rect x="363" y="336" width="202" height="21" fill="#5a7a6a"/><rect x="365" y="338" width="2" height="2" fill="#527466"/><rect x="371" y="338" width="2" height="2" fill="#648272"/><rect x="373" y="338" width="2" height="2" fill="#527466"/><rect x="381" y="338" width="2" height="2" fill="#527466"/><rect x="387" y="338" width="2" height="2" fill="#527466"/><rect x="413" y="338" width="2" height="2" fill="#648272"/><rect x="437" y="338" width="2" height="2" fill="#648272"/><rect x="441" y="338" width="2" height="2" fill="#648272"/><rect x="455" y="338" width="2" height="2" fill="#648272"/><rect x="479" y="338" width="2" height="2" fill="#648272"/><rect x="481" y="338" width="2" height="2" fill="#648272"/><rect x="485" y="338" width="2" height="2" fill="#648272"/><rect x="487" y="338" width="2" height="2" fill="#648272"/><rect x="489" y="338" width="2" height="2" fill="#527466"/><rect x="495" y="338" width="2" height="2" fill="#527466"/><rect x="501" y="338" width="2" height="2" fill="#648272"/><rect x="503" y="338" width="2" height="2" fill="#648272"/><rect x="513" y="338" width="2" height="2" fill="#527466"/><rect x="515" y="338" width="2" height="2" fill="#648272"/><rect x="531" y="338" width="2" height="2" fill="#527466"/><rect x="539" y="338" width="2" height="2" fill="#648272"/><rect x="553" y="338" width="2" height="2" fill="#527466"/><rect x="563" y="338" width="2" height="2" fill="#527466"/><rect x="381" y="340" width="2" height="2" fill="#648272"/><rect x="387" y="340" width="2" height="2" fill="#527466"/><rect x="395" y="340" width="2" height="2" fill="#648272"/><rect x="417" y="340" width="2" height="2" fill="#648272"/><rect x="433" y="340" width="2" height="2" fill="#527466"/><rect x="437" y="340" width="2" height="2" fill="#527466"/><rect x="441" y="340" width="2" height="2" fill="#527466"/><rect x="469" y="340" width="2" height="2" fill="#527466"/><rect x="475" y="340" width="2" height="2" fill="#527466"/><rect x="497" y="340" width="2" height="2" fill="#527466"/><rect x="501" y="340" width="2" height="2" fill="#648272"/><rect x="515" y="340" width="2" height="2" fill="#527466"/><rect x="519" y="340" width="2" height="2" fill="#648272"/><rect x="523" y="340" width="2" height="2" fill="#527466"/><rect x="525" y="340" width="2" height="2" fill="#648272"/><rect x="529" y="340" width="2" height="2" fill="#527466"/><rect x="531" y="340" width="2" height="2" fill="#648272"/><rect x="533" y="340" width="2" height="2" fill="#527466"/><rect x="555" y="340" width="2" height="2" fill="#648272"/><rect x="557" y="340" width="2" height="2" fill="#527466"/><rect x="371" y="342" width="2" height="2" fill="#527466"/><rect x="391" y="342" width="2" height="2" fill="#527466"/><rect x="395" y="342" width="2" height="2" fill="#527466"/><rect x="405" y="342" width="2" height="2" fill="#648272"/><rect x="411" y="342" width="2" height="2" fill="#527466"/><rect x="417" y="342" width="2" height="2" fill="#648272"/><rect x="419" y="342" width="2" height="2" fill="#527466"/><rect x="425" y="342" width="2" height="2" fill="#648272"/><rect x="427" y="342" width="2" height="2" fill="#648272"/><rect x="449" y="342" width="2" height="2" fill="#527466"/><rect x="455" y="342" width="2" height="2" fill="#648272"/><rect x="461" y="342" width="2" height="2" fill="#648272"/><rect x="477" y="342" width="2" height="2" fill="#648272"/><rect x="479" y="342" width="2" height="2" fill="#648272"/><rect x="503" y="342" width="2" height="2" fill="#648272"/><rect x="523" y="342" width="2" height="2" fill="#527466"/><rect x="527" y="342" width="2" height="2" fill="#527466"/><rect x="395" y="344" width="2" height="2" fill="#527466"/><rect x="401" y="344" width="2" height="2" fill="#527466"/><rect x="403" y="344" width="2" height="2" fill="#648272"/><rect x="405" y="344" width="2" height="2" fill="#648272"/><rect x="419" y="344" width="2" height="2" fill="#527466"/><rect x="425" y="344" width="2" height="2" fill="#527466"/><rect x="439" y="344" width="2" height="2" fill="#648272"/><rect x="441" y="344" width="2" height="2" fill="#527466"/><rect x="459" y="344" width="2" height="2" fill="#527466"/><rect x="463" y="344" width="2" height="2" fill="#527466"/><rect x="465" y="344" width="2" height="2" fill="#527466"/><rect x="469" y="344" width="2" height="2" fill="#527466"/><rect x="471" y="344" width="2" height="2" fill="#527466"/><rect x="485" y="344" width="2" height="2" fill="#648272"/><rect x="489" y="344" width="2" height="2" fill="#648272"/><rect x="505" y="344" width="2" height="2" fill="#527466"/><rect x="517" y="344" width="2" height="2" fill="#648272"/><rect x="523" y="344" width="2" height="2" fill="#527466"/><rect x="525" y="344" width="2" height="2" fill="#648272"/><rect x="531" y="344" width="2" height="2" fill="#527466"/><rect x="533" y="344" width="2" height="2" fill="#527466"/><rect x="537" y="344" width="2" height="2" fill="#527466"/><rect x="539" y="344" width="2" height="2" fill="#648272"/><rect x="545" y="344" width="2" height="2" fill="#527466"/><rect x="559" y="344" width="2" height="2" fill="#648272"/><rect x="561" y="344" width="2" height="2" fill="#527466"/><rect x="371" y="346" width="2" height="2" fill="#648272"/><rect x="381" y="346" width="2" height="2" fill="#648272"/><rect x="391" y="346" width="2" height="2" fill="#527466"/><rect x="403" y="346" width="2" height="2" fill="#648272"/><rect x="427" y="346" width="2" height="2" fill="#648272"/><rect x="463" y="346" width="2" height="2" fill="#648272"/><rect x="465" y="346" width="2" height="2" fill="#648272"/><rect x="471" y="346" width="2" height="2" fill="#527466"/><rect x="485" y="346" width="2" height="2" fill="#527466"/><rect x="489" y="346" width="2" height="2" fill="#527466"/><rect x="499" y="346" width="2" height="2" fill="#648272"/><rect x="501" y="346" width="2" height="2" fill="#527466"/><rect x="503" y="346" width="2" height="2" fill="#648272"/><rect x="513" y="346" width="2" height="2" fill="#527466"/><rect x="525" y="346" width="2" height="2" fill="#527466"/><rect x="531" y="346" width="2" height="2" fill="#648272"/><rect x="539" y="346" width="2" height="2" fill="#527466"/><rect x="547" y="346" width="2" height="2" fill="#527466"/><rect x="551" y="346" width="2" height="2" fill="#527466"/><rect x="363" y="347" width="202" height="10" fill="#3a7480"/><polygon points="363.0,357.0 363.0,351.0 365.0,351.0 365.0,351.0 367.0,351.0 367.0,346.0 369.0,346.0 369.0,351.0 371.0,351.0 371.0,346.0 373.0,346.0 373.0,351.0 375.0,351.0 375.0,351.0 377.0,351.0 377.0,349.0 379.0,349.0 379.0,351.0 381.0,351.0 381.0,349.0 383.0,349.0 383.0,350.0 385.0,350.0 385.0,348.0 387.0,348.0 387.0,349.0 389.0,349.0 389.0,349.0 391.0,349.0 391.0,348.0 393.0,348.0 393.0,346.0 395.0,346.0 395.0,351.0 397.0,351.0 397.0,348.0 399.0,348.0 399.0,346.0 401.0,346.0 401.0,349.0 403.0,349.0 403.0,351.0 405.0,351.0 405.0,350.0 407.0,350.0 407.0,346.0 409.0,346.0 409.0,348.0 411.0,348.0 411.0,349.0 413.0,349.0 413.0,351.0 415.0,351.0 415.0,350.0 417.0,350.0 417.0,351.0 419.0,351.0 419.0,346.0 421.0,346.0 421.0,351.0 423.0,351.0 423.0,348.0 425.0,348.0 425.0,346.0 427.0,346.0 427.0,349.0 429.0,349.0 429.0,348.0 431.0,348.0 431.0,351.0 433.0,351.0 433.0,351.0 435.0,351.0 435.0,346.0 437.0,346.0 437.0,351.0 439.0,351.0 439.0,349.0 441.0,349.0 441.0,351.0 443.0,351.0 443.0,346.0 445.0,346.0 445.0,346.0 447.0,346.0 447.0,349.0 449.0,349.0 449.0,351.0 451.0,351.0 451.0,346.0 453.0,346.0 453.0,348.0 455.0,348.0 455.0,346.0 457.0,346.0 457.0,349.0 459.0,349.0 459.0,349.0 461.0,349.0 461.0,349.0 463.0,349.0 463.0,351.0 465.0,351.0 465.0,346.0 467.0,346.0 467.0,346.0 469.0,346.0 469.0,351.0 471.0,351.0 471.0,351.0 473.0,351.0 473.0,350.0 475.0,350.0 475.0,351.0 477.0,351.0 477.0,346.0 479.0,346.0 479.0,349.0 481.0,349.0 481.0,351.0 483.0,351.0 483.0,346.0 485.0,346.0 485.0,351.0 487.0,351.0 487.0,351.0 489.0,351.0 489.0,351.0 491.0,351.0 491.0,349.0 493.0,349.0 493.0,348.0 495.0,348.0 495.0,346.0 497.0,346.0 497.0,350.0 499.0,350.0 499.0,351.0 501.0,351.0 501.0,346.0 503.0,346.0 503.0,346.0 505.0,346.0 505.0,351.0 507.0,351.0 507.0,348.0 509.0,348.0 509.0,348.0 511.0,348.0 511.0,350.0 513.0,350.0 513.0,348.0 515.0,348.0 515.0,348.0 517.0,348.0 517.0,346.0 519.0,346.0 519.0,351.0 521.0,351.0 521.0,350.0 523.0,350.0 523.0,351.0 525.0,351.0 525.0,350.0 527.0,350.0 527.0,351.0 529.0,351.0 529.0,349.0 531.0,349.0 531.0,350.0 533.0,350.0 533.0,346.0 535.0,346.0 535.0,351.0 537.0,351.0 537.0,350.0 539.0,350.0 539.0,346.0 541.0,346.0 541.0,350.0 543.0,350.0 543.0,348.0 545.0,348.0 545.0,346.0 547.0,346.0 547.0,346.0 549.0,346.0 549.0,346.0 551.0,346.0 551.0,346.0 553.0,346.0 553.0,351.0 555.0,351.0 555.0,346.0 557.0,346.0 557.0,349.0 559.0,349.0 559.0,348.0 561.0,348.0 561.0,349.0 563.0,349.0 563.0,346.0 565.0,346.0 565.0,357.0" fill="#2c7490"/><rect x="363" y="345" width="2" height="2" fill="#527466"/><rect x="367" y="345" width="2" height="2" fill="#648272"/><rect x="371" y="345" width="2" height="2" fill="#648272"/><rect x="377" y="345" width="2" height="2" fill="#527466"/><rect x="379" y="345" width="2" height="2" fill="#527466"/><rect x="385" y="345" width="2" height="2" fill="#527466"/><rect x="391" y="345" width="2" height="2" fill="#527466"/><rect x="397" y="345" width="2" height="2" fill="#527466"/><rect x="407" y="345" width="2" height="2" fill="#648272"/><rect x="413" y="345" width="2" height="2" fill="#648272"/><rect x="417" y="345" width="2" height="2" fill="#648272"/><rect x="419" y="345" width="2" height="2" fill="#648272"/><rect x="425" y="345" width="2" height="2" fill="#648272"/><rect x="435" y="345" width="2" height="2" fill="#5a7a6a"/><rect x="439" y="345" width="2" height="2" fill="#648272"/><rect x="445" y="345" width="2" height="2" fill="#527466"/><rect x="447" y="345" width="2" height="2" fill="#5a7a6a"/><rect x="455" y="345" width="2" height="2" fill="#527466"/><rect x="459" y="345" width="2" height="2" fill="#527466"/><rect x="461" y="345" width="2" height="2" fill="#5a7a6a"/><rect x="465" y="345" width="2" height="2" fill="#648272"/><rect x="467" y="345" width="2" height="2" fill="#5a7a6a"/><rect x="471" y="345" width="2" height="2" fill="#5a7a6a"/><rect x="475" y="345" width="2" height="2" fill="#5a7a6a"/><rect x="477" y="345" width="2" height="2" fill="#527466"/><rect x="483" y="345" width="2" height="2" fill="#5a7a6a"/><rect x="491" y="345" width="2" height="2" fill="#648272"/><rect x="497" y="345" width="2" height="2" fill="#648272"/><rect x="499" y="345" width="2" height="2" fill="#5a7a6a"/><rect x="503" y="345" width="2" height="2" fill="#5a7a6a"/><rect x="505" y="345" width="2" height="2" fill="#5a7a6a"/><rect x="513" y="345" width="2" height="2" fill="#527466"/><rect x="521" y="345" width="2" height="2" fill="#527466"/><rect x="523" y="345" width="2" height="2" fill="#648272"/><rect x="531" y="345" width="2" height="2" fill="#527466"/><rect x="545" y="345" width="2" height="2" fill="#5a7a6a"/><rect x="551" y="345" width="2" height="2" fill="#527466"/><rect x="555" y="345" width="2" height="2" fill="#527466"/><rect x="559" y="345" width="2" height="2" fill="#5a7a6a"/><rect x="365" y="347" width="2" height="2" fill="#5a7a6a"/><rect x="373" y="347" width="2" height="2" fill="#5a7a6a"/><rect x="377" y="347" width="2" height="2" fill="#5a7a6a"/><rect x="381" y="347" width="2" height="2" fill="#648272"/><rect x="393" y="347" width="2" height="2" fill="#648272"/><rect x="399" y="347" width="2" height="2" fill="#527466"/><rect x="403" y="347" width="2" height="2" fill="#648272"/><rect x="415" y="347" width="2" height="2" fill="#527466"/><rect x="427" y="347" width="2" height="2" fill="#5a7a6a"/><rect x="433" y="347" width="2" height="2" fill="#648272"/><rect x="439" y="347" width="2" height="2" fill="#648272"/><rect x="441" y="347" width="2" height="2" fill="#648272"/><rect x="443" y="347" width="2" height="2" fill="#527466"/><rect x="447" y="347" width="2" height="2" fill="#527466"/><rect x="451" y="347" width="2" height="2" fill="#648272"/><rect x="455" y="347" width="2" height="2" fill="#527466"/><rect x="457" y="347" width="2" height="2" fill="#527466"/><rect x="459" y="347" width="2" height="2" fill="#527466"/><rect x="467" y="347" width="2" height="2" fill="#527466"/><rect x="473" y="347" width="2" height="2" fill="#648272"/><rect x="483" y="347" width="2" height="2" fill="#527466"/><rect x="487" y="347" width="2" height="2" fill="#527466"/><rect x="493" y="347" width="2" height="2" fill="#527466"/><rect x="495" y="347" width="2" height="2" fill="#648272"/><rect x="497" y="347" width="2" height="2" fill="#527466"/><rect x="499" y="347" width="2" height="2" fill="#648272"/><rect x="501" y="347" width="2" height="2" fill="#5a7a6a"/><rect x="519" y="347" width="2" height="2" fill="#527466"/><rect x="521" y="347" width="2" height="2" fill="#527466"/><rect x="527" y="347" width="2" height="2" fill="#648272"/><rect x="529" y="347" width="2" height="2" fill="#527466"/><rect x="531" y="347" width="2" height="2" fill="#648272"/><rect x="541" y="347" width="2" height="2" fill="#648272"/><rect x="543" y="347" width="2" height="2" fill="#5a7a6a"/><rect x="547" y="347" width="2" height="2" fill="#648272"/><rect x="563" y="347" width="2" height="2" fill="#648272"/><rect x="363" y="349" width="2" height="2" fill="#527466"/><rect x="365" y="349" width="2" height="2" fill="#648272"/><rect x="367" y="349" width="2" height="2" fill="#648272"/><rect x="369" y="349" width="2" height="2" fill="#5a7a6a"/><rect x="371" y="349" width="2" height="2" fill="#648272"/><rect x="381" y="349" width="2" height="2" fill="#648272"/><rect x="385" y="349" width="2" height="2" fill="#648272"/><rect x="387" y="349" width="2" height="2" fill="#648272"/><rect x="393" y="349" width="2" height="2" fill="#5a7a6a"/><rect x="401" y="349" width="2" height="2" fill="#527466"/><rect x="403" y="349" width="2" height="2" fill="#527466"/><rect x="405" y="349" width="2" height="2" fill="#527466"/><rect x="413" y="349" width="2" height="2" fill="#527466"/><rect x="425" y="349" width="2" height="2" fill="#527466"/><rect x="429" y="349" width="2" height="2" fill="#648272"/><rect x="433" y="349" width="2" height="2" fill="#5a7a6a"/><rect x="435" y="349" width="2" height="2" fill="#527466"/><rect x="437" y="349" width="2" height="2" fill="#527466"/><rect x="441" y="349" width="2" height="2" fill="#648272"/><rect x="451" y="349" width="2" height="2" fill="#648272"/><rect x="455" y="349" width="2" height="2" fill="#527466"/><rect x="461" y="349" width="2" height="2" fill="#5a7a6a"/><rect x="469" y="349" width="2" height="2" fill="#527466"/><rect x="471" y="349" width="2" height="2" fill="#648272"/><rect x="473" y="349" width="2" height="2" fill="#527466"/><rect x="475" y="349" width="2" height="2" fill="#648272"/><rect x="477" y="349" width="2" height="2" fill="#5a7a6a"/><rect x="481" y="349" width="2" height="2" fill="#5a7a6a"/><rect x="485" y="349" width="2" height="2" fill="#527466"/><rect x="491" y="349" width="2" height="2" fill="#527466"/><rect x="507" y="349" width="2" height="2" fill="#5a7a6a"/><rect x="521" y="349" width="2" height="2" fill="#527466"/><rect x="523" y="349" width="2" height="2" fill="#5a7a6a"/><rect x="533" y="349" width="2" height="2" fill="#527466"/><rect x="539" y="349" width="2" height="2" fill="#5a7a6a"/><rect x="547" y="349" width="2" height="2" fill="#648272"/><rect x="549" y="349" width="2" height="2" fill="#5a7a6a"/><rect x="557" y="349" width="2" height="2" fill="#648272"/><rect x="561" y="349" width="2" height="2" fill="#527466"/><rect x="365" y="351" width="2" height="2" fill="#2a7a92"/><rect x="385" y="351" width="2" height="2" fill="#2a7a92"/><rect x="397" y="351" width="2" height="2" fill="#2a7a92"/><rect x="405" y="351" width="2" height="2" fill="#307090"/><rect x="409" y="351" width="2" height="2" fill="#307090"/><rect x="421" y="351" width="2" height="2" fill="#307090"/><rect x="433" y="351" width="2" height="2" fill="#2a7a92"/><rect x="489" y="351" width="2" height="2" fill="#307090"/><rect x="497" y="351" width="2" height="2" fill="#2a7a92"/><rect x="507" y="351" width="2" height="2" fill="#2a7a92"/><rect x="517" y="351" width="2" height="2" fill="#2a7a92"/><rect x="533" y="351" width="2" height="2" fill="#307090"/><rect x="363" y="353" width="2" height="2" fill="#307090"/><rect x="377" y="353" width="2" height="2" fill="#307090"/><rect x="401" y="353" width="2" height="2" fill="#307090"/><rect x="411" y="353" width="2" height="2" fill="#307090"/><rect x="429" y="353" width="2" height="2" fill="#2a7a92"/><rect x="433" y="353" width="2" height="2" fill="#307090"/><rect x="443" y="353" width="2" height="2" fill="#2a7a92"/><rect x="475" y="353" width="2" height="2" fill="#307090"/><rect x="483" y="353" width="2" height="2" fill="#307090"/><rect x="489" y="353" width="2" height="2" fill="#2a7a92"/><rect x="521" y="353" width="2" height="2" fill="#307090"/><rect x="527" y="353" width="2" height="2" fill="#307090"/><rect x="535" y="353" width="2" height="2" fill="#2a7a92"/><rect x="551" y="353" width="2" height="2" fill="#2a7a92"/><rect x="559" y="353" width="2" height="2" fill="#2a7a92"/><rect x="561" y="353" width="2" height="2" fill="#307090"/><rect x="387" y="355" width="2" height="2" fill="#307090"/><rect x="405" y="355" width="2" height="2" fill="#2a7a92"/><rect x="415" y="355" width="2" height="2" fill="#307090"/><rect x="429" y="355" width="2" height="2" fill="#2a7a92"/><rect x="435" y="355" width="2" height="2" fill="#307090"/><rect x="459" y="355" width="2" height="2" fill="#307090"/><rect x="463" y="355" width="2" height="2" fill="#307090"/><rect x="479" y="355" width="2" height="2" fill="#307090"/><rect x="487" y="355" width="2" height="2" fill="#307090"/><rect x="491" y="355" width="2" height="2" fill="#307090"/><rect x="493" y="355" width="2" height="2" fill="#2a7a92"/><rect x="501" y="355" width="2" height="2" fill="#2a7a92"/><rect x="507" y="355" width="2" height="2" fill="#2a7a92"/><rect x="509" y="355" width="2" height="2" fill="#307090"/><rect x="533" y="355" width="2" height="2" fill="#2a7a92"/><rect x="543" y="355" width="2" height="2" fill="#2a7a92"/><rect x="545" y="355" width="2" height="2" fill="#2a7a92"/><rect x="549" y="355" width="2" height="2" fill="#2a7a92"/><rect x="553" y="355" width="2" height="2" fill="#307090"/><rect x="363" y="331" width="202" height="5" fill="#b65c2a"/><rect x="365" y="330" width="2" height="1" fill="#b65c2a"/><rect x="371" y="330" width="2" height="1" fill="#b65c2a"/><rect x="373" y="328" width="2" height="3" fill="#c4682e"/><rect x="379" y="330" width="2" height="1" fill="#c4682e"/><rect x="381" y="328" width="2" height="3" fill="#b65c2a"/><rect x="383" y="329" width="2" height="2" fill="#c4682e"/><rect x="389" y="328" width="2" height="3" fill="#b65c2a"/><rect x="393" y="330" width="2" height="1" fill="#b65c2a"/><rect x="395" y="329" width="2" height="2" fill="#c4682e"/><rect x="397" y="329" width="2" height="2" fill="#b65c2a"/><rect x="401" y="328" width="2" height="3" fill="#c4682e"/><rect x="405" y="329" width="2" height="2" fill="#c4682e"/><rect x="407" y="329" width="2" height="2" fill="#b65c2a"/><rect x="411" y="329" width="2" height="2" fill="#c4682e"/><rect x="415" y="329" width="2" height="2" fill="#b65c2a"/><rect x="417" y="329" width="2" height="2" fill="#b65c2a"/><rect x="419" y="329" width="2" height="2" fill="#b65c2a"/><rect x="421" y="328" width="2" height="3" fill="#c4682e"/><rect x="423" y="329" width="2" height="2" fill="#b65c2a"/><rect x="427" y="328" width="2" height="3" fill="#c4682e"/><rect x="429" y="330" width="2" height="1" fill="#b65c2a"/><rect x="431" y="330" width="2" height="1" fill="#b65c2a"/><rect x="433" y="328" width="2" height="3" fill="#c4682e"/><rect x="435" y="330" width="2" height="1" fill="#c4682e"/><rect x="439" y="329" width="2" height="2" fill="#b65c2a"/><rect x="445" y="329" width="2" height="2" fill="#b65c2a"/><rect x="447" y="329" width="2" height="2" fill="#b65c2a"/><rect x="449" y="328" width="2" height="3" fill="#b65c2a"/><rect x="451" y="329" width="2" height="2" fill="#b65c2a"/><rect x="453" y="329" width="2" height="2" fill="#b65c2a"/><rect x="455" y="328" width="2" height="3" fill="#c4682e"/><rect x="461" y="328" width="2" height="3" fill="#c4682e"/><rect x="467" y="329" width="2" height="2" fill="#b65c2a"/><rect x="469" y="330" width="2" height="1" fill="#b65c2a"/><rect x="473" y="328" width="2" height="3" fill="#c4682e"/><rect x="477" y="329" width="2" height="2" fill="#b65c2a"/><rect x="483" y="328" width="2" height="3" fill="#b65c2a"/><rect x="485" y="328" width="2" height="3" fill="#c4682e"/><rect x="487" y="329" width="2" height="2" fill="#c4682e"/><rect x="489" y="329" width="2" height="2" fill="#b65c2a"/><rect x="499" y="328" width="2" height="3" fill="#c4682e"/><rect x="507" y="329" width="2" height="2" fill="#c4682e"/><rect x="519" y="330" width="2" height="1" fill="#c4682e"/><rect x="525" y="328" width="2" height="3" fill="#c4682e"/><rect x="531" y="329" width="2" height="2" fill="#c4682e"/><rect x="535" y="329" width="2" height="2" fill="#b65c2a"/><rect x="537" y="330" width="2" height="1" fill="#b65c2a"/><rect x="545" y="330" width="2" height="1" fill="#c4682e"/><rect x="549" y="329" width="2" height="2" fill="#b65c2a"/><rect x="551" y="330" width="2" height="1" fill="#c4682e"/><rect x="555" y="329" width="2" height="2" fill="#c4682e"/><rect x="557" y="330" width="2" height="1" fill="#b65c2a"/><rect x="559" y="329" width="2" height="2" fill="#c4682e"/><rect x="561" y="330" width="2" height="1" fill="#b65c2a"/><rect x="381" y="331" width="2" height="2" fill="#a85228"/><rect x="397" y="331" width="2" height="2" fill="#c4682e"/><rect x="403" y="331" width="2" height="2" fill="#c4682e"/><rect x="411" y="331" width="2" height="2" fill="#c4682e"/><rect x="429" y="331" width="2" height="2" fill="#a85228"/><rect x="431" y="331" width="2" height="2" fill="#c4682e"/><rect x="435" y="331" width="2" height="2" fill="#a85228"/><rect x="449" y="331" width="2" height="2" fill="#c4682e"/><rect x="457" y="331" width="2" height="2" fill="#a85228"/><rect x="459" y="331" width="2" height="2" fill="#a85228"/><rect x="465" y="331" width="2" height="2" fill="#a85228"/><rect x="473" y="331" width="2" height="2" fill="#a85228"/><rect x="489" y="331" width="2" height="2" fill="#a85228"/><rect x="491" y="331" width="2" height="2" fill="#c4682e"/><rect x="503" y="331" width="2" height="2" fill="#c4682e"/><rect x="509" y="331" width="2" height="2" fill="#c4682e"/><rect x="511" y="331" width="2" height="2" fill="#c4682e"/><rect x="533" y="331" width="2" height="2" fill="#a85228"/><rect x="535" y="331" width="2" height="2" fill="#c4682e"/><rect x="541" y="331" width="2" height="2" fill="#c4682e"/><rect x="555" y="331" width="2" height="2" fill="#c4682e"/><rect x="561" y="331" width="2" height="2" fill="#a85228"/><rect x="367" y="333" width="2" height="2" fill="#a85228"/><rect x="391" y="333" width="2" height="2" fill="#a85228"/><rect x="413" y="333" width="2" height="2" fill="#c4682e"/><rect x="429" y="333" width="2" height="2" fill="#c4682e"/><rect x="435" y="333" width="2" height="2" fill="#c4682e"/><rect x="475" y="333" width="2" height="2" fill="#a85228"/><rect x="487" y="333" width="2" height="2" fill="#a85228"/><rect x="499" y="333" width="2" height="2" fill="#a85228"/><rect x="501" y="333" width="2" height="2" fill="#a85228"/><rect x="505" y="333" width="2" height="2" fill="#a85228"/><rect x="547" y="333" width="2" height="2" fill="#a85228"/><rect x="549" y="333" width="2" height="2" fill="#c4682e"/><rect x="551" y="333" width="2" height="2" fill="#a85228"/><rect x="557" y="333" width="2" height="2" fill="#c4682e"/><rect x="405" y="335" width="2" height="2" fill="#c4682e"/><rect x="411" y="335" width="2" height="2" fill="#c4682e"/><rect x="417" y="335" width="2" height="2" fill="#c4682e"/><rect x="431" y="335" width="2" height="2" fill="#a85228"/><rect x="439" y="335" width="2" height="2" fill="#c4682e"/><rect x="445" y="335" width="2" height="2" fill="#a85228"/><rect x="447" y="335" width="2" height="2" fill="#c4682e"/><rect x="453" y="335" width="2" height="2" fill="#c4682e"/><rect x="481" y="335" width="2" height="2" fill="#c4682e"/><rect x="487" y="335" width="2" height="2" fill="#c4682e"/><rect x="489" y="335" width="2" height="2" fill="#c4682e"/><rect x="497" y="335" width="2" height="2" fill="#c4682e"/><rect x="501" y="335" width="2" height="2" fill="#a85228"/><rect x="505" y="335" width="2" height="2" fill="#c4682e"/><rect x="507" y="335" width="2" height="2" fill="#a85228"/><rect x="515" y="335" width="2" height="2" fill="#c4682e"/><rect x="523" y="335" width="2" height="2" fill="#c4682e"/><rect x="547" y="335" width="2" height="2" fill="#a85228"/><rect x="551" y="335" width="2" height="2" fill="#c4682e"/><rect x="553" y="335" width="2" height="2" fill="#a85228"/><rect x="361" y="336" width="210" height="21" fill="rgba(30,165,195,0.55)" fill-opacity="0.18"/><rect x="361" y="336" width="2" height="21" fill="rgba(30,165,195,0.55)"/><rect x="565" y="336" width="6" height="21" fill="rgba(30,165,195,0.55)"/></svg>
<svg style="left:608px;top:352px;" width="218" height="44" viewBox="608 352 218 44"><rect x="620" y="384" width="5" height="3" fill="#38323e"/><rect x="625" y="384" width="3" height="6" fill="#38323e"/><rect x="628" y="384" width="4" height="6" fill="#38323e"/><rect x="632" y="384" width="2" height="9" fill="#38323e"/><rect x="634" y="384" width="4" height="6" fill="#38323e"/><rect x="638" y="384" width="2" height="7" fill="#38323e"/><rect x="640" y="384" width="5" height="6" fill="#38323e"/><rect x="645" y="384" width="3" height="6" fill="#38323e"/><rect x="648" y="384" width="2" height="2" fill="#38323e"/><rect x="650" y="384" width="3" height="6" fill="#38323e"/><rect x="653" y="384" width="2" height="7" fill="#38323e"/><rect x="655" y="384" width="3" height="3" fill="#38323e"/><rect x="658" y="384" width="5" height="5" fill="#38323e"/><rect x="663" y="384" width="4" height="6" fill="#38323e"/><rect x="667" y="384" width="5" height="6" fill="#38323e"/><rect x="672" y="384" width="4" height="3" fill="#38323e"/><rect x="676" y="384" width="4" height="7" fill="#38323e"/><rect x="680" y="384" width="5" height="4" fill="#38323e"/><rect x="685" y="384" width="3" height="3" fill="#38323e"/><rect x="688" y="384" width="2" height="6" fill="#38323e"/><rect x="695" y="384" width="5" height="2" fill="#38323e"/><rect x="704" y="384" width="5" height="3" fill="#38323e"/><rect x="709" y="384" width="2" height="9" fill="#38323e"/><rect x="711" y="384" width="4" height="2" fill="#38323e"/><rect x="715" y="384" width="5" height="4" fill="#38323e"/><rect x="720" y="384" width="2" height="6" fill="#38323e"/><rect x="726" y="384" width="5" height="5" fill="#38323e"/><rect x="731" y="384" width="5" height="7" fill="#38323e"/><rect x="736" y="384" width="3" height="3" fill="#38323e"/><rect x="739" y="384" width="2" height="7" fill="#38323e"/><rect x="741" y="384" width="5" height="2" fill="#38323e"/><rect x="746" y="384" width="4" height="9" fill="#38323e"/><rect x="755" y="384" width="4" height="4" fill="#38323e"/><rect x="759" y="384" width="4" height="3" fill="#38323e"/><rect x="763" y="384" width="5" height="9" fill="#38323e"/><rect x="768" y="384" width="2" height="2" fill="#38323e"/><rect x="770" y="384" width="3" height="3" fill="#38323e"/><rect x="775" y="384" width="5" height="4" fill="#38323e"/><rect x="780" y="384" width="3" height="5" fill="#38323e"/><rect x="783" y="384" width="5" height="7" fill="#38323e"/><rect x="788" y="384" width="4" height="9" fill="#38323e"/><rect x="792" y="384" width="2" height="5" fill="#38323e"/><rect x="794" y="384" width="3" height="3" fill="#38323e"/><rect x="797" y="384" width="2" height="3" fill="#38323e"/><rect x="799" y="384" width="5" height="9" fill="#38323e"/><rect x="804" y="384" width="3" height="6" fill="#38323e"/><rect x="807" y="384" width="3" height="5" fill="#38323e"/><rect x="810" y="384" width="2" height="3" fill="#38323e"/><rect x="618" y="384" width="196" height="2" fill="#38323e"/><rect x="616" y="364" width="202" height="21" fill="#5a7a6a"/><rect x="618" y="366" width="2" height="2" fill="#648272"/><rect x="626" y="366" width="2" height="2" fill="#648272"/><rect x="628" y="366" width="2" height="2" fill="#527466"/><rect x="632" y="366" width="2" height="2" fill="#648272"/><rect x="634" y="366" width="2" height="2" fill="#527466"/><rect x="644" y="366" width="2" height="2" fill="#648272"/><rect x="652" y="366" width="2" height="2" fill="#527466"/><rect x="674" y="366" width="2" height="2" fill="#648272"/><rect x="680" y="366" width="2" height="2" fill="#648272"/><rect x="682" y="366" width="2" height="2" fill="#527466"/><rect x="696" y="366" width="2" height="2" fill="#648272"/><rect x="712" y="366" width="2" height="2" fill="#648272"/><rect x="732" y="366" width="2" height="2" fill="#527466"/><rect x="752" y="366" width="2" height="2" fill="#527466"/><rect x="760" y="366" width="2" height="2" fill="#648272"/><rect x="770" y="366" width="2" height="2" fill="#648272"/><rect x="774" y="366" width="2" height="2" fill="#527466"/><rect x="782" y="366" width="2" height="2" fill="#527466"/><rect x="784" y="366" width="2" height="2" fill="#527466"/><rect x="808" y="366" width="2" height="2" fill="#527466"/><rect x="814" y="366" width="2" height="2" fill="#527466"/><rect x="816" y="366" width="2" height="2" fill="#648272"/><rect x="628" y="368" width="2" height="2" fill="#527466"/><rect x="654" y="368" width="2" height="2" fill="#648272"/><rect x="658" y="368" width="2" height="2" fill="#527466"/><rect x="680" y="368" width="2" height="2" fill="#527466"/><rect x="688" y="368" width="2" height="2" fill="#648272"/><rect x="692" y="368" width="2" height="2" fill="#527466"/><rect x="700" y="368" width="2" height="2" fill="#527466"/><rect x="732" y="368" width="2" height="2" fill="#527466"/><rect x="738" y="368" width="2" height="2" fill="#648272"/><rect x="740" y="368" width="2" height="2" fill="#648272"/><rect x="742" y="368" width="2" height="2" fill="#648272"/><rect x="744" y="368" width="2" height="2" fill="#648272"/><rect x="772" y="368" width="2" height="2" fill="#527466"/><rect x="776" y="368" width="2" height="2" fill="#648272"/><rect x="780" y="368" width="2" height="2" fill="#527466"/><rect x="808" y="368" width="2" height="2" fill="#527466"/><rect x="636" y="370" width="2" height="2" fill="#527466"/><rect x="642" y="370" width="2" height="2" fill="#648272"/><rect x="662" y="370" width="2" height="2" fill="#527466"/><rect x="688" y="370" width="2" height="2" fill="#648272"/><rect x="694" y="370" width="2" height="2" fill="#648272"/><rect x="700" y="370" width="2" height="2" fill="#527466"/><rect x="714" y="370" width="2" height="2" fill="#527466"/><rect x="760" y="370" width="2" height="2" fill="#527466"/><rect x="764" y="370" width="2" height="2" fill="#527466"/><rect x="780" y="370" width="2" height="2" fill="#648272"/><rect x="790" y="370" width="2" height="2" fill="#527466"/><rect x="792" y="370" width="2" height="2" fill="#648272"/><rect x="798" y="370" width="2" height="2" fill="#648272"/><rect x="800" y="370" width="2" height="2" fill="#648272"/><rect x="806" y="370" width="2" height="2" fill="#527466"/><rect x="816" y="370" width="2" height="2" fill="#527466"/><rect x="628" y="372" width="2" height="2" fill="#648272"/><rect x="630" y="372" width="2" height="2" fill="#527466"/><rect x="634" y="372" width="2" height="2" fill="#527466"/><rect x="642" y="372" width="2" height="2" fill="#648272"/><rect x="650" y="372" width="2" height="2" fill="#527466"/><rect x="664" y="372" width="2" height="2" fill="#648272"/><rect x="666" y="372" width="2" height="2" fill="#527466"/><rect x="684" y="372" width="2" height="2" fill="#527466"/><rect x="688" y="372" width="2" height="2" fill="#648272"/><rect x="700" y="372" width="2" height="2" fill="#648272"/><rect x="722" y="372" width="2" height="2" fill="#527466"/><rect x="734" y="372" width="2" height="2" fill="#648272"/><rect x="736" y="372" width="2" height="2" fill="#527466"/><rect x="738" y="372" width="2" height="2" fill="#648272"/><rect x="758" y="372" width="2" height="2" fill="#648272"/><rect x="760" y="372" width="2" height="2" fill="#527466"/><rect x="768" y="372" width="2" height="2" fill="#648272"/><rect x="792" y="372" width="2" height="2" fill="#527466"/><rect x="798" y="372" width="2" height="2" fill="#527466"/><rect x="800" y="372" width="2" height="2" fill="#527466"/><rect x="806" y="372" width="2" height="2" fill="#648272"/><rect x="814" y="372" width="2" height="2" fill="#527466"/><rect x="626" y="374" width="2" height="2" fill="#648272"/><rect x="640" y="374" width="2" height="2" fill="#648272"/><rect x="644" y="374" width="2" height="2" fill="#648272"/><rect x="646" y="374" width="2" height="2" fill="#527466"/><rect x="654" y="374" width="2" height="2" fill="#527466"/><rect x="662" y="374" width="2" height="2" fill="#648272"/><rect x="676" y="374" width="2" height="2" fill="#648272"/><rect x="684" y="374" width="2" height="2" fill="#648272"/><rect x="688" y="374" width="2" height="2" fill="#648272"/><rect x="722" y="374" width="2" height="2" fill="#527466"/><rect x="730" y="374" width="2" height="2" fill="#648272"/><rect x="740" y="374" width="2" height="2" fill="#648272"/><rect x="758" y="374" width="2" height="2" fill="#648272"/><rect x="762" y="374" width="2" height="2" fill="#527466"/><rect x="766" y="374" width="2" height="2" fill="#648272"/><rect x="786" y="374" width="2" height="2" fill="#527466"/><rect x="802" y="374" width="2" height="2" fill="#527466"/><rect x="616" y="375" width="202" height="10" fill="#3a7480"/><polygon points="616.0,385.0 616.0,376.0 618.0,376.0 618.0,379.0 620.0,379.0 620.0,378.0 622.0,378.0 622.0,378.0 624.0,378.0 624.0,377.0 626.0,377.0 626.0,376.0 628.0,376.0 628.0,379.0 630.0,379.0 630.0,379.0 632.0,379.0 632.0,377.0 634.0,377.0 634.0,376.0 636.0,376.0 636.0,378.0 638.0,378.0 638.0,379.0 640.0,379.0 640.0,379.0 642.0,379.0 642.0,379.0 644.0,379.0 644.0,379.0 646.0,379.0 646.0,374.0 648.0,374.0 648.0,376.0 650.0,376.0 650.0,377.0 652.0,377.0 652.0,378.0 654.0,378.0 654.0,376.0 656.0,376.0 656.0,379.0 658.0,379.0 658.0,379.0 660.0,379.0 660.0,379.0 662.0,379.0 662.0,377.0 664.0,377.0 664.0,379.0 666.0,379.0 666.0,379.0 668.0,379.0 668.0,374.0 670.0,374.0 670.0,378.0 672.0,378.0 672.0,376.0 674.0,376.0 674.0,376.0 676.0,376.0 676.0,379.0 678.0,379.0 678.0,379.0 680.0,379.0 680.0,379.0 682.0,379.0 682.0,377.0 684.0,377.0 684.0,374.0 686.0,374.0 686.0,379.0 688.0,379.0 688.0,378.0 690.0,378.0 690.0,379.0 692.0,379.0 692.0,376.0 694.0,376.0 694.0,379.0 696.0,379.0 696.0,374.0 698.0,374.0 698.0,374.0 700.0,374.0 700.0,376.0 702.0,376.0 702.0,376.0 704.0,376.0 704.0,377.0 706.0,377.0 706.0,374.0 708.0,374.0 708.0,379.0 710.0,379.0 710.0,379.0 712.0,379.0 712.0,379.0 714.0,379.0 714.0,379.0 716.0,379.0 716.0,376.0 718.0,376.0 718.0,374.0 720.0,374.0 720.0,376.0 722.0,376.0 722.0,379.0 724.0,379.0 724.0,378.0 726.0,378.0 726.0,379.0 728.0,379.0 728.0,379.0 730.0,379.0 730.0,378.0 732.0,378.0 732.0,379.0 734.0,379.0 734.0,379.0 736.0,379.0 736.0,379.0 738.0,379.0 738.0,374.0 740.0,374.0 740.0,379.0 742.0,379.0 742.0,374.0 744.0,374.0 744.0,376.0 746.0,376.0 746.0,379.0 748.0,379.0 748.0,378.0 750.0,378.0 750.0,379.0 752.0,379.0 752.0,379.0 754.0,379.0 754.0,377.0 756.0,377.0 756.0,378.0 758.0,378.0 758.0,376.0 760.0,376.0 760.0,374.0 762.0,374.0 762.0,379.0 764.0,379.0 764.0,376.0 766.0,376.0 766.0,374.0 768.0,374.0 768.0,377.0 770.0,377.0 770.0,374.0 772.0,374.0 772.0,379.0 774.0,379.0 774.0,376.0 776.0,376.0 776.0,378.0 778.0,378.0 778.0,379.0 780.0,379.0 780.0,379.0 782.0,379.0 782.0,379.0 784.0,379.0 784.0,379.0 786.0,379.0 786.0,376.0 788.0,376.0 788.0,374.0 790.0,374.0 790.0,379.0 792.0,379.0 792.0,378.0 794.0,378.0 794.0,377.0 796.0,377.0 796.0,376.0 798.0,376.0 798.0,378.0 800.0,378.0 800.0,379.0 802.0,379.0 802.0,379.0 804.0,379.0 804.0,374.0 806.0,374.0 806.0,374.0 808.0,374.0 808.0,379.0 810.0,379.0 810.0,379.0 812.0,379.0 812.0,377.0 814.0,377.0 814.0,374.0 816.0,374.0 816.0,377.0 818.0,377.0 818.0,385.0" fill="#2c7490"/><rect x="616" y="373" width="2" height="2" fill="#648272"/><rect x="630" y="373" width="2" height="2" fill="#5a7a6a"/><rect x="634" y="373" width="2" height="2" fill="#5a7a6a"/><rect x="638" y="373" width="2" height="2" fill="#5a7a6a"/><rect x="642" y="373" width="2" height="2" fill="#527466"/><rect x="646" y="373" width="2" height="2" fill="#527466"/><rect x="666" y="373" width="2" height="2" fill="#527466"/><rect x="672" y="373" width="2" height="2" fill="#648272"/><rect x="674" y="373" width="2" height="2" fill="#527466"/><rect x="678" y="373" width="2" height="2" fill="#648272"/><rect x="680" y="373" width="2" height="2" fill="#5a7a6a"/><rect x="682" y="373" width="2" height="2" fill="#5a7a6a"/><rect x="694" y="373" width="2" height="2" fill="#527466"/><rect x="702" y="373" width="2" height="2" fill="#527466"/><rect x="712" y="373" width="2" height="2" fill="#648272"/><rect x="722" y="373" width="2" height="2" fill="#648272"/><rect x="726" y="373" width="2" height="2" fill="#5a7a6a"/><rect x="730" y="373" width="2" height="2" fill="#527466"/><rect x="742" y="373" width="2" height="2" fill="#5a7a6a"/><rect x="746" y="373" width="2" height="2" fill="#527466"/><rect x="748" y="373" width="2" height="2" fill="#5a7a6a"/><rect x="750" y="373" width="2" height="2" fill="#648272"/><rect x="754" y="373" width="2" height="2" fill="#5a7a6a"/><rect x="762" y="373" width="2" height="2" fill="#527466"/><rect x="764" y="373" width="2" height="2" fill="#527466"/><rect x="768" y="373" width="2" height="2" fill="#527466"/><rect x="772" y="373" width="2" height="2" fill="#648272"/><rect x="780" y="373" width="2" height="2" fill="#5a7a6a"/><rect x="790" y="373" width="2" height="2" fill="#527466"/><rect x="796" y="373" width="2" height="2" fill="#527466"/><rect x="800" y="373" width="2" height="2" fill="#5a7a6a"/><rect x="802" y="373" width="2" height="2" fill="#5a7a6a"/><rect x="816" y="373" width="2" height="2" fill="#527466"/><rect x="628" y="375" width="2" height="2" fill="#527466"/><rect x="634" y="375" width="2" height="2" fill="#648272"/><rect x="638" y="375" width="2" height="2" fill="#5a7a6a"/><rect x="642" y="375" width="2" height="2" fill="#648272"/><rect x="646" y="375" width="2" height="2" fill="#648272"/><rect x="648" y="375" width="2" height="2" fill="#527466"/><rect x="650" y="375" width="2" height="2" fill="#648272"/><rect x="662" y="375" width="2" height="2" fill="#648272"/><rect x="664" y="375" width="2" height="2" fill="#648272"/><rect x="666" y="375" width="2" height="2" fill="#648272"/><rect x="668" y="375" width="2" height="2" fill="#527466"/><rect x="670" y="375" width="2" height="2" fill="#648272"/><rect x="674" y="375" width="2" height="2" fill="#5a7a6a"/><rect x="676" y="375" width="2" height="2" fill="#527466"/><rect x="684" y="375" width="2" height="2" fill="#648272"/><rect x="686" y="375" width="2" height="2" fill="#527466"/><rect x="688" y="375" width="2" height="2" fill="#527466"/><rect x="692" y="375" width="2" height="2" fill="#527466"/><rect x="694" y="375" width="2" height="2" fill="#648272"/><rect x="698" y="375" width="2" height="2" fill="#527466"/><rect x="702" y="375" width="2" height="2" fill="#5a7a6a"/><rect x="704" y="375" width="2" height="2" fill="#648272"/><rect x="710" y="375" width="2" height="2" fill="#5a7a6a"/><rect x="714" y="375" width="2" height="2" fill="#527466"/><rect x="722" y="375" width="2" height="2" fill="#5a7a6a"/><rect x="734" y="375" width="2" height="2" fill="#648272"/><rect x="752" y="375" width="2" height="2" fill="#527466"/><rect x="754" y="375" width="2" height="2" fill="#5a7a6a"/><rect x="756" y="375" width="2" height="2" fill="#5a7a6a"/><rect x="762" y="375" width="2" height="2" fill="#527466"/><rect x="770" y="375" width="2" height="2" fill="#648272"/><rect x="774" y="375" width="2" height="2" fill="#5a7a6a"/><rect x="780" y="375" width="2" height="2" fill="#5a7a6a"/><rect x="782" y="375" width="2" height="2" fill="#527466"/><rect x="792" y="375" width="2" height="2" fill="#527466"/><rect x="796" y="375" width="2" height="2" fill="#527466"/><rect x="800" y="375" width="2" height="2" fill="#5a7a6a"/><rect x="806" y="375" width="2" height="2" fill="#5a7a6a"/><rect x="810" y="375" width="2" height="2" fill="#5a7a6a"/><rect x="812" y="375" width="2" height="2" fill="#648272"/><rect x="816" y="375" width="2" height="2" fill="#527466"/><rect x="618" y="377" width="2" height="2" fill="#527466"/><rect x="628" y="377" width="2" height="2" fill="#5a7a6a"/><rect x="630" y="377" width="2" height="2" fill="#648272"/><rect x="634" y="377" width="2" height="2" fill="#5a7a6a"/><rect x="638" y="377" width="2" height="2" fill="#527466"/><rect x="644" y="377" width="2" height="2" fill="#648272"/><rect x="650" y="377" width="2" height="2" fill="#527466"/><rect x="652" y="377" width="2" height="2" fill="#648272"/><rect x="656" y="377" width="2" height="2" fill="#527466"/><rect x="670" y="377" width="2" height="2" fill="#5a7a6a"/><rect x="676" y="377" width="2" height="2" fill="#527466"/><rect x="678" y="377" width="2" height="2" fill="#5a7a6a"/><rect x="682" y="377" width="2" height="2" fill="#648272"/><rect x="684" y="377" width="2" height="2" fill="#648272"/><rect x="688" y="377" width="2" height="2" fill="#648272"/><rect x="690" y="377" width="2" height="2" fill="#527466"/><rect x="698" y="377" width="2" height="2" fill="#527466"/><rect x="704" y="377" width="2" height="2" fill="#5a7a6a"/><rect x="720" y="377" width="2" height="2" fill="#527466"/><rect x="726" y="377" width="2" height="2" fill="#5a7a6a"/><rect x="744" y="377" width="2" height="2" fill="#5a7a6a"/><rect x="750" y="377" width="2" height="2" fill="#527466"/><rect x="756" y="377" width="2" height="2" fill="#527466"/><rect x="762" y="377" width="2" height="2" fill="#5a7a6a"/><rect x="768" y="377" width="2" height="2" fill="#5a7a6a"/><rect x="770" y="377" width="2" height="2" fill="#648272"/><rect x="774" y="377" width="2" height="2" fill="#527466"/><rect x="776" y="377" width="2" height="2" fill="#648272"/><rect x="778" y="377" width="2" height="2" fill="#5a7a6a"/><rect x="782" y="377" width="2" height="2" fill="#648272"/><rect x="794" y="377" width="2" height="2" fill="#648272"/><rect x="808" y="377" width="2" height="2" fill="#648272"/><rect x="812" y="377" width="2" height="2" fill="#5a7a6a"/><rect x="814" y="377" width="2" height="2" fill="#527466"/><rect x="624" y="379" width="2" height="2" fill="#2a7a92"/><rect x="638" y="379" width="2" height="2" fill="#2a7a92"/><rect x="644" y="379" width="2" height="2" fill="#307090"/><rect x="658" y="379" width="2" height="2" fill="#307090"/><rect x="680" y="379" width="2" height="2" fill="#2a7a92"/><rect x="700" y="379" width="2" height="2" fill="#307090"/><rect x="716" y="379" width="2" height="2" fill="#2a7a92"/><rect x="730" y="379" width="2" height="2" fill="#307090"/><rect x="732" y="379" width="2" height="2" fill="#307090"/><rect x="746" y="379" width="2" height="2" fill="#2a7a92"/><rect x="752" y="379" width="2" height="2" fill="#2a7a92"/><rect x="764" y="379" width="2" height="2" fill="#2a7a92"/><rect x="778" y="379" width="2" height="2" fill="#307090"/><rect x="798" y="379" width="2" height="2" fill="#2a7a92"/><rect x="808" y="379" width="2" height="2" fill="#307090"/><rect x="616" y="381" width="2" height="2" fill="#307090"/><rect x="618" y="381" width="2" height="2" fill="#307090"/><rect x="622" y="381" width="2" height="2" fill="#307090"/><rect x="632" y="381" width="2" height="2" fill="#307090"/><rect x="646" y="381" width="2" height="2" fill="#307090"/><rect x="684" y="381" width="2" height="2" fill="#307090"/><rect x="710" y="381" width="2" height="2" fill="#2a7a92"/><rect x="718" y="381" width="2" height="2" fill="#307090"/><rect x="730" y="381" width="2" height="2" fill="#2a7a92"/><rect x="738" y="381" width="2" height="2" fill="#2a7a92"/><rect x="744" y="381" width="2" height="2" fill="#2a7a92"/><rect x="752" y="381" width="2" height="2" fill="#307090"/><rect x="762" y="381" width="2" height="2" fill="#307090"/><rect x="768" y="381" width="2" height="2" fill="#307090"/><rect x="810" y="381" width="2" height="2" fill="#2a7a92"/><rect x="626" y="383" width="2" height="2" fill="#307090"/><rect x="636" y="383" width="2" height="2" fill="#307090"/><rect x="638" y="383" width="2" height="2" fill="#2a7a92"/><rect x="640" y="383" width="2" height="2" fill="#307090"/><rect x="670" y="383" width="2" height="2" fill="#2a7a92"/><rect x="674" y="383" width="2" height="2" fill="#2a7a92"/><rect x="676" y="383" width="2" height="2" fill="#307090"/><rect x="688" y="383" width="2" height="2" fill="#307090"/><rect x="692" y="383" width="2" height="2" fill="#307090"/><rect x="698" y="383" width="2" height="2" fill="#2a7a92"/><rect x="714" y="383" width="2" height="2" fill="#2a7a92"/><rect x="732" y="383" width="2" height="2" fill="#307090"/><rect x="762" y="383" width="2" height="2" fill="#2a7a92"/><rect x="764" y="383" width="2" height="2" fill="#2a7a92"/><rect x="774" y="383" width="2" height="2" fill="#307090"/><rect x="788" y="383" width="2" height="2" fill="#2a7a92"/><rect x="806" y="383" width="2" height="2" fill="#2a7a92"/><rect x="810" y="383" width="2" height="2" fill="#307090"/><rect x="616" y="359" width="202" height="5" fill="#b65c2a"/><rect x="628" y="358" width="2" height="1" fill="#b65c2a"/><rect x="630" y="358" width="2" height="1" fill="#c4682e"/><rect x="632" y="358" width="2" height="1" fill="#b65c2a"/><rect x="634" y="358" width="2" height="1" fill="#c4682e"/><rect x="636" y="357" width="2" height="2" fill="#c4682e"/><rect x="638" y="356" width="2" height="3" fill="#b65c2a"/><rect x="640" y="356" width="2" height="3" fill="#b65c2a"/><rect x="642" y="356" width="2" height="3" fill="#b65c2a"/><rect x="644" y="356" width="2" height="3" fill="#c4682e"/><rect x="646" y="356" width="2" height="3" fill="#c4682e"/><rect x="650" y="357" width="2" height="2" fill="#b65c2a"/><rect x="652" y="357" width="2" height="2" fill="#b65c2a"/><rect x="656" y="358" width="2" height="1" fill="#c4682e"/><rect x="658" y="358" width="2" height="1" fill="#c4682e"/><rect x="660" y="356" width="2" height="3" fill="#c4682e"/><rect x="662" y="358" width="2" height="1" fill="#c4682e"/><rect x="666" y="357" width="2" height="2" fill="#c4682e"/><rect x="668" y="357" width="2" height="2" fill="#b65c2a"/><rect x="670" y="357" width="2" height="2" fill="#c4682e"/><rect x="676" y="357" width="2" height="2" fill="#b65c2a"/><rect x="680" y="357" width="2" height="2" fill="#c4682e"/><rect x="682" y="356" width="2" height="3" fill="#b65c2a"/><rect x="686" y="357" width="2" height="2" fill="#b65c2a"/><rect x="688" y="358" width="2" height="1" fill="#c4682e"/><rect x="690" y="357" width="2" height="2" fill="#c4682e"/><rect x="694" y="357" width="2" height="2" fill="#c4682e"/><rect x="698" y="357" width="2" height="2" fill="#c4682e"/><rect x="700" y="357" width="2" height="2" fill="#c4682e"/><rect x="710" y="356" width="2" height="3" fill="#c4682e"/><rect x="716" y="357" width="2" height="2" fill="#b65c2a"/><rect x="718" y="358" width="2" height="1" fill="#c4682e"/><rect x="722" y="357" width="2" height="2" fill="#b65c2a"/><rect x="726" y="356" width="2" height="3" fill="#b65c2a"/><rect x="728" y="357" width="2" height="2" fill="#b65c2a"/><rect x="730" y="357" width="2" height="2" fill="#c4682e"/><rect x="734" y="358" width="2" height="1" fill="#c4682e"/><rect x="742" y="357" width="2" height="2" fill="#c4682e"/><rect x="746" y="357" width="2" height="2" fill="#c4682e"/><rect x="748" y="356" width="2" height="3" fill="#c4682e"/><rect x="750" y="356" width="2" height="3" fill="#c4682e"/><rect x="754" y="356" width="2" height="3" fill="#c4682e"/><rect x="760" y="356" width="2" height="3" fill="#c4682e"/><rect x="762" y="357" width="2" height="2" fill="#c4682e"/><rect x="764" y="358" width="2" height="1" fill="#b65c2a"/><rect x="772" y="357" width="2" height="2" fill="#b65c2a"/><rect x="786" y="357" width="2" height="2" fill="#c4682e"/><rect x="788" y="357" width="2" height="2" fill="#c4682e"/><rect x="792" y="357" width="2" height="2" fill="#b65c2a"/><rect x="794" y="357" width="2" height="2" fill="#c4682e"/><rect x="802" y="358" width="2" height="1" fill="#c4682e"/><rect x="810" y="358" width="2" height="1" fill="#b65c2a"/><rect x="616" y="359" width="2" height="2" fill="#a85228"/><rect x="628" y="359" width="2" height="2" fill="#a85228"/><rect x="648" y="359" width="2" height="2" fill="#c4682e"/><rect x="690" y="359" width="2" height="2" fill="#c4682e"/><rect x="696" y="359" width="2" height="2" fill="#a85228"/><rect x="700" y="359" width="2" height="2" fill="#a85228"/><rect x="714" y="359" width="2" height="2" fill="#a85228"/><rect x="728" y="359" width="2" height="2" fill="#c4682e"/><rect x="734" y="359" width="2" height="2" fill="#c4682e"/><rect x="740" y="359" width="2" height="2" fill="#a85228"/><rect x="742" y="359" width="2" height="2" fill="#c4682e"/><rect x="752" y="359" width="2" height="2" fill="#a85228"/><rect x="754" y="359" width="2" height="2" fill="#c4682e"/><rect x="814" y="359" width="2" height="2" fill="#c4682e"/><rect x="650" y="361" width="2" height="2" fill="#c4682e"/><rect x="672" y="361" width="2" height="2" fill="#c4682e"/><rect x="698" y="361" width="2" height="2" fill="#a85228"/><rect x="728" y="361" width="2" height="2" fill="#c4682e"/><rect x="740" y="361" width="2" height="2" fill="#c4682e"/><rect x="756" y="361" width="2" height="2" fill="#a85228"/><rect x="762" y="361" width="2" height="2" fill="#c4682e"/><rect x="764" y="361" width="2" height="2" fill="#c4682e"/><rect x="782" y="361" width="2" height="2" fill="#a85228"/><rect x="792" y="361" width="2" height="2" fill="#a85228"/><rect x="628" y="363" width="2" height="2" fill="#a85228"/><rect x="644" y="363" width="2" height="2" fill="#a85228"/><rect x="646" y="363" width="2" height="2" fill="#a85228"/><rect x="672" y="363" width="2" height="2" fill="#a85228"/><rect x="678" y="363" width="2" height="2" fill="#a85228"/><rect x="690" y="363" width="2" height="2" fill="#a85228"/><rect x="692" y="363" width="2" height="2" fill="#a85228"/><rect x="696" y="363" width="2" height="2" fill="#c4682e"/><rect x="698" y="363" width="2" height="2" fill="#a85228"/><rect x="712" y="363" width="2" height="2" fill="#c4682e"/><rect x="726" y="363" width="2" height="2" fill="#c4682e"/><rect x="762" y="363" width="2" height="2" fill="#a85228"/><rect x="774" y="363" width="2" height="2" fill="#c4682e"/><rect x="806" y="363" width="2" height="2" fill="#a85228"/><rect x="808" y="363" width="2" height="2" fill="#a85228"/><rect x="613" y="364" width="211" height="21" fill="rgba(30,165,195,0.55)" fill-opacity="0.18"/><rect x="613" y="364" width="3" height="21" fill="rgba(30,165,195,0.55)"/><rect x="818" y="364" width="6" height="21" fill="rgba(30,165,195,0.55)"/></svg>
<div class="a" style="left:0;top:0;width:1286px;height:761px;isolation:auto">
<div class="a" style="left:253px;top:105px;width:338px;height:198px;background:rgb(50,19,50);mix-blend-mode:screen"></div>
<div class="a" style="left:611px;top:105px;width:341px;height:116px;background:rgb(50,19,50);mix-blend-mode:screen"></div>
<div class="a" style="left:268px;top:376px;width:488px;height:228px;background:rgb(50,19,50);mix-blend-mode:screen"></div>
<div class="a" style="left:437px;top:382px;width:495px;height:229px;background:rgb(50,19,50);mix-blend-mode:screen"></div>
<div class="a" style="left:253px;top:387px;width:92px;height:229px;background:rgb(50,19,50);mix-blend-mode:screen"></div>
<div class="a" style="left:253px;top:557px;width:63px;height:149px;background:rgb(50,19,50);mix-blend-mode:screen"></div>
<div class="a" style="left:437px;top:382px;width:319px;height:222px;background:rgb(255,236,252);mix-blend-mode:multiply"></div>
<div class="a" style="left:253px;top:387px;width:92px;height:217px;background:rgb(255,236,252);mix-blend-mode:multiply"></div>
<div class="a" style="left:253px;top:557px;width:63px;height:59px;background:rgb(255,236,252);mix-blend-mode:multiply"></div>
</div>
<div class="a" style="left:432px;top:105px;width:1px;height:84px;background:#7fa0dc;"></div>
<div class="a" style="left:710px;top:105px;width:1px;height:84px;background:#7fa0dc;"></div>
<div class="a" style="left:499px;top:105px;width:1px;height:27px;background:#7fa0dc;"></div>
<div class="a" style="left:499px;top:166px;width:1px;height:23px;background:#7fa0dc;"></div>
<div class="a" style="left:643px;top:105px;width:1px;height:27px;background:#7fa0dc;"></div>
<div class="a" style="left:643px;top:166px;width:1px;height:23px;background:#7fa0dc;"></div>
<div class="a" style="left:432px;top:188px;width:279px;height:1px;background:#7fa0dc;"></div>
<div class="a" style="left:499px;top:188px;width:145px;height:1px;background:#70c8f0;"></div>
<div class="a" style="left:852px;top:181px;width:1px;height:204px;background:#5ec4dc;"></div>
<div class="a" style="left:919px;top:183px;width:1px;height:202px;background:#5ec4dc;"></div>
<div class="a" style="left:852px;top:384px;width:100px;height:1px;background:#5ec4dc;"></div>
<div class="a" style="left:928px;top:174px;width:24px;height:1px;background:#62c0f0;"></div>
<div class="a" style="left:380px;top:308px;width:347px;height:1px;background:#5ec4dc;"></div>
<div class="a" style="left:380px;top:308px;width:1px;height:21px;background:#5ec4dc;"></div>
<div class="a" style="left:380px;top:362px;width:1px;height:14px;background:#5ec4dc;"></div>
<div class="a" style="left:380px;top:376px;width:1px;height:144px;background:#78a8d8;"></div>
<div class="a" style="left:414px;top:308px;width:1px;height:21px;background:#5ec4dc;"></div>
<div class="a" style="left:414px;top:362px;width:1px;height:14px;background:#5ec4dc;"></div>
<div class="a" style="left:414px;top:376px;width:1px;height:144px;background:#78a8d8;"></div>
<div class="a" style="left:447px;top:308px;width:1px;height:21px;background:#5ec4dc;"></div>
<div class="a" style="left:447px;top:362px;width:1px;height:20px;background:#5ec4dc;"></div>
<div class="a" style="left:447px;top:382px;width:1px;height:138px;background:#7e9ed8;"></div>
<div class="a" style="left:481px;top:308px;width:1px;height:21px;background:#5ec4dc;"></div>
<div class="a" style="left:481px;top:362px;width:1px;height:20px;background:#5ec4dc;"></div>
<div class="a" style="left:481px;top:382px;width:1px;height:138px;background:#7e9ed8;"></div>
<div class="a" style="left:515px;top:308px;width:1px;height:21px;background:#5ec4dc;"></div>
<div class="a" style="left:515px;top:362px;width:1px;height:20px;background:#5ec4dc;"></div>
<div class="a" style="left:515px;top:382px;width:1px;height:138px;background:#7e9ed8;"></div>
<div class="a" style="left:591px;top:308px;width:1px;height:74px;background:#5ec4dc;"></div>
<div class="a" style="left:591px;top:382px;width:1px;height:125px;background:#7e9ed8;"></div>
<div class="a" style="left:624px;top:308px;width:1px;height:50px;background:#5ec4dc;"></div>
<div class="a" style="left:624px;top:391px;width:1px;height:111px;background:#7e9ed8;"></div>
<div class="a" style="left:658px;top:308px;width:1px;height:50px;background:#5ec4dc;"></div>
<div class="a" style="left:658px;top:391px;width:1px;height:89px;background:#7e9ed8;"></div>
<div class="a" style="left:692px;top:308px;width:1px;height:50px;background:#5ec4dc;"></div>
<div class="a" style="left:692px;top:391px;width:1px;height:94px;background:#7e9ed8;"></div>
<div class="a" style="left:726px;top:308px;width:1px;height:50px;background:#5ec4dc;"></div>
<div class="a" style="left:726px;top:391px;width:1px;height:81px;background:#7e9ed8;"></div>
<div class="a" style="left:380px;top:519px;width:125px;height:1px;background:#e6f0f4;"></div>
<div class="a" style="left:380px;top:520px;width:125px;height:1px;background:rgba(120,200,230,0.5);"></div>
<svg style="left:474px;top:403px;" width="24" height="24" viewBox="474 403 24 24"><rect x="475.5" y="403.5" width="21" height="21" fill="#a068a8"/><circle cx="486" cy="414" r="9" fill="#8a7ad0" opacity="0.8"/><path d="M479 414A7 7 0 0 1 486 407V421A7 7 0 0 1 479 414Z" fill="#d8b0a0"/><path d="M486 407A7 7 0 0 1 486 421Z" fill="#c8a0c0"/></svg>
<svg style="left:477px;top:405px;" width="18" height="18" viewBox="477 405 18 18"><path d="M486 406.5v4M486 417.5v4M478.5 414h4M489.5 414h4" stroke="rgba(40,30,40,0.45)" stroke-width="4"/><path d="M486 407v3M486 418v3M479 414h3M490 414h3" stroke="#e2cece" stroke-width="2"/><circle cx="486" cy="414" r="3.6" fill="#e2cece" stroke="rgba(40,30,40,0.45)" stroke-width="1"/></svg>
<svg style="left:508px;top:403px;" width="24" height="24" viewBox="508 403 24 24"><rect x="509.5" y="403.5" width="21" height="21" fill="#a068a8"/><circle cx="520" cy="414" r="9" fill="#8a7ad0" opacity="0.8"/><path d="M513 414A7 7 0 0 1 520 407V421A7 7 0 0 1 513 414Z" fill="#d8b0a0"/><path d="M520 407A7 7 0 0 1 520 421Z" fill="#c8a0c0"/></svg>
<svg style="left:511px;top:405px;" width="18" height="18" viewBox="511 405 18 18"><path d="M520 406.5v4M520 417.5v4M512.5 414h4M523.5 414h4" stroke="rgba(40,30,40,0.45)" stroke-width="4"/><path d="M520 407v3M520 418v3M513 414h3M524 414h3" stroke="#e2cece" stroke-width="2"/><circle cx="520" cy="414" r="3.6" fill="#e2cece" stroke="rgba(40,30,40,0.45)" stroke-width="1"/></svg>
<svg style="left:541px;top:403px;" width="24" height="24" viewBox="541 403 24 24"><rect x="542.5" y="403.5" width="21" height="21" fill="#a068a8"/><circle cx="553" cy="414" r="9" fill="#8a7ad0" opacity="0.8"/><path d="M546 414A7 7 0 0 1 553 407V421A7 7 0 0 1 546 414Z" fill="#d8b0a0"/><path d="M553 407A7 7 0 0 1 553 421Z" fill="#c8a0c0"/></svg>
<svg style="left:544px;top:405px;" width="18" height="18" viewBox="544 405 18 18"><path d="M553 406.5v4M553 417.5v4M545.5 414h4M556.5 414h4" stroke="rgba(40,30,40,0.45)" stroke-width="4"/><path d="M553 407v3M553 418v3M546 414h3M557 414h3" stroke="#e2cece" stroke-width="2"/><circle cx="553" cy="414" r="3.6" fill="#e2cece" stroke="rgba(40,30,40,0.45)" stroke-width="1"/></svg>
<svg style="left:575px;top:403px;" width="24" height="24" viewBox="575 403 24 24"><rect x="576.5" y="403.5" width="21" height="21" fill="#a068a8"/><circle cx="587" cy="414" r="9" fill="#8a7ad0" opacity="0.8"/><path d="M580 414A7 7 0 0 1 587 407V421A7 7 0 0 1 580 414Z" fill="#d8b0a0"/><path d="M587 407A7 7 0 0 1 587 421Z" fill="#c8a0c0"/></svg>
<svg style="left:578px;top:405px;" width="18" height="18" viewBox="578 405 18 18"><path d="M587 406.5v4M587 417.5v4M579.5 414h4M590.5 414h4" stroke="rgba(40,30,40,0.45)" stroke-width="4"/><path d="M587 407v3M587 418v3M580 414h3M591 414h3" stroke="#e2cece" stroke-width="2"/><circle cx="587" cy="414" r="3.6" fill="#e2cece" stroke="rgba(40,30,40,0.45)" stroke-width="1"/></svg>
<svg style="left:609px;top:403px;" width="24" height="24" viewBox="609 403 24 24"><rect x="610.5" y="403.5" width="21" height="21" fill="#a068a8"/><circle cx="621" cy="414" r="9" fill="#8a7ad0" opacity="0.8"/><path d="M614 414A7 7 0 0 1 621 407V421A7 7 0 0 1 614 414Z" fill="#d8b0a0"/><path d="M621 407A7 7 0 0 1 621 421Z" fill="#c8a0c0"/></svg>
<svg style="left:612px;top:405px;" width="18" height="18" viewBox="612 405 18 18"><path d="M621 406.5v4M621 417.5v4M613.5 414h4M624.5 414h4" stroke="rgba(40,30,40,0.45)" stroke-width="4"/><path d="M621 407v3M621 418v3M614 414h3M625 414h3" stroke="#e2cece" stroke-width="2"/><circle cx="621" cy="414" r="3.6" fill="#e2cece" stroke="rgba(40,30,40,0.45)" stroke-width="1"/></svg>
<div class="a" style="left:481px;top:402px;width:1px;height:24px;background:#86a8e8;"></div>
<div class="a" style="left:515px;top:402px;width:1px;height:24px;background:#86a8e8;"></div>
<div class="a" style="left:591px;top:402px;width:1px;height:24px;background:#86a8e8;"></div>
<div class="a" style="left:624px;top:402px;width:1px;height:24px;background:#86a8e8;"></div>
<svg style="left:295px;top:157px;" width="66" height="40" viewBox="295 157 66 40"><clipPath id="ec305"><ellipse cx="327.5" cy="175" rx="24" ry="14.5"/></clipPath><path d="M299 177h9l3 6v8h-12z" fill="#c81222"/><path d="M301 179h3v8h-3z" fill="#ff3040"/><path d="M345 169h6v20h-9z" fill="#8a0a18"/><g clip-path="url(#ec305)"><rect x="303" y="160" width="50" height="16" fill="#55586c"/><rect x="303" y="176" width="50" height="16" fill="#24687a"/><rect x="305" y="161" width="2" height="2" fill="#3a4a5a"/><rect x="317" y="161" width="2" height="2" fill="#7a7a8a"/><rect x="335" y="161" width="2" height="2" fill="#4a5a6a"/><rect x="337" y="161" width="2" height="2" fill="#4a5a6a"/><rect x="345" y="161" width="2" height="2" fill="#7a7a8a"/><rect x="305" y="163" width="2" height="2" fill="#7a7a8a"/><rect x="307" y="163" width="2" height="2" fill="#3a4a5a"/><rect x="311" y="163" width="2" height="2" fill="#4a5a6a"/><rect x="313" y="163" width="2" height="2" fill="#7a7a8a"/><rect x="317" y="163" width="2" height="2" fill="#2a7a8a"/><rect x="323" y="163" width="2" height="2" fill="#4a5a6a"/><rect x="325" y="163" width="2" height="2" fill="#3a4a5a"/><rect x="327" y="163" width="2" height="2" fill="#7a7a8a"/><rect x="331" y="163" width="2" height="2" fill="#2a7a8a"/><rect x="333" y="163" width="2" height="2" fill="#3a4a5a"/><rect x="341" y="163" width="2" height="2" fill="#3a4a5a"/><rect x="347" y="163" width="2" height="2" fill="#6a6478"/><rect x="311" y="165" width="2" height="2" fill="#3a4a5a"/><rect x="313" y="165" width="2" height="2" fill="#3a4a5a"/><rect x="319" y="165" width="2" height="2" fill="#4a5a6a"/><rect x="329" y="165" width="2" height="2" fill="#2a7a8a"/><rect x="333" y="165" width="2" height="2" fill="#6a6478"/><rect x="339" y="165" width="2" height="2" fill="#4a5a6a"/><rect x="315" y="167" width="2" height="2" fill="#4a5a6a"/><rect x="319" y="167" width="2" height="2" fill="#3a4a5a"/><rect x="333" y="167" width="2" height="2" fill="#7a7a8a"/><rect x="341" y="167" width="2" height="2" fill="#4a5a6a"/><rect x="343" y="167" width="2" height="2" fill="#6a6478"/><rect x="347" y="167" width="2" height="2" fill="#7a7a8a"/><rect x="305" y="169" width="2" height="2" fill="#6a6478"/><rect x="311" y="169" width="2" height="2" fill="#4a5a6a"/><rect x="321" y="169" width="2" height="2" fill="#3a4a5a"/><rect x="329" y="169" width="2" height="2" fill="#7a7a8a"/><rect x="331" y="169" width="2" height="2" fill="#2a7a8a"/><rect x="339" y="169" width="2" height="2" fill="#2a7a8a"/><rect x="341" y="169" width="2" height="2" fill="#7a7a8a"/><rect x="345" y="169" width="2" height="2" fill="#3a4a5a"/><rect x="305" y="171" width="2" height="2" fill="#4a5a6a"/><rect x="307" y="171" width="2" height="2" fill="#2a7a8a"/><rect x="309" y="171" width="2" height="2" fill="#3a4a5a"/><rect x="319" y="171" width="2" height="2" fill="#4a5a6a"/><rect x="321" y="171" width="2" height="2" fill="#3a4a5a"/><rect x="329" y="171" width="2" height="2" fill="#3a4a5a"/><rect x="335" y="171" width="2" height="2" fill="#2a7a8a"/><rect x="337" y="171" width="2" height="2" fill="#7a7a8a"/><rect x="345" y="171" width="2" height="2" fill="#4a5a6a"/><rect x="347" y="171" width="2" height="2" fill="#4a5a6a"/><rect x="307" y="173" width="2" height="2" fill="#7a7a8a"/><rect x="311" y="173" width="2" height="2" fill="#6a6478"/><rect x="315" y="173" width="2" height="2" fill="#4a5a6a"/><rect x="317" y="173" width="2" height="2" fill="#4a5a6a"/><rect x="327" y="173" width="2" height="2" fill="#4a5a6a"/><rect x="329" y="173" width="2" height="2" fill="#2a7a8a"/><rect x="337" y="173" width="2" height="2" fill="#2a7a8a"/><rect x="309" y="175" width="2" height="2" fill="#3a4a5a"/><rect x="311" y="175" width="2" height="2" fill="#2a7a8a"/><rect x="313" y="175" width="2" height="2" fill="#2a7a8a"/><rect x="317" y="175" width="2" height="2" fill="#2a7a8a"/><rect x="339" y="175" width="2" height="2" fill="#3a4a5a"/><rect x="341" y="175" width="2" height="2" fill="#2a7a8a"/><rect x="307" y="177" width="2" height="2" fill="#6a6478"/><rect x="317" y="177" width="2" height="2" fill="#6a6478"/><rect x="321" y="177" width="2" height="2" fill="#2a7a8a"/><rect x="341" y="177" width="2" height="2" fill="#4a5a6a"/><rect x="345" y="177" width="2" height="2" fill="#2a7a8a"/><rect x="315" y="179" width="2" height="2" fill="#6a6478"/><rect x="325" y="179" width="2" height="2" fill="#7a7a8a"/><rect x="307" y="181" width="2" height="2" fill="#6a6478"/><rect x="319" y="181" width="2" height="2" fill="#3a4a5a"/><rect x="331" y="181" width="2" height="2" fill="#6a6478"/><rect x="337" y="181" width="2" height="2" fill="#2a7a8a"/><rect x="339" y="181" width="2" height="2" fill="#2a7a8a"/><rect x="349" y="181" width="2" height="2" fill="#3a4a5a"/><rect x="307" y="183" width="2" height="2" fill="#7a7a8a"/><rect x="311" y="183" width="2" height="2" fill="#3a4a5a"/><rect x="319" y="183" width="2" height="2" fill="#2a7a8a"/><rect x="327" y="183" width="2" height="2" fill="#6a6478"/><rect x="331" y="183" width="2" height="2" fill="#2a7a8a"/><rect x="339" y="183" width="2" height="2" fill="#4a5a6a"/><rect x="349" y="183" width="2" height="2" fill="#6a6478"/><rect x="317" y="185" width="2" height="2" fill="#6a6478"/><rect x="321" y="185" width="2" height="2" fill="#7a7a8a"/><rect x="327" y="185" width="2" height="2" fill="#7a7a8a"/><rect x="331" y="185" width="2" height="2" fill="#6a6478"/><rect x="349" y="185" width="2" height="2" fill="#3a4a5a"/><rect x="319" y="187" width="2" height="2" fill="#2a7a8a"/><rect x="325" y="187" width="2" height="2" fill="#6a6478"/><rect x="327" y="187" width="2" height="2" fill="#6a6478"/><rect x="341" y="187" width="2" height="2" fill="#6a6478"/><rect x="345" y="187" width="2" height="2" fill="#4a5a6a"/><rect x="349" y="187" width="2" height="2" fill="#2a7a8a"/><rect x="309" y="189" width="2" height="2" fill="#2a7a8a"/><rect x="311" y="189" width="2" height="2" fill="#2a7a8a"/><rect x="317" y="189" width="2" height="2" fill="#2a7a8a"/><rect x="323" y="189" width="2" height="2" fill="#6a6478"/><rect x="327" y="189" width="2" height="2" fill="#3a4a5a"/><rect x="333" y="189" width="2" height="2" fill="#2a7a8a"/><rect x="347" y="189" width="2" height="2" fill="#6a6478"/><rect x="303" y="168" width="50" height="2" fill="#1e7a88"/></g><rect x="317" y="159" width="19" height="2" fill="#a01020"/><rect x="334" y="173" width="15" height="4" fill="#30a8c0" opacity="0.85"/><rect x="338" y="179" width="4" height="2" fill="#70d0e0" opacity="0.85"/><path d="M302 189h6v4h-6zM309 189h3v4h-3zM320 189h6v4h-6zM329 189h5v4h-5zM342 187h6v4h-6zM350 187h2v5h-2z" fill="#120608"/></svg>
<svg style="left:283px;top:165px;" width="82" height="56" viewBox="283 165 82 56"><path d="M291 167V213M357 167V213" stroke="rgba(40,140,165,0.85)" stroke-width="3"/><polygon points="287,212 295,212 291,217" fill="rgba(40,140,165,0.85)"/><polygon points="353,212 361,212 357,217" fill="rgba(40,140,165,0.85)"/><path d="M289 175.5H359" stroke="rgba(40,140,165,0.85)" stroke-width="2"/><polygon points="286,175.5 291,172.5 291,178.5" fill="rgba(40,140,165,0.85)"/><polygon points="362,175.5 357,172.5 357,178.5" fill="rgba(40,140,165,0.85)"/></svg>
<svg style="left:318px;top:168px;" width="18" height="18" viewBox="318 168 18 18"><path d="M327 169.5v4M327 180.5v4M319.5 177h4M330.5 177h4" stroke="rgba(40,30,40,0.45)" stroke-width="4"/><path d="M327 170v3M327 181v3M320 177h3M331 177h3" stroke="#bdb9bc" stroke-width="2"/><circle cx="327" cy="177" r="3.6" fill="#bdb9bc" stroke="rgba(40,30,40,0.45)" stroke-width="1"/></svg>
<svg style="left:330px;top:154px;" width="18" height="20" viewBox="330 154 18 20"><g transform="translate(332,156)"><path d="M7 1h4v4h-4z" fill="#a4a6e0" opacity="0.8"/><path d="M2 9l5-3l3 3l4-1M8 8l-4 6M10 9l3 5" stroke="#a4a6e0" stroke-width="2" fill="none" opacity="0.8"/></g></svg>
<div class="t" style="left:352px;top:158px;color:#cbbccb">Enemy5</div>
<svg style="left:460px;top:458px;" width="66" height="40" viewBox="460 458 66 40"><clipPath id="ec470"><ellipse cx="492.5" cy="476" rx="24" ry="14.5"/></clipPath><path d="M464 478h9l3 6v8h-12z" fill="#c81222"/><path d="M466 480h3v8h-3z" fill="#ff3040"/><path d="M510 470h6v20h-9z" fill="#8a0a18"/><g clip-path="url(#ec470)"><rect x="468" y="461" width="50" height="16" fill="#55586c"/><rect x="468" y="477" width="50" height="16" fill="#24687a"/><rect x="470" y="462" width="2" height="2" fill="#2a7a8a"/><rect x="472" y="462" width="2" height="2" fill="#3a4a5a"/><rect x="486" y="462" width="2" height="2" fill="#6a6478"/><rect x="494" y="462" width="2" height="2" fill="#2a7a8a"/><rect x="504" y="462" width="2" height="2" fill="#6a6478"/><rect x="506" y="462" width="2" height="2" fill="#3a4a5a"/><rect x="472" y="464" width="2" height="2" fill="#3a4a5a"/><rect x="474" y="464" width="2" height="2" fill="#4a5a6a"/><rect x="478" y="464" width="2" height="2" fill="#7a7a8a"/><rect x="496" y="464" width="2" height="2" fill="#3a4a5a"/><rect x="508" y="464" width="2" height="2" fill="#2a7a8a"/><rect x="512" y="464" width="2" height="2" fill="#6a6478"/><rect x="472" y="466" width="2" height="2" fill="#2a7a8a"/><rect x="476" y="466" width="2" height="2" fill="#2a7a8a"/><rect x="482" y="466" width="2" height="2" fill="#6a6478"/><rect x="484" y="466" width="2" height="2" fill="#2a7a8a"/><rect x="496" y="466" width="2" height="2" fill="#4a5a6a"/><rect x="470" y="468" width="2" height="2" fill="#2a7a8a"/><rect x="472" y="468" width="2" height="2" fill="#4a5a6a"/><rect x="482" y="468" width="2" height="2" fill="#6a6478"/><rect x="496" y="468" width="2" height="2" fill="#4a5a6a"/><rect x="498" y="468" width="2" height="2" fill="#7a7a8a"/><rect x="506" y="468" width="2" height="2" fill="#4a5a6a"/><rect x="474" y="470" width="2" height="2" fill="#2a7a8a"/><rect x="478" y="470" width="2" height="2" fill="#2a7a8a"/><rect x="484" y="470" width="2" height="2" fill="#7a7a8a"/><rect x="490" y="470" width="2" height="2" fill="#2a7a8a"/><rect x="496" y="470" width="2" height="2" fill="#6a6478"/><rect x="506" y="470" width="2" height="2" fill="#2a7a8a"/><rect x="514" y="470" width="2" height="2" fill="#6a6478"/><rect x="470" y="472" width="2" height="2" fill="#6a6478"/><rect x="482" y="472" width="2" height="2" fill="#4a5a6a"/><rect x="484" y="472" width="2" height="2" fill="#2a7a8a"/><rect x="488" y="472" width="2" height="2" fill="#4a5a6a"/><rect x="502" y="472" width="2" height="2" fill="#6a6478"/><rect x="504" y="472" width="2" height="2" fill="#2a7a8a"/><rect x="510" y="472" width="2" height="2" fill="#6a6478"/><rect x="514" y="472" width="2" height="2" fill="#4a5a6a"/><rect x="472" y="474" width="2" height="2" fill="#2a7a8a"/><rect x="482" y="474" width="2" height="2" fill="#3a4a5a"/><rect x="488" y="474" width="2" height="2" fill="#4a5a6a"/><rect x="494" y="474" width="2" height="2" fill="#7a7a8a"/><rect x="500" y="474" width="2" height="2" fill="#6a6478"/><rect x="504" y="474" width="2" height="2" fill="#4a5a6a"/><rect x="480" y="476" width="2" height="2" fill="#4a5a6a"/><rect x="484" y="476" width="2" height="2" fill="#2a7a8a"/><rect x="486" y="476" width="2" height="2" fill="#4a5a6a"/><rect x="494" y="476" width="2" height="2" fill="#4a5a6a"/><rect x="504" y="476" width="2" height="2" fill="#6a6478"/><rect x="512" y="476" width="2" height="2" fill="#6a6478"/><rect x="472" y="478" width="2" height="2" fill="#3a4a5a"/><rect x="476" y="478" width="2" height="2" fill="#3a4a5a"/><rect x="478" y="478" width="2" height="2" fill="#2a7a8a"/><rect x="482" y="478" width="2" height="2" fill="#6a6478"/><rect x="484" y="478" width="2" height="2" fill="#3a4a5a"/><rect x="502" y="478" width="2" height="2" fill="#2a7a8a"/><rect x="504" y="478" width="2" height="2" fill="#6a6478"/><rect x="510" y="478" width="2" height="2" fill="#4a5a6a"/><rect x="512" y="478" width="2" height="2" fill="#6a6478"/><rect x="514" y="478" width="2" height="2" fill="#3a4a5a"/><rect x="478" y="480" width="2" height="2" fill="#6a6478"/><rect x="480" y="480" width="2" height="2" fill="#6a6478"/><rect x="482" y="480" width="2" height="2" fill="#3a4a5a"/><rect x="484" y="480" width="2" height="2" fill="#3a4a5a"/><rect x="490" y="480" width="2" height="2" fill="#4a5a6a"/><rect x="496" y="480" width="2" height="2" fill="#2a7a8a"/><rect x="500" y="480" width="2" height="2" fill="#3a4a5a"/><rect x="504" y="480" width="2" height="2" fill="#7a7a8a"/><rect x="514" y="480" width="2" height="2" fill="#3a4a5a"/><rect x="470" y="482" width="2" height="2" fill="#7a7a8a"/><rect x="478" y="482" width="2" height="2" fill="#7a7a8a"/><rect x="480" y="482" width="2" height="2" fill="#4a5a6a"/><rect x="490" y="482" width="2" height="2" fill="#3a4a5a"/><rect x="492" y="482" width="2" height="2" fill="#6a6478"/><rect x="474" y="484" width="2" height="2" fill="#2a7a8a"/><rect x="478" y="484" width="2" height="2" fill="#4a5a6a"/><rect x="480" y="484" width="2" height="2" fill="#2a7a8a"/><rect x="492" y="484" width="2" height="2" fill="#3a4a5a"/><rect x="500" y="484" width="2" height="2" fill="#6a6478"/><rect x="510" y="484" width="2" height="2" fill="#2a7a8a"/><rect x="474" y="486" width="2" height="2" fill="#7a7a8a"/><rect x="476" y="486" width="2" height="2" fill="#3a4a5a"/><rect x="482" y="486" width="2" height="2" fill="#6a6478"/><rect x="484" y="486" width="2" height="2" fill="#7a7a8a"/><rect x="486" y="486" width="2" height="2" fill="#2a7a8a"/><rect x="488" y="486" width="2" height="2" fill="#3a4a5a"/><rect x="490" y="486" width="2" height="2" fill="#3a4a5a"/><rect x="492" y="486" width="2" height="2" fill="#2a7a8a"/><rect x="498" y="486" width="2" height="2" fill="#6a6478"/><rect x="506" y="486" width="2" height="2" fill="#3a4a5a"/><rect x="514" y="486" width="2" height="2" fill="#4a5a6a"/><rect x="478" y="488" width="2" height="2" fill="#7a7a8a"/><rect x="490" y="488" width="2" height="2" fill="#6a6478"/><rect x="492" y="488" width="2" height="2" fill="#4a5a6a"/><rect x="498" y="488" width="2" height="2" fill="#2a7a8a"/><rect x="506" y="488" width="2" height="2" fill="#2a7a8a"/><rect x="508" y="488" width="2" height="2" fill="#2a7a8a"/><rect x="474" y="490" width="2" height="2" fill="#7a7a8a"/><rect x="476" y="490" width="2" height="2" fill="#6a6478"/><rect x="478" y="490" width="2" height="2" fill="#3a4a5a"/><rect x="484" y="490" width="2" height="2" fill="#2a7a8a"/><rect x="486" y="490" width="2" height="2" fill="#6a6478"/><rect x="494" y="490" width="2" height="2" fill="#3a4a5a"/><rect x="468" y="469" width="50" height="2" fill="#1e7a88"/></g><rect x="482" y="460" width="19" height="2" fill="#a01020"/><rect x="499" y="474" width="15" height="4" fill="#30a8c0" opacity="0.85"/><rect x="503" y="480" width="4" height="2" fill="#70d0e0" opacity="0.85"/><path d="M467 490h6v4h-6zM474 490h3v4h-3zM485 490h6v4h-6zM494 490h5v4h-5zM507 488h6v4h-6zM515 488h2v5h-2z" fill="#120608"/></svg>
<svg style="left:448px;top:466px;" width="82" height="56" viewBox="448 466 82 56"><path d="M456 468V514M522 468V514" stroke="rgba(50,140,180,0.8)" stroke-width="3"/><polygon points="452,513 460,513 456,518" fill="rgba(50,140,180,0.8)"/><polygon points="518,513 526,513 522,518" fill="rgba(50,140,180,0.8)"/><path d="M454 477.5H524" stroke="rgba(50,140,180,0.8)" stroke-width="2"/><polygon points="451,477.5 456,474.5 456,480.5" fill="rgba(50,140,180,0.8)"/><polygon points="527,477.5 522,474.5 522,480.5" fill="rgba(50,140,180,0.8)"/></svg>
<svg style="left:482px;top:469px;" width="18" height="18" viewBox="482 469 18 18"><path d="M491 470.5v4M491 481.5v4M483.5 478h4M494.5 478h4" stroke="rgba(40,30,40,0.45)" stroke-width="4"/><path d="M491 471v3M491 482v3M484 478h3M495 478h3" stroke="#bdb9bc" stroke-width="2"/><circle cx="491" cy="478" r="3.6" fill="#bdb9bc" stroke="rgba(40,30,40,0.45)" stroke-width="1"/></svg>
<svg style="left:635px;top:465px;" width="66" height="40" viewBox="635 465 66 40"><clipPath id="ec645"><ellipse cx="667.5" cy="483" rx="24" ry="14.5"/></clipPath><path d="M639 485h9l3 6v8h-12z" fill="#c81222"/><path d="M641 487h3v8h-3z" fill="#ff3040"/><path d="M685 477h6v20h-9z" fill="#8a0a18"/><g clip-path="url(#ec645)"><rect x="643" y="468" width="50" height="16" fill="#55586c"/><rect x="643" y="484" width="50" height="16" fill="#24687a"/><rect x="645" y="469" width="2" height="2" fill="#4a5a6a"/><rect x="649" y="469" width="2" height="2" fill="#6a6478"/><rect x="657" y="469" width="2" height="2" fill="#2a7a8a"/><rect x="659" y="469" width="2" height="2" fill="#2a7a8a"/><rect x="661" y="469" width="2" height="2" fill="#3a4a5a"/><rect x="667" y="469" width="2" height="2" fill="#6a6478"/><rect x="679" y="469" width="2" height="2" fill="#7a7a8a"/><rect x="649" y="471" width="2" height="2" fill="#6a6478"/><rect x="657" y="471" width="2" height="2" fill="#6a6478"/><rect x="659" y="471" width="2" height="2" fill="#6a6478"/><rect x="663" y="471" width="2" height="2" fill="#3a4a5a"/><rect x="665" y="471" width="2" height="2" fill="#3a4a5a"/><rect x="673" y="471" width="2" height="2" fill="#3a4a5a"/><rect x="677" y="471" width="2" height="2" fill="#7a7a8a"/><rect x="679" y="471" width="2" height="2" fill="#4a5a6a"/><rect x="681" y="471" width="2" height="2" fill="#7a7a8a"/><rect x="685" y="471" width="2" height="2" fill="#4a5a6a"/><rect x="689" y="471" width="2" height="2" fill="#6a6478"/><rect x="645" y="473" width="2" height="2" fill="#3a4a5a"/><rect x="651" y="473" width="2" height="2" fill="#2a7a8a"/><rect x="653" y="473" width="2" height="2" fill="#7a7a8a"/><rect x="663" y="473" width="2" height="2" fill="#6a6478"/><rect x="667" y="473" width="2" height="2" fill="#4a5a6a"/><rect x="677" y="473" width="2" height="2" fill="#3a4a5a"/><rect x="687" y="473" width="2" height="2" fill="#2a7a8a"/><rect x="645" y="475" width="2" height="2" fill="#2a7a8a"/><rect x="647" y="475" width="2" height="2" fill="#2a7a8a"/><rect x="657" y="475" width="2" height="2" fill="#6a6478"/><rect x="665" y="475" width="2" height="2" fill="#3a4a5a"/><rect x="669" y="475" width="2" height="2" fill="#6a6478"/><rect x="677" y="475" width="2" height="2" fill="#2a7a8a"/><rect x="681" y="475" width="2" height="2" fill="#3a4a5a"/><rect x="685" y="475" width="2" height="2" fill="#7a7a8a"/><rect x="649" y="477" width="2" height="2" fill="#7a7a8a"/><rect x="661" y="477" width="2" height="2" fill="#7a7a8a"/><rect x="663" y="477" width="2" height="2" fill="#4a5a6a"/><rect x="665" y="477" width="2" height="2" fill="#7a7a8a"/><rect x="671" y="477" width="2" height="2" fill="#2a7a8a"/><rect x="677" y="477" width="2" height="2" fill="#4a5a6a"/><rect x="679" y="477" width="2" height="2" fill="#2a7a8a"/><rect x="683" y="477" width="2" height="2" fill="#2a7a8a"/><rect x="685" y="477" width="2" height="2" fill="#2a7a8a"/><rect x="687" y="477" width="2" height="2" fill="#3a4a5a"/><rect x="651" y="479" width="2" height="2" fill="#4a5a6a"/><rect x="657" y="479" width="2" height="2" fill="#6a6478"/><rect x="659" y="479" width="2" height="2" fill="#7a7a8a"/><rect x="669" y="479" width="2" height="2" fill="#2a7a8a"/><rect x="681" y="479" width="2" height="2" fill="#4a5a6a"/><rect x="645" y="481" width="2" height="2" fill="#2a7a8a"/><rect x="659" y="481" width="2" height="2" fill="#3a4a5a"/><rect x="665" y="481" width="2" height="2" fill="#3a4a5a"/><rect x="679" y="481" width="2" height="2" fill="#7a7a8a"/><rect x="685" y="481" width="2" height="2" fill="#6a6478"/><rect x="651" y="483" width="2" height="2" fill="#6a6478"/><rect x="657" y="483" width="2" height="2" fill="#6a6478"/><rect x="659" y="483" width="2" height="2" fill="#3a4a5a"/><rect x="663" y="483" width="2" height="2" fill="#2a7a8a"/><rect x="665" y="483" width="2" height="2" fill="#6a6478"/><rect x="667" y="483" width="2" height="2" fill="#7a7a8a"/><rect x="669" y="483" width="2" height="2" fill="#2a7a8a"/><rect x="679" y="483" width="2" height="2" fill="#2a7a8a"/><rect x="685" y="483" width="2" height="2" fill="#7a7a8a"/><rect x="689" y="483" width="2" height="2" fill="#6a6478"/><rect x="651" y="485" width="2" height="2" fill="#7a7a8a"/><rect x="655" y="485" width="2" height="2" fill="#3a4a5a"/><rect x="663" y="485" width="2" height="2" fill="#6a6478"/><rect x="665" y="485" width="2" height="2" fill="#6a6478"/><rect x="667" y="485" width="2" height="2" fill="#7a7a8a"/><rect x="669" y="485" width="2" height="2" fill="#6a6478"/><rect x="673" y="485" width="2" height="2" fill="#7a7a8a"/><rect x="679" y="485" width="2" height="2" fill="#7a7a8a"/><rect x="681" y="485" width="2" height="2" fill="#4a5a6a"/><rect x="689" y="485" width="2" height="2" fill="#6a6478"/><rect x="651" y="487" width="2" height="2" fill="#3a4a5a"/><rect x="653" y="487" width="2" height="2" fill="#4a5a6a"/><rect x="655" y="487" width="2" height="2" fill="#3a4a5a"/><rect x="657" y="487" width="2" height="2" fill="#7a7a8a"/><rect x="665" y="487" width="2" height="2" fill="#4a5a6a"/><rect x="673" y="487" width="2" height="2" fill="#4a5a6a"/><rect x="675" y="487" width="2" height="2" fill="#7a7a8a"/><rect x="677" y="487" width="2" height="2" fill="#7a7a8a"/><rect x="679" y="487" width="2" height="2" fill="#7a7a8a"/><rect x="685" y="487" width="2" height="2" fill="#7a7a8a"/><rect x="687" y="487" width="2" height="2" fill="#2a7a8a"/><rect x="647" y="489" width="2" height="2" fill="#2a7a8a"/><rect x="659" y="489" width="2" height="2" fill="#7a7a8a"/><rect x="671" y="489" width="2" height="2" fill="#2a7a8a"/><rect x="675" y="489" width="2" height="2" fill="#6a6478"/><rect x="677" y="489" width="2" height="2" fill="#2a7a8a"/><rect x="647" y="491" width="2" height="2" fill="#6a6478"/><rect x="649" y="491" width="2" height="2" fill="#7a7a8a"/><rect x="651" y="491" width="2" height="2" fill="#3a4a5a"/><rect x="653" y="491" width="2" height="2" fill="#4a5a6a"/><rect x="655" y="491" width="2" height="2" fill="#4a5a6a"/><rect x="659" y="491" width="2" height="2" fill="#6a6478"/><rect x="677" y="491" width="2" height="2" fill="#7a7a8a"/><rect x="681" y="491" width="2" height="2" fill="#3a4a5a"/><rect x="689" y="491" width="2" height="2" fill="#6a6478"/><rect x="647" y="493" width="2" height="2" fill="#6a6478"/><rect x="649" y="493" width="2" height="2" fill="#7a7a8a"/><rect x="651" y="493" width="2" height="2" fill="#3a4a5a"/><rect x="653" y="493" width="2" height="2" fill="#6a6478"/><rect x="657" y="493" width="2" height="2" fill="#6a6478"/><rect x="665" y="493" width="2" height="2" fill="#6a6478"/><rect x="673" y="493" width="2" height="2" fill="#7a7a8a"/><rect x="677" y="493" width="2" height="2" fill="#3a4a5a"/><rect x="685" y="493" width="2" height="2" fill="#4a5a6a"/><rect x="647" y="495" width="2" height="2" fill="#2a7a8a"/><rect x="655" y="495" width="2" height="2" fill="#7a7a8a"/><rect x="657" y="495" width="2" height="2" fill="#3a4a5a"/><rect x="665" y="495" width="2" height="2" fill="#6a6478"/><rect x="671" y="495" width="2" height="2" fill="#6a6478"/><rect x="685" y="495" width="2" height="2" fill="#4a5a6a"/><rect x="687" y="495" width="2" height="2" fill="#4a5a6a"/><rect x="645" y="497" width="2" height="2" fill="#6a6478"/><rect x="649" y="497" width="2" height="2" fill="#3a4a5a"/><rect x="651" y="497" width="2" height="2" fill="#6a6478"/><rect x="655" y="497" width="2" height="2" fill="#6a6478"/><rect x="657" y="497" width="2" height="2" fill="#4a5a6a"/><rect x="661" y="497" width="2" height="2" fill="#2a7a8a"/><rect x="669" y="497" width="2" height="2" fill="#2a7a8a"/><rect x="671" y="497" width="2" height="2" fill="#7a7a8a"/><rect x="683" y="497" width="2" height="2" fill="#2a7a8a"/><rect x="687" y="497" width="2" height="2" fill="#3a4a5a"/><rect x="643" y="476" width="50" height="2" fill="#1e7a88"/></g><rect x="657" y="467" width="19" height="2" fill="#a01020"/><rect x="674" y="481" width="15" height="4" fill="#30a8c0" opacity="0.85"/><rect x="678" y="487" width="4" height="2" fill="#70d0e0" opacity="0.85"/><path d="M642 497h6v4h-6zM649 497h3v4h-3zM660 497h6v4h-6zM669 497h5v4h-5zM682 495h6v4h-6zM690 495h2v5h-2z" fill="#120608"/></svg>
<svg style="left:624px;top:473px;" width="82" height="56" viewBox="624 473 82 56"><path d="M632 475V521M698 475V521" stroke="rgba(50,140,180,0.8)" stroke-width="3"/><polygon points="628,520 636,520 632,525" fill="rgba(50,140,180,0.8)"/><polygon points="694,520 702,520 698,525" fill="rgba(50,140,180,0.8)"/><path d="M630 486H700" stroke="rgba(50,140,180,0.8)" stroke-width="2"/><polygon points="627,486 632,483 632,489" fill="rgba(50,140,180,0.8)"/><polygon points="703,486 698,483 698,489" fill="rgba(50,140,180,0.8)"/></svg>
<svg style="left:658px;top:477px;" width="18" height="18" viewBox="658 477 18 18"><path d="M667 478.5v4M667 489.5v4M659.5 486h4M670.5 486h4" stroke="rgba(40,30,40,0.45)" stroke-width="4"/><path d="M667 479v3M667 490v3M660 486h3M671 486h3" stroke="#bdb9bc" stroke-width="2"/><circle cx="667" cy="486" r="3.6" fill="#bdb9bc" stroke="rgba(40,30,40,0.45)" stroke-width="1"/></svg>
<svg style="left:320px;top:237px;" width="14" height="30" viewBox="320 237 14 30"><path d="M327 237V260" stroke="#2a9fd6" stroke-width="3"/><polygon points="321.5,259 332.5,259 327,265" fill="#2a9fd6"/></svg>
<svg style="left:317px;top:241px;" width="18" height="18" viewBox="317 241 18 18"><path d="M326 242.5v4M326 253.5v4M318.5 250h4M329.5 250h4" stroke="rgba(40,30,40,0.45)" stroke-width="4"/><path d="M326 243v3M326 254v3M319 250h3M330 250h3" stroke="#bdb9bc" stroke-width="2"/><circle cx="326" cy="250" r="3.6" fill="#bdb9bc" stroke="rgba(40,30,40,0.45)" stroke-width="1"/></svg>
<svg style="left:555px;top:150px;" width="14" height="30" viewBox="555 150 14 30"><path d="M562 150V173" stroke="#2a9fd6" stroke-width="3"/><polygon points="556.5,172 567.5,172 562,178" fill="#2a9fd6"/></svg>
<svg style="left:551px;top:155px;" width="18" height="18" viewBox="551 155 18 18"><path d="M560 156.5v4M560 167.5v4M552.5 164h4M563.5 164h4" stroke="rgba(40,30,40,0.45)" stroke-width="4"/><path d="M560 157v3M560 168v3M553 164h3M564 164h3" stroke="#bdb9bc" stroke-width="2"/><circle cx="560" cy="164" r="3.6" fill="#bdb9bc" stroke="rgba(40,30,40,0.45)" stroke-width="1"/></svg>
<svg style="left:458px;top:348px;" width="14" height="29" viewBox="458 348 14 29"><path d="M465 348V370" stroke="#18a0c8" stroke-width="3"/><polygon points="459.5,369 470.5,369 465,375" fill="#18a0c8"/></svg>
<svg style="left:455px;top:351px;" width="18" height="18" viewBox="455 351 18 18"><path d="M464 352.5v4M464 363.5v4M456.5 360h4M467.5 360h4" stroke="rgba(40,30,40,0.45)" stroke-width="4"/><path d="M464 353v3M464 364v3M457 360h3M468 360h3" stroke="#bdb9bc" stroke-width="2"/><circle cx="464" cy="360" r="3.6" fill="#bdb9bc" stroke="rgba(40,30,40,0.45)" stroke-width="1"/></svg>
<svg style="left:711px;top:376px;" width="14" height="29" viewBox="711 376 14 29"><path d="M718 376V398" stroke="#3a90e0" stroke-width="3"/><polygon points="712.5,397 723.5,397 718,403" fill="#3a90e0"/></svg>
<svg style="left:708px;top:380px;" width="18" height="18" viewBox="708 380 18 18"><path d="M717 381.5v4M717 392.5v4M709.5 389h4M720.5 389h4" stroke="rgba(40,30,40,0.45)" stroke-width="4"/><path d="M717 382v3M717 393v3M710 389h3M721 389h3" stroke="#bdb9bc" stroke-width="2"/><circle cx="717" cy="389" r="3.6" fill="#bdb9bc" stroke="rgba(40,30,40,0.45)" stroke-width="1"/></svg>
<svg style="left:799px;top:120px;" width="14" height="19" viewBox="799 120 14 19"><path d="M806 120V132" stroke="#4a8a98" stroke-width="3"/><polygon points="800.5,131 811.5,131 806,137" fill="#4a8a98"/></svg>
<svg style="left:865px;top:120px;" width="14" height="19" viewBox="865 120 14 19"><path d="M872 120V132" stroke="#4a8a98" stroke-width="3"/><polygon points="866.5,131 877.5,131 872,137" fill="#4a8a98"/></svg>
<svg style="left:826px;top:143px;" width="18" height="18" viewBox="826 143 18 18"><path d="M835 144.5v4M835 155.5v4M827.5 152h4M838.5 152h4" stroke="rgba(90,30,50,0.6)" stroke-width="4"/><path d="M835 145v3M835 156v3M828 152h3M839 152h3" stroke="#dcb0b8" stroke-width="2"/><circle cx="835" cy="152" r="3.6" fill="#dcb0b8" stroke="rgba(90,30,50,0.6)" stroke-width="1"/></svg>
<svg style="left:594px;top:524px;" width="18" height="18" viewBox="594 524 18 18"><path d="M603 525.5v4M603 536.5v4M595.5 533h4M606.5 533h4" stroke="rgba(90,30,50,0.6)" stroke-width="4"/><path d="M603 526v3M603 537v3M596 533h3M607 533h3" stroke="#dcb0b8" stroke-width="2"/><circle cx="603" cy="533" r="3.6" fill="#dcb0b8" stroke="rgba(90,30,50,0.6)" stroke-width="1"/></svg>
<div class="a" style="left:0;top:0;width:1286px;height:761px;transform-origin:764px 491px;transform:rotate(-35deg)">
<svg style="left:755px;top:482px;" width="18" height="18" viewBox="755 482 18 18"><path d="M764 483.5v4M764 494.5v4M756.5 491h4M767.5 491h4" stroke="rgba(90,30,50,0.6)" stroke-width="4"/><path d="M764 484v3M764 495v3M757 491h3M768 491h3" stroke="#dcb0b8" stroke-width="2"/><circle cx="764" cy="491" r="3.6" fill="#dcb0b8" stroke="rgba(90,30,50,0.6)" stroke-width="1"/></svg>
</div>
<svg style="left:932px;top:447px;" width="18" height="18" viewBox="932 447 18 18"><path d="M941 448.5v4M941 459.5v4M933.5 456h4M944.5 456h4" stroke="rgba(90,30,50,0.6)" stroke-width="4"/><path d="M941 449v3M941 460v3M934 456h3M945 456h3" stroke="#dcb0b8" stroke-width="2"/><circle cx="941" cy="456" r="3.6" fill="#dcb0b8" stroke="rgba(90,30,50,0.6)" stroke-width="1"/></svg>
<div class="a" style="left:371px;top:218px;width:2px;height:2px;background:#ff80ff;"></div>
<div class="a" style="left:606px;top:130px;width:2px;height:2px;background:#ff80ff;"></div>
<div class="a" style="left:511px;top:326px;width:2px;height:2px;background:#ff80ff;"></div>
<div class="a" style="left:513px;top:330px;width:2px;height:2px;background:#ff80ff;"></div>
<div class="a" style="left:764px;top:356px;width:2px;height:2px;background:#ff80ff;"></div>
<div class="a" style="left:766px;top:359px;width:2px;height:2px;background:#ff80ff;"></div>
<div class="a" style="left:797px;top:448px;width:2px;height:2px;background:#ff80ff;"></div>
<div class="a" style="left:534px;top:519px;width:2px;height:2px;background:#ff80ff;"></div>
<div class="a" style="left:540px;top:522px;width:2px;height:2px;background:#ff80ff;"></div>
<div class="a" style="left:368px;top:519px;width:2px;height:2px;background:#ff80ff;"></div>
<div class="a" style="left:373px;top:521px;width:2px;height:2px;background:#ff80ff;"></div>
<div class="a" style="left:946px;top:269px;width:6px;height:20px;background:#8a6a8a;"></div>
<div class="a" style="left:948px;top:274px;width:4px;height:10px;background:#5a9a80;"></div>
<svg style="left:253px;top:105px;" width="699" height="601" viewBox="253 105 699 601"><rect x="253" y="105" width="699" height="15" fill="#1d212b"/><rect x="253" y="105" width="15" height="601" fill="#1d212b"/><rect x="254" y="106" width="14" height="14" fill="#787c84"/><rect x="281" y="116" width="1" height="4" fill="#a4a8ae"/><rect x="307" y="116" width="1" height="4" fill="#a4a8ae"/><rect x="333" y="116" width="1" height="4" fill="#a4a8ae"/><rect x="264" y="133" width="4" height="1" fill="#a4a8ae"/><rect x="359" y="106" width="1" height="14" fill="#a4a8ae"/><rect x="254" y="159" width="14" height="1" fill="#a4a8ae"/><rect x="386" y="116" width="1" height="4" fill="#a4a8ae"/><rect x="264" y="185" width="4" height="1" fill="#a4a8ae"/><rect x="412" y="116" width="1" height="4" fill="#a4a8ae"/><rect x="264" y="211" width="4" height="1" fill="#a4a8ae"/><rect x="438" y="116" width="1" height="4" fill="#a4a8ae"/><rect x="264" y="238" width="4" height="1" fill="#a4a8ae"/><rect x="464" y="116" width="1" height="4" fill="#a4a8ae"/><rect x="264" y="264" width="4" height="1" fill="#a4a8ae"/><rect x="491" y="110" width="1" height="10" fill="#a4a8ae"/><rect x="258" y="290" width="10" height="1" fill="#a4a8ae"/><rect x="517" y="116" width="1" height="4" fill="#a4a8ae"/><rect x="264" y="316" width="4" height="1" fill="#a4a8ae"/><rect x="543" y="116" width="1" height="4" fill="#a4a8ae"/><rect x="264" y="343" width="4" height="1" fill="#a4a8ae"/><rect x="569" y="116" width="1" height="4" fill="#a4a8ae"/><rect x="264" y="369" width="4" height="1" fill="#a4a8ae"/><rect x="596" y="116" width="1" height="4" fill="#a4a8ae"/><rect x="264" y="395" width="4" height="1" fill="#a4a8ae"/><rect x="622" y="106" width="1" height="14" fill="#a4a8ae"/><rect x="254" y="421" width="14" height="1" fill="#a4a8ae"/><rect x="648" y="116" width="1" height="4" fill="#a4a8ae"/><rect x="264" y="448" width="4" height="1" fill="#a4a8ae"/><rect x="674" y="116" width="1" height="4" fill="#a4a8ae"/><rect x="264" y="474" width="4" height="1" fill="#a4a8ae"/><rect x="701" y="116" width="1" height="4" fill="#a4a8ae"/><rect x="264" y="500" width="4" height="1" fill="#a4a8ae"/><rect x="727" y="116" width="1" height="4" fill="#a4a8ae"/><rect x="264" y="526" width="4" height="1" fill="#a4a8ae"/><rect x="753" y="110" width="1" height="10" fill="#a4a8ae"/><rect x="258" y="553" width="10" height="1" fill="#a4a8ae"/><rect x="779" y="116" width="1" height="4" fill="#a4a8ae"/><rect x="264" y="579" width="4" height="1" fill="#a4a8ae"/><rect x="805" y="116" width="1" height="4" fill="#a4a8ae"/><rect x="264" y="605" width="4" height="1" fill="#a4a8ae"/><rect x="832" y="116" width="1" height="4" fill="#a4a8ae"/><rect x="264" y="631" width="4" height="1" fill="#a4a8ae"/><rect x="858" y="116" width="1" height="4" fill="#a4a8ae"/><rect x="264" y="658" width="4" height="1" fill="#a4a8ae"/><rect x="884" y="106" width="1" height="14" fill="#a4a8ae"/><rect x="254" y="684" width="14" height="1" fill="#a4a8ae"/><rect x="910" y="116" width="1" height="4" fill="#a4a8ae"/><rect x="937" y="116" width="1" height="4" fill="#a4a8ae"/></svg>
<div class="t" style="left:361px;top:107px;font-size:10px;line-height:10px;color:#c2c5ca;letter-spacing:-0.4px">1000</div>
<div class="t" style="left:624px;top:107px;font-size:10px;line-height:10px;color:#c2c5ca;letter-spacing:-0.4px">1250</div>
<div class="t" style="left:886px;top:107px;font-size:10px;line-height:10px;color:#c2c5ca;letter-spacing:-0.4px">1500</div>
<div class="t" style="left:256px;top:158px;font-size:10px;line-height:10px;color:#c2c5ca;transform-origin:0 0;transform:rotate(-90deg);letter-spacing:-0.4px">750</div>
<div class="t" style="left:256px;top:420px;font-size:10px;line-height:10px;color:#c2c5ca;transform-origin:0 0;transform:rotate(-90deg);letter-spacing:-0.4px">1000</div>
<div class="t" style="left:256px;top:683px;font-size:10px;line-height:10px;color:#c2c5ca;transform-origin:0 0;transform:rotate(-90deg);letter-spacing:-0.4px">1250</div>
<svg style="left:278px;top:129px;" width="18" height="18" viewBox="278 129 18 18"><circle cx="287" cy="138" r="7.5" fill="#e2e0e2" stroke="#3a2c3a" stroke-width="1.2"/><rect x="282.5" y="136.8" width="9" height="2.4" fill="#2a2028"/></svg>
<svg style="left:310px;top:129px;" width="18" height="18" viewBox="310 129 18 18"><circle cx="319" cy="138" r="7.5" fill="#e2e0e2" stroke="#3a2c3a" stroke-width="1.2"/><path d="M316.2 135l2.8-1.6v9.2" stroke="#2a2028" stroke-width="2.4" fill="none"/></svg>
<svg style="left:342px;top:129px;" width="18" height="18" viewBox="342 129 18 18"><circle cx="351" cy="138" r="7.5" fill="#e2e0e2" stroke="#3a2c3a" stroke-width="1.2"/><rect x="346.5" y="136.8" width="9" height="2.4" fill="#2a2028"/><rect x="349.8" y="133.5" width="2.4" height="9" fill="#2a2028"/></svg>
<div class="a" style="left:448px;top:698px;width:87px;height:4px;background:#888888;border-radius:2px"></div>
<div class="a" style="left:944px;top:315px;width:4px;height:69px;background:#888888;border-radius:2px"></div>
<div class="a" style="left:253px;top:105px;width:699px;height:601px;border:1px solid #a4a9b0"></div>
</div></div>
<div class="a" style="left:252px;top:717px;width:701px;height:34px;background:#333b4f;"></div>
<div class="t" style="left:262px;top:727px;">Output</div>
<div class="t" style="left:323px;top:727px;">Debugger</div>
<div class="t" style="left:403px;top:727px;">Audio</div>
<div class="t" style="left:456px;top:727px;">Animation</div>
<div class="a" style="left:963px;top:44px;width:57px;height:28px;background:#333b4f;"></div>
<div class="a" style="left:1020px;top:44px;width:65px;height:28px;background:#292f3f;"></div>
<div class="t" style="left:972px;top:50px;">Scene</div>
<div class="t" style="left:1031px;top:50px;color:#80848d;">Import</div>
<svg style="left:1270px;top:49px" width="5" height="16" viewBox="0 0 5 16"><circle cx="2.5" cy="2.5" r="2.2" fill="#8b8e96"/><circle cx="2.5" cy="8.2" r="2.2" fill="#8b8e96"/><circle cx="2.5" cy="13.9" r="2.2" fill="#8b8e96"/></svg>
<div class="a" style="left:963px;top:72px;width:316px;height:320px;background:#333b4f;"></div>
<svg style="left:974px;top:82px" width="14" height="14" viewBox="0 0 14 14"><path d="M7.0 0v14M0 7.0h14" stroke="#e0e0e0" stroke-width="2.2"/></svg>
<svg style="left:1006px;top:82px" width="14" height="14" viewBox="0 0 14 14"><path d="M5.5 8.5l3-3" stroke="#e0e0e0" stroke-width="1.8"/><path d="M6 4l2-2a2.5 2.5 0 0 1 4 4l-2 2M8 10l-2 2a2.5 2.5 0 0 1-4-4l2-2" fill="none" stroke="#e0e0e0" stroke-width="1.8"/></svg>
<div class="a" style="left:1031px;top:76px;width:212px;height:26px;background:#252a39;border:1px solid #1f2330"></div>
<div class="t" style="left:1038px;top:82px;color:#8e9198;">Filter nodes</div>
<svg style="left:1222px;top:82px" width="14" height="14" viewBox="0 0 14 14"><circle cx="5.5" cy="5.5" r="4.3" fill="none" stroke="#e0e0e0" stroke-width="2.2"/><path d="M8.5 8.5l4.5 4.5" stroke="#e0e0e0" stroke-width="2.6"/></svg>
<svg style="left:1254px;top:81px" width="16" height="16" viewBox="0 0 16 16"><path d="M4 0h8a2 2 0 0 1 0 4h-2v6l-2 2v2h-6a1.5 1.5 0 0 1 0-3h1v-9a2 2 0 0 1 2-2z" fill="#e0e0e0"/><path d="M9 10l5 5M14 10l-5 5" stroke="#ff5f5f" stroke-width="1.8"/></svg>
<div class="a" style="left:967px;top:106px;width:308px;height:282px;background:#262c3b;border:1px solid #1f2330"></div>
<div class="a" style="left:1268px;top:113px;width:4px;height:38px;background:#50545e;border-radius:2px"></div>
<svg style="left:973px;top:121px" width="9" height="6" viewBox="0 0 9 6"><polyline points="1,1 4.5,4.5 8,1" fill="none" stroke="#878b93" stroke-width="1.8"/></svg>
<svg style="left:985px;top:117px" width="12" height="12" viewBox="0 0 12 12"><circle cx="6.0" cy="6.0" r="5.0" fill="none" stroke="#e0e0e0" stroke-width="2"/></svg>
<div class="t" style="left:1003px;top:116px;">Stage</div>
<div class="a" style="left:976px;top:136px;width:1px;height:252px;background:#3e4350;"></div>
<div class="a" style="left:977px;top:149px;width:18px;height:1px;background:#3e4350;"></div>
<svg style="left:996px;top:142px" width="14" height="14" viewBox="0 0 14 14"><rect x="0" y="0" width="2" height="2" fill="#a5b7f3"/><rect x="0" y="3" width="2" height="2" fill="#a5b7f3"/><rect x="0" y="6" width="2" height="2" fill="#a5b7f3"/><rect x="0" y="9" width="2" height="2" fill="#a5b7f3"/><rect x="0" y="12" width="2" height="2" fill="#a5b7f3"/><rect x="3" y="0" width="2" height="2" fill="#a5b7f3"/><rect x="3" y="3" width="2" height="2" fill="#a5b7f3"/><rect x="3" y="6" width="2" height="2" fill="#a5b7f3"/><rect x="3" y="9" width="2" height="2" fill="#a5b7f3"/><rect x="3" y="12" width="2" height="2" fill="#a5b7f3"/><rect x="6" y="0" width="2" height="2" fill="#a5b7f3"/><rect x="6" y="3" width="2" height="2" fill="#a5b7f3"/><rect x="6" y="6" width="2" height="2" fill="#a5b7f3"/><rect x="6" y="9" width="2" height="2" fill="#a5b7f3"/><rect x="6" y="12" width="2" height="2" fill="#a5b7f3"/><rect x="9" y="0" width="2" height="2" fill="#a5b7f3"/><rect x="9" y="3" width="2" height="2" fill="#a5b7f3"/><rect x="9" y="6" width="2" height="2" fill="#a5b7f3"/><rect x="9" y="9" width="2" height="2" fill="#a5b7f3"/><rect x="9" y="12" width="2" height="2" fill="#a5b7f3"/><rect x="12" y="0" width="2" height="2" fill="#a5b7f3"/><rect x="12" y="3" width="2" height="2" fill="#a5b7f3"/><rect x="12" y="6" width="2" height="2" fill="#a5b7f3"/><rect x="12" y="9" width="2" height="2" fill="#a5b7f3"/><rect x="12" y="12" width="2" height="2" fill="#a5b7f3"/></svg>
<div class="t" style="left:1016px;top:142px;">TileMap</div>
<svg style="left:1217px;top:142px" width="13" height="14" viewBox="0 0 13 14"><path d="M3 6.5v-2.5a3.5 3.5 0 0 1 7 0v2.5" fill="none" stroke="#e0e0e0" stroke-width="2"/><path d="M0 6h13v8h-13z" fill="#e0e0e0"/><rect x="5.5" y="8.5" width="2" height="3" fill="#262c3b"/></svg>
<svg style="left:1240px;top:143px" width="14" height="12" viewBox="0 0 14 12"><path d="M0.8 6C2.5 0.8 11.5 0.8 13.2 6C11.5 11.2 2.5 11.2 0.8 6Z" fill="none" stroke="#e0e0e0" stroke-width="2.3"/><circle cx="7" cy="6" r="2.4" fill="#e0e0e0"/></svg>
<div class="a" style="left:977px;top:175px;width:8px;height:1px;background:#3e4350;"></div>
<svg style="left:985px;top:173px" width="9" height="6" viewBox="0 0 9 6"><polyline points="1,1 4.5,4.5 8,1" fill="none" stroke="#878b93" stroke-width="1.8"/></svg>
<svg style="left:997px;top:169px" width="12" height="12" viewBox="0 0 12 12"><circle cx="6.0" cy="6.0" r="5.0" fill="none" stroke="#e0e0e0" stroke-width="2"/></svg>
<div class="t" style="left:1015px;top:168px;">Coins</div>
<div class="a" style="left:989px;top:188px;width:1px;height:200px;background:#3e4350;"></div>
<div class="a" style="left:1007px;top:188px;width:156px;height:26px;background:#50545f;border:1px solid #6a6e78"></div>
<div class="a" style="left:990px;top:201px;width:17px;height:1px;background:#3e4350;"></div>
<svg style="left:1008px;top:193px" width="14" height="14" viewBox="0 0 14 14"><path d="M0 0h4v2h-2v2h-2zM10 0h4v4h-2v-2h-2zM0 10h2v2h2v2h-4zM12 10h2v4h-4v-2h2z" fill="#a5b7f3"/><rect x="4" y="4" width="6" height="6" fill="none" stroke="#a5b7f3" stroke-width="2"/></svg>
<div class="t" style="left:1027px;top:194px;color:#f2f2f2;">Coin1</div>
<svg style="left:1169px;top:195px" width="12" height="12" viewBox="0 0 12 12"><circle cx="2" cy="10" r="2" fill="#e0e0e0"/><path d="M0.5 5.5a6 6 0 0 1 6 6" fill="none" stroke="#e0e0e0" stroke-width="2"/><path d="M0.5 1a10.5 10.5 0 0 1 10.5 10.5" fill="none" stroke="#e0e0e0" stroke-width="2"/></svg>
<svg style="left:1192px;top:195px" width="15" height="13" viewBox="0 0 15 13"><path d="M0 1l2-0.3v2h-2zM3.5 0.5l2-0.3v2h-2zM7 0.2l2-0.2v2h-2zM10.5 0l2.5-0.2v2h-2.5z" fill="#e0e0e0"/><path d="M0 4h14v8.5h-14z" fill="#e0e0e0"/><polygon points="4,7 10,7 7,10" fill="#262c3b"/></svg>
<svg style="left:1216px;top:195px" width="14" height="14" viewBox="0 0 14 14"><path d="M5 0H12A2 2 0 0 1 14 2V4H10V12A2 2 0 0 1 8 14H2A2 2 0 0 1 0 12V10H3V2A2 2 0 0 1 5 0Z" fill="#e0e0e0"/><path d="M5.5 1.5h2v3h-2z" fill="#9a9ca2" opacity="0.6"/><path d="M1 11h2v2h-1z" fill="#9a9ca2" opacity="0.5"/></svg>
<svg style="left:1240px;top:196px" width="14" height="12" viewBox="0 0 14 12"><path d="M0.8 6C2.5 0.8 11.5 0.8 13.2 6C11.5 11.2 2.5 11.2 0.8 6Z" fill="none" stroke="#e0e0e0" stroke-width="2.3"/><circle cx="7" cy="6" r="2.4" fill="#e0e0e0"/></svg>
<div class="a" style="left:990px;top:227px;width:17px;height:1px;background:#3e4350;"></div>
<svg style="left:1008px;top:219px" width="14" height="14" viewBox="0 0 14 14"><path d="M0 0h4v2h-2v2h-2zM10 0h4v4h-2v-2h-2zM0 10h2v2h2v2h-4zM12 10h2v4h-4v-2h2z" fill="#a5b7f3"/><rect x="4" y="4" width="6" height="6" fill="none" stroke="#a5b7f3" stroke-width="2"/></svg>
<div class="t" style="left:1027px;top:220px;">Coin2</div>
<svg style="left:1169px;top:221px" width="12" height="12" viewBox="0 0 12 12"><circle cx="2" cy="10" r="2" fill="#e0e0e0"/><path d="M0.5 5.5a6 6 0 0 1 6 6" fill="none" stroke="#e0e0e0" stroke-width="2"/><path d="M0.5 1a10.5 10.5 0 0 1 10.5 10.5" fill="none" stroke="#e0e0e0" stroke-width="2"/></svg>
<svg style="left:1192px;top:221px" width="15" height="13" viewBox="0 0 15 13"><path d="M0 1l2-0.3v2h-2zM3.5 0.5l2-0.3v2h-2zM7 0.2l2-0.2v2h-2zM10.5 0l2.5-0.2v2h-2.5z" fill="#e0e0e0"/><path d="M0 4h14v8.5h-14z" fill="#e0e0e0"/><polygon points="4,7 10,7 7,10" fill="#262c3b"/></svg>
<svg style="left:1216px;top:221px" width="14" height="14" viewBox="0 0 14 14"><path d="M5 0H12A2 2 0 0 1 14 2V4H10V12A2 2 0 0 1 8 14H2A2 2 0 0 1 0 12V10H3V2A2 2 0 0 1 5 0Z" fill="#e0e0e0"/><path d="M5.5 1.5h2v3h-2z" fill="#9a9ca2" opacity="0.6"/><path d="M1 11h2v2h-1z" fill="#9a9ca2" opacity="0.5"/></svg>
<svg style="left:1240px;top:222px" width="14" height="12" viewBox="0 0 14 12"><path d="M0.8 6C2.5 0.8 11.5 0.8 13.2 6C11.5 11.2 2.5 11.2 0.8 6Z" fill="none" stroke="#e0e0e0" stroke-width="2.3"/><circle cx="7" cy="6" r="2.4" fill="#e0e0e0"/></svg>
<div class="a" style="left:990px;top:253px;width:17px;height:1px;background:#3e4350;"></div>
<svg style="left:1008px;top:245px" width="14" height="14" viewBox="0 0 14 14"><path d="M0 0h4v2h-2v2h-2zM10 0h4v4h-2v-2h-2zM0 10h2v2h2v2h-4zM12 10h2v4h-4v-2h2z" fill="#a5b7f3"/><rect x="4" y="4" width="6" height="6" fill="none" stroke="#a5b7f3" stroke-width="2"/></svg>
<div class="t" style="left:1027px;top:246px;">Coin3</div>
<svg style="left:1169px;top:247px" width="12" height="12" viewBox="0 0 12 12"><circle cx="2" cy="10" r="2" fill="#e0e0e0"/><path d="M0.5 5.5a6 6 0 0 1 6 6" fill="none" stroke="#e0e0e0" stroke-width="2"/><path d="M0.5 1a10.5 10.5 0 0 1 10.5 10.5" fill="none" stroke="#e0e0e0" stroke-width="2"/></svg>
<svg style="left:1192px;top:247px" width="15" height="13" viewBox="0 0 15 13"><path d="M0 1l2-0.3v2h-2zM3.5 0.5l2-0.3v2h-2zM7 0.2l2-0.2v2h-2zM10.5 0l2.5-0.2v2h-2.5z" fill="#e0e0e0"/><path d="M0 4h14v8.5h-14z" fill="#e0e0e0"/><polygon points="4,7 10,7 7,10" fill="#262c3b"/></svg>
<svg style="left:1216px;top:247px" width="14" height="14" viewBox="0 0 14 14"><path d="M5 0H12A2 2 0 0 1 14 2V4H10V12A2 2 0 0 1 8 14H2A2 2 0 0 1 0 12V10H3V2A2 2 0 0 1 5 0Z" fill="#e0e0e0"/><path d="M5.5 1.5h2v3h-2z" fill="#9a9ca2" opacity="0.6"/><path d="M1 11h2v2h-1z" fill="#9a9ca2" opacity="0.5"/></svg>
<svg style="left:1240px;top:248px" width="14" height="12" viewBox="0 0 14 12"><path d="M0.8 6C2.5 0.8 11.5 0.8 13.2 6C11.5 11.2 2.5 11.2 0.8 6Z" fill="none" stroke="#e0e0e0" stroke-width="2.3"/><circle cx="7" cy="6" r="2.4" fill="#e0e0e0"/></svg>
<div class="a" style="left:990px;top:279px;width:17px;height:1px;background:#3e4350;"></div>
<svg style="left:1008px;top:271px" width="14" height="14" viewBox="0 0 14 14"><path d="M0 0h4v2h-2v2h-2zM10 0h4v4h-2v-2h-2zM0 10h2v2h2v2h-4zM12 10h2v4h-4v-2h2z" fill="#a5b7f3"/><rect x="4" y="4" width="6" height="6" fill="none" stroke="#a5b7f3" stroke-width="2"/></svg>
<div class="t" style="left:1027px;top:272px;">Coin4</div>
<svg style="left:1169px;top:273px" width="12" height="12" viewBox="0 0 12 12"><circle cx="2" cy="10" r="2" fill="#e0e0e0"/><path d="M0.5 5.5a6 6 0 0 1 6 6" fill="none" stroke="#e0e0e0" stroke-width="2"/><path d="M0.5 1a10.5 10.5 0 0 1 10.5 10.5" fill="none" stroke="#e0e0e0" stroke-width="2"/></svg>
<svg style="left:1192px;top:273px" width="15" height="13" viewBox="0 0 15 13"><path d="M0 1l2-0.3v2h-2zM3.5 0.5l2-0.3v2h-2zM7 0.2l2-0.2v2h-2zM10.5 0l2.5-0.2v2h-2.5z" fill="#e0e0e0"/><path d="M0 4h14v8.5h-14z" fill="#e0e0e0"/><polygon points="4,7 10,7 7,10" fill="#262c3b"/></svg>
<svg style="left:1216px;top:273px" width="14" height="14" viewBox="0 0 14 14"><path d="M5 0H12A2 2 0 0 1 14 2V4H10V12A2 2 0 0 1 8 14H2A2 2 0 0 1 0 12V10H3V2A2 2 0 0 1 5 0Z" fill="#e0e0e0"/><path d="M5.5 1.5h2v3h-2z" fill="#9a9ca2" opacity="0.6"/><path d="M1 11h2v2h-1z" fill="#9a9ca2" opacity="0.5"/></svg>
<svg style="left:1240px;top:274px" width="14" height="12" viewBox="0 0 14 12"><path d="M0.8 6C2.5 0.8 11.5 0.8 13.2 6C11.5 11.2 2.5 11.2 0.8 6Z" fill="none" stroke="#e0e0e0" stroke-width="2.3"/><circle cx="7" cy="6" r="2.4" fill="#e0e0e0"/></svg>
<div class="a" style="left:990px;top:305px;width:17px;height:1px;background:#3e4350;"></div>
<svg style="left:1008px;top:297px" width="14" height="14" viewBox="0 0 14 14"><path d="M0 0h4v2h-2v2h-2zM10 0h4v4h-2v-2h-2zM0 10h2v2h2v2h-4zM12 10h2v4h-4v-2h2z" fill="#a5b7f3"/><rect x="4" y="4" width="6" height="6" fill="none" stroke="#a5b7f3" stroke-width="2"/></svg>
<div class="t" style="left:1027px;top:298px;">Coin5</div>
<svg style="left:1169px;top:299px" width="12" height="12" viewBox="0 0 12 12"><circle cx="2" cy="10" r="2" fill="#e0e0e0"/><path d="M0.5 5.5a6 6 0 0 1 6 6" fill="none" stroke="#e0e0e0" stroke-width="2"/><path d="M0.5 1a10.5 10.5 0 0 1 10.5 10.5" fill="none" stroke="#e0e0e0" stroke-width="2"/></svg>
<svg style="left:1192px;top:299px" width="15" height="13" viewBox="0 0 15 13"><path d="M0 1l2-0.3v2h-2zM3.5 0.5l2-0.3v2h-2zM7 0.2l2-0.2v2h-2zM10.5 0l2.5-0.2v2h-2.5z" fill="#e0e0e0"/><path d="M0 4h14v8.5h-14z" fill="#e0e0e0"/><polygon points="4,7 10,7 7,10" fill="#262c3b"/></svg>
<svg style="left:1216px;top:299px" width="14" height="14" viewBox="0 0 14 14"><path d="M5 0H12A2 2 0 0 1 14 2V4H10V12A2 2 0 0 1 8 14H2A2 2 0 0 1 0 12V10H3V2A2 2 0 0 1 5 0Z" fill="#e0e0e0"/><path d="M5.5 1.5h2v3h-2z" fill="#9a9ca2" opacity="0.6"/><path d="M1 11h2v2h-1z" fill="#9a9ca2" opacity="0.5"/></svg>
<svg style="left:1240px;top:300px" width="14" height="12" viewBox="0 0 14 12"><path d="M0.8 6C2.5 0.8 11.5 0.8 13.2 6C11.5 11.2 2.5 11.2 0.8 6Z" fill="none" stroke="#e0e0e0" stroke-width="2.3"/><circle cx="7" cy="6" r="2.4" fill="#e0e0e0"/></svg>
<div class="a" style="left:990px;top:331px;width:17px;height:1px;background:#3e4350;"></div>
<svg style="left:1008px;top:323px" width="14" height="14" viewBox="0 0 14 14"><path d="M0 0h4v2h-2v2h-2zM10 0h4v4h-2v-2h-2zM0 10h2v2h2v2h-4zM12 10h2v4h-4v-2h2z" fill="#a5b7f3"/><rect x="4" y="4" width="6" height="6" fill="none" stroke="#a5b7f3" stroke-width="2"/></svg>
<div class="t" style="left:1027px;top:324px;">Coin6</div>
<svg style="left:1169px;top:325px" width="12" height="12" viewBox="0 0 12 12"><circle cx="2" cy="10" r="2" fill="#e0e0e0"/><path d="M0.5 5.5a6 6 0 0 1 6 6" fill="none" stroke="#e0e0e0" stroke-width="2"/><path d="M0.5 1a10.5 10.5 0 0 1 10.5 10.5" fill="none" stroke="#e0e0e0" stroke-width="2"/></svg>
<svg style="left:1192px;top:325px" width="15" height="13" viewBox="0 0 15 13"><path d="M0 1l2-0.3v2h-2zM3.5 0.5l2-0.3v2h-2zM7 0.2l2-0.2v2h-2zM10.5 0l2.5-0.2v2h-2.5z" fill="#e0e0e0"/><path d="M0 4h14v8.5h-14z" fill="#e0e0e0"/><polygon points="4,7 10,7 7,10" fill="#262c3b"/></svg>
<svg style="left:1216px;top:325px" width="14" height="14" viewBox="0 0 14 14"><path d="M5 0H12A2 2 0 0 1 14 2V4H10V12A2 2 0 0 1 8 14H2A2 2 0 0 1 0 12V10H3V2A2 2 0 0 1 5 0Z" fill="#e0e0e0"/><path d="M5.5 1.5h2v3h-2z" fill="#9a9ca2" opacity="0.6"/><path d="M1 11h2v2h-1z" fill="#9a9ca2" opacity="0.5"/></svg>
<svg style="left:1240px;top:326px" width="14" height="12" viewBox="0 0 14 12"><path d="M0.8 6C2.5 0.8 11.5 0.8 13.2 6C11.5 11.2 2.5 11.2 0.8 6Z" fill="none" stroke="#e0e0e0" stroke-width="2.3"/><circle cx="7" cy="6" r="2.4" fill="#e0e0e0"/></svg>
<div class="a" style="left:990px;top:357px;width:17px;height:1px;background:#3e4350;"></div>
<svg style="left:1008px;top:349px" width="14" height="14" viewBox="0 0 14 14"><path d="M0 0h4v2h-2v2h-2zM10 0h4v4h-2v-2h-2zM0 10h2v2h2v2h-4zM12 10h2v4h-4v-2h2z" fill="#a5b7f3"/><rect x="4" y="4" width="6" height="6" fill="none" stroke="#a5b7f3" stroke-width="2"/></svg>
<div class="t" style="left:1027px;top:350px;">Coin7</div>
<svg style="left:1169px;top:351px" width="12" height="12" viewBox="0 0 12 12"><circle cx="2" cy="10" r="2" fill="#e0e0e0"/><path d="M0.5 5.5a6 6 0 0 1 6 6" fill="none" stroke="#e0e0e0" stroke-width="2"/><path d="M0.5 1a10.5 10.5 0 0 1 10.5 10.5" fill="none" stroke="#e0e0e0" stroke-width="2"/></svg>
<svg style="left:1192px;top:351px" width="15" height="13" viewBox="0 0 15 13"><path d="M0 1l2-0.3v2h-2zM3.5 0.5l2-0.3v2h-2zM7 0.2l2-0.2v2h-2zM10.5 0l2.5-0.2v2h-2.5z" fill="#e0e0e0"/><path d="M0 4h14v8.5h-14z" fill="#e0e0e0"/><polygon points="4,7 10,7 7,10" fill="#262c3b"/></svg>
<svg style="left:1216px;top:351px" width="14" height="14" viewBox="0 0 14 14"><path d="M5 0H12A2 2 0 0 1 14 2V4H10V12A2 2 0 0 1 8 14H2A2 2 0 0 1 0 12V10H3V2A2 2 0 0 1 5 0Z" fill="#e0e0e0"/><path d="M5.5 1.5h2v3h-2z" fill="#9a9ca2" opacity="0.6"/><path d="M1 11h2v2h-1z" fill="#9a9ca2" opacity="0.5"/></svg>
<svg style="left:1240px;top:352px" width="14" height="12" viewBox="0 0 14 12"><path d="M0.8 6C2.5 0.8 11.5 0.8 13.2 6C11.5 11.2 2.5 11.2 0.8 6Z" fill="none" stroke="#e0e0e0" stroke-width="2.3"/><circle cx="7" cy="6" r="2.4" fill="#e0e0e0"/></svg>
<div class="a" style="left:990px;top:383px;width:17px;height:1px;background:#3e4350;"></div>
<svg style="left:1008px;top:375px" width="14" height="14" viewBox="0 0 14 14"><path d="M0 0h4v2h-2v2h-2zM10 0h4v4h-2v-2h-2zM0 10h2v2h2v2h-4zM12 10h2v4h-4v-2h2z" fill="#a5b7f3"/><rect x="4" y="4" width="6" height="6" fill="none" stroke="#a5b7f3" stroke-width="2"/></svg>
<div class="t" style="left:1027px;top:376px;">Coin8</div>
<svg style="left:1169px;top:377px" width="12" height="12" viewBox="0 0 12 12"><circle cx="2" cy="10" r="2" fill="#e0e0e0"/><path d="M0.5 5.5a6 6 0 0 1 6 6" fill="none" stroke="#e0e0e0" stroke-width="2"/><path d="M0.5 1a10.5 10.5 0 0 1 10.5 10.5" fill="none" stroke="#e0e0e0" stroke-width="2"/></svg>
<svg style="left:1192px;top:377px" width="15" height="13" viewBox="0 0 15 13"><path d="M0 1l2-0.3v2h-2zM3.5 0.5l2-0.3v2h-2zM7 0.2l2-0.2v2h-2zM10.5 0l2.5-0.2v2h-2.5z" fill="#e0e0e0"/><path d="M0 4h14v8.5h-14z" fill="#e0e0e0"/><polygon points="4,7 10,7 7,10" fill="#262c3b"/></svg>
<svg style="left:1216px;top:377px" width="14" height="14" viewBox="0 0 14 14"><path d="M5 0H12A2 2 0 0 1 14 2V4H10V12A2 2 0 0 1 8 14H2A2 2 0 0 1 0 12V10H3V2A2 2 0 0 1 5 0Z" fill="#e0e0e0"/><path d="M5.5 1.5h2v3h-2z" fill="#9a9ca2" opacity="0.6"/><path d="M1 11h2v2h-1z" fill="#9a9ca2" opacity="0.5"/></svg>
<svg style="left:1240px;top:378px" width="14" height="12" viewBox="0 0 14 12"><path d="M0.8 6C2.5 0.8 11.5 0.8 13.2 6C11.5 11.2 2.5 11.2 0.8 6Z" fill="none" stroke="#e0e0e0" stroke-width="2.3"/><circle cx="7" cy="6" r="2.4" fill="#e0e0e0"/></svg>
<div class="a" style="left:967px;top:388px;width:308px;height:4px;background:#333b4f;"></div>
<div class="a" style="left:963px;top:402px;width:80px;height:28px;background:#333b4f;"></div>
<div class="t" style="left:972px;top:408px;">Inspector</div>
<svg style="left:1270px;top:407px" width="5" height="16" viewBox="0 0 5 16"><circle cx="2.5" cy="2.5" r="2.2" fill="#8b8e96"/><circle cx="2.5" cy="8.2" r="2.2" fill="#8b8e96"/><circle cx="2.5" cy="13.9" r="2.2" fill="#8b8e96"/></svg>
<div class="a" style="left:963px;top:430px;width:316px;height:321px;background:#333b4f;"></div>
<svg style="left:974px;top:440px" width="14" height="15" viewBox="0 0 14 15"><path d="M0 0h7l4 4v11h-11z" fill="#e0e0e0"/><path d="M7 0v4h4" fill="#333b4f"/><path d="M10.5 8v6M7.5 11h6" stroke="#7cf09a" stroke-width="2.2"/></svg>
<svg style="left:1006px;top:440px" width="14" height="14" viewBox="0 0 14 14"><path d="M0 2a1.5 1.5 0 0 1 1.5-1.5h3l1.5 2h5v2h-8l-2 8z" fill="#e0e0e0"/><path d="M3 5.5h11l-1.8 8h-11z" fill="#e0e0e0"/></svg>
<svg style="left:1038px;top:440px" width="14" height="14" viewBox="0 0 14 14"><path d="M1 0h10l3 3v10a1 1 0 0 1-1 1h-12a1 1 0 0 1-1-1v-12a1 1 0 0 1 1-1z" fill="#7b7f88"/><rect x="3" y="0" width="7" height="4" fill="#333b4f"/><rect x="6" y="0" width="2" height="4" fill="#7b7f88"/><circle cx="7" cy="9" r="2" fill="#333b4f"/></svg>
<svg style="left:1206px;top:440px" width="7" height="13" viewBox="0 0 7 13"><polyline points="6,0.5 1.5,6.5 6,12.5" fill="none" stroke="#e0e0e0" stroke-width="1.6"/></svg>
<svg style="left:1229px;top:440px" width="7" height="13" viewBox="0 0 7 13"><polyline points="1,0.5 5.5,6.5 1,12.5" fill="none" stroke="#7b7f88" stroke-width="1.6"/></svg>
<svg style="left:1254px;top:441px" width="15" height="14" viewBox="0 0 15 14"><path d="M4.5 10.5A5.8 5.8 0 1 0 3.5 5" fill="none" stroke="#e0e0e0" stroke-width="2"/><polygon points="0,4 6,4 3,8" fill="#e0e0e0"/><path d="M9 4v3h3" fill="none" stroke="#e0e0e0" stroke-width="1.6"/></svg>
<svg style="left:974px;top:470px" width="14" height="14" viewBox="0 0 14 14"><path d="M0 0h4v2h-2v2h-2zM10 0h4v4h-2v-2h-2zM0 10h2v2h2v2h-4zM12 10h2v4h-4v-2h2z" fill="#a5b7f3"/><rect x="4" y="4" width="6" height="6" fill="none" stroke="#a5b7f3" stroke-width="2"/></svg>
<div class="t" style="left:993px;top:470px;">Coin1</div>
<svg style="left:1255px;top:470px" width="13" height="14" viewBox="0 0 13 14"><path d="M2.5 0v7" stroke="#e0e0e0" stroke-width="1.4"/><path d="M0 8h5v4a2.5 2.5 0 0 1-5 0z" fill="#e0e0e0"/><path d="M9.5 5v9" stroke="#e0e0e0" stroke-width="2"/><path d="M7 0v3a2.5 2.5 0 0 0 5 0v-3" fill="none" stroke="#e0e0e0" stroke-width="1.6"/></svg>
<div class="a" style="left:967px;top:494px;width:308px;height:26px;background:#252a39;border:1px solid #1f2330"></div>
<div class="t" style="left:974px;top:500px;color:#8e9198;">Filter properties</div>
<svg style="left:1255px;top:500px" width="14" height="14" viewBox="0 0 14 14"><circle cx="5.5" cy="5.5" r="4.3" fill="none" stroke="#e0e0e0" stroke-width="2.2"/><path d="M8.5 8.5l4.5 4.5" stroke="#e0e0e0" stroke-width="2.6"/></svg>
<div class="a" style="left:967px;top:524px;width:308px;height:222px;background:#262c3b;border:1px solid #1f2330"></div>
<div class="a" style="left:1267px;top:528px;width:4px;height:75px;background:#50545e;border-radius:2px"></div>
<div class="a" style="left:971px;top:528px;width:288px;height:22px;background:#41475a;"></div>
<svg style="left:1082px;top:532px" width="14" height="14" viewBox="0 0 14 14"><path d="M0 0h4v2h-2v2h-2zM10 0h4v4h-2v-2h-2zM0 10h2v2h2v2h-4zM12 10h2v4h-4v-2h2z" fill="#a5b7f3"/><rect x="4" y="4" width="6" height="6" fill="none" stroke="#a5b7f3" stroke-width="2"/></svg>
<div class="t" style="left:1100px;top:532px;">Area2D</div>
<div class="t" style="left:971px;top:556px;">Space Override</div>
<div class="a" style="left:1115px;top:551px;width:144px;height:25px;background:#1f2430;"></div>
<div class="t" style="left:1126px;top:557px;">Disabled</div>
<svg style="left:1243px;top:560px" width="11" height="7" viewBox="0 0 11 7"><polyline points="1,1 5.5,5.5 10,1" fill="none" stroke="#e0e0e0" stroke-width="1.8"/></svg>
<div class="t" style="left:971px;top:586px;">Gravity Point</div>
<div class="a" style="left:1115px;top:580px;width:144px;height:26px;background:#20252f;"></div>
<div class="a" style="left:1120px;top:586px;width:14px;height:14px;background:#484d59;border-radius:2px"></div>
<div class="t" style="left:1139px;top:586px;">On</div>
<div class="t" style="left:971px;top:616px;">Gravity Distance Scal</div>
<div class="a" style="left:1115px;top:610px;width:144px;height:26px;background:#20252f;"></div>
<div class="t" style="left:1131px;top:616px;">0</div>
<div class="a" style="left:1121px;top:632px;width:128px;height:2px;background:#5a5e68;"></div>
<div class="t" style="left:971px;top:644px;">Gravity Vec</div>
<div class="a" style="left:971px;top:662px;width:144px;height:25px;background:#20252f;"></div>
<div class="a" style="left:971px;top:662px;width:19px;height:25px;background:#1b1f29;"></div>
<div class="a" style="left:1117px;top:662px;width:142px;height:25px;background:#20252f;"></div>
<div class="a" style="left:1117px;top:662px;width:19px;height:25px;background:#1b1f29;"></div>
<div class="t" style="left:977px;top:668px;color:#c58670;">x</div>
<div class="t" style="left:995px;top:668px;">0</div>
<div class="t" style="left:1122px;top:668px;color:#7fb27f;">y</div>
<div class="t" style="left:1141px;top:668px;">1</div>
<div class="t" style="left:971px;top:698px;">Gravity</div>
<div class="a" style="left:1115px;top:692px;width:144px;height:26px;background:#20252f;"></div>
<div class="t" style="left:1131px;top:698px;">98</div>
<div class="a" style="left:1121px;top:714px;width:128px;height:2px;background:#5a5e68;"></div>
<div class="a" style="left:1192px;top:713px;width:4px;height:3px;background:#e0e0e0;"></div>
<div class="t" style="left:971px;top:728px;">Linear Damp</div>
<div class="a" style="left:1115px;top:722px;width:144px;height:26px;background:#20252f;"></div>
<div class="t" style="left:1131px;top:728px;">0.1</div>
<div class="a" style="left:1121px;top:744px;width:128px;height:2px;background:#5a5e68;"></div>
<div class="a" style="left:1121px;top:743px;width:4px;height:3px;background:#e0e0e0;"></div>
<div class="a" style="left:967px;top:746px;width:308px;height:5px;background:#333b4f;"></div>
</body></html>
